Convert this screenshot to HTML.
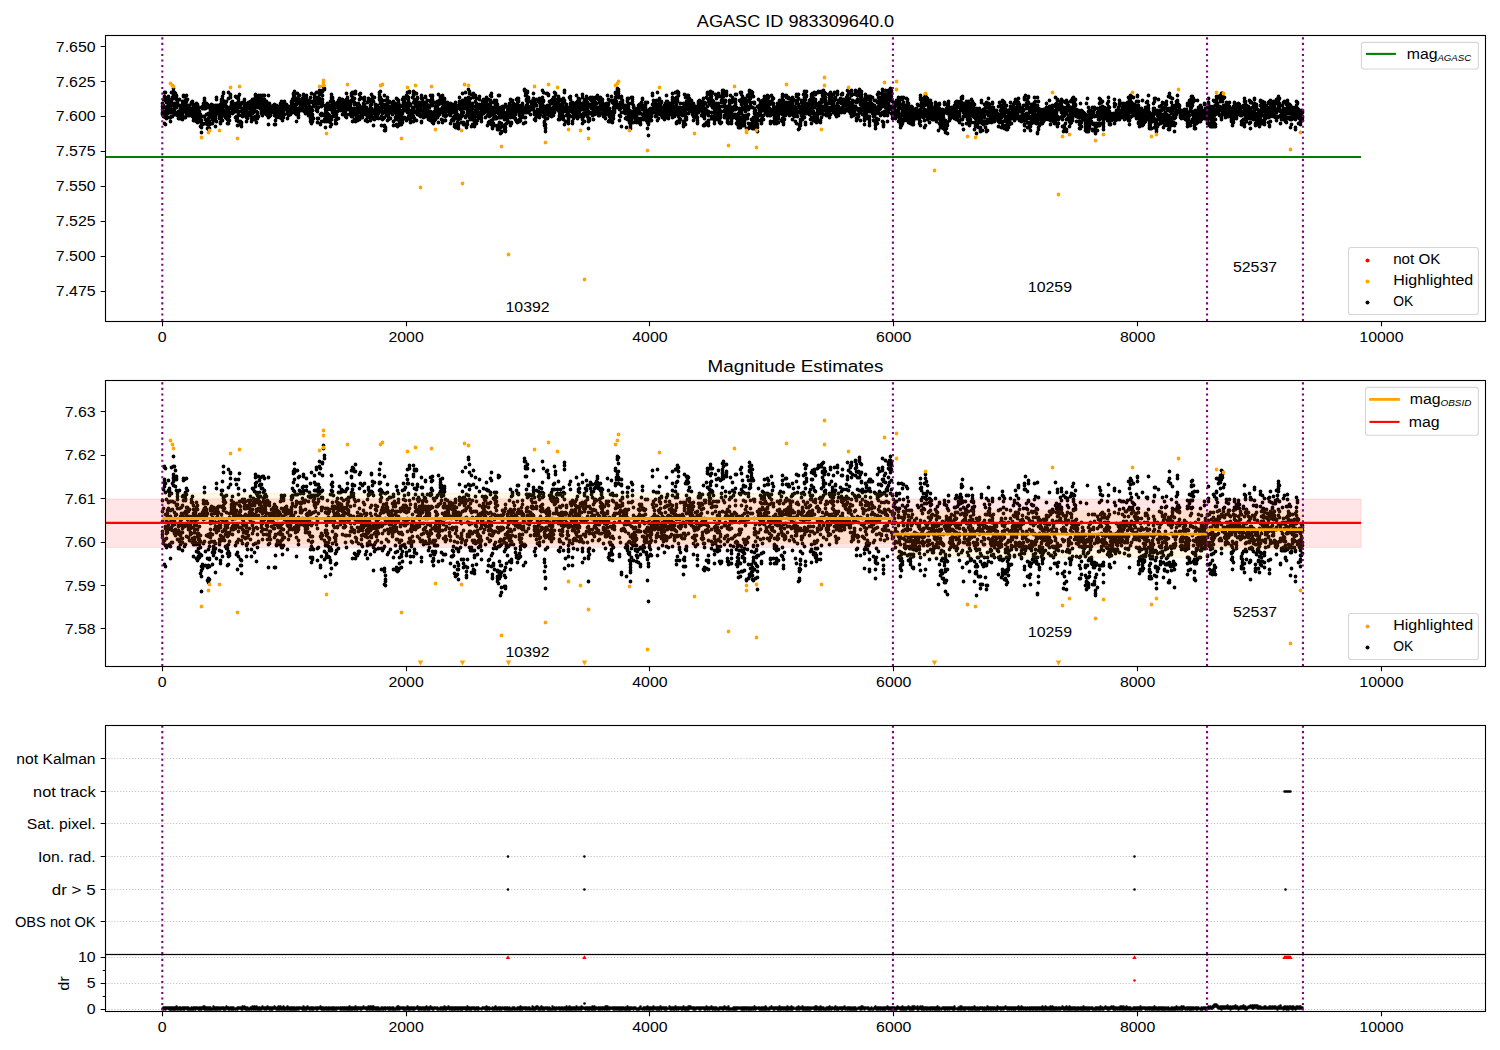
<!DOCTYPE html><html><head><meta charset="utf-8"><style>html,body{margin:0;padding:0;background:#fff}svg{display:block}text{font-family:"Liberation Sans",sans-serif;fill:#000}</style></head><body>
<svg width="1500" height="1050" viewBox="0 0 1500 1050">
<rect width="1500" height="1050" fill="#fff"/>
<defs>
<clipPath id="c1"><rect x="105.5" y="35.5" width="1380.0" height="286.0"/></clipPath>
<clipPath id="c2"><rect x="105.5" y="380.5" width="1380.0" height="286.0"/></clipPath>
<clipPath id="c3"><rect x="105.5" y="725.5" width="1380.0" height="229.0"/></clipPath>
<clipPath id="c4"><rect x="105.5" y="954.5" width="1380.0" height="57.0"/></clipPath>
</defs>
<text x="795.5" y="26.5" font-size="16.67" text-anchor="middle" textLength="197.36" lengthAdjust="spacingAndGlyphs">AGASC ID 983309640.0</text>
<text x="795.5" y="372" font-size="16.67" text-anchor="middle" textLength="175.93" lengthAdjust="spacingAndGlyphs">Magnitude Estimates</text>
<g clip-path="url(#c1)">
<path d="M162.5 114.5h0M162.5 103.5h0M162.5 109.5h0M162.5 112.5h0M162.5 113.5h0M162.5 106.5h0M163.5 115.5h0M163.5 116.5h0M163.5 99.5h0M163.5 105.5h0M164.5 96.5h0M164.5 98.5h0M164.5 92.5h0M164.5 115.5h0M164.5 123.5h0M164.5 97.5h0M165.5 92.5h0M165.5 97.5h0M165.5 117.5h0M165.5 111.5h0M165.5 124.5h0M165.5 107.5h0M165.5 100.5h0M166.5 102.5h0M166.5 118.5h0M166.5 109.5h0M166.5 112.5h0M166.5 115.5h0M166.5 117.5h0M166.5 113.5h0M167.5 113.5h0M167.5 112.5h0M167.5 106.5h0M167.5 111.5h0M167.5 108.5h0M167.5 107.5h0M168.5 110.5h0M168.5 105.5h0M168.5 106.5h0M168.5 103.5h0M168.5 96.5h0M168.5 99.5h0M169.5 100.5h0M169.5 101.5h0M169.5 99.5h0M169.5 112.5h0M169.5 117.5h0M169.5 110.5h0M170.5 103.5h0M170.5 121.5h0M170.5 117.5h0M170.5 108.5h0M170.5 106.5h0M170.5 112.5h0M171.5 109.5h0M171.5 111.5h0M171.5 116.5h0M171.5 92.5h0M171.5 100.5h0M172.5 105.5h0M172.5 103.5h0M172.5 111.5h0M172.5 112.5h0M172.5 116.5h0M172.5 97.5h0M173.5 96.5h0M173.5 95.5h0M173.5 91.5h0M173.5 98.5h0M173.5 88.5h0M173.5 94.5h0M174.5 92.5h0M174.5 103.5h0M174.5 110.5h0M174.5 109.5h0M174.5 113.5h0M174.5 106.5h0M175.5 114.5h0M175.5 112.5h0M175.5 107.5h0M175.5 98.5h0M175.5 93.5h0M176.5 96.5h0M176.5 99.5h0M176.5 95.5h0M176.5 104.5h0M176.5 107.5h0M177.5 100.5h0M177.5 104.5h0M177.5 115.5h0M177.5 102.5h0M177.5 105.5h0M177.5 101.5h0M177.5 113.5h0M178.5 118.5h0M178.5 115.5h0M178.5 112.5h0M178.5 111.5h0M178.5 113.5h0M179.5 115.5h0M179.5 105.5h0M179.5 99.5h0M179.5 116.5h0M179.5 114.5h0M179.5 118.5h0M180.5 109.5h0M180.5 114.5h0M180.5 113.5h0M180.5 108.5h0M180.5 117.5h0M180.5 110.5h0M181.5 115.5h0M181.5 111.5h0M181.5 105.5h0M181.5 109.5h0M181.5 108.5h0M181.5 107.5h0M181.5 113.5h0M182.5 119.5h0M182.5 116.5h0M182.5 104.5h0M182.5 115.5h0M182.5 108.5h0M182.5 111.5h0M182.5 101.5h0M182.5 113.5h0M183.5 110.5h0M183.5 107.5h0M183.5 95.5h0M183.5 103.5h0M183.5 96.5h0M183.5 101.5h0M184.5 101.5h0M184.5 96.5h0M184.5 111.5h0M184.5 117.5h0M184.5 108.5h0M185.5 102.5h0M185.5 100.5h0M185.5 106.5h0M185.5 117.5h0M185.5 101.5h0M185.5 103.5h0M185.5 110.5h0M186.5 99.5h0M186.5 105.5h0M186.5 95.5h0M186.5 101.5h0M186.5 107.5h0M186.5 114.5h0M186.5 110.5h0M187.5 108.5h0M187.5 105.5h0M187.5 110.5h0M187.5 99.5h0M188.5 105.5h0M188.5 110.5h0M188.5 106.5h0M188.5 115.5h0M188.5 112.5h0M188.5 108.5h0M188.5 111.5h0M189.5 105.5h0M189.5 110.5h0M189.5 115.5h0M189.5 111.5h0M189.5 108.5h0M189.5 112.5h0M190.5 113.5h0M190.5 108.5h0M190.5 111.5h0M190.5 110.5h0M191.5 108.5h0M191.5 109.5h0M191.5 113.5h0M191.5 103.5h0M191.5 102.5h0M192.5 101.5h0M192.5 108.5h0M192.5 115.5h0M192.5 103.5h0M192.5 116.5h0M193.5 107.5h0M193.5 105.5h0M193.5 108.5h0M193.5 120.5h0M193.5 117.5h0M193.5 111.5h0M193.5 104.5h0M193.5 109.5h0M194.5 114.5h0M194.5 117.5h0M194.5 111.5h0M194.5 112.5h0M194.5 113.5h0M194.5 116.5h0M194.5 115.5h0M195.5 116.5h0M195.5 108.5h0M195.5 107.5h0M195.5 109.5h0M196.5 103.5h0M196.5 105.5h0M196.5 108.5h0M196.5 111.5h0M196.5 119.5h0M196.5 121.5h0M196.5 117.5h0M197.5 106.5h0M197.5 104.5h0M197.5 113.5h0M197.5 112.5h0M197.5 122.5h0M197.5 114.5h0M197.5 109.5h0M198.5 114.5h0M198.5 121.5h0M198.5 118.5h0M198.5 119.5h0M198.5 116.5h0M198.5 113.5h0M198.5 115.5h0M198.5 120.5h0M199.5 107.5h0M199.5 115.5h0M199.5 121.5h0M199.5 111.5h0M199.5 117.5h0M200.5 120.5h0M200.5 126.5h0M200.5 114.5h0M200.5 116.5h0M200.5 118.5h0M201.5 127.5h0M201.5 125.5h0M201.5 132.5h0M201.5 124.5h0M201.5 120.5h0M202.5 124.5h0M202.5 106.5h0M202.5 108.5h0M202.5 107.5h0M202.5 123.5h0M203.5 116.5h0M203.5 108.5h0M203.5 103.5h0M203.5 107.5h0M203.5 106.5h0M204.5 100.5h0M204.5 98.5h0M204.5 104.5h0M204.5 103.5h0M204.5 108.5h0M204.5 105.5h0M204.5 116.5h0M205.5 119.5h0M205.5 123.5h0M205.5 108.5h0M205.5 105.5h0M205.5 106.5h0M206.5 107.5h0M206.5 114.5h0M206.5 103.5h0M206.5 105.5h0M206.5 106.5h0M207.5 104.5h0M207.5 124.5h0M207.5 107.5h0M207.5 121.5h0M207.5 128.5h0M208.5 113.5h0M208.5 118.5h0M208.5 129.5h0M208.5 128.5h0M208.5 114.5h0M208.5 124.5h0M209.5 117.5h0M209.5 128.5h0M209.5 121.5h0M209.5 124.5h0M209.5 116.5h0M209.5 114.5h0M210.5 114.5h0M210.5 112.5h0M210.5 113.5h0M210.5 109.5h0M210.5 106.5h0M210.5 105.5h0M210.5 110.5h0M211.5 106.5h0M211.5 107.5h0M211.5 105.5h0M211.5 116.5h0M211.5 104.5h0M211.5 113.5h0M212.5 106.5h0M212.5 123.5h0M212.5 108.5h0M212.5 119.5h0M212.5 113.5h0M212.5 109.5h0M213.5 117.5h0M213.5 119.5h0M213.5 120.5h0M213.5 118.5h0M213.5 105.5h0M213.5 109.5h0M214.5 107.5h0M214.5 116.5h0M214.5 119.5h0M214.5 112.5h0M214.5 106.5h0M215.5 108.5h0M215.5 105.5h0M215.5 110.5h0M215.5 118.5h0M215.5 116.5h0M215.5 126.5h0M215.5 111.5h0M216.5 121.5h0M216.5 113.5h0M216.5 99.5h0M216.5 105.5h0M216.5 97.5h0M216.5 112.5h0M217.5 105.5h0M217.5 106.5h0M217.5 111.5h0M217.5 108.5h0M217.5 107.5h0M218.5 106.5h0M218.5 108.5h0M218.5 110.5h0M218.5 105.5h0M218.5 111.5h0M218.5 112.5h0M219.5 117.5h0M219.5 116.5h0M219.5 118.5h0M219.5 115.5h0M220.5 122.5h0M220.5 111.5h0M220.5 123.5h0M220.5 114.5h0M220.5 104.5h0M221.5 119.5h0M221.5 116.5h0M221.5 114.5h0M221.5 109.5h0M221.5 108.5h0M221.5 101.5h0M221.5 107.5h0M221.5 99.5h0M222.5 105.5h0M222.5 108.5h0M222.5 112.5h0M222.5 109.5h0M222.5 120.5h0M222.5 96.5h0M222.5 99.5h0M223.5 93.5h0M223.5 115.5h0M223.5 103.5h0M223.5 92.5h0M223.5 104.5h0M223.5 102.5h0M223.5 106.5h0M224.5 105.5h0M224.5 103.5h0M224.5 112.5h0M224.5 101.5h0M224.5 115.5h0M224.5 110.5h0M225.5 110.5h0M225.5 117.5h0M225.5 112.5h0M225.5 111.5h0M225.5 113.5h0M225.5 103.5h0M226.5 101.5h0M226.5 118.5h0M226.5 109.5h0M226.5 106.5h0M226.5 113.5h0M227.5 114.5h0M227.5 111.5h0M227.5 118.5h0M227.5 117.5h0M227.5 123.5h0M227.5 110.5h0M227.5 119.5h0M228.5 117.5h0M228.5 114.5h0M228.5 119.5h0M228.5 110.5h0M228.5 98.5h0M228.5 123.5h0M228.5 92.5h0M228.5 120.5h0M229.5 120.5h0M229.5 113.5h0M229.5 116.5h0M229.5 107.5h0M229.5 108.5h0M230.5 97.5h0M230.5 95.5h0M230.5 94.5h0M231.5 106.5h0M231.5 102.5h0M231.5 105.5h0M231.5 104.5h0M231.5 112.5h0M232.5 107.5h0M232.5 111.5h0M232.5 106.5h0M232.5 113.5h0M232.5 109.5h0M232.5 108.5h0M232.5 101.5h0M233.5 106.5h0M233.5 103.5h0M233.5 108.5h0M233.5 111.5h0M233.5 112.5h0M234.5 106.5h0M234.5 111.5h0M234.5 107.5h0M234.5 104.5h0M234.5 110.5h0M235.5 111.5h0M235.5 108.5h0M235.5 106.5h0M235.5 117.5h0M235.5 96.5h0M235.5 107.5h0M236.5 103.5h0M236.5 106.5h0M236.5 97.5h0M236.5 107.5h0M236.5 111.5h0M236.5 116.5h0M236.5 120.5h0M237.5 125.5h0M237.5 119.5h0M237.5 116.5h0M237.5 110.5h0M237.5 107.5h0M238.5 115.5h0M238.5 121.5h0M238.5 112.5h0M238.5 101.5h0M238.5 99.5h0M238.5 96.5h0M239.5 94.5h0M239.5 103.5h0M239.5 104.5h0M239.5 106.5h0M239.5 111.5h0M240.5 104.5h0M240.5 106.5h0M240.5 103.5h0M240.5 107.5h0M240.5 121.5h0M240.5 124.5h0M241.5 126.5h0M241.5 122.5h0M241.5 123.5h0M241.5 111.5h0M241.5 115.5h0M242.5 112.5h0M242.5 102.5h0M242.5 109.5h0M242.5 116.5h0M242.5 114.5h0M242.5 110.5h0M243.5 112.5h0M243.5 110.5h0M243.5 109.5h0M243.5 108.5h0M243.5 113.5h0M243.5 103.5h0M244.5 115.5h0M244.5 103.5h0M244.5 105.5h0M244.5 102.5h0M244.5 99.5h0M245.5 103.5h0M245.5 104.5h0M245.5 110.5h0M245.5 113.5h0M245.5 105.5h0M245.5 108.5h0M245.5 107.5h0M245.5 115.5h0M246.5 111.5h0M246.5 117.5h0M246.5 121.5h0M246.5 105.5h0M246.5 113.5h0M247.5 118.5h0M247.5 105.5h0M247.5 113.5h0M247.5 116.5h0M247.5 114.5h0M247.5 108.5h0M248.5 104.5h0M248.5 114.5h0M248.5 102.5h0M248.5 108.5h0M248.5 107.5h0M249.5 112.5h0M249.5 104.5h0M249.5 103.5h0M249.5 105.5h0M249.5 106.5h0M250.5 107.5h0M250.5 106.5h0M250.5 109.5h0M250.5 101.5h0M250.5 102.5h0M250.5 115.5h0M251.5 106.5h0M251.5 121.5h0M251.5 107.5h0M251.5 118.5h0M251.5 104.5h0M252.5 113.5h0M252.5 99.5h0M252.5 107.5h0M252.5 110.5h0M252.5 104.5h0M252.5 105.5h0M253.5 112.5h0M253.5 102.5h0M253.5 103.5h0M253.5 117.5h0M253.5 110.5h0M253.5 99.5h0M253.5 111.5h0M254.5 102.5h0M254.5 104.5h0M254.5 108.5h0M254.5 119.5h0M254.5 103.5h0M254.5 100.5h0M255.5 98.5h0M255.5 102.5h0M255.5 107.5h0M255.5 94.5h0M255.5 97.5h0M255.5 95.5h0M255.5 116.5h0M256.5 122.5h0M256.5 103.5h0M256.5 97.5h0M256.5 100.5h0M256.5 111.5h0M256.5 106.5h0M256.5 105.5h0M257.5 102.5h0M257.5 118.5h0M257.5 113.5h0M257.5 112.5h0M257.5 101.5h0M257.5 103.5h0M258.5 116.5h0M258.5 105.5h0M258.5 102.5h0M258.5 107.5h0M258.5 95.5h0M259.5 96.5h0M259.5 104.5h0M259.5 106.5h0M259.5 98.5h0M259.5 103.5h0M259.5 100.5h0M260.5 95.5h0M260.5 97.5h0M260.5 108.5h0M260.5 103.5h0M260.5 106.5h0M260.5 101.5h0M260.5 105.5h0M261.5 97.5h0M261.5 99.5h0M261.5 110.5h0M261.5 105.5h0M261.5 113.5h0M261.5 109.5h0M261.5 111.5h0M262.5 115.5h0M262.5 105.5h0M262.5 106.5h0M262.5 108.5h0M262.5 110.5h0M262.5 107.5h0M262.5 99.5h0M262.5 95.5h0M263.5 102.5h0M263.5 103.5h0M263.5 113.5h0M263.5 109.5h0M263.5 106.5h0M263.5 112.5h0M263.5 95.5h0M263.5 100.5h0M264.5 101.5h0M264.5 95.5h0M264.5 104.5h0M264.5 103.5h0M264.5 105.5h0M264.5 99.5h0M264.5 108.5h0M265.5 101.5h0M265.5 106.5h0M265.5 104.5h0M265.5 108.5h0M265.5 103.5h0M266.5 112.5h0M266.5 104.5h0M266.5 114.5h0M266.5 111.5h0M266.5 107.5h0M266.5 101.5h0M267.5 115.5h0M267.5 110.5h0M267.5 111.5h0M267.5 103.5h0M267.5 107.5h0M268.5 103.5h0M268.5 95.5h0M268.5 109.5h0M268.5 124.5h0M268.5 117.5h0M269.5 114.5h0M269.5 103.5h0M269.5 113.5h0M269.5 108.5h0M269.5 112.5h0M269.5 109.5h0M269.5 116.5h0M269.5 104.5h0M270.5 107.5h0M270.5 115.5h0M270.5 109.5h0M270.5 113.5h0M271.5 107.5h0M271.5 106.5h0M271.5 111.5h0M271.5 108.5h0M271.5 109.5h0M272.5 108.5h0M272.5 109.5h0M272.5 107.5h0M273.5 105.5h0M273.5 106.5h0M273.5 107.5h0M273.5 112.5h0M273.5 110.5h0M274.5 112.5h0M274.5 110.5h0M274.5 115.5h0M274.5 104.5h0M274.5 124.5h0M274.5 108.5h0M274.5 107.5h0M275.5 120.5h0M275.5 124.5h0M275.5 113.5h0M275.5 114.5h0M275.5 105.5h0M276.5 105.5h0M276.5 108.5h0M276.5 106.5h0M276.5 117.5h0M277.5 116.5h0M277.5 110.5h0M277.5 106.5h0M277.5 115.5h0M277.5 111.5h0M277.5 108.5h0M278.5 107.5h0M278.5 111.5h0M278.5 113.5h0M278.5 108.5h0M278.5 106.5h0M279.5 111.5h0M279.5 116.5h0M279.5 107.5h0M279.5 117.5h0M279.5 106.5h0M280.5 103.5h0M280.5 117.5h0M280.5 116.5h0M280.5 113.5h0M280.5 107.5h0M281.5 110.5h0M281.5 115.5h0M281.5 102.5h0M281.5 105.5h0M281.5 101.5h0M281.5 112.5h0M281.5 118.5h0M282.5 110.5h0M282.5 118.5h0M282.5 115.5h0M282.5 114.5h0M282.5 108.5h0M282.5 120.5h0M283.5 112.5h0M283.5 103.5h0M283.5 117.5h0M283.5 106.5h0M283.5 102.5h0M283.5 108.5h0M284.5 105.5h0M284.5 101.5h0M284.5 114.5h0M284.5 109.5h0M285.5 107.5h0M285.5 105.5h0M285.5 106.5h0M286.5 109.5h0M286.5 106.5h0M286.5 104.5h0M286.5 105.5h0M287.5 106.5h0M287.5 107.5h0M287.5 108.5h0M287.5 113.5h0M287.5 111.5h0M287.5 110.5h0M287.5 118.5h0M288.5 106.5h0M288.5 109.5h0M288.5 115.5h0M288.5 111.5h0M289.5 109.5h0M289.5 107.5h0M289.5 114.5h0M289.5 112.5h0M289.5 110.5h0M290.5 110.5h0M290.5 111.5h0M290.5 106.5h0M290.5 114.5h0M290.5 108.5h0M291.5 105.5h0M291.5 108.5h0M291.5 107.5h0M291.5 106.5h0M291.5 102.5h0M291.5 101.5h0M292.5 107.5h0M292.5 101.5h0M292.5 103.5h0M292.5 102.5h0M292.5 109.5h0M292.5 104.5h0M292.5 112.5h0M292.5 99.5h0M293.5 97.5h0M293.5 99.5h0M293.5 94.5h0M293.5 107.5h0M293.5 93.5h0M294.5 111.5h0M294.5 93.5h0M294.5 91.5h0M294.5 99.5h0M294.5 96.5h0M295.5 104.5h0M295.5 100.5h0M295.5 109.5h0M295.5 106.5h0M295.5 113.5h0M295.5 112.5h0M296.5 112.5h0M296.5 111.5h0M296.5 104.5h0M296.5 114.5h0M296.5 103.5h0M296.5 121.5h0M297.5 109.5h0M297.5 111.5h0M297.5 103.5h0M297.5 101.5h0M297.5 93.5h0M297.5 98.5h0M297.5 113.5h0M298.5 117.5h0M298.5 108.5h0M298.5 115.5h0M298.5 112.5h0M298.5 111.5h0M298.5 110.5h0M298.5 95.5h0M299.5 110.5h0M299.5 109.5h0M299.5 99.5h0M299.5 95.5h0M300.5 103.5h0M300.5 104.5h0M300.5 110.5h0M300.5 105.5h0M300.5 100.5h0M300.5 106.5h0M301.5 109.5h0M301.5 106.5h0M301.5 103.5h0M302.5 103.5h0M302.5 110.5h0M302.5 102.5h0M302.5 106.5h0M302.5 98.5h0M302.5 108.5h0M302.5 100.5h0M303.5 102.5h0M303.5 100.5h0M303.5 94.5h0M303.5 98.5h0M303.5 95.5h0M303.5 99.5h0M304.5 111.5h0M304.5 110.5h0M304.5 103.5h0M304.5 109.5h0M305.5 111.5h0M305.5 110.5h0M305.5 102.5h0M305.5 109.5h0M305.5 112.5h0M305.5 113.5h0M305.5 105.5h0M306.5 107.5h0M306.5 98.5h0M306.5 99.5h0M306.5 111.5h0M306.5 110.5h0M306.5 109.5h0M306.5 95.5h0M307.5 107.5h0M307.5 109.5h0M307.5 111.5h0M307.5 108.5h0M307.5 112.5h0M307.5 113.5h0M308.5 109.5h0M308.5 115.5h0M308.5 103.5h0M308.5 107.5h0M308.5 101.5h0M308.5 110.5h0M309.5 100.5h0M309.5 106.5h0M309.5 113.5h0M309.5 109.5h0M310.5 114.5h0M310.5 110.5h0M310.5 107.5h0M310.5 97.5h0M310.5 102.5h0M310.5 118.5h0M310.5 121.5h0M311.5 117.5h0M311.5 93.5h0M311.5 116.5h0M311.5 111.5h0M311.5 107.5h0M311.5 101.5h0M311.5 123.5h0M312.5 118.5h0M312.5 121.5h0M312.5 114.5h0M312.5 116.5h0M312.5 110.5h0M313.5 101.5h0M313.5 103.5h0M313.5 118.5h0M313.5 106.5h0M314.5 94.5h0M314.5 104.5h0M314.5 97.5h0M314.5 99.5h0M314.5 102.5h0M314.5 103.5h0M315.5 99.5h0M315.5 106.5h0M315.5 97.5h0M315.5 101.5h0M315.5 104.5h0M315.5 105.5h0M316.5 99.5h0M316.5 103.5h0M316.5 110.5h0M316.5 92.5h0M316.5 108.5h0M316.5 97.5h0M317.5 103.5h0M317.5 111.5h0M317.5 109.5h0M317.5 118.5h0M317.5 101.5h0M317.5 122.5h0M318.5 99.5h0M318.5 100.5h0M318.5 118.5h0M318.5 103.5h0M318.5 107.5h0M318.5 97.5h0M318.5 102.5h0M318.5 101.5h0M319.5 90.5h0M319.5 100.5h0M319.5 98.5h0M319.5 94.5h0M319.5 92.5h0M320.5 123.5h0M320.5 114.5h0M320.5 124.5h0M320.5 92.5h0M321.5 99.5h0M321.5 105.5h0M321.5 115.5h0M321.5 113.5h0M321.5 102.5h0M321.5 106.5h0M321.5 121.5h0M322.5 114.5h0M322.5 99.5h0M322.5 105.5h0M322.5 102.5h0M322.5 95.5h0M322.5 90.5h0M322.5 91.5h0M323.5 85.5h0M323.5 86.5h0M324.5 88.5h0M324.5 121.5h0M324.5 115.5h0M324.5 89.5h0M324.5 119.5h0M325.5 127.5h0M325.5 113.5h0M325.5 117.5h0M325.5 112.5h0M325.5 106.5h0M325.5 116.5h0M325.5 105.5h0M325.5 109.5h0M326.5 120.5h0M326.5 121.5h0M326.5 117.5h0M326.5 114.5h0M326.5 112.5h0M326.5 111.5h0M327.5 107.5h0M327.5 108.5h0M327.5 105.5h0M327.5 103.5h0M327.5 106.5h0M327.5 113.5h0M327.5 109.5h0M328.5 121.5h0M328.5 107.5h0M328.5 117.5h0M328.5 116.5h0M328.5 114.5h0M328.5 108.5h0M329.5 119.5h0M329.5 106.5h0M329.5 115.5h0M329.5 105.5h0M329.5 118.5h0M329.5 121.5h0M330.5 122.5h0M330.5 101.5h0M330.5 118.5h0M330.5 109.5h0M330.5 126.5h0M330.5 119.5h0M331.5 118.5h0M331.5 124.5h0M331.5 99.5h0M331.5 119.5h0M331.5 108.5h0M331.5 100.5h0M331.5 94.5h0M331.5 97.5h0M332.5 98.5h0M332.5 112.5h0M332.5 103.5h0M332.5 105.5h0M332.5 97.5h0M332.5 100.5h0M332.5 116.5h0M333.5 108.5h0M333.5 105.5h0M333.5 101.5h0M333.5 106.5h0M333.5 111.5h0M334.5 114.5h0M334.5 104.5h0M334.5 107.5h0M334.5 111.5h0M334.5 108.5h0M334.5 109.5h0M335.5 115.5h0M335.5 120.5h0M335.5 116.5h0M335.5 113.5h0M335.5 107.5h0M335.5 123.5h0M336.5 123.5h0M336.5 117.5h0M336.5 114.5h0M336.5 103.5h0M336.5 105.5h0M336.5 119.5h0M337.5 111.5h0M337.5 103.5h0M337.5 104.5h0M337.5 106.5h0M337.5 107.5h0M337.5 102.5h0M338.5 100.5h0M338.5 104.5h0M338.5 108.5h0M338.5 107.5h0M338.5 106.5h0M338.5 118.5h0M339.5 104.5h0M339.5 98.5h0M339.5 105.5h0M339.5 103.5h0M340.5 110.5h0M340.5 108.5h0M340.5 109.5h0M340.5 105.5h0M340.5 104.5h0M340.5 100.5h0M341.5 104.5h0M341.5 106.5h0M341.5 105.5h0M341.5 108.5h0M341.5 102.5h0M341.5 99.5h0M342.5 106.5h0M342.5 109.5h0M342.5 100.5h0M342.5 114.5h0M342.5 99.5h0M342.5 108.5h0M342.5 105.5h0M342.5 107.5h0M343.5 108.5h0M343.5 105.5h0M343.5 111.5h0M343.5 103.5h0M343.5 107.5h0M344.5 108.5h0M344.5 110.5h0M344.5 111.5h0M344.5 105.5h0M344.5 106.5h0M345.5 107.5h0M345.5 111.5h0M345.5 100.5h0M345.5 108.5h0M345.5 116.5h0M345.5 114.5h0M346.5 99.5h0M346.5 105.5h0M346.5 102.5h0M346.5 114.5h0M346.5 117.5h0M346.5 109.5h0M346.5 93.5h0M347.5 97.5h0M347.5 98.5h0M347.5 107.5h0M347.5 104.5h0M347.5 102.5h0M347.5 105.5h0M348.5 101.5h0M348.5 109.5h0M348.5 106.5h0M348.5 102.5h0M348.5 103.5h0M348.5 107.5h0M349.5 108.5h0M349.5 114.5h0M349.5 109.5h0M349.5 101.5h0M350.5 104.5h0M350.5 108.5h0M350.5 110.5h0M350.5 107.5h0M350.5 112.5h0M351.5 111.5h0M351.5 101.5h0M351.5 95.5h0M351.5 116.5h0M351.5 113.5h0M351.5 93.5h0M351.5 100.5h0M352.5 92.5h0M352.5 116.5h0M352.5 121.5h0M352.5 101.5h0M352.5 97.5h0M352.5 112.5h0M352.5 99.5h0M352.5 98.5h0M353.5 108.5h0M353.5 101.5h0M353.5 93.5h0M353.5 100.5h0M353.5 92.5h0M354.5 102.5h0M354.5 119.5h0M354.5 104.5h0M354.5 112.5h0M354.5 98.5h0M354.5 113.5h0M354.5 93.5h0M354.5 110.5h0M355.5 114.5h0M355.5 91.5h0M355.5 120.5h0M355.5 93.5h0M355.5 103.5h0M355.5 121.5h0M355.5 109.5h0M356.5 108.5h0M356.5 115.5h0M356.5 109.5h0M356.5 116.5h0M356.5 120.5h0M357.5 120.5h0M357.5 106.5h0M357.5 111.5h0M357.5 108.5h0M357.5 109.5h0M358.5 112.5h0M358.5 103.5h0M358.5 119.5h0M358.5 116.5h0M359.5 119.5h0M359.5 112.5h0M359.5 105.5h0M359.5 99.5h0M359.5 108.5h0M359.5 94.5h0M360.5 93.5h0M360.5 107.5h0M360.5 111.5h0M360.5 109.5h0M360.5 97.5h0M360.5 112.5h0M361.5 117.5h0M361.5 115.5h0M361.5 111.5h0M361.5 107.5h0M361.5 114.5h0M361.5 109.5h0M361.5 110.5h0M362.5 111.5h0M362.5 98.5h0M362.5 117.5h0M362.5 112.5h0M362.5 109.5h0M362.5 114.5h0M363.5 109.5h0M363.5 111.5h0M363.5 110.5h0M363.5 113.5h0M363.5 103.5h0M363.5 106.5h0M364.5 109.5h0M364.5 110.5h0M364.5 107.5h0M364.5 104.5h0M364.5 100.5h0M364.5 97.5h0M365.5 110.5h0M365.5 114.5h0M365.5 108.5h0M365.5 111.5h0M365.5 120.5h0M366.5 107.5h0M366.5 110.5h0M366.5 109.5h0M366.5 113.5h0M366.5 119.5h0M366.5 112.5h0M367.5 116.5h0M367.5 112.5h0M367.5 121.5h0M367.5 117.5h0M367.5 113.5h0M367.5 115.5h0M367.5 102.5h0M368.5 111.5h0M368.5 101.5h0M368.5 99.5h0M368.5 98.5h0M368.5 113.5h0M369.5 116.5h0M369.5 99.5h0M369.5 110.5h0M369.5 101.5h0M369.5 109.5h0M369.5 117.5h0M370.5 112.5h0M370.5 114.5h0M370.5 117.5h0M370.5 120.5h0M370.5 107.5h0M370.5 105.5h0M371.5 114.5h0M371.5 94.5h0M371.5 108.5h0M371.5 111.5h0M371.5 100.5h0M371.5 104.5h0M372.5 100.5h0M372.5 111.5h0M372.5 96.5h0M372.5 98.5h0M373.5 117.5h0M373.5 110.5h0M373.5 125.5h0M373.5 118.5h0M373.5 101.5h0M374.5 113.5h0M374.5 97.5h0M374.5 111.5h0M374.5 119.5h0M374.5 117.5h0M375.5 118.5h0M375.5 112.5h0M375.5 116.5h0M375.5 113.5h0M375.5 105.5h0M375.5 107.5h0M375.5 104.5h0M376.5 110.5h0M376.5 109.5h0M376.5 106.5h0M376.5 114.5h0M376.5 111.5h0M377.5 111.5h0M377.5 113.5h0M377.5 110.5h0M377.5 115.5h0M377.5 105.5h0M377.5 109.5h0M377.5 108.5h0M378.5 113.5h0M378.5 108.5h0M378.5 111.5h0M378.5 110.5h0M378.5 109.5h0M378.5 118.5h0M379.5 108.5h0M379.5 97.5h0M379.5 99.5h0M379.5 92.5h0M379.5 94.5h0M380.5 97.5h0M380.5 107.5h0M380.5 99.5h0M380.5 101.5h0M380.5 103.5h0M380.5 91.5h0M380.5 102.5h0M381.5 118.5h0M381.5 99.5h0M381.5 110.5h0M381.5 106.5h0M381.5 125.5h0M381.5 102.5h0M381.5 111.5h0M381.5 116.5h0M382.5 119.5h0M382.5 113.5h0M382.5 111.5h0M382.5 105.5h0M382.5 106.5h0M382.5 100.5h0M383.5 104.5h0M383.5 107.5h0M383.5 118.5h0M383.5 106.5h0M383.5 105.5h0M384.5 117.5h0M384.5 95.5h0M384.5 112.5h0M384.5 105.5h0M384.5 125.5h0M384.5 126.5h0M384.5 130.5h0M385.5 130.5h0M385.5 127.5h0M385.5 129.5h0M385.5 128.5h0M385.5 110.5h0M385.5 109.5h0M385.5 108.5h0M385.5 100.5h0M386.5 109.5h0M386.5 104.5h0M386.5 105.5h0M386.5 106.5h0M386.5 115.5h0M387.5 110.5h0M387.5 102.5h0M387.5 100.5h0M387.5 97.5h0M387.5 105.5h0M387.5 112.5h0M387.5 120.5h0M388.5 107.5h0M388.5 113.5h0M388.5 119.5h0M388.5 116.5h0M389.5 109.5h0M389.5 110.5h0M389.5 101.5h0M389.5 106.5h0M389.5 107.5h0M390.5 102.5h0M390.5 110.5h0M390.5 118.5h0M390.5 107.5h0M390.5 108.5h0M390.5 112.5h0M391.5 110.5h0M391.5 107.5h0M391.5 108.5h0M391.5 109.5h0M392.5 103.5h0M392.5 107.5h0M392.5 108.5h0M392.5 112.5h0M392.5 106.5h0M392.5 113.5h0M392.5 114.5h0M393.5 111.5h0M393.5 125.5h0M393.5 101.5h0M393.5 112.5h0M393.5 121.5h0M393.5 104.5h0M394.5 103.5h0M394.5 104.5h0M394.5 109.5h0M394.5 112.5h0M394.5 111.5h0M395.5 119.5h0M395.5 107.5h0M395.5 104.5h0M395.5 106.5h0M395.5 117.5h0M395.5 110.5h0M395.5 103.5h0M396.5 115.5h0M396.5 98.5h0M396.5 124.5h0M396.5 108.5h0M396.5 125.5h0M396.5 112.5h0M396.5 111.5h0M397.5 108.5h0M397.5 115.5h0M397.5 109.5h0M397.5 126.5h0M397.5 119.5h0M397.5 99.5h0M397.5 106.5h0M398.5 102.5h0M398.5 109.5h0M398.5 113.5h0M398.5 103.5h0M398.5 108.5h0M398.5 100.5h0M398.5 125.5h0M399.5 124.5h0M399.5 116.5h0M399.5 123.5h0M399.5 121.5h0M399.5 113.5h0M400.5 105.5h0M400.5 106.5h0M400.5 110.5h0M400.5 111.5h0M400.5 115.5h0M400.5 118.5h0M400.5 117.5h0M401.5 124.5h0M401.5 120.5h0M401.5 113.5h0M401.5 116.5h0M402.5 122.5h0M402.5 117.5h0M402.5 110.5h0M402.5 105.5h0M402.5 119.5h0M402.5 99.5h0M402.5 113.5h0M403.5 106.5h0M403.5 102.5h0M403.5 97.5h0M403.5 104.5h0M403.5 109.5h0M404.5 106.5h0M404.5 110.5h0M404.5 101.5h0M404.5 117.5h0M404.5 104.5h0M404.5 99.5h0M405.5 109.5h0M405.5 110.5h0M405.5 103.5h0M405.5 118.5h0M405.5 105.5h0M405.5 104.5h0M405.5 106.5h0M405.5 98.5h0M406.5 95.5h0M406.5 104.5h0M406.5 119.5h0M406.5 120.5h0M406.5 106.5h0M406.5 110.5h0M407.5 112.5h0M407.5 92.5h0M407.5 110.5h0M407.5 108.5h0M407.5 97.5h0M407.5 96.5h0M408.5 101.5h0M408.5 97.5h0M408.5 100.5h0M408.5 106.5h0M408.5 109.5h0M408.5 105.5h0M408.5 116.5h0M409.5 115.5h0M409.5 91.5h0M409.5 118.5h0M409.5 92.5h0M409.5 105.5h0M409.5 103.5h0M410.5 115.5h0M410.5 104.5h0M410.5 120.5h0M410.5 122.5h0M410.5 112.5h0M411.5 117.5h0M411.5 111.5h0M411.5 113.5h0M411.5 112.5h0M411.5 110.5h0M411.5 116.5h0M412.5 110.5h0M412.5 111.5h0M412.5 109.5h0M412.5 114.5h0M412.5 107.5h0M412.5 112.5h0M412.5 97.5h0M413.5 116.5h0M413.5 111.5h0M413.5 121.5h0M413.5 102.5h0M413.5 95.5h0M413.5 94.5h0M413.5 91.5h0M413.5 109.5h0M414.5 93.5h0M414.5 99.5h0M414.5 92.5h0M414.5 112.5h0M414.5 118.5h0M414.5 119.5h0M415.5 111.5h0M415.5 112.5h0M415.5 106.5h0M415.5 101.5h0M415.5 104.5h0M415.5 105.5h0M416.5 99.5h0M416.5 106.5h0M416.5 120.5h0M416.5 93.5h0M416.5 111.5h0M417.5 97.5h0M417.5 111.5h0M417.5 108.5h0M417.5 98.5h0M417.5 102.5h0M417.5 114.5h0M418.5 102.5h0M418.5 103.5h0M418.5 111.5h0M418.5 106.5h0M418.5 105.5h0M419.5 105.5h0M419.5 111.5h0M419.5 102.5h0M419.5 115.5h0M419.5 109.5h0M419.5 107.5h0M420.5 106.5h0M420.5 116.5h0M420.5 108.5h0M420.5 105.5h0M420.5 110.5h0M420.5 107.5h0M421.5 106.5h0M421.5 98.5h0M421.5 114.5h0M421.5 122.5h0M421.5 105.5h0M421.5 121.5h0M421.5 95.5h0M422.5 106.5h0M422.5 98.5h0M422.5 101.5h0M422.5 105.5h0M422.5 103.5h0M422.5 104.5h0M422.5 115.5h0M423.5 103.5h0M423.5 110.5h0M423.5 113.5h0M423.5 117.5h0M423.5 116.5h0M423.5 112.5h0M423.5 105.5h0M424.5 105.5h0M424.5 111.5h0M424.5 102.5h0M424.5 108.5h0M425.5 108.5h0M425.5 105.5h0M425.5 97.5h0M425.5 96.5h0M425.5 116.5h0M425.5 102.5h0M425.5 111.5h0M426.5 106.5h0M426.5 116.5h0M426.5 113.5h0M426.5 105.5h0M426.5 107.5h0M426.5 103.5h0M427.5 106.5h0M427.5 105.5h0M427.5 110.5h0M427.5 113.5h0M427.5 108.5h0M427.5 100.5h0M428.5 116.5h0M428.5 113.5h0M428.5 105.5h0M428.5 119.5h0M428.5 114.5h0M428.5 106.5h0M429.5 116.5h0M429.5 118.5h0M429.5 107.5h0M429.5 114.5h0M429.5 105.5h0M429.5 115.5h0M430.5 100.5h0M430.5 112.5h0M430.5 111.5h0M430.5 120.5h0M430.5 95.5h0M430.5 105.5h0M430.5 101.5h0M431.5 96.5h0M431.5 99.5h0M431.5 101.5h0M431.5 104.5h0M431.5 116.5h0M431.5 113.5h0M432.5 119.5h0M432.5 105.5h0M432.5 96.5h0M432.5 99.5h0M432.5 95.5h0M432.5 122.5h0M432.5 112.5h0M433.5 102.5h0M433.5 123.5h0M433.5 115.5h0M433.5 122.5h0M433.5 121.5h0M433.5 120.5h0M434.5 117.5h0M434.5 102.5h0M434.5 116.5h0M434.5 111.5h0M434.5 120.5h0M435.5 119.5h0M435.5 115.5h0M435.5 112.5h0M435.5 117.5h0M435.5 108.5h0M435.5 106.5h0M435.5 110.5h0M436.5 112.5h0M436.5 107.5h0M436.5 109.5h0M436.5 111.5h0M436.5 110.5h0M436.5 104.5h0M436.5 102.5h0M436.5 106.5h0M437.5 107.5h0M437.5 114.5h0M437.5 104.5h0M437.5 117.5h0M437.5 101.5h0M437.5 109.5h0M438.5 109.5h0M438.5 115.5h0M438.5 104.5h0M438.5 94.5h0M438.5 122.5h0M438.5 113.5h0M439.5 112.5h0M439.5 110.5h0M439.5 111.5h0M439.5 114.5h0M439.5 100.5h0M440.5 96.5h0M440.5 98.5h0M440.5 103.5h0M440.5 97.5h0M440.5 109.5h0M440.5 100.5h0M441.5 100.5h0M441.5 103.5h0M441.5 99.5h0M441.5 101.5h0M441.5 119.5h0M441.5 98.5h0M442.5 95.5h0M442.5 98.5h0M442.5 107.5h0M442.5 122.5h0M442.5 112.5h0M442.5 100.5h0M442.5 110.5h0M443.5 115.5h0M443.5 101.5h0M443.5 110.5h0M443.5 104.5h0M443.5 120.5h0M443.5 105.5h0M443.5 100.5h0M444.5 100.5h0M444.5 107.5h0M444.5 104.5h0M444.5 98.5h0M444.5 105.5h0M444.5 99.5h0M445.5 114.5h0M445.5 120.5h0M445.5 116.5h0M445.5 108.5h0M445.5 107.5h0M445.5 112.5h0M445.5 102.5h0M445.5 106.5h0M446.5 107.5h0M446.5 104.5h0M446.5 115.5h0M446.5 111.5h0M446.5 108.5h0M447.5 102.5h0M447.5 105.5h0M447.5 106.5h0M447.5 107.5h0M448.5 108.5h0M448.5 105.5h0M448.5 106.5h0M448.5 107.5h0M449.5 104.5h0M449.5 113.5h0M449.5 114.5h0M449.5 111.5h0M449.5 110.5h0M450.5 123.5h0M450.5 115.5h0M450.5 114.5h0M450.5 103.5h0M450.5 105.5h0M450.5 108.5h0M451.5 105.5h0M451.5 104.5h0M451.5 108.5h0M451.5 120.5h0M452.5 108.5h0M452.5 112.5h0M452.5 104.5h0M452.5 111.5h0M452.5 105.5h0M452.5 120.5h0M452.5 119.5h0M453.5 120.5h0M453.5 119.5h0M453.5 108.5h0M453.5 106.5h0M453.5 117.5h0M453.5 107.5h0M454.5 105.5h0M454.5 124.5h0M454.5 116.5h0M454.5 126.5h0M454.5 107.5h0M455.5 127.5h0M455.5 103.5h0M455.5 108.5h0M455.5 106.5h0M455.5 102.5h0M455.5 111.5h0M455.5 113.5h0M456.5 109.5h0M456.5 127.5h0M456.5 111.5h0M456.5 118.5h0M456.5 105.5h0M456.5 107.5h0M456.5 112.5h0M457.5 125.5h0M457.5 116.5h0M457.5 122.5h0M457.5 108.5h0M457.5 107.5h0M457.5 114.5h0M457.5 126.5h0M458.5 124.5h0M458.5 128.5h0M458.5 123.5h0M458.5 125.5h0M458.5 119.5h0M458.5 118.5h0M458.5 106.5h0M459.5 107.5h0M459.5 101.5h0M459.5 97.5h0M459.5 102.5h0M459.5 104.5h0M460.5 118.5h0M460.5 107.5h0M460.5 103.5h0M460.5 102.5h0M460.5 109.5h0M460.5 115.5h0M461.5 115.5h0M461.5 116.5h0M461.5 114.5h0M461.5 110.5h0M461.5 113.5h0M461.5 108.5h0M461.5 122.5h0M462.5 115.5h0M462.5 102.5h0M462.5 106.5h0M462.5 103.5h0M462.5 100.5h0M462.5 93.5h0M463.5 103.5h0M463.5 124.5h0M463.5 123.5h0M463.5 122.5h0M463.5 112.5h0M463.5 102.5h0M464.5 102.5h0M464.5 101.5h0M464.5 108.5h0M464.5 106.5h0M464.5 104.5h0M465.5 106.5h0M465.5 98.5h0M465.5 124.5h0M465.5 103.5h0M465.5 116.5h0M465.5 117.5h0M465.5 102.5h0M465.5 92.5h0M466.5 127.5h0M466.5 115.5h0M466.5 105.5h0M466.5 125.5h0M466.5 100.5h0M466.5 108.5h0M467.5 110.5h0M467.5 108.5h0M467.5 121.5h0M467.5 102.5h0M467.5 113.5h0M467.5 124.5h0M467.5 114.5h0M468.5 89.5h0M468.5 101.5h0M468.5 110.5h0M468.5 97.5h0M468.5 105.5h0M469.5 102.5h0M469.5 93.5h0M469.5 110.5h0M469.5 117.5h0M469.5 99.5h0M469.5 91.5h0M469.5 112.5h0M469.5 114.5h0M470.5 112.5h0M470.5 119.5h0M470.5 103.5h0M470.5 106.5h0M470.5 105.5h0M470.5 113.5h0M470.5 110.5h0M470.5 98.5h0M471.5 106.5h0M471.5 94.5h0M471.5 110.5h0M471.5 118.5h0M471.5 126.5h0M472.5 124.5h0M472.5 113.5h0M472.5 115.5h0M472.5 119.5h0M472.5 103.5h0M472.5 108.5h0M473.5 106.5h0M473.5 97.5h0M473.5 116.5h0M473.5 93.5h0M473.5 125.5h0M474.5 115.5h0M474.5 126.5h0M474.5 120.5h0M474.5 119.5h0M474.5 121.5h0M474.5 125.5h0M474.5 116.5h0M474.5 112.5h0M475.5 110.5h0M475.5 101.5h0M475.5 111.5h0M475.5 95.5h0M475.5 106.5h0M475.5 116.5h0M476.5 123.5h0M476.5 98.5h0M476.5 116.5h0M476.5 106.5h0M476.5 108.5h0M476.5 111.5h0M476.5 103.5h0M476.5 113.5h0M477.5 120.5h0M477.5 112.5h0M477.5 114.5h0M477.5 110.5h0M477.5 109.5h0M477.5 116.5h0M477.5 113.5h0M478.5 107.5h0M478.5 115.5h0M478.5 108.5h0M478.5 114.5h0M478.5 118.5h0M479.5 117.5h0M479.5 107.5h0M479.5 96.5h0M479.5 99.5h0M479.5 104.5h0M480.5 108.5h0M480.5 117.5h0M480.5 115.5h0M480.5 112.5h0M480.5 107.5h0M480.5 116.5h0M480.5 114.5h0M481.5 107.5h0M481.5 121.5h0M481.5 118.5h0M481.5 115.5h0M481.5 110.5h0M481.5 109.5h0M481.5 111.5h0M482.5 109.5h0M482.5 110.5h0M482.5 101.5h0M482.5 106.5h0M482.5 105.5h0M482.5 104.5h0M483.5 113.5h0M483.5 103.5h0M483.5 99.5h0M483.5 105.5h0M483.5 106.5h0M484.5 102.5h0M484.5 108.5h0M484.5 106.5h0M484.5 112.5h0M484.5 107.5h0M485.5 103.5h0M485.5 108.5h0M485.5 104.5h0M485.5 110.5h0M485.5 117.5h0M485.5 101.5h0M486.5 99.5h0M486.5 106.5h0M486.5 97.5h0M486.5 111.5h0M486.5 102.5h0M487.5 99.5h0M487.5 115.5h0M487.5 104.5h0M487.5 125.5h0M488.5 99.5h0M488.5 112.5h0M488.5 122.5h0M488.5 105.5h0M488.5 109.5h0M488.5 123.5h0M488.5 107.5h0M489.5 104.5h0M489.5 111.5h0M489.5 121.5h0M489.5 116.5h0M489.5 114.5h0M490.5 108.5h0M490.5 103.5h0M490.5 101.5h0M490.5 106.5h0M490.5 115.5h0M490.5 112.5h0M490.5 95.5h0M490.5 100.5h0M491.5 93.5h0M491.5 110.5h0M491.5 124.5h0M491.5 111.5h0M491.5 114.5h0M491.5 96.5h0M491.5 120.5h0M491.5 112.5h0M492.5 128.5h0M492.5 127.5h0M492.5 107.5h0M492.5 114.5h0M492.5 120.5h0M492.5 112.5h0M492.5 126.5h0M493.5 118.5h0M493.5 123.5h0M493.5 113.5h0M493.5 102.5h0M494.5 100.5h0M494.5 102.5h0M494.5 125.5h0M494.5 107.5h0M494.5 109.5h0M494.5 112.5h0M494.5 117.5h0M495.5 112.5h0M495.5 105.5h0M495.5 116.5h0M495.5 103.5h0M495.5 101.5h0M495.5 118.5h0M495.5 108.5h0M496.5 100.5h0M496.5 103.5h0M496.5 104.5h0M496.5 102.5h0M496.5 108.5h0M496.5 106.5h0M496.5 118.5h0M497.5 111.5h0M497.5 107.5h0M497.5 104.5h0M497.5 125.5h0M497.5 128.5h0M497.5 126.5h0M497.5 127.5h0M497.5 129.5h0M498.5 117.5h0M498.5 112.5h0M498.5 95.5h0M498.5 129.5h0M498.5 113.5h0M498.5 108.5h0M499.5 116.5h0M499.5 125.5h0M499.5 122.5h0M499.5 126.5h0M499.5 95.5h0M499.5 128.5h0M499.5 117.5h0M500.5 123.5h0M500.5 127.5h0M500.5 112.5h0M500.5 117.5h0M500.5 107.5h0M500.5 126.5h0M500.5 115.5h0M500.5 111.5h0M500.5 133.5h0M501.5 126.5h0M501.5 132.5h0M501.5 123.5h0M501.5 131.5h0M501.5 117.5h0M502.5 115.5h0M502.5 111.5h0M502.5 112.5h0M502.5 109.5h0M502.5 108.5h0M502.5 106.5h0M503.5 107.5h0M503.5 108.5h0M503.5 115.5h0M503.5 116.5h0M503.5 111.5h0M504.5 106.5h0M504.5 115.5h0M504.5 116.5h0M504.5 127.5h0M504.5 125.5h0M504.5 130.5h0M504.5 119.5h0M505.5 131.5h0M505.5 130.5h0M505.5 127.5h0M505.5 118.5h0M505.5 105.5h0M505.5 124.5h0M505.5 104.5h0M505.5 113.5h0M506.5 117.5h0M506.5 123.5h0M506.5 116.5h0M507.5 114.5h0M507.5 120.5h0M507.5 113.5h0M507.5 107.5h0M507.5 108.5h0M507.5 111.5h0M508.5 109.5h0M508.5 113.5h0M508.5 106.5h0M508.5 114.5h0M508.5 108.5h0M508.5 117.5h0M508.5 110.5h0M509.5 106.5h0M509.5 115.5h0M509.5 108.5h0M509.5 103.5h0M509.5 122.5h0M509.5 114.5h0M510.5 105.5h0M510.5 125.5h0M510.5 99.5h0M510.5 115.5h0M510.5 117.5h0M510.5 112.5h0M510.5 109.5h0M510.5 106.5h0M511.5 107.5h0M511.5 116.5h0M511.5 123.5h0M511.5 101.5h0M511.5 122.5h0M511.5 108.5h0M511.5 112.5h0M512.5 100.5h0M512.5 106.5h0M512.5 109.5h0M512.5 114.5h0M512.5 101.5h0M512.5 108.5h0M513.5 110.5h0M513.5 103.5h0M513.5 117.5h0M513.5 108.5h0M513.5 106.5h0M514.5 108.5h0M514.5 104.5h0M514.5 112.5h0M514.5 105.5h0M514.5 110.5h0M515.5 109.5h0M515.5 110.5h0M515.5 114.5h0M515.5 107.5h0M515.5 119.5h0M515.5 111.5h0M515.5 118.5h0M516.5 110.5h0M516.5 108.5h0M516.5 121.5h0M516.5 120.5h0M516.5 99.5h0M516.5 109.5h0M517.5 111.5h0M517.5 106.5h0M517.5 107.5h0M517.5 103.5h0M517.5 100.5h0M517.5 98.5h0M517.5 122.5h0M518.5 101.5h0M518.5 111.5h0M518.5 121.5h0M518.5 105.5h0M518.5 108.5h0M518.5 98.5h0M518.5 100.5h0M519.5 106.5h0M519.5 114.5h0M519.5 115.5h0M519.5 121.5h0M519.5 119.5h0M519.5 113.5h0M519.5 110.5h0M520.5 118.5h0M520.5 107.5h0M520.5 116.5h0M520.5 115.5h0M520.5 120.5h0M520.5 117.5h0M521.5 105.5h0M521.5 111.5h0M521.5 117.5h0M521.5 106.5h0M521.5 115.5h0M521.5 116.5h0M522.5 104.5h0M522.5 111.5h0M522.5 108.5h0M522.5 103.5h0M522.5 107.5h0M522.5 112.5h0M522.5 114.5h0M523.5 111.5h0M523.5 107.5h0M523.5 112.5h0M523.5 109.5h0M523.5 123.5h0M524.5 117.5h0M524.5 110.5h0M524.5 90.5h0M524.5 89.5h0M525.5 108.5h0M525.5 92.5h0M525.5 90.5h0M525.5 117.5h0M525.5 95.5h0M525.5 122.5h0M525.5 112.5h0M526.5 112.5h0M526.5 105.5h0M526.5 92.5h0M526.5 95.5h0M526.5 100.5h0M526.5 99.5h0M526.5 106.5h0M527.5 92.5h0M527.5 100.5h0M527.5 91.5h0M527.5 102.5h0M527.5 107.5h0M527.5 110.5h0M527.5 105.5h0M528.5 106.5h0M528.5 109.5h0M528.5 98.5h0M528.5 101.5h0M528.5 97.5h0M528.5 112.5h0M529.5 108.5h0M529.5 101.5h0M529.5 109.5h0M529.5 110.5h0M530.5 107.5h0M530.5 109.5h0M530.5 114.5h0M531.5 108.5h0M531.5 105.5h0M531.5 109.5h0M531.5 102.5h0M531.5 101.5h0M532.5 105.5h0M532.5 107.5h0M532.5 103.5h0M533.5 105.5h0M533.5 108.5h0M533.5 99.5h0M533.5 98.5h0M533.5 93.5h0M533.5 107.5h0M533.5 100.5h0M534.5 101.5h0M534.5 113.5h0M534.5 114.5h0M534.5 119.5h0M534.5 111.5h0M534.5 112.5h0M535.5 103.5h0M535.5 112.5h0M535.5 118.5h0M535.5 105.5h0M535.5 113.5h0M535.5 120.5h0M536.5 99.5h0M536.5 105.5h0M536.5 111.5h0M536.5 114.5h0M536.5 115.5h0M537.5 113.5h0M537.5 109.5h0M537.5 112.5h0M537.5 111.5h0M537.5 116.5h0M538.5 114.5h0M538.5 99.5h0M538.5 113.5h0M538.5 111.5h0M538.5 101.5h0M539.5 116.5h0M539.5 110.5h0M539.5 117.5h0M539.5 98.5h0M539.5 101.5h0M539.5 102.5h0M539.5 100.5h0M539.5 115.5h0M540.5 108.5h0M540.5 106.5h0M540.5 100.5h0M540.5 104.5h0M540.5 112.5h0M540.5 109.5h0M540.5 114.5h0M541.5 112.5h0M541.5 99.5h0M541.5 106.5h0M541.5 104.5h0M541.5 111.5h0M541.5 109.5h0M542.5 104.5h0M542.5 101.5h0M542.5 97.5h0M542.5 90.5h0M542.5 100.5h0M542.5 105.5h0M543.5 101.5h0M543.5 92.5h0M543.5 109.5h0M543.5 116.5h0M543.5 100.5h0M543.5 111.5h0M544.5 106.5h0M544.5 113.5h0M544.5 114.5h0M544.5 125.5h0M544.5 123.5h0M544.5 121.5h0M544.5 122.5h0M544.5 111.5h0M545.5 131.5h0M545.5 128.5h0M545.5 127.5h0M545.5 124.5h0M545.5 118.5h0M545.5 112.5h0M545.5 114.5h0M546.5 114.5h0M546.5 108.5h0M546.5 109.5h0M546.5 107.5h0M546.5 93.5h0M546.5 106.5h0M546.5 111.5h0M547.5 118.5h0M547.5 109.5h0M547.5 112.5h0M547.5 107.5h0M547.5 106.5h0M547.5 105.5h0M547.5 93.5h0M548.5 94.5h0M548.5 95.5h0M548.5 105.5h0M548.5 108.5h0M548.5 114.5h0M549.5 106.5h0M549.5 115.5h0M549.5 110.5h0M549.5 107.5h0M549.5 101.5h0M549.5 114.5h0M549.5 113.5h0M549.5 111.5h0M550.5 113.5h0M550.5 108.5h0M550.5 102.5h0M550.5 112.5h0M550.5 115.5h0M550.5 110.5h0M551.5 113.5h0M551.5 103.5h0M551.5 100.5h0M551.5 116.5h0M551.5 101.5h0M551.5 114.5h0M551.5 111.5h0M552.5 113.5h0M552.5 108.5h0M552.5 99.5h0M552.5 102.5h0M552.5 111.5h0M552.5 103.5h0M552.5 110.5h0M553.5 102.5h0M553.5 112.5h0M553.5 109.5h0M553.5 113.5h0M553.5 107.5h0M553.5 115.5h0M553.5 97.5h0M554.5 97.5h0M554.5 92.5h0M554.5 112.5h0M554.5 104.5h0M554.5 99.5h0M554.5 102.5h0M554.5 103.5h0M555.5 107.5h0M555.5 103.5h0M555.5 94.5h0M555.5 93.5h0M556.5 106.5h0M556.5 102.5h0M556.5 100.5h0M556.5 109.5h0M556.5 105.5h0M556.5 101.5h0M557.5 99.5h0M557.5 102.5h0M557.5 100.5h0M557.5 103.5h0M557.5 107.5h0M558.5 110.5h0M558.5 101.5h0M558.5 109.5h0M558.5 107.5h0M558.5 96.5h0M558.5 119.5h0M559.5 116.5h0M559.5 104.5h0M559.5 100.5h0M559.5 112.5h0M559.5 115.5h0M559.5 109.5h0M559.5 119.5h0M559.5 107.5h0M560.5 105.5h0M560.5 118.5h0M560.5 99.5h0M560.5 100.5h0M560.5 108.5h0M560.5 116.5h0M560.5 114.5h0M560.5 109.5h0M561.5 106.5h0M561.5 109.5h0M561.5 107.5h0M561.5 114.5h0M561.5 111.5h0M562.5 104.5h0M562.5 106.5h0M562.5 101.5h0M562.5 109.5h0M562.5 108.5h0M562.5 112.5h0M562.5 114.5h0M563.5 111.5h0M563.5 100.5h0M563.5 110.5h0M563.5 108.5h0M563.5 116.5h0M563.5 119.5h0M563.5 98.5h0M564.5 110.5h0M564.5 102.5h0M564.5 107.5h0M564.5 100.5h0M564.5 90.5h0M564.5 91.5h0M564.5 124.5h0M564.5 92.5h0M565.5 106.5h0M565.5 107.5h0M565.5 111.5h0M565.5 121.5h0M565.5 109.5h0M565.5 110.5h0M566.5 115.5h0M566.5 104.5h0M566.5 108.5h0M566.5 107.5h0M566.5 105.5h0M566.5 110.5h0M567.5 112.5h0M567.5 113.5h0M567.5 111.5h0M567.5 110.5h0M568.5 118.5h0M568.5 123.5h0M568.5 119.5h0M568.5 117.5h0M568.5 114.5h0M568.5 120.5h0M568.5 111.5h0M569.5 116.5h0M569.5 108.5h0M569.5 110.5h0M569.5 97.5h0M569.5 115.5h0M569.5 107.5h0M570.5 110.5h0M570.5 96.5h0M570.5 99.5h0M570.5 103.5h0M570.5 106.5h0M570.5 108.5h0M571.5 106.5h0M571.5 103.5h0M571.5 104.5h0M571.5 109.5h0M571.5 107.5h0M571.5 111.5h0M572.5 106.5h0M572.5 112.5h0M572.5 116.5h0M572.5 121.5h0M572.5 102.5h0M572.5 123.5h0M573.5 115.5h0M573.5 111.5h0M573.5 108.5h0M573.5 103.5h0M573.5 118.5h0M574.5 111.5h0M574.5 112.5h0M574.5 115.5h0M574.5 109.5h0M574.5 108.5h0M575.5 106.5h0M575.5 110.5h0M575.5 107.5h0M575.5 105.5h0M575.5 103.5h0M575.5 113.5h0M575.5 104.5h0M576.5 102.5h0M576.5 95.5h0M576.5 105.5h0M576.5 109.5h0M576.5 114.5h0M576.5 108.5h0M576.5 116.5h0M576.5 107.5h0M577.5 111.5h0M577.5 114.5h0M577.5 118.5h0M577.5 112.5h0M577.5 107.5h0M577.5 110.5h0M577.5 101.5h0M578.5 98.5h0M578.5 111.5h0M578.5 113.5h0M578.5 99.5h0M578.5 100.5h0M578.5 104.5h0M579.5 116.5h0M579.5 111.5h0M579.5 105.5h0M579.5 100.5h0M579.5 99.5h0M579.5 106.5h0M579.5 107.5h0M580.5 103.5h0M580.5 109.5h0M580.5 115.5h0M580.5 114.5h0M581.5 116.5h0M581.5 115.5h0M581.5 108.5h0M581.5 106.5h0M581.5 109.5h0M581.5 104.5h0M582.5 94.5h0M582.5 97.5h0M582.5 119.5h0M582.5 123.5h0M582.5 118.5h0M582.5 108.5h0M582.5 103.5h0M582.5 104.5h0M583.5 105.5h0M583.5 109.5h0M583.5 116.5h0M583.5 113.5h0M584.5 101.5h0M584.5 113.5h0M584.5 121.5h0M584.5 106.5h0M584.5 105.5h0M584.5 100.5h0M584.5 109.5h0M585.5 113.5h0M585.5 99.5h0M585.5 104.5h0M585.5 103.5h0M585.5 114.5h0M585.5 109.5h0M585.5 105.5h0M586.5 109.5h0M586.5 96.5h0M586.5 99.5h0M586.5 104.5h0M586.5 113.5h0M587.5 102.5h0M587.5 111.5h0M587.5 108.5h0M587.5 109.5h0M587.5 116.5h0M587.5 98.5h0M588.5 121.5h0M588.5 119.5h0M588.5 106.5h0M588.5 111.5h0M588.5 128.5h0M588.5 118.5h0M589.5 118.5h0M589.5 120.5h0M589.5 112.5h0M589.5 104.5h0M589.5 113.5h0M590.5 97.5h0M590.5 99.5h0M590.5 105.5h0M591.5 108.5h0M591.5 106.5h0M591.5 100.5h0M591.5 99.5h0M592.5 108.5h0M592.5 97.5h0M592.5 106.5h0M592.5 102.5h0M592.5 112.5h0M592.5 113.5h0M592.5 115.5h0M593.5 119.5h0M593.5 114.5h0M593.5 107.5h0M593.5 100.5h0M593.5 105.5h0M593.5 104.5h0M594.5 103.5h0M594.5 114.5h0M594.5 110.5h0M594.5 107.5h0M594.5 102.5h0M594.5 109.5h0M594.5 99.5h0M594.5 111.5h0M595.5 111.5h0M595.5 110.5h0M595.5 113.5h0M595.5 106.5h0M595.5 102.5h0M595.5 97.5h0M595.5 98.5h0M596.5 97.5h0M596.5 112.5h0M596.5 113.5h0M596.5 109.5h0M596.5 103.5h0M597.5 107.5h0M597.5 97.5h0M597.5 98.5h0M597.5 95.5h0M598.5 98.5h0M598.5 99.5h0M598.5 110.5h0M598.5 115.5h0M598.5 112.5h0M598.5 107.5h0M599.5 109.5h0M599.5 113.5h0M599.5 108.5h0M599.5 102.5h0M599.5 115.5h0M599.5 110.5h0M600.5 109.5h0M600.5 104.5h0M600.5 99.5h0M600.5 103.5h0M600.5 97.5h0M600.5 102.5h0M601.5 105.5h0M601.5 103.5h0M601.5 113.5h0M601.5 106.5h0M601.5 100.5h0M601.5 99.5h0M602.5 102.5h0M602.5 104.5h0M602.5 105.5h0M602.5 99.5h0M602.5 106.5h0M602.5 109.5h0M603.5 116.5h0M603.5 109.5h0M603.5 111.5h0M603.5 112.5h0M603.5 107.5h0M604.5 108.5h0M604.5 110.5h0M604.5 107.5h0M604.5 104.5h0M604.5 113.5h0M605.5 114.5h0M605.5 109.5h0M605.5 111.5h0M605.5 112.5h0M605.5 118.5h0M605.5 108.5h0M606.5 113.5h0M606.5 114.5h0M606.5 103.5h0M606.5 107.5h0M606.5 110.5h0M607.5 106.5h0M607.5 107.5h0M607.5 111.5h0M607.5 110.5h0M607.5 108.5h0M607.5 95.5h0M608.5 109.5h0M608.5 114.5h0M608.5 104.5h0M608.5 121.5h0M608.5 113.5h0M608.5 112.5h0M608.5 99.5h0M608.5 103.5h0M609.5 108.5h0M609.5 120.5h0M609.5 116.5h0M609.5 121.5h0M609.5 113.5h0M610.5 117.5h0M610.5 100.5h0M610.5 116.5h0M610.5 111.5h0M610.5 115.5h0M611.5 119.5h0M611.5 118.5h0M611.5 120.5h0M611.5 96.5h0M611.5 117.5h0M612.5 102.5h0M612.5 100.5h0M612.5 117.5h0M612.5 112.5h0M612.5 122.5h0M612.5 114.5h0M612.5 120.5h0M613.5 101.5h0M613.5 103.5h0M613.5 107.5h0M613.5 118.5h0M613.5 111.5h0M613.5 115.5h0M613.5 108.5h0M614.5 107.5h0M614.5 112.5h0M614.5 110.5h0M614.5 111.5h0M615.5 105.5h0M615.5 97.5h0M615.5 98.5h0M615.5 93.5h0M615.5 92.5h0M616.5 104.5h0M616.5 103.5h0M616.5 107.5h0M616.5 105.5h0M616.5 96.5h0M616.5 95.5h0M616.5 101.5h0M617.5 105.5h0M617.5 93.5h0M617.5 94.5h0M617.5 89.5h0M617.5 88.5h0M618.5 89.5h0M618.5 91.5h0M618.5 95.5h0M618.5 97.5h0M618.5 96.5h0M618.5 93.5h0M619.5 107.5h0M619.5 106.5h0M619.5 104.5h0M619.5 109.5h0M619.5 115.5h0M619.5 120.5h0M620.5 106.5h0M620.5 108.5h0M620.5 105.5h0M620.5 97.5h0M620.5 102.5h0M620.5 116.5h0M621.5 98.5h0M621.5 112.5h0M621.5 97.5h0M621.5 96.5h0M621.5 126.5h0M622.5 100.5h0M622.5 102.5h0M622.5 104.5h0M622.5 106.5h0M622.5 103.5h0M623.5 107.5h0M623.5 106.5h0M623.5 112.5h0M624.5 107.5h0M624.5 112.5h0M624.5 106.5h0M624.5 110.5h0M625.5 108.5h0M625.5 107.5h0M625.5 109.5h0M625.5 113.5h0M625.5 105.5h0M625.5 118.5h0M626.5 110.5h0M626.5 117.5h0M626.5 107.5h0M626.5 108.5h0M626.5 106.5h0M626.5 127.5h0M627.5 119.5h0M627.5 108.5h0M627.5 98.5h0M627.5 117.5h0M627.5 101.5h0M627.5 118.5h0M627.5 100.5h0M628.5 103.5h0M628.5 98.5h0M628.5 106.5h0M628.5 113.5h0M628.5 109.5h0M628.5 108.5h0M628.5 116.5h0M628.5 119.5h0M629.5 119.5h0M629.5 122.5h0M629.5 110.5h0M629.5 120.5h0M629.5 116.5h0M630.5 123.5h0M630.5 122.5h0M630.5 125.5h0M630.5 124.5h0M630.5 126.5h0M630.5 114.5h0M630.5 128.5h0M631.5 118.5h0M631.5 103.5h0M631.5 97.5h0M631.5 121.5h0M631.5 111.5h0M631.5 116.5h0M632.5 101.5h0M632.5 99.5h0M632.5 113.5h0M632.5 97.5h0M632.5 103.5h0M632.5 115.5h0M632.5 117.5h0M633.5 107.5h0M633.5 117.5h0M633.5 116.5h0M633.5 122.5h0M633.5 111.5h0M633.5 105.5h0M633.5 115.5h0M634.5 108.5h0M634.5 113.5h0M634.5 116.5h0M634.5 109.5h0M635.5 111.5h0M635.5 115.5h0M635.5 119.5h0M635.5 118.5h0M635.5 114.5h0M635.5 108.5h0M636.5 109.5h0M636.5 122.5h0M636.5 120.5h0M636.5 119.5h0M636.5 117.5h0M636.5 115.5h0M637.5 121.5h0M637.5 119.5h0M637.5 112.5h0M638.5 105.5h0M638.5 108.5h0M638.5 112.5h0M638.5 113.5h0M638.5 109.5h0M638.5 122.5h0M638.5 118.5h0M639.5 106.5h0M639.5 111.5h0M639.5 107.5h0M639.5 113.5h0M639.5 104.5h0M640.5 104.5h0M640.5 113.5h0M640.5 107.5h0M640.5 123.5h0M640.5 118.5h0M640.5 124.5h0M640.5 120.5h0M641.5 118.5h0M641.5 104.5h0M641.5 102.5h0M642.5 105.5h0M642.5 98.5h0M642.5 99.5h0M642.5 109.5h0M642.5 114.5h0M643.5 119.5h0M643.5 114.5h0M643.5 108.5h0M643.5 107.5h0M643.5 105.5h0M643.5 117.5h0M644.5 112.5h0M644.5 114.5h0M644.5 118.5h0M644.5 116.5h0M644.5 115.5h0M644.5 109.5h0M644.5 110.5h0M644.5 106.5h0M645.5 102.5h0M645.5 107.5h0M645.5 116.5h0M645.5 105.5h0M645.5 113.5h0M646.5 112.5h0M646.5 115.5h0M646.5 120.5h0M646.5 119.5h0M647.5 111.5h0M647.5 122.5h0M647.5 114.5h0M647.5 102.5h0M647.5 110.5h0M647.5 121.5h0M647.5 128.5h0M648.5 135.5h0M648.5 123.5h0M648.5 124.5h0M648.5 116.5h0M648.5 112.5h0M648.5 120.5h0M649.5 112.5h0M649.5 109.5h0M649.5 116.5h0M649.5 114.5h0M649.5 117.5h0M649.5 110.5h0M649.5 118.5h0M650.5 112.5h0M650.5 116.5h0M650.5 118.5h0M650.5 108.5h0M650.5 114.5h0M650.5 120.5h0M651.5 112.5h0M651.5 116.5h0M651.5 111.5h0M651.5 115.5h0M651.5 113.5h0M651.5 110.5h0M651.5 120.5h0M652.5 95.5h0M652.5 111.5h0M652.5 93.5h0M652.5 110.5h0M652.5 104.5h0M652.5 108.5h0M653.5 105.5h0M653.5 100.5h0M653.5 103.5h0M653.5 112.5h0M653.5 108.5h0M653.5 104.5h0M653.5 111.5h0M654.5 107.5h0M654.5 112.5h0M654.5 109.5h0M654.5 106.5h0M654.5 110.5h0M655.5 108.5h0M655.5 116.5h0M655.5 111.5h0M655.5 109.5h0M655.5 102.5h0M656.5 104.5h0M656.5 110.5h0M656.5 100.5h0M656.5 111.5h0M656.5 115.5h0M656.5 114.5h0M656.5 108.5h0M657.5 114.5h0M657.5 113.5h0M657.5 120.5h0M657.5 108.5h0M657.5 110.5h0M657.5 92.5h0M657.5 109.5h0M658.5 118.5h0M658.5 110.5h0M658.5 100.5h0M658.5 108.5h0M658.5 106.5h0M658.5 111.5h0M658.5 112.5h0M659.5 106.5h0M659.5 108.5h0M659.5 102.5h0M659.5 103.5h0M659.5 98.5h0M660.5 103.5h0M660.5 104.5h0M660.5 108.5h0M660.5 105.5h0M660.5 114.5h0M660.5 111.5h0M661.5 102.5h0M661.5 101.5h0M661.5 111.5h0M661.5 107.5h0M661.5 112.5h0M661.5 113.5h0M661.5 115.5h0M662.5 110.5h0M662.5 108.5h0M662.5 114.5h0M662.5 117.5h0M662.5 112.5h0M663.5 111.5h0M663.5 110.5h0M663.5 109.5h0M663.5 116.5h0M663.5 108.5h0M663.5 113.5h0M663.5 112.5h0M664.5 119.5h0M664.5 115.5h0M664.5 114.5h0M664.5 109.5h0M664.5 112.5h0M664.5 105.5h0M664.5 110.5h0M665.5 105.5h0M665.5 108.5h0M665.5 111.5h0M665.5 106.5h0M665.5 103.5h0M666.5 109.5h0M666.5 115.5h0M666.5 101.5h0M666.5 95.5h0M666.5 114.5h0M666.5 117.5h0M666.5 111.5h0M666.5 104.5h0M667.5 108.5h0M667.5 109.5h0M667.5 101.5h0M667.5 104.5h0M667.5 112.5h0M668.5 107.5h0M668.5 104.5h0M668.5 111.5h0M668.5 115.5h0M668.5 118.5h0M669.5 105.5h0M669.5 111.5h0M669.5 109.5h0M669.5 103.5h0M669.5 108.5h0M670.5 114.5h0M670.5 104.5h0M670.5 108.5h0M670.5 110.5h0M670.5 111.5h0M671.5 106.5h0M671.5 112.5h0M671.5 110.5h0M671.5 109.5h0M671.5 105.5h0M671.5 114.5h0M672.5 117.5h0M672.5 111.5h0M672.5 104.5h0M672.5 93.5h0M672.5 97.5h0M672.5 101.5h0M672.5 99.5h0M673.5 106.5h0M673.5 111.5h0M673.5 109.5h0M673.5 107.5h0M673.5 112.5h0M673.5 108.5h0M674.5 112.5h0M674.5 110.5h0M674.5 116.5h0M674.5 115.5h0M674.5 114.5h0M675.5 112.5h0M675.5 108.5h0M675.5 106.5h0M675.5 92.5h0M675.5 107.5h0M675.5 100.5h0M675.5 102.5h0M675.5 98.5h0M676.5 113.5h0M676.5 105.5h0M676.5 109.5h0M676.5 97.5h0M676.5 107.5h0M676.5 122.5h0M676.5 123.5h0M676.5 104.5h0M677.5 114.5h0M677.5 121.5h0M677.5 97.5h0M677.5 101.5h0M677.5 92.5h0M677.5 91.5h0M677.5 100.5h0M678.5 111.5h0M678.5 93.5h0M678.5 92.5h0M678.5 95.5h0M678.5 116.5h0M679.5 107.5h0M679.5 122.5h0M679.5 111.5h0M679.5 118.5h0M679.5 109.5h0M680.5 103.5h0M680.5 111.5h0M680.5 110.5h0M680.5 112.5h0M680.5 119.5h0M680.5 114.5h0M681.5 114.5h0M681.5 108.5h0M681.5 110.5h0M681.5 111.5h0M682.5 107.5h0M682.5 110.5h0M682.5 108.5h0M682.5 115.5h0M683.5 113.5h0M683.5 109.5h0M683.5 121.5h0M683.5 108.5h0M683.5 126.5h0M683.5 124.5h0M683.5 103.5h0M684.5 94.5h0M684.5 122.5h0M684.5 113.5h0M684.5 115.5h0M684.5 105.5h0M684.5 106.5h0M684.5 104.5h0M684.5 121.5h0M685.5 103.5h0M685.5 114.5h0M685.5 124.5h0M685.5 110.5h0M685.5 111.5h0M685.5 118.5h0M685.5 97.5h0M686.5 117.5h0M686.5 96.5h0M686.5 107.5h0M686.5 109.5h0M686.5 119.5h0M686.5 101.5h0M686.5 95.5h0M687.5 102.5h0M687.5 97.5h0M687.5 104.5h0M687.5 95.5h0M687.5 96.5h0M688.5 95.5h0M688.5 97.5h0M688.5 99.5h0M688.5 113.5h0M688.5 105.5h0M688.5 106.5h0M689.5 98.5h0M689.5 102.5h0M689.5 105.5h0M689.5 103.5h0M689.5 109.5h0M689.5 104.5h0M689.5 110.5h0M689.5 107.5h0M690.5 103.5h0M690.5 106.5h0M690.5 107.5h0M690.5 108.5h0M690.5 105.5h0M690.5 104.5h0M691.5 104.5h0M691.5 103.5h0M691.5 105.5h0M691.5 100.5h0M691.5 110.5h0M691.5 111.5h0M691.5 106.5h0M692.5 103.5h0M692.5 109.5h0M692.5 108.5h0M692.5 114.5h0M692.5 104.5h0M692.5 107.5h0M692.5 105.5h0M693.5 104.5h0M693.5 103.5h0M693.5 111.5h0M693.5 116.5h0M693.5 120.5h0M694.5 115.5h0M694.5 112.5h0M694.5 114.5h0M694.5 108.5h0M695.5 106.5h0M695.5 115.5h0M695.5 117.5h0M695.5 108.5h0M696.5 110.5h0M696.5 112.5h0M696.5 108.5h0M696.5 114.5h0M696.5 111.5h0M696.5 109.5h0M697.5 106.5h0M697.5 117.5h0M697.5 107.5h0M697.5 122.5h0M697.5 123.5h0M697.5 120.5h0M697.5 112.5h0M698.5 112.5h0M698.5 102.5h0M698.5 107.5h0M698.5 103.5h0M698.5 101.5h0M698.5 111.5h0M699.5 102.5h0M699.5 103.5h0M699.5 100.5h0M699.5 110.5h0M699.5 105.5h0M699.5 108.5h0M700.5 108.5h0M700.5 107.5h0M700.5 110.5h0M700.5 104.5h0M700.5 101.5h0M701.5 110.5h0M701.5 115.5h0M701.5 107.5h0M701.5 103.5h0M701.5 105.5h0M701.5 104.5h0M702.5 109.5h0M702.5 113.5h0M702.5 110.5h0M702.5 115.5h0M702.5 104.5h0M702.5 101.5h0M702.5 114.5h0M703.5 105.5h0M703.5 116.5h0M703.5 115.5h0M703.5 125.5h0M703.5 98.5h0M704.5 125.5h0M704.5 124.5h0M704.5 102.5h0M704.5 108.5h0M704.5 116.5h0M704.5 118.5h0M705.5 112.5h0M705.5 110.5h0M705.5 103.5h0M705.5 109.5h0M706.5 122.5h0M706.5 110.5h0M706.5 97.5h0M706.5 113.5h0M706.5 124.5h0M707.5 111.5h0M707.5 106.5h0M707.5 94.5h0M707.5 98.5h0M707.5 92.5h0M707.5 93.5h0M707.5 112.5h0M708.5 111.5h0M708.5 101.5h0M708.5 122.5h0M708.5 115.5h0M708.5 125.5h0M708.5 120.5h0M708.5 112.5h0M709.5 100.5h0M709.5 92.5h0M709.5 102.5h0M709.5 103.5h0M709.5 104.5h0M709.5 101.5h0M709.5 99.5h0M710.5 94.5h0M710.5 92.5h0M710.5 91.5h0M710.5 98.5h0M710.5 97.5h0M710.5 102.5h0M711.5 99.5h0M711.5 118.5h0M711.5 105.5h0M711.5 112.5h0M711.5 104.5h0M711.5 94.5h0M711.5 96.5h0M711.5 116.5h0M712.5 117.5h0M712.5 92.5h0M712.5 100.5h0M712.5 107.5h0M713.5 101.5h0M713.5 103.5h0M713.5 116.5h0M713.5 104.5h0M714.5 120.5h0M714.5 111.5h0M714.5 123.5h0M714.5 115.5h0M714.5 119.5h0M714.5 109.5h0M714.5 114.5h0M715.5 106.5h0M715.5 111.5h0M715.5 112.5h0M715.5 116.5h0M715.5 94.5h0M715.5 104.5h0M716.5 111.5h0M716.5 96.5h0M716.5 104.5h0M716.5 103.5h0M716.5 98.5h0M716.5 110.5h0M717.5 119.5h0M717.5 115.5h0M717.5 111.5h0M717.5 107.5h0M717.5 112.5h0M717.5 118.5h0M717.5 117.5h0M717.5 113.5h0M718.5 108.5h0M718.5 93.5h0M718.5 96.5h0M718.5 110.5h0M718.5 112.5h0M718.5 103.5h0M718.5 115.5h0M719.5 107.5h0M719.5 113.5h0M719.5 109.5h0M719.5 119.5h0M719.5 106.5h0M719.5 122.5h0M720.5 123.5h0M720.5 116.5h0M720.5 114.5h0M720.5 117.5h0M720.5 113.5h0M720.5 96.5h0M721.5 122.5h0M721.5 102.5h0M721.5 111.5h0M721.5 96.5h0M721.5 100.5h0M722.5 106.5h0M722.5 96.5h0M722.5 92.5h0M722.5 94.5h0M722.5 95.5h0M722.5 90.5h0M722.5 98.5h0M723.5 96.5h0M723.5 90.5h0M723.5 92.5h0M723.5 102.5h0M723.5 94.5h0M724.5 110.5h0M724.5 115.5h0M724.5 117.5h0M724.5 103.5h0M724.5 111.5h0M725.5 106.5h0M725.5 110.5h0M725.5 109.5h0M725.5 100.5h0M725.5 108.5h0M725.5 114.5h0M725.5 101.5h0M726.5 94.5h0M726.5 93.5h0M726.5 107.5h0M726.5 91.5h0M726.5 95.5h0M727.5 106.5h0M727.5 111.5h0M727.5 114.5h0M727.5 116.5h0M727.5 119.5h0M727.5 122.5h0M727.5 121.5h0M728.5 123.5h0M728.5 122.5h0M728.5 115.5h0M728.5 111.5h0M728.5 108.5h0M729.5 112.5h0M729.5 108.5h0M729.5 105.5h0M729.5 106.5h0M729.5 102.5h0M729.5 110.5h0M729.5 100.5h0M730.5 109.5h0M730.5 102.5h0M730.5 108.5h0M730.5 110.5h0M730.5 95.5h0M730.5 117.5h0M731.5 102.5h0M731.5 121.5h0M731.5 119.5h0M731.5 120.5h0M731.5 107.5h0M731.5 123.5h0M731.5 115.5h0M731.5 112.5h0M732.5 110.5h0M732.5 115.5h0M732.5 97.5h0M732.5 107.5h0M732.5 99.5h0M732.5 109.5h0M733.5 108.5h0M733.5 101.5h0M733.5 109.5h0M733.5 117.5h0M734.5 114.5h0M734.5 109.5h0M734.5 100.5h0M734.5 106.5h0M735.5 109.5h0M735.5 94.5h0M735.5 107.5h0M735.5 116.5h0M735.5 104.5h0M735.5 99.5h0M735.5 102.5h0M735.5 114.5h0M736.5 108.5h0M736.5 116.5h0M736.5 123.5h0M736.5 107.5h0M736.5 118.5h0M736.5 94.5h0M737.5 122.5h0M737.5 116.5h0M737.5 117.5h0M737.5 124.5h0M737.5 121.5h0M737.5 123.5h0M738.5 121.5h0M738.5 126.5h0M738.5 127.5h0M738.5 120.5h0M738.5 113.5h0M738.5 122.5h0M738.5 123.5h0M739.5 119.5h0M739.5 117.5h0M739.5 112.5h0M739.5 110.5h0M739.5 100.5h0M739.5 108.5h0M739.5 113.5h0M740.5 127.5h0M740.5 123.5h0M740.5 92.5h0M740.5 101.5h0M740.5 109.5h0M740.5 113.5h0M741.5 125.5h0M741.5 104.5h0M741.5 94.5h0M741.5 118.5h0M741.5 117.5h0M741.5 99.5h0M741.5 112.5h0M741.5 92.5h0M742.5 100.5h0M742.5 119.5h0M742.5 107.5h0M742.5 109.5h0M742.5 96.5h0M742.5 121.5h0M742.5 125.5h0M743.5 100.5h0M743.5 98.5h0M743.5 115.5h0M743.5 103.5h0M743.5 119.5h0M744.5 109.5h0M744.5 107.5h0M744.5 121.5h0M744.5 118.5h0M744.5 116.5h0M744.5 120.5h0M744.5 125.5h0M744.5 122.5h0M745.5 111.5h0M745.5 117.5h0M745.5 100.5h0M745.5 98.5h0M745.5 103.5h0M745.5 105.5h0M746.5 115.5h0M746.5 104.5h0M746.5 128.5h0M747.5 116.5h0M747.5 108.5h0M747.5 109.5h0M747.5 106.5h0M747.5 118.5h0M747.5 95.5h0M748.5 96.5h0M748.5 100.5h0M748.5 109.5h0M748.5 101.5h0M748.5 123.5h0M748.5 114.5h0M748.5 128.5h0M749.5 126.5h0M749.5 99.5h0M749.5 91.5h0M749.5 127.5h0M749.5 93.5h0M749.5 90.5h0M750.5 105.5h0M750.5 124.5h0M750.5 92.5h0M750.5 107.5h0M750.5 102.5h0M750.5 97.5h0M750.5 98.5h0M751.5 95.5h0M751.5 123.5h0M751.5 126.5h0M751.5 96.5h0M751.5 127.5h0M751.5 94.5h0M751.5 91.5h0M751.5 119.5h0M752.5 128.5h0M752.5 127.5h0M752.5 124.5h0M752.5 107.5h0M752.5 125.5h0M752.5 92.5h0M752.5 95.5h0M753.5 96.5h0M753.5 128.5h0M753.5 121.5h0M753.5 102.5h0M753.5 117.5h0M753.5 122.5h0M754.5 108.5h0M754.5 111.5h0M754.5 102.5h0M754.5 119.5h0M754.5 103.5h0M754.5 113.5h0M754.5 125.5h0M755.5 113.5h0M755.5 110.5h0M755.5 123.5h0M755.5 116.5h0M755.5 128.5h0M756.5 120.5h0M756.5 121.5h0M756.5 119.5h0M756.5 124.5h0M756.5 118.5h0M757.5 125.5h0M757.5 131.5h0M757.5 117.5h0M757.5 124.5h0M757.5 115.5h0M757.5 127.5h0M757.5 106.5h0M757.5 120.5h0M758.5 113.5h0M758.5 107.5h0M758.5 99.5h0M758.5 120.5h0M759.5 108.5h0M759.5 105.5h0M759.5 107.5h0M759.5 110.5h0M759.5 109.5h0M759.5 106.5h0M760.5 109.5h0M760.5 108.5h0M760.5 101.5h0M760.5 107.5h0M760.5 103.5h0M760.5 112.5h0M760.5 110.5h0M760.5 115.5h0M761.5 102.5h0M761.5 109.5h0M761.5 119.5h0M761.5 103.5h0M761.5 110.5h0M761.5 123.5h0M761.5 122.5h0M761.5 105.5h0M762.5 116.5h0M762.5 108.5h0M762.5 106.5h0M762.5 100.5h0M762.5 110.5h0M762.5 105.5h0M763.5 102.5h0M763.5 109.5h0M763.5 119.5h0M763.5 115.5h0M763.5 100.5h0M763.5 110.5h0M763.5 101.5h0M764.5 96.5h0M764.5 98.5h0M764.5 107.5h0M764.5 110.5h0M764.5 104.5h0M764.5 101.5h0M764.5 102.5h0M765.5 103.5h0M765.5 106.5h0M765.5 107.5h0M765.5 113.5h0M765.5 108.5h0M766.5 111.5h0M766.5 108.5h0M766.5 100.5h0M766.5 107.5h0M766.5 103.5h0M766.5 106.5h0M767.5 115.5h0M767.5 112.5h0M767.5 97.5h0M767.5 100.5h0M767.5 95.5h0M767.5 105.5h0M768.5 101.5h0M768.5 97.5h0M768.5 109.5h0M768.5 96.5h0M768.5 106.5h0M769.5 115.5h0M769.5 111.5h0M769.5 113.5h0M769.5 101.5h0M769.5 102.5h0M769.5 104.5h0M769.5 108.5h0M770.5 110.5h0M770.5 109.5h0M770.5 115.5h0M770.5 121.5h0M770.5 123.5h0M771.5 114.5h0M771.5 112.5h0M771.5 102.5h0M771.5 95.5h0M771.5 103.5h0M771.5 101.5h0M772.5 99.5h0M772.5 111.5h0M772.5 109.5h0M772.5 112.5h0M772.5 110.5h0M772.5 97.5h0M773.5 105.5h0M773.5 103.5h0M773.5 121.5h0M773.5 108.5h0M773.5 109.5h0M773.5 98.5h0M774.5 123.5h0M774.5 109.5h0M774.5 117.5h0M774.5 118.5h0M774.5 115.5h0M774.5 112.5h0M775.5 109.5h0M775.5 107.5h0M775.5 110.5h0M776.5 122.5h0M776.5 109.5h0M776.5 123.5h0M776.5 117.5h0M776.5 119.5h0M776.5 121.5h0M777.5 114.5h0M777.5 115.5h0M777.5 110.5h0M777.5 111.5h0M777.5 103.5h0M777.5 106.5h0M778.5 122.5h0M778.5 118.5h0M778.5 108.5h0M778.5 113.5h0M778.5 115.5h0M778.5 109.5h0M779.5 104.5h0M779.5 106.5h0M779.5 100.5h0M779.5 107.5h0M779.5 109.5h0M779.5 111.5h0M780.5 103.5h0M780.5 106.5h0M780.5 100.5h0M780.5 110.5h0M780.5 107.5h0M780.5 111.5h0M781.5 112.5h0M781.5 113.5h0M781.5 120.5h0M781.5 108.5h0M781.5 106.5h0M781.5 111.5h0M781.5 101.5h0M781.5 107.5h0M782.5 118.5h0M782.5 107.5h0M782.5 114.5h0M782.5 97.5h0M782.5 94.5h0M782.5 106.5h0M782.5 121.5h0M782.5 96.5h0M783.5 110.5h0M783.5 113.5h0M783.5 124.5h0M783.5 122.5h0M783.5 100.5h0M783.5 103.5h0M783.5 107.5h0M783.5 123.5h0M784.5 106.5h0M784.5 119.5h0M784.5 111.5h0M784.5 115.5h0M784.5 114.5h0M785.5 115.5h0M785.5 114.5h0M785.5 110.5h0M785.5 103.5h0M785.5 95.5h0M786.5 97.5h0M786.5 95.5h0M786.5 102.5h0M786.5 106.5h0M786.5 105.5h0M786.5 107.5h0M787.5 113.5h0M787.5 106.5h0M787.5 107.5h0M787.5 111.5h0M788.5 108.5h0M788.5 97.5h0M788.5 107.5h0M788.5 98.5h0M788.5 105.5h0M788.5 103.5h0M789.5 98.5h0M789.5 106.5h0M789.5 115.5h0M789.5 111.5h0M789.5 102.5h0M789.5 105.5h0M789.5 107.5h0M790.5 108.5h0M790.5 105.5h0M790.5 104.5h0M790.5 106.5h0M790.5 107.5h0M790.5 103.5h0M791.5 111.5h0M791.5 112.5h0M791.5 109.5h0M791.5 114.5h0M791.5 101.5h0M791.5 108.5h0M792.5 101.5h0M792.5 119.5h0M792.5 97.5h0M792.5 103.5h0M792.5 106.5h0M792.5 100.5h0M793.5 106.5h0M793.5 108.5h0M793.5 99.5h0M793.5 110.5h0M793.5 111.5h0M793.5 115.5h0M794.5 106.5h0M794.5 111.5h0M794.5 100.5h0M794.5 110.5h0M794.5 116.5h0M795.5 108.5h0M795.5 110.5h0M795.5 111.5h0M795.5 114.5h0M795.5 121.5h0M795.5 113.5h0M795.5 112.5h0M796.5 103.5h0M796.5 114.5h0M796.5 94.5h0M796.5 113.5h0M796.5 96.5h0M796.5 123.5h0M797.5 107.5h0M797.5 111.5h0M797.5 103.5h0M797.5 116.5h0M797.5 100.5h0M798.5 94.5h0M798.5 98.5h0M798.5 104.5h0M798.5 112.5h0M798.5 107.5h0M798.5 106.5h0M798.5 129.5h0M799.5 128.5h0M799.5 112.5h0M799.5 124.5h0M799.5 125.5h0M800.5 109.5h0M800.5 112.5h0M800.5 121.5h0M800.5 123.5h0M800.5 122.5h0M800.5 125.5h0M800.5 119.5h0M801.5 115.5h0M801.5 114.5h0M801.5 106.5h0M801.5 100.5h0M801.5 102.5h0M801.5 108.5h0M801.5 107.5h0M802.5 105.5h0M802.5 106.5h0M802.5 114.5h0M802.5 116.5h0M802.5 119.5h0M803.5 109.5h0M803.5 103.5h0M803.5 112.5h0M803.5 106.5h0M803.5 100.5h0M803.5 94.5h0M804.5 108.5h0M804.5 97.5h0M804.5 111.5h0M804.5 113.5h0M804.5 117.5h0M804.5 91.5h0M804.5 101.5h0M805.5 94.5h0M805.5 92.5h0M805.5 122.5h0M805.5 104.5h0M805.5 113.5h0M805.5 124.5h0M805.5 99.5h0M806.5 109.5h0M806.5 91.5h0M806.5 96.5h0M806.5 95.5h0M806.5 108.5h0M806.5 105.5h0M806.5 113.5h0M806.5 107.5h0M807.5 112.5h0M807.5 103.5h0M807.5 107.5h0M808.5 111.5h0M808.5 109.5h0M808.5 106.5h0M808.5 107.5h0M808.5 105.5h0M808.5 108.5h0M809.5 114.5h0M809.5 107.5h0M809.5 106.5h0M809.5 109.5h0M809.5 100.5h0M809.5 104.5h0M810.5 99.5h0M810.5 102.5h0M810.5 112.5h0M810.5 111.5h0M810.5 101.5h0M810.5 104.5h0M810.5 119.5h0M811.5 123.5h0M811.5 117.5h0M811.5 96.5h0M811.5 118.5h0M811.5 98.5h0M811.5 108.5h0M811.5 94.5h0M811.5 102.5h0M812.5 101.5h0M812.5 106.5h0M812.5 113.5h0M812.5 96.5h0M812.5 93.5h0M812.5 107.5h0M813.5 94.5h0M813.5 119.5h0M813.5 111.5h0M813.5 120.5h0M813.5 98.5h0M813.5 103.5h0M813.5 107.5h0M814.5 93.5h0M814.5 113.5h0M814.5 92.5h0M814.5 116.5h0M814.5 99.5h0M814.5 94.5h0M814.5 107.5h0M815.5 103.5h0M815.5 94.5h0M815.5 118.5h0M815.5 120.5h0M815.5 121.5h0M815.5 102.5h0M815.5 99.5h0M816.5 116.5h0M816.5 122.5h0M816.5 121.5h0M816.5 120.5h0M816.5 105.5h0M817.5 118.5h0M817.5 112.5h0M817.5 121.5h0M817.5 104.5h0M817.5 109.5h0M817.5 92.5h0M817.5 115.5h0M818.5 91.5h0M818.5 105.5h0M818.5 92.5h0M818.5 106.5h0M819.5 102.5h0M819.5 108.5h0M819.5 105.5h0M819.5 111.5h0M820.5 103.5h0M820.5 120.5h0M820.5 122.5h0M820.5 109.5h0M820.5 112.5h0M820.5 113.5h0M820.5 102.5h0M821.5 91.5h0M821.5 92.5h0M821.5 108.5h0M821.5 102.5h0M821.5 99.5h0M821.5 117.5h0M821.5 112.5h0M822.5 109.5h0M822.5 106.5h0M822.5 101.5h0M822.5 95.5h0M822.5 93.5h0M822.5 91.5h0M823.5 96.5h0M823.5 90.5h0M823.5 114.5h0M823.5 110.5h0M823.5 108.5h0M823.5 98.5h0M823.5 101.5h0M823.5 97.5h0M824.5 94.5h0M824.5 92.5h0M824.5 93.5h0M824.5 100.5h0M825.5 97.5h0M825.5 99.5h0M825.5 104.5h0M825.5 107.5h0M825.5 100.5h0M825.5 93.5h0M825.5 105.5h0M826.5 110.5h0M826.5 115.5h0M826.5 112.5h0M826.5 103.5h0M826.5 111.5h0M826.5 106.5h0M827.5 109.5h0M827.5 112.5h0M827.5 103.5h0M827.5 110.5h0M827.5 111.5h0M828.5 107.5h0M828.5 114.5h0M828.5 94.5h0M828.5 112.5h0M828.5 111.5h0M828.5 113.5h0M829.5 117.5h0M829.5 97.5h0M829.5 100.5h0M829.5 101.5h0M829.5 108.5h0M830.5 109.5h0M830.5 92.5h0M830.5 93.5h0M830.5 110.5h0M830.5 114.5h0M830.5 103.5h0M830.5 101.5h0M831.5 109.5h0M831.5 108.5h0M831.5 107.5h0M831.5 103.5h0M831.5 101.5h0M831.5 96.5h0M832.5 107.5h0M832.5 100.5h0M832.5 101.5h0M832.5 103.5h0M832.5 102.5h0M832.5 105.5h0M832.5 99.5h0M832.5 98.5h0M833.5 103.5h0M833.5 105.5h0M833.5 102.5h0M833.5 94.5h0M833.5 101.5h0M833.5 104.5h0M833.5 112.5h0M834.5 100.5h0M834.5 111.5h0M834.5 107.5h0M834.5 109.5h0M834.5 99.5h0M834.5 92.5h0M835.5 97.5h0M835.5 99.5h0M835.5 107.5h0M835.5 114.5h0M835.5 106.5h0M835.5 108.5h0M835.5 98.5h0M836.5 110.5h0M836.5 115.5h0M836.5 112.5h0M836.5 116.5h0M837.5 91.5h0M837.5 103.5h0M837.5 106.5h0M837.5 109.5h0M837.5 92.5h0M837.5 94.5h0M837.5 107.5h0M837.5 111.5h0M838.5 102.5h0M838.5 115.5h0M838.5 100.5h0M838.5 109.5h0M838.5 110.5h0M838.5 106.5h0M839.5 112.5h0M839.5 108.5h0M839.5 109.5h0M839.5 111.5h0M839.5 110.5h0M840.5 109.5h0M840.5 108.5h0M840.5 110.5h0M840.5 111.5h0M840.5 98.5h0M841.5 103.5h0M841.5 112.5h0M841.5 102.5h0M841.5 99.5h0M841.5 94.5h0M841.5 101.5h0M842.5 93.5h0M842.5 108.5h0M842.5 94.5h0M842.5 109.5h0M842.5 103.5h0M842.5 99.5h0M842.5 107.5h0M843.5 102.5h0M843.5 99.5h0M843.5 104.5h0M843.5 110.5h0M843.5 111.5h0M844.5 111.5h0M844.5 109.5h0M844.5 112.5h0M844.5 110.5h0M845.5 110.5h0M845.5 109.5h0M845.5 105.5h0M845.5 102.5h0M845.5 104.5h0M846.5 97.5h0M846.5 99.5h0M846.5 101.5h0M846.5 104.5h0M846.5 109.5h0M846.5 110.5h0M846.5 105.5h0M847.5 110.5h0M847.5 108.5h0M847.5 103.5h0M847.5 96.5h0M847.5 90.5h0M847.5 95.5h0M848.5 93.5h0M848.5 99.5h0M848.5 106.5h0M848.5 102.5h0M849.5 109.5h0M849.5 111.5h0M849.5 106.5h0M849.5 98.5h0M849.5 105.5h0M850.5 91.5h0M850.5 111.5h0M850.5 93.5h0M850.5 106.5h0M850.5 110.5h0M850.5 113.5h0M850.5 104.5h0M850.5 92.5h0M851.5 102.5h0M851.5 90.5h0M851.5 116.5h0M851.5 91.5h0M851.5 107.5h0M851.5 95.5h0M852.5 115.5h0M852.5 114.5h0M852.5 94.5h0M852.5 108.5h0M852.5 100.5h0M852.5 104.5h0M853.5 113.5h0M853.5 115.5h0M853.5 109.5h0M853.5 108.5h0M853.5 110.5h0M854.5 111.5h0M854.5 106.5h0M854.5 112.5h0M854.5 114.5h0M854.5 101.5h0M854.5 113.5h0M855.5 106.5h0M855.5 94.5h0M855.5 90.5h0M855.5 109.5h0M855.5 114.5h0M855.5 92.5h0M855.5 101.5h0M856.5 91.5h0M856.5 93.5h0M856.5 120.5h0M856.5 92.5h0M856.5 102.5h0M856.5 118.5h0M857.5 114.5h0M857.5 118.5h0M857.5 99.5h0M857.5 95.5h0M857.5 101.5h0M857.5 108.5h0M858.5 114.5h0M858.5 110.5h0M858.5 101.5h0M858.5 93.5h0M858.5 116.5h0M859.5 95.5h0M859.5 101.5h0M859.5 89.5h0M859.5 90.5h0M859.5 99.5h0M860.5 91.5h0M860.5 103.5h0M860.5 120.5h0M860.5 94.5h0M860.5 108.5h0M860.5 112.5h0M860.5 104.5h0M861.5 96.5h0M861.5 94.5h0M861.5 104.5h0M861.5 97.5h0M861.5 91.5h0M861.5 110.5h0M862.5 105.5h0M862.5 114.5h0M862.5 99.5h0M862.5 102.5h0M862.5 100.5h0M862.5 108.5h0M863.5 106.5h0M863.5 107.5h0M863.5 105.5h0M863.5 114.5h0M863.5 110.5h0M864.5 110.5h0M864.5 111.5h0M864.5 115.5h0M864.5 124.5h0M864.5 120.5h0M864.5 118.5h0M865.5 106.5h0M865.5 97.5h0M865.5 94.5h0M865.5 100.5h0M865.5 104.5h0M865.5 101.5h0M865.5 118.5h0M865.5 103.5h0M865.5 113.5h0M866.5 98.5h0M866.5 114.5h0M866.5 104.5h0M866.5 109.5h0M866.5 112.5h0M866.5 117.5h0M866.5 116.5h0M867.5 117.5h0M867.5 116.5h0M867.5 110.5h0M867.5 107.5h0M867.5 118.5h0M867.5 103.5h0M868.5 106.5h0M868.5 105.5h0M868.5 96.5h0M868.5 104.5h0M868.5 109.5h0M868.5 99.5h0M868.5 117.5h0M869.5 111.5h0M869.5 125.5h0M869.5 99.5h0M869.5 116.5h0M869.5 96.5h0M869.5 119.5h0M869.5 122.5h0M870.5 102.5h0M870.5 96.5h0M870.5 100.5h0M870.5 103.5h0M870.5 105.5h0M871.5 107.5h0M871.5 111.5h0M871.5 105.5h0M871.5 109.5h0M871.5 103.5h0M871.5 110.5h0M872.5 106.5h0M872.5 110.5h0M872.5 104.5h0M872.5 97.5h0M872.5 113.5h0M872.5 109.5h0M873.5 105.5h0M873.5 112.5h0M873.5 120.5h0M873.5 110.5h0M873.5 116.5h0M874.5 109.5h0M874.5 108.5h0M874.5 100.5h0M874.5 105.5h0M874.5 107.5h0M874.5 115.5h0M875.5 109.5h0M875.5 121.5h0M875.5 111.5h0M875.5 122.5h0M875.5 100.5h0M875.5 125.5h0M875.5 123.5h0M875.5 128.5h0M876.5 109.5h0M876.5 118.5h0M876.5 123.5h0M876.5 113.5h0M876.5 121.5h0M877.5 123.5h0M877.5 94.5h0M877.5 111.5h0M877.5 102.5h0M877.5 101.5h0M877.5 108.5h0M877.5 107.5h0M878.5 106.5h0M878.5 102.5h0M878.5 92.5h0M878.5 97.5h0M878.5 101.5h0M878.5 119.5h0M879.5 109.5h0M879.5 106.5h0M879.5 101.5h0M879.5 113.5h0M879.5 100.5h0M879.5 93.5h0M879.5 105.5h0M880.5 101.5h0M880.5 106.5h0M880.5 108.5h0M880.5 97.5h0M880.5 115.5h0M881.5 101.5h0M881.5 113.5h0M881.5 103.5h0M881.5 114.5h0M881.5 98.5h0M881.5 100.5h0M882.5 96.5h0M882.5 93.5h0M882.5 89.5h0M882.5 92.5h0M882.5 106.5h0M882.5 121.5h0M882.5 112.5h0M883.5 126.5h0M883.5 122.5h0M883.5 125.5h0M883.5 96.5h0M883.5 124.5h0M883.5 100.5h0M883.5 112.5h0M884.5 115.5h0M884.5 105.5h0M884.5 111.5h0M884.5 103.5h0M884.5 100.5h0M884.5 95.5h0M885.5 94.5h0M885.5 90.5h0M885.5 106.5h0M885.5 97.5h0M885.5 111.5h0M885.5 107.5h0M886.5 101.5h0M886.5 107.5h0M886.5 114.5h0M886.5 103.5h0M886.5 112.5h0M886.5 111.5h0M886.5 99.5h0M887.5 98.5h0M887.5 108.5h0M887.5 107.5h0M887.5 115.5h0M887.5 99.5h0M887.5 121.5h0M887.5 110.5h0M888.5 112.5h0M888.5 105.5h0M888.5 103.5h0M888.5 90.5h0M888.5 91.5h0M888.5 92.5h0M888.5 98.5h0M888.5 95.5h0M889.5 92.5h0M889.5 90.5h0M889.5 109.5h0M889.5 91.5h0M889.5 97.5h0M890.5 93.5h0M890.5 106.5h0M890.5 100.5h0M890.5 88.5h0M890.5 90.5h0M890.5 92.5h0M891.5 90.5h0M891.5 93.5h0M891.5 99.5h0M891.5 91.5h0M891.5 96.5h0M891.5 113.5h0M892.5 101.5h0M892.5 107.5h0M892.5 118.5h0M892.5 108.5h0M892.5 114.5h0M892.5 110.5h0M892.5 106.5h0M892.5 115.5h0M893.5 114.5h0M893.5 105.5h0M893.5 113.5h0M893.5 102.5h0M893.5 115.5h0M893.5 107.5h0M894.5 113.5h0M894.5 107.5h0M894.5 108.5h0M894.5 103.5h0M894.5 116.5h0M894.5 110.5h0M895.5 110.5h0M895.5 105.5h0M895.5 118.5h0M895.5 116.5h0M895.5 112.5h0M896.5 105.5h0M896.5 103.5h0M896.5 100.5h0M896.5 101.5h0M897.5 105.5h0M897.5 116.5h0M897.5 113.5h0M898.5 105.5h0M898.5 107.5h0M898.5 121.5h0M898.5 97.5h0M898.5 106.5h0M898.5 111.5h0M898.5 114.5h0M898.5 108.5h0M899.5 115.5h0M899.5 105.5h0M899.5 121.5h0M899.5 100.5h0M899.5 119.5h0M899.5 102.5h0M899.5 116.5h0M900.5 124.5h0M900.5 114.5h0M900.5 117.5h0M900.5 115.5h0M900.5 122.5h0M900.5 127.5h0M901.5 123.5h0M901.5 121.5h0M901.5 120.5h0M901.5 125.5h0M901.5 119.5h0M901.5 97.5h0M901.5 108.5h0M902.5 110.5h0M902.5 123.5h0M902.5 104.5h0M902.5 122.5h0M902.5 99.5h0M902.5 112.5h0M903.5 97.5h0M903.5 115.5h0M903.5 106.5h0M903.5 110.5h0M903.5 102.5h0M903.5 109.5h0M903.5 112.5h0M904.5 115.5h0M904.5 117.5h0M904.5 107.5h0M904.5 118.5h0M904.5 120.5h0M904.5 108.5h0M905.5 114.5h0M905.5 105.5h0M905.5 107.5h0M905.5 112.5h0M905.5 118.5h0M905.5 113.5h0M905.5 117.5h0M906.5 117.5h0M906.5 116.5h0M906.5 98.5h0M906.5 106.5h0M907.5 101.5h0M907.5 104.5h0M907.5 110.5h0M907.5 120.5h0M907.5 112.5h0M907.5 99.5h0M908.5 103.5h0M908.5 108.5h0M908.5 109.5h0M908.5 114.5h0M908.5 122.5h0M908.5 107.5h0M909.5 115.5h0M909.5 109.5h0M909.5 106.5h0M909.5 117.5h0M909.5 118.5h0M909.5 120.5h0M909.5 116.5h0M910.5 112.5h0M910.5 121.5h0M910.5 122.5h0M910.5 118.5h0M910.5 123.5h0M911.5 115.5h0M911.5 114.5h0M911.5 120.5h0M911.5 110.5h0M911.5 111.5h0M911.5 106.5h0M911.5 108.5h0M912.5 115.5h0M912.5 110.5h0M912.5 107.5h0M912.5 117.5h0M912.5 124.5h0M912.5 118.5h0M912.5 116.5h0M913.5 118.5h0M913.5 124.5h0M913.5 120.5h0M913.5 121.5h0M913.5 116.5h0M913.5 117.5h0M914.5 116.5h0M914.5 114.5h0M914.5 109.5h0M914.5 117.5h0M914.5 118.5h0M914.5 113.5h0M915.5 116.5h0M915.5 118.5h0M915.5 117.5h0M915.5 115.5h0M916.5 113.5h0M916.5 115.5h0M916.5 108.5h0M916.5 110.5h0M916.5 118.5h0M917.5 116.5h0M917.5 104.5h0M917.5 114.5h0M917.5 115.5h0M918.5 105.5h0M918.5 118.5h0M918.5 115.5h0M918.5 114.5h0M918.5 111.5h0M919.5 120.5h0M919.5 123.5h0M919.5 111.5h0M919.5 114.5h0M919.5 110.5h0M919.5 118.5h0M919.5 112.5h0M919.5 116.5h0M919.5 117.5h0M920.5 125.5h0M920.5 109.5h0M920.5 121.5h0M920.5 112.5h0M920.5 99.5h0M920.5 97.5h0M920.5 95.5h0M921.5 99.5h0M921.5 113.5h0M921.5 98.5h0M921.5 103.5h0M921.5 102.5h0M921.5 116.5h0M921.5 106.5h0M921.5 104.5h0M922.5 102.5h0M922.5 112.5h0M922.5 116.5h0M922.5 113.5h0M922.5 114.5h0M922.5 107.5h0M923.5 112.5h0M923.5 114.5h0M923.5 117.5h0M923.5 105.5h0M923.5 111.5h0M923.5 100.5h0M924.5 104.5h0M924.5 109.5h0M924.5 97.5h0M924.5 114.5h0M924.5 127.5h0M924.5 116.5h0M924.5 120.5h0M924.5 105.5h0M925.5 125.5h0M925.5 110.5h0M925.5 95.5h0M925.5 94.5h0M925.5 102.5h0M926.5 111.5h0M926.5 110.5h0M926.5 102.5h0M926.5 104.5h0M926.5 100.5h0M926.5 101.5h0M926.5 97.5h0M927.5 98.5h0M927.5 100.5h0M927.5 110.5h0M927.5 119.5h0M927.5 116.5h0M927.5 117.5h0M927.5 115.5h0M927.5 113.5h0M928.5 106.5h0M928.5 114.5h0M928.5 112.5h0M928.5 108.5h0M929.5 117.5h0M929.5 103.5h0M929.5 106.5h0M929.5 115.5h0M929.5 113.5h0M929.5 110.5h0M929.5 102.5h0M929.5 122.5h0M930.5 118.5h0M930.5 113.5h0M930.5 104.5h0M930.5 106.5h0M930.5 100.5h0M930.5 102.5h0M930.5 109.5h0M931.5 107.5h0M931.5 104.5h0M931.5 103.5h0M931.5 112.5h0M931.5 108.5h0M932.5 107.5h0M932.5 110.5h0M932.5 112.5h0M932.5 111.5h0M932.5 119.5h0M932.5 116.5h0M933.5 113.5h0M933.5 110.5h0M933.5 112.5h0M933.5 117.5h0M933.5 111.5h0M933.5 118.5h0M933.5 119.5h0M934.5 114.5h0M934.5 113.5h0M934.5 111.5h0M934.5 115.5h0M934.5 110.5h0M935.5 115.5h0M935.5 111.5h0M935.5 118.5h0M935.5 107.5h0M935.5 102.5h0M935.5 105.5h0M936.5 117.5h0M936.5 106.5h0M936.5 121.5h0M936.5 111.5h0M936.5 109.5h0M936.5 112.5h0M936.5 110.5h0M937.5 106.5h0M937.5 104.5h0M937.5 111.5h0M937.5 116.5h0M937.5 114.5h0M937.5 108.5h0M937.5 115.5h0M938.5 118.5h0M938.5 110.5h0M938.5 114.5h0M938.5 111.5h0M938.5 130.5h0M938.5 113.5h0M939.5 103.5h0M939.5 104.5h0M939.5 108.5h0M939.5 112.5h0M939.5 116.5h0M939.5 113.5h0M939.5 123.5h0M940.5 127.5h0M940.5 112.5h0M940.5 115.5h0M940.5 116.5h0M940.5 113.5h0M940.5 120.5h0M940.5 125.5h0M941.5 116.5h0M941.5 119.5h0M941.5 122.5h0M941.5 125.5h0M941.5 112.5h0M941.5 110.5h0M942.5 116.5h0M942.5 117.5h0M942.5 109.5h0M942.5 126.5h0M942.5 121.5h0M942.5 127.5h0M943.5 119.5h0M943.5 117.5h0M943.5 114.5h0M943.5 128.5h0M944.5 129.5h0M944.5 104.5h0M944.5 102.5h0M944.5 123.5h0M944.5 128.5h0M944.5 122.5h0M944.5 110.5h0M944.5 111.5h0M945.5 120.5h0M945.5 129.5h0M945.5 132.5h0M945.5 125.5h0M945.5 112.5h0M945.5 121.5h0M945.5 122.5h0M946.5 109.5h0M946.5 108.5h0M946.5 122.5h0M946.5 111.5h0M946.5 128.5h0M946.5 104.5h0M946.5 112.5h0M947.5 133.5h0M947.5 122.5h0M947.5 113.5h0M947.5 112.5h0M947.5 105.5h0M947.5 125.5h0M948.5 112.5h0M948.5 109.5h0M948.5 101.5h0M948.5 108.5h0M948.5 103.5h0M948.5 106.5h0M949.5 120.5h0M949.5 112.5h0M949.5 118.5h0M949.5 111.5h0M949.5 116.5h0M949.5 113.5h0M949.5 110.5h0M950.5 109.5h0M950.5 110.5h0M950.5 116.5h0M950.5 108.5h0M950.5 115.5h0M950.5 118.5h0M951.5 117.5h0M951.5 110.5h0M951.5 107.5h0M951.5 112.5h0M951.5 115.5h0M951.5 109.5h0M952.5 112.5h0M952.5 115.5h0M952.5 116.5h0M952.5 110.5h0M952.5 114.5h0M953.5 117.5h0M953.5 112.5h0M953.5 109.5h0M954.5 105.5h0M954.5 107.5h0M954.5 112.5h0M954.5 118.5h0M954.5 113.5h0M954.5 110.5h0M954.5 109.5h0M955.5 102.5h0M955.5 106.5h0M955.5 108.5h0M955.5 115.5h0M955.5 111.5h0M955.5 109.5h0M955.5 105.5h0M956.5 108.5h0M956.5 101.5h0M956.5 113.5h0M956.5 119.5h0M956.5 117.5h0M956.5 111.5h0M956.5 115.5h0M957.5 111.5h0M957.5 118.5h0M957.5 107.5h0M957.5 101.5h0M957.5 105.5h0M957.5 115.5h0M958.5 116.5h0M958.5 104.5h0M958.5 103.5h0M958.5 120.5h0M958.5 115.5h0M959.5 113.5h0M959.5 122.5h0M959.5 111.5h0M959.5 116.5h0M959.5 115.5h0M959.5 114.5h0M960.5 105.5h0M960.5 110.5h0M960.5 102.5h0M960.5 101.5h0M960.5 107.5h0M960.5 103.5h0M961.5 97.5h0M961.5 98.5h0M961.5 119.5h0M961.5 102.5h0M962.5 98.5h0M962.5 96.5h0M962.5 107.5h0M962.5 109.5h0M962.5 103.5h0M962.5 119.5h0M962.5 124.5h0M963.5 129.5h0M963.5 105.5h0M963.5 116.5h0M963.5 112.5h0M963.5 111.5h0M963.5 109.5h0M963.5 103.5h0M964.5 109.5h0M964.5 113.5h0M964.5 116.5h0M964.5 115.5h0M964.5 112.5h0M964.5 107.5h0M964.5 114.5h0M965.5 112.5h0M965.5 105.5h0M965.5 108.5h0M965.5 106.5h0M965.5 113.5h0M965.5 103.5h0M966.5 101.5h0M966.5 107.5h0M966.5 110.5h0M966.5 106.5h0M966.5 114.5h0M966.5 123.5h0M967.5 119.5h0M967.5 115.5h0M967.5 117.5h0M967.5 104.5h0M967.5 123.5h0M967.5 110.5h0M968.5 120.5h0M968.5 101.5h0M968.5 111.5h0M968.5 104.5h0M968.5 106.5h0M968.5 115.5h0M969.5 118.5h0M969.5 113.5h0M969.5 117.5h0M969.5 112.5h0M969.5 116.5h0M969.5 109.5h0M969.5 114.5h0M969.5 115.5h0M969.5 125.5h0M970.5 121.5h0M970.5 109.5h0M970.5 122.5h0M970.5 113.5h0M970.5 119.5h0M970.5 108.5h0M970.5 111.5h0M971.5 106.5h0M971.5 99.5h0M971.5 109.5h0M971.5 103.5h0M971.5 122.5h0M971.5 115.5h0M972.5 109.5h0M972.5 113.5h0M972.5 111.5h0M972.5 102.5h0M972.5 101.5h0M972.5 105.5h0M972.5 112.5h0M973.5 103.5h0M973.5 106.5h0M973.5 116.5h0M973.5 113.5h0M973.5 107.5h0M973.5 105.5h0M974.5 110.5h0M974.5 122.5h0M974.5 104.5h0M974.5 112.5h0M974.5 117.5h0M974.5 113.5h0M974.5 114.5h0M974.5 129.5h0M975.5 117.5h0M975.5 118.5h0M975.5 126.5h0M975.5 124.5h0M976.5 133.5h0M976.5 125.5h0M976.5 119.5h0M976.5 123.5h0M976.5 116.5h0M976.5 126.5h0M976.5 108.5h0M977.5 117.5h0M977.5 109.5h0M977.5 115.5h0M977.5 112.5h0M977.5 124.5h0M977.5 121.5h0M977.5 116.5h0M978.5 110.5h0M978.5 127.5h0M978.5 118.5h0M978.5 121.5h0M978.5 112.5h0M979.5 118.5h0M979.5 110.5h0M979.5 111.5h0M979.5 108.5h0M979.5 114.5h0M979.5 109.5h0M980.5 112.5h0M980.5 127.5h0M980.5 130.5h0M980.5 131.5h0M980.5 119.5h0M980.5 122.5h0M981.5 130.5h0M981.5 116.5h0M981.5 113.5h0M981.5 102.5h0M981.5 100.5h0M981.5 120.5h0M982.5 110.5h0M982.5 130.5h0M982.5 112.5h0M982.5 123.5h0M983.5 114.5h0M983.5 117.5h0M983.5 111.5h0M983.5 124.5h0M983.5 113.5h0M983.5 109.5h0M983.5 110.5h0M984.5 109.5h0M984.5 115.5h0M984.5 104.5h0M984.5 121.5h0M984.5 110.5h0M984.5 123.5h0M984.5 117.5h0M985.5 127.5h0M985.5 105.5h0M985.5 107.5h0M985.5 111.5h0M986.5 102.5h0M986.5 123.5h0M986.5 111.5h0M986.5 131.5h0M986.5 130.5h0M987.5 119.5h0M987.5 130.5h0M987.5 113.5h0M987.5 121.5h0M987.5 112.5h0M987.5 107.5h0M988.5 113.5h0M988.5 115.5h0M988.5 106.5h0M988.5 122.5h0M988.5 98.5h0M988.5 103.5h0M989.5 109.5h0M989.5 105.5h0M989.5 104.5h0M989.5 106.5h0M989.5 112.5h0M989.5 111.5h0M990.5 116.5h0M990.5 112.5h0M990.5 118.5h0M990.5 107.5h0M990.5 119.5h0M990.5 115.5h0M990.5 111.5h0M991.5 110.5h0M991.5 122.5h0M991.5 117.5h0M991.5 116.5h0M991.5 115.5h0M991.5 120.5h0M991.5 119.5h0M992.5 103.5h0M992.5 102.5h0M992.5 115.5h0M992.5 107.5h0M992.5 110.5h0M992.5 108.5h0M992.5 109.5h0M992.5 112.5h0M993.5 107.5h0M993.5 117.5h0M993.5 116.5h0M993.5 111.5h0M993.5 120.5h0M993.5 115.5h0M993.5 114.5h0M994.5 111.5h0M994.5 118.5h0M994.5 121.5h0M994.5 116.5h0M994.5 110.5h0M995.5 117.5h0M995.5 112.5h0M995.5 114.5h0M995.5 113.5h0M995.5 115.5h0M995.5 116.5h0M995.5 111.5h0M996.5 113.5h0M996.5 111.5h0M996.5 114.5h0M996.5 115.5h0M996.5 110.5h0M997.5 113.5h0M997.5 118.5h0M997.5 119.5h0M998.5 121.5h0M998.5 106.5h0M998.5 119.5h0M998.5 117.5h0M998.5 126.5h0M998.5 116.5h0M999.5 117.5h0M999.5 122.5h0M999.5 116.5h0M999.5 102.5h0M999.5 121.5h0M999.5 114.5h0M1000.5 115.5h0M1000.5 120.5h0M1000.5 105.5h0M1000.5 110.5h0M1000.5 114.5h0M1000.5 116.5h0M1001.5 116.5h0M1001.5 108.5h0M1001.5 117.5h0M1001.5 109.5h0M1001.5 121.5h0M1001.5 127.5h0M1002.5 112.5h0M1002.5 122.5h0M1002.5 100.5h0M1002.5 101.5h0M1002.5 110.5h0M1002.5 125.5h0M1002.5 126.5h0M1002.5 127.5h0M1003.5 105.5h0M1003.5 110.5h0M1003.5 107.5h0M1003.5 115.5h0M1003.5 101.5h0M1003.5 121.5h0M1003.5 103.5h0M1003.5 114.5h0M1004.5 128.5h0M1004.5 102.5h0M1004.5 114.5h0M1004.5 113.5h0M1004.5 112.5h0M1004.5 111.5h0M1005.5 117.5h0M1005.5 110.5h0M1005.5 128.5h0M1005.5 118.5h0M1005.5 125.5h0M1005.5 119.5h0M1005.5 126.5h0M1005.5 108.5h0M1006.5 129.5h0M1006.5 128.5h0M1006.5 105.5h0M1006.5 121.5h0M1007.5 112.5h0M1007.5 116.5h0M1007.5 119.5h0M1007.5 125.5h0M1007.5 129.5h0M1007.5 118.5h0M1007.5 126.5h0M1007.5 122.5h0M1008.5 127.5h0M1008.5 124.5h0M1008.5 123.5h0M1008.5 121.5h0M1008.5 125.5h0M1008.5 110.5h0M1008.5 115.5h0M1008.5 119.5h0M1009.5 119.5h0M1009.5 120.5h0M1009.5 121.5h0M1009.5 124.5h0M1009.5 112.5h0M1009.5 123.5h0M1010.5 106.5h0M1010.5 102.5h0M1010.5 116.5h0M1010.5 115.5h0M1010.5 108.5h0M1011.5 113.5h0M1011.5 118.5h0M1011.5 123.5h0M1011.5 117.5h0M1011.5 114.5h0M1011.5 112.5h0M1012.5 110.5h0M1012.5 114.5h0M1012.5 115.5h0M1012.5 111.5h0M1012.5 109.5h0M1013.5 110.5h0M1013.5 112.5h0M1013.5 111.5h0M1013.5 107.5h0M1013.5 114.5h0M1013.5 104.5h0M1014.5 113.5h0M1014.5 120.5h0M1014.5 102.5h0M1014.5 117.5h0M1014.5 103.5h0M1014.5 108.5h0M1014.5 110.5h0M1015.5 108.5h0M1015.5 111.5h0M1015.5 112.5h0M1015.5 99.5h0M1015.5 117.5h0M1015.5 107.5h0M1015.5 116.5h0M1016.5 118.5h0M1016.5 114.5h0M1016.5 117.5h0M1016.5 101.5h0M1016.5 107.5h0M1016.5 113.5h0M1017.5 116.5h0M1017.5 112.5h0M1017.5 111.5h0M1017.5 113.5h0M1017.5 108.5h0M1017.5 106.5h0M1017.5 103.5h0M1018.5 98.5h0M1018.5 117.5h0M1018.5 111.5h0M1018.5 102.5h0M1018.5 107.5h0M1019.5 116.5h0M1019.5 117.5h0M1019.5 110.5h0M1019.5 104.5h0M1019.5 120.5h0M1019.5 106.5h0M1020.5 116.5h0M1020.5 110.5h0M1020.5 109.5h0M1020.5 111.5h0M1021.5 117.5h0M1021.5 119.5h0M1021.5 120.5h0M1021.5 121.5h0M1021.5 116.5h0M1021.5 110.5h0M1022.5 113.5h0M1022.5 115.5h0M1022.5 109.5h0M1022.5 107.5h0M1022.5 116.5h0M1022.5 114.5h0M1022.5 117.5h0M1023.5 114.5h0M1023.5 109.5h0M1023.5 110.5h0M1023.5 116.5h0M1023.5 105.5h0M1023.5 118.5h0M1024.5 120.5h0M1024.5 125.5h0M1024.5 124.5h0M1024.5 130.5h0M1024.5 97.5h0M1024.5 98.5h0M1024.5 99.5h0M1024.5 118.5h0M1025.5 114.5h0M1025.5 99.5h0M1025.5 119.5h0M1025.5 117.5h0M1025.5 95.5h0M1026.5 115.5h0M1026.5 103.5h0M1026.5 108.5h0M1026.5 105.5h0M1026.5 113.5h0M1027.5 122.5h0M1027.5 116.5h0M1027.5 127.5h0M1027.5 114.5h0M1027.5 113.5h0M1027.5 118.5h0M1027.5 105.5h0M1027.5 100.5h0M1028.5 103.5h0M1028.5 97.5h0M1028.5 115.5h0M1028.5 96.5h0M1028.5 108.5h0M1028.5 102.5h0M1028.5 107.5h0M1029.5 122.5h0M1029.5 109.5h0M1029.5 112.5h0M1029.5 124.5h0M1029.5 127.5h0M1029.5 117.5h0M1030.5 110.5h0M1030.5 130.5h0M1030.5 124.5h0M1030.5 118.5h0M1030.5 126.5h0M1030.5 117.5h0M1031.5 118.5h0M1031.5 119.5h0M1031.5 116.5h0M1031.5 112.5h0M1031.5 123.5h0M1031.5 106.5h0M1031.5 104.5h0M1032.5 106.5h0M1032.5 112.5h0M1032.5 122.5h0M1032.5 109.5h0M1032.5 104.5h0M1032.5 117.5h0M1033.5 116.5h0M1033.5 108.5h0M1033.5 120.5h0M1033.5 121.5h0M1033.5 111.5h0M1033.5 104.5h0M1033.5 113.5h0M1034.5 122.5h0M1034.5 97.5h0M1034.5 102.5h0M1034.5 106.5h0M1034.5 113.5h0M1035.5 119.5h0M1035.5 117.5h0M1035.5 101.5h0M1035.5 121.5h0M1035.5 118.5h0M1035.5 110.5h0M1035.5 115.5h0M1036.5 114.5h0M1036.5 116.5h0M1036.5 108.5h0M1036.5 122.5h0M1036.5 105.5h0M1036.5 107.5h0M1036.5 123.5h0M1037.5 121.5h0M1037.5 132.5h0M1037.5 115.5h0M1037.5 105.5h0M1037.5 97.5h0M1037.5 133.5h0M1038.5 127.5h0M1038.5 108.5h0M1038.5 129.5h0M1038.5 109.5h0M1038.5 101.5h0M1038.5 111.5h0M1038.5 123.5h0M1038.5 119.5h0M1039.5 117.5h0M1039.5 124.5h0M1039.5 125.5h0M1039.5 114.5h0M1039.5 109.5h0M1039.5 113.5h0M1039.5 118.5h0M1040.5 114.5h0M1040.5 109.5h0M1040.5 119.5h0M1040.5 111.5h0M1041.5 116.5h0M1041.5 115.5h0M1041.5 114.5h0M1041.5 111.5h0M1041.5 121.5h0M1041.5 118.5h0M1042.5 112.5h0M1042.5 118.5h0M1042.5 123.5h0M1042.5 115.5h0M1042.5 121.5h0M1042.5 122.5h0M1042.5 120.5h0M1043.5 121.5h0M1043.5 118.5h0M1043.5 112.5h0M1043.5 109.5h0M1043.5 119.5h0M1044.5 115.5h0M1044.5 112.5h0M1044.5 110.5h0M1044.5 114.5h0M1044.5 109.5h0M1045.5 111.5h0M1045.5 113.5h0M1045.5 119.5h0M1045.5 114.5h0M1045.5 115.5h0M1046.5 110.5h0M1046.5 117.5h0M1046.5 113.5h0M1046.5 107.5h0M1046.5 109.5h0M1046.5 103.5h0M1046.5 111.5h0M1046.5 108.5h0M1047.5 110.5h0M1047.5 116.5h0M1047.5 114.5h0M1047.5 112.5h0M1048.5 108.5h0M1048.5 112.5h0M1048.5 117.5h0M1048.5 114.5h0M1048.5 115.5h0M1048.5 119.5h0M1049.5 110.5h0M1049.5 118.5h0M1049.5 115.5h0M1049.5 116.5h0M1049.5 100.5h0M1049.5 106.5h0M1050.5 120.5h0M1050.5 116.5h0M1050.5 107.5h0M1050.5 115.5h0M1050.5 106.5h0M1050.5 124.5h0M1051.5 113.5h0M1051.5 120.5h0M1051.5 116.5h0M1051.5 112.5h0M1052.5 105.5h0M1052.5 106.5h0M1052.5 109.5h0M1052.5 117.5h0M1052.5 113.5h0M1053.5 110.5h0M1053.5 111.5h0M1053.5 106.5h0M1053.5 117.5h0M1053.5 121.5h0M1053.5 118.5h0M1053.5 113.5h0M1054.5 114.5h0M1054.5 123.5h0M1054.5 119.5h0M1055.5 115.5h0M1055.5 117.5h0M1055.5 120.5h0M1055.5 110.5h0M1055.5 104.5h0M1055.5 97.5h0M1056.5 103.5h0M1056.5 106.5h0M1056.5 123.5h0M1056.5 109.5h0M1056.5 105.5h0M1056.5 112.5h0M1056.5 113.5h0M1056.5 118.5h0M1057.5 106.5h0M1057.5 116.5h0M1057.5 126.5h0M1057.5 124.5h0M1057.5 99.5h0M1057.5 108.5h0M1057.5 100.5h0M1058.5 123.5h0M1058.5 109.5h0M1058.5 104.5h0M1058.5 107.5h0M1058.5 119.5h0M1058.5 117.5h0M1059.5 109.5h0M1059.5 104.5h0M1059.5 105.5h0M1059.5 106.5h0M1060.5 106.5h0M1060.5 105.5h0M1060.5 109.5h0M1060.5 117.5h0M1060.5 108.5h0M1060.5 101.5h0M1061.5 100.5h0M1061.5 105.5h0M1061.5 99.5h0M1061.5 106.5h0M1061.5 102.5h0M1061.5 107.5h0M1061.5 112.5h0M1062.5 119.5h0M1062.5 126.5h0M1062.5 113.5h0M1062.5 110.5h0M1062.5 107.5h0M1062.5 115.5h0M1063.5 131.5h0M1063.5 101.5h0M1063.5 111.5h0M1063.5 107.5h0M1063.5 116.5h0M1064.5 112.5h0M1064.5 127.5h0M1064.5 125.5h0M1064.5 115.5h0M1064.5 129.5h0M1065.5 123.5h0M1065.5 109.5h0M1065.5 113.5h0M1065.5 108.5h0M1065.5 112.5h0M1065.5 102.5h0M1066.5 107.5h0M1066.5 113.5h0M1066.5 131.5h0M1066.5 110.5h0M1066.5 119.5h0M1066.5 100.5h0M1066.5 129.5h0M1067.5 109.5h0M1067.5 102.5h0M1067.5 118.5h0M1067.5 106.5h0M1067.5 104.5h0M1068.5 115.5h0M1068.5 110.5h0M1068.5 105.5h0M1068.5 116.5h0M1068.5 109.5h0M1068.5 119.5h0M1068.5 117.5h0M1069.5 121.5h0M1069.5 119.5h0M1069.5 116.5h0M1069.5 126.5h0M1070.5 123.5h0M1070.5 122.5h0M1070.5 112.5h0M1070.5 115.5h0M1070.5 107.5h0M1070.5 101.5h0M1071.5 116.5h0M1071.5 100.5h0M1071.5 111.5h0M1071.5 110.5h0M1071.5 108.5h0M1071.5 107.5h0M1071.5 122.5h0M1072.5 113.5h0M1072.5 109.5h0M1072.5 118.5h0M1072.5 120.5h0M1072.5 111.5h0M1072.5 98.5h0M1073.5 97.5h0M1073.5 102.5h0M1073.5 101.5h0M1073.5 103.5h0M1073.5 106.5h0M1073.5 110.5h0M1074.5 101.5h0M1074.5 115.5h0M1074.5 109.5h0M1074.5 110.5h0M1074.5 112.5h0M1074.5 111.5h0M1074.5 104.5h0M1075.5 109.5h0M1075.5 105.5h0M1075.5 104.5h0M1075.5 99.5h0M1075.5 111.5h0M1075.5 114.5h0M1076.5 121.5h0M1076.5 116.5h0M1076.5 109.5h0M1076.5 112.5h0M1076.5 113.5h0M1076.5 111.5h0M1077.5 112.5h0M1077.5 114.5h0M1077.5 115.5h0M1077.5 113.5h0M1078.5 117.5h0M1078.5 113.5h0M1078.5 110.5h0M1078.5 115.5h0M1078.5 116.5h0M1079.5 117.5h0M1079.5 114.5h0M1079.5 115.5h0M1079.5 121.5h0M1079.5 128.5h0M1079.5 124.5h0M1080.5 114.5h0M1080.5 116.5h0M1080.5 103.5h0M1080.5 121.5h0M1080.5 128.5h0M1080.5 124.5h0M1081.5 110.5h0M1081.5 126.5h0M1081.5 115.5h0M1081.5 117.5h0M1081.5 113.5h0M1081.5 122.5h0M1082.5 114.5h0M1082.5 113.5h0M1082.5 118.5h0M1082.5 116.5h0M1082.5 111.5h0M1082.5 112.5h0M1083.5 116.5h0M1083.5 112.5h0M1083.5 115.5h0M1083.5 119.5h0M1084.5 116.5h0M1084.5 118.5h0M1084.5 113.5h0M1084.5 117.5h0M1085.5 114.5h0M1085.5 116.5h0M1085.5 124.5h0M1085.5 121.5h0M1085.5 127.5h0M1085.5 130.5h0M1086.5 127.5h0M1086.5 103.5h0M1086.5 117.5h0M1086.5 129.5h0M1086.5 131.5h0M1087.5 129.5h0M1087.5 120.5h0M1087.5 116.5h0M1087.5 115.5h0M1087.5 98.5h0M1087.5 124.5h0M1088.5 130.5h0M1088.5 111.5h0M1088.5 129.5h0M1088.5 131.5h0M1088.5 119.5h0M1088.5 127.5h0M1088.5 107.5h0M1088.5 122.5h0M1089.5 121.5h0M1089.5 127.5h0M1089.5 117.5h0M1089.5 110.5h0M1089.5 114.5h0M1089.5 115.5h0M1089.5 126.5h0M1089.5 113.5h0M1090.5 112.5h0M1090.5 115.5h0M1090.5 110.5h0M1090.5 117.5h0M1090.5 118.5h0M1090.5 116.5h0M1091.5 117.5h0M1091.5 122.5h0M1091.5 121.5h0M1091.5 123.5h0M1091.5 115.5h0M1092.5 129.5h0M1092.5 107.5h0M1092.5 130.5h0M1092.5 114.5h0M1092.5 123.5h0M1093.5 124.5h0M1093.5 111.5h0M1093.5 114.5h0M1093.5 112.5h0M1094.5 107.5h0M1094.5 116.5h0M1094.5 109.5h0M1094.5 123.5h0M1094.5 129.5h0M1094.5 130.5h0M1094.5 124.5h0M1095.5 133.5h0M1095.5 124.5h0M1095.5 131.5h0M1095.5 127.5h0M1096.5 123.5h0M1096.5 126.5h0M1096.5 115.5h0M1097.5 130.5h0M1097.5 115.5h0M1097.5 112.5h0M1097.5 114.5h0M1097.5 116.5h0M1097.5 108.5h0M1098.5 115.5h0M1098.5 109.5h0M1098.5 113.5h0M1098.5 119.5h0M1099.5 111.5h0M1099.5 119.5h0M1099.5 125.5h0M1099.5 115.5h0M1099.5 98.5h0M1099.5 116.5h0M1099.5 123.5h0M1099.5 103.5h0M1100.5 107.5h0M1100.5 109.5h0M1100.5 110.5h0M1100.5 99.5h0M1100.5 101.5h0M1101.5 111.5h0M1101.5 123.5h0M1101.5 102.5h0M1101.5 117.5h0M1101.5 115.5h0M1101.5 118.5h0M1101.5 113.5h0M1101.5 107.5h0M1102.5 101.5h0M1102.5 108.5h0M1102.5 106.5h0M1102.5 114.5h0M1102.5 116.5h0M1102.5 115.5h0M1102.5 123.5h0M1103.5 126.5h0M1103.5 129.5h0M1103.5 119.5h0M1103.5 122.5h0M1103.5 123.5h0M1103.5 117.5h0M1104.5 112.5h0M1104.5 107.5h0M1104.5 110.5h0M1104.5 115.5h0M1104.5 114.5h0M1104.5 108.5h0M1105.5 110.5h0M1105.5 114.5h0M1105.5 112.5h0M1105.5 116.5h0M1106.5 110.5h0M1106.5 118.5h0M1106.5 112.5h0M1106.5 116.5h0M1106.5 111.5h0M1107.5 114.5h0M1107.5 120.5h0M1107.5 118.5h0M1107.5 110.5h0M1107.5 103.5h0M1107.5 112.5h0M1107.5 108.5h0M1108.5 110.5h0M1108.5 106.5h0M1108.5 108.5h0M1108.5 112.5h0M1108.5 101.5h0M1108.5 119.5h0M1108.5 97.5h0M1109.5 124.5h0M1109.5 115.5h0M1109.5 123.5h0M1109.5 107.5h0M1109.5 120.5h0M1109.5 111.5h0M1109.5 117.5h0M1109.5 119.5h0M1110.5 120.5h0M1110.5 124.5h0M1110.5 116.5h0M1110.5 118.5h0M1110.5 119.5h0M1110.5 113.5h0M1111.5 117.5h0M1111.5 114.5h0M1111.5 115.5h0M1111.5 116.5h0M1111.5 120.5h0M1112.5 114.5h0M1112.5 116.5h0M1112.5 118.5h0M1112.5 117.5h0M1113.5 115.5h0M1113.5 116.5h0M1113.5 119.5h0M1113.5 113.5h0M1114.5 113.5h0M1114.5 115.5h0M1114.5 123.5h0M1114.5 106.5h0M1114.5 99.5h0M1114.5 103.5h0M1114.5 119.5h0M1115.5 104.5h0M1115.5 120.5h0M1115.5 118.5h0M1115.5 114.5h0M1115.5 115.5h0M1116.5 114.5h0M1116.5 110.5h0M1116.5 116.5h0M1116.5 117.5h0M1116.5 113.5h0M1117.5 114.5h0M1117.5 116.5h0M1117.5 119.5h0M1117.5 117.5h0M1117.5 118.5h0M1118.5 115.5h0M1118.5 113.5h0M1118.5 116.5h0M1118.5 114.5h0M1118.5 107.5h0M1118.5 111.5h0M1119.5 100.5h0M1119.5 103.5h0M1119.5 119.5h0M1119.5 113.5h0M1119.5 112.5h0M1119.5 105.5h0M1120.5 110.5h0M1120.5 113.5h0M1120.5 115.5h0M1120.5 116.5h0M1120.5 114.5h0M1120.5 111.5h0M1121.5 115.5h0M1121.5 117.5h0M1121.5 110.5h0M1121.5 114.5h0M1121.5 103.5h0M1122.5 115.5h0M1122.5 116.5h0M1122.5 107.5h0M1122.5 112.5h0M1122.5 113.5h0M1123.5 114.5h0M1123.5 112.5h0M1123.5 109.5h0M1123.5 110.5h0M1123.5 105.5h0M1123.5 103.5h0M1124.5 110.5h0M1124.5 116.5h0M1124.5 108.5h0M1124.5 119.5h0M1124.5 114.5h0M1124.5 111.5h0M1125.5 113.5h0M1125.5 111.5h0M1125.5 118.5h0M1125.5 116.5h0M1125.5 110.5h0M1125.5 106.5h0M1126.5 103.5h0M1126.5 110.5h0M1126.5 106.5h0M1126.5 115.5h0M1126.5 114.5h0M1126.5 109.5h0M1127.5 116.5h0M1127.5 114.5h0M1127.5 110.5h0M1127.5 112.5h0M1127.5 115.5h0M1127.5 102.5h0M1128.5 118.5h0M1128.5 114.5h0M1128.5 108.5h0M1128.5 105.5h0M1128.5 120.5h0M1128.5 97.5h0M1129.5 99.5h0M1129.5 111.5h0M1129.5 105.5h0M1129.5 120.5h0M1129.5 124.5h0M1130.5 95.5h0M1130.5 102.5h0M1130.5 111.5h0M1130.5 97.5h0M1130.5 117.5h0M1130.5 100.5h0M1131.5 106.5h0M1131.5 96.5h0M1131.5 102.5h0M1131.5 116.5h0M1131.5 109.5h0M1131.5 112.5h0M1131.5 107.5h0M1132.5 106.5h0M1132.5 105.5h0M1132.5 103.5h0M1132.5 112.5h0M1133.5 97.5h0M1133.5 104.5h0M1133.5 113.5h0M1133.5 110.5h0M1133.5 115.5h0M1133.5 106.5h0M1134.5 108.5h0M1134.5 110.5h0M1134.5 104.5h0M1134.5 114.5h0M1135.5 108.5h0M1135.5 110.5h0M1135.5 114.5h0M1135.5 111.5h0M1135.5 107.5h0M1136.5 113.5h0M1136.5 118.5h0M1136.5 101.5h0M1136.5 117.5h0M1136.5 107.5h0M1136.5 115.5h0M1137.5 108.5h0M1137.5 95.5h0M1137.5 96.5h0M1137.5 105.5h0M1137.5 115.5h0M1137.5 109.5h0M1138.5 108.5h0M1138.5 106.5h0M1138.5 105.5h0M1138.5 101.5h0M1138.5 112.5h0M1138.5 118.5h0M1138.5 123.5h0M1138.5 122.5h0M1139.5 114.5h0M1139.5 115.5h0M1139.5 121.5h0M1139.5 119.5h0M1139.5 122.5h0M1139.5 118.5h0M1139.5 126.5h0M1140.5 110.5h0M1140.5 118.5h0M1140.5 112.5h0M1140.5 125.5h0M1140.5 114.5h0M1141.5 108.5h0M1141.5 111.5h0M1141.5 114.5h0M1141.5 121.5h0M1141.5 118.5h0M1141.5 125.5h0M1142.5 100.5h0M1142.5 114.5h0M1142.5 124.5h0M1142.5 121.5h0M1142.5 123.5h0M1142.5 122.5h0M1142.5 125.5h0M1143.5 112.5h0M1143.5 116.5h0M1143.5 121.5h0M1143.5 120.5h0M1143.5 124.5h0M1143.5 122.5h0M1144.5 114.5h0M1144.5 122.5h0M1144.5 110.5h0M1144.5 118.5h0M1144.5 117.5h0M1144.5 115.5h0M1145.5 120.5h0M1145.5 113.5h0M1145.5 107.5h0M1145.5 121.5h0M1145.5 117.5h0M1146.5 107.5h0M1146.5 116.5h0M1146.5 111.5h0M1146.5 115.5h0M1146.5 119.5h0M1146.5 118.5h0M1146.5 102.5h0M1147.5 112.5h0M1147.5 114.5h0M1147.5 102.5h0M1147.5 109.5h0M1147.5 107.5h0M1147.5 101.5h0M1148.5 105.5h0M1148.5 115.5h0M1148.5 110.5h0M1148.5 118.5h0M1148.5 95.5h0M1148.5 108.5h0M1149.5 113.5h0M1149.5 112.5h0M1149.5 123.5h0M1149.5 128.5h0M1149.5 127.5h0M1149.5 120.5h0M1149.5 125.5h0M1150.5 127.5h0M1150.5 119.5h0M1150.5 123.5h0M1150.5 126.5h0M1150.5 121.5h0M1150.5 116.5h0M1150.5 117.5h0M1151.5 114.5h0M1151.5 121.5h0M1151.5 119.5h0M1151.5 128.5h0M1152.5 121.5h0M1152.5 118.5h0M1152.5 116.5h0M1152.5 119.5h0M1152.5 117.5h0M1152.5 115.5h0M1153.5 110.5h0M1153.5 114.5h0M1153.5 112.5h0M1153.5 103.5h0M1153.5 108.5h0M1153.5 119.5h0M1153.5 117.5h0M1154.5 112.5h0M1154.5 127.5h0M1154.5 101.5h0M1154.5 110.5h0M1154.5 98.5h0M1154.5 108.5h0M1155.5 122.5h0M1155.5 119.5h0M1155.5 124.5h0M1155.5 98.5h0M1155.5 113.5h0M1156.5 129.5h0M1156.5 131.5h0M1156.5 127.5h0M1156.5 121.5h0M1156.5 119.5h0M1157.5 125.5h0M1157.5 124.5h0M1157.5 110.5h0M1157.5 115.5h0M1157.5 119.5h0M1157.5 126.5h0M1158.5 124.5h0M1158.5 115.5h0M1158.5 116.5h0M1158.5 99.5h0M1158.5 112.5h0M1159.5 106.5h0M1159.5 117.5h0M1159.5 111.5h0M1159.5 114.5h0M1159.5 115.5h0M1159.5 113.5h0M1160.5 114.5h0M1160.5 119.5h0M1160.5 117.5h0M1160.5 118.5h0M1160.5 123.5h0M1160.5 110.5h0M1160.5 122.5h0M1160.5 113.5h0M1161.5 105.5h0M1161.5 117.5h0M1161.5 118.5h0M1161.5 121.5h0M1161.5 106.5h0M1161.5 119.5h0M1161.5 110.5h0M1161.5 115.5h0M1162.5 102.5h0M1162.5 108.5h0M1162.5 119.5h0M1162.5 116.5h0M1162.5 107.5h0M1163.5 114.5h0M1163.5 120.5h0M1163.5 122.5h0M1163.5 116.5h0M1163.5 109.5h0M1163.5 127.5h0M1164.5 125.5h0M1164.5 108.5h0M1164.5 114.5h0M1164.5 103.5h0M1164.5 116.5h0M1165.5 123.5h0M1165.5 118.5h0M1165.5 112.5h0M1165.5 114.5h0M1165.5 107.5h0M1165.5 105.5h0M1166.5 101.5h0M1166.5 104.5h0M1166.5 115.5h0M1166.5 114.5h0M1166.5 118.5h0M1166.5 117.5h0M1166.5 121.5h0M1166.5 116.5h0M1167.5 118.5h0M1167.5 109.5h0M1167.5 123.5h0M1167.5 121.5h0M1167.5 125.5h0M1168.5 115.5h0M1168.5 108.5h0M1168.5 120.5h0M1168.5 129.5h0M1168.5 96.5h0M1168.5 110.5h0M1169.5 109.5h0M1169.5 122.5h0M1169.5 129.5h0M1169.5 128.5h0M1169.5 93.5h0M1169.5 95.5h0M1170.5 108.5h0M1170.5 120.5h0M1170.5 97.5h0M1170.5 124.5h0M1170.5 117.5h0M1170.5 123.5h0M1170.5 111.5h0M1171.5 120.5h0M1171.5 111.5h0M1171.5 118.5h0M1171.5 125.5h0M1171.5 119.5h0M1171.5 108.5h0M1171.5 113.5h0M1171.5 102.5h0M1172.5 106.5h0M1172.5 110.5h0M1172.5 109.5h0M1172.5 105.5h0M1172.5 98.5h0M1172.5 107.5h0M1173.5 117.5h0M1173.5 123.5h0M1173.5 114.5h0M1173.5 122.5h0M1173.5 124.5h0M1174.5 108.5h0M1174.5 123.5h0M1174.5 117.5h0M1174.5 125.5h0M1174.5 131.5h0M1174.5 118.5h0M1175.5 116.5h0M1175.5 123.5h0M1175.5 112.5h0M1175.5 115.5h0M1175.5 105.5h0M1175.5 117.5h0M1176.5 113.5h0M1176.5 114.5h0M1176.5 106.5h0M1176.5 111.5h0M1176.5 103.5h0M1176.5 105.5h0M1176.5 110.5h0M1176.5 101.5h0M1177.5 100.5h0M1177.5 104.5h0M1177.5 105.5h0M1177.5 101.5h0M1177.5 95.5h0M1177.5 106.5h0M1178.5 104.5h0M1178.5 110.5h0M1178.5 106.5h0M1179.5 106.5h0M1179.5 105.5h0M1179.5 111.5h0M1179.5 109.5h0M1179.5 110.5h0M1179.5 112.5h0M1180.5 110.5h0M1180.5 115.5h0M1180.5 113.5h0M1180.5 116.5h0M1180.5 117.5h0M1181.5 114.5h0M1181.5 115.5h0M1181.5 110.5h0M1181.5 118.5h0M1181.5 117.5h0M1181.5 116.5h0M1182.5 115.5h0M1182.5 114.5h0M1182.5 116.5h0M1183.5 114.5h0M1183.5 117.5h0M1183.5 110.5h0M1183.5 111.5h0M1183.5 112.5h0M1184.5 113.5h0M1184.5 110.5h0M1184.5 109.5h0M1184.5 111.5h0M1184.5 118.5h0M1185.5 115.5h0M1185.5 111.5h0M1185.5 117.5h0M1185.5 112.5h0M1185.5 119.5h0M1185.5 116.5h0M1186.5 115.5h0M1186.5 118.5h0M1186.5 114.5h0M1186.5 109.5h0M1187.5 112.5h0M1187.5 123.5h0M1187.5 116.5h0M1187.5 103.5h0M1187.5 105.5h0M1187.5 121.5h0M1187.5 126.5h0M1188.5 121.5h0M1188.5 112.5h0M1188.5 117.5h0M1188.5 125.5h0M1188.5 116.5h0M1188.5 118.5h0M1188.5 115.5h0M1189.5 121.5h0M1189.5 100.5h0M1189.5 122.5h0M1189.5 103.5h0M1189.5 115.5h0M1189.5 105.5h0M1190.5 111.5h0M1190.5 102.5h0M1190.5 125.5h0M1190.5 122.5h0M1190.5 107.5h0M1190.5 110.5h0M1191.5 101.5h0M1191.5 107.5h0M1191.5 98.5h0M1191.5 96.5h0M1191.5 102.5h0M1191.5 105.5h0M1192.5 105.5h0M1192.5 119.5h0M1192.5 96.5h0M1192.5 100.5h0M1192.5 114.5h0M1192.5 111.5h0M1192.5 103.5h0M1193.5 115.5h0M1193.5 117.5h0M1193.5 122.5h0M1193.5 111.5h0M1193.5 98.5h0M1193.5 101.5h0M1193.5 120.5h0M1194.5 100.5h0M1194.5 122.5h0M1194.5 125.5h0M1194.5 128.5h0M1194.5 123.5h0M1194.5 126.5h0M1195.5 111.5h0M1195.5 128.5h0M1195.5 119.5h0M1195.5 120.5h0M1195.5 116.5h0M1195.5 113.5h0M1195.5 110.5h0M1196.5 119.5h0M1196.5 123.5h0M1196.5 111.5h0M1196.5 122.5h0M1196.5 118.5h0M1196.5 115.5h0M1197.5 117.5h0M1197.5 100.5h0M1197.5 122.5h0M1197.5 121.5h0M1197.5 118.5h0M1198.5 109.5h0M1198.5 116.5h0M1198.5 107.5h0M1198.5 115.5h0M1198.5 112.5h0M1198.5 114.5h0M1198.5 117.5h0M1199.5 117.5h0M1199.5 114.5h0M1199.5 115.5h0M1199.5 112.5h0M1199.5 113.5h0M1199.5 121.5h0M1200.5 116.5h0M1200.5 114.5h0M1200.5 121.5h0M1200.5 119.5h0M1200.5 112.5h0M1200.5 105.5h0M1201.5 115.5h0M1201.5 107.5h0M1201.5 119.5h0M1201.5 110.5h0M1201.5 118.5h0M1201.5 117.5h0M1201.5 111.5h0M1202.5 112.5h0M1202.5 116.5h0M1202.5 110.5h0M1202.5 114.5h0M1202.5 113.5h0M1203.5 114.5h0M1203.5 112.5h0M1203.5 115.5h0M1204.5 116.5h0M1204.5 113.5h0M1204.5 104.5h0M1204.5 111.5h0M1204.5 118.5h0M1204.5 103.5h0M1205.5 109.5h0M1205.5 108.5h0M1205.5 116.5h0M1205.5 118.5h0M1205.5 114.5h0M1205.5 115.5h0M1206.5 116.5h0M1206.5 114.5h0M1206.5 117.5h0M1206.5 110.5h0M1206.5 109.5h0M1206.5 111.5h0M1207.5 107.5h0M1207.5 121.5h0M1207.5 120.5h0M1207.5 123.5h0M1207.5 116.5h0M1207.5 114.5h0M1208.5 109.5h0M1208.5 110.5h0M1208.5 98.5h0M1208.5 102.5h0M1208.5 113.5h0M1208.5 103.5h0M1208.5 116.5h0M1209.5 116.5h0M1209.5 125.5h0M1209.5 107.5h0M1209.5 123.5h0M1209.5 117.5h0M1209.5 113.5h0M1210.5 126.5h0M1210.5 111.5h0M1210.5 118.5h0M1210.5 106.5h0M1210.5 123.5h0M1210.5 117.5h0M1210.5 113.5h0M1211.5 111.5h0M1211.5 109.5h0M1211.5 117.5h0M1211.5 115.5h0M1211.5 113.5h0M1211.5 120.5h0M1212.5 125.5h0M1212.5 112.5h0M1212.5 114.5h0M1212.5 116.5h0M1212.5 118.5h0M1212.5 122.5h0M1212.5 126.5h0M1213.5 115.5h0M1213.5 108.5h0M1213.5 110.5h0M1213.5 117.5h0M1213.5 120.5h0M1213.5 106.5h0M1213.5 100.5h0M1214.5 109.5h0M1214.5 113.5h0M1214.5 101.5h0M1214.5 115.5h0M1214.5 124.5h0M1214.5 123.5h0M1214.5 126.5h0M1215.5 114.5h0M1215.5 124.5h0M1215.5 119.5h0M1215.5 126.5h0M1215.5 105.5h0M1215.5 111.5h0M1216.5 102.5h0M1216.5 109.5h0M1216.5 99.5h0M1216.5 96.5h0M1216.5 100.5h0M1216.5 104.5h0M1217.5 110.5h0M1217.5 106.5h0M1217.5 111.5h0M1217.5 103.5h0M1217.5 112.5h0M1217.5 109.5h0M1217.5 113.5h0M1218.5 113.5h0M1218.5 108.5h0M1218.5 96.5h0M1218.5 97.5h0M1219.5 115.5h0M1219.5 96.5h0M1219.5 110.5h0M1219.5 108.5h0M1219.5 106.5h0M1220.5 97.5h0M1220.5 115.5h0M1220.5 95.5h0M1220.5 101.5h0M1220.5 99.5h0M1220.5 96.5h0M1220.5 108.5h0M1221.5 93.5h0M1221.5 118.5h0M1221.5 107.5h0M1221.5 110.5h0M1221.5 119.5h0M1221.5 115.5h0M1221.5 96.5h0M1222.5 112.5h0M1222.5 95.5h0M1222.5 113.5h0M1222.5 93.5h0M1222.5 94.5h0M1222.5 108.5h0M1222.5 101.5h0M1223.5 106.5h0M1223.5 98.5h0M1223.5 111.5h0M1223.5 105.5h0M1224.5 97.5h0M1224.5 105.5h0M1224.5 108.5h0M1224.5 113.5h0M1224.5 111.5h0M1224.5 107.5h0M1224.5 114.5h0M1225.5 114.5h0M1225.5 115.5h0M1225.5 113.5h0M1225.5 117.5h0M1225.5 116.5h0M1226.5 115.5h0M1226.5 113.5h0M1226.5 102.5h0M1226.5 109.5h0M1226.5 103.5h0M1226.5 107.5h0M1226.5 112.5h0M1227.5 111.5h0M1227.5 114.5h0M1227.5 116.5h0M1228.5 114.5h0M1228.5 107.5h0M1228.5 110.5h0M1228.5 106.5h0M1228.5 103.5h0M1228.5 116.5h0M1229.5 111.5h0M1229.5 114.5h0M1229.5 102.5h0M1229.5 113.5h0M1229.5 106.5h0M1229.5 107.5h0M1230.5 108.5h0M1230.5 110.5h0M1230.5 112.5h0M1230.5 111.5h0M1230.5 109.5h0M1231.5 111.5h0M1231.5 112.5h0M1231.5 117.5h0M1231.5 121.5h0M1231.5 119.5h0M1231.5 120.5h0M1231.5 114.5h0M1232.5 116.5h0M1232.5 119.5h0M1232.5 121.5h0M1232.5 122.5h0M1232.5 111.5h0M1232.5 125.5h0M1232.5 118.5h0M1233.5 119.5h0M1233.5 122.5h0M1233.5 106.5h0M1233.5 111.5h0M1233.5 113.5h0M1233.5 107.5h0M1233.5 116.5h0M1234.5 110.5h0M1234.5 108.5h0M1234.5 105.5h0M1234.5 102.5h0M1234.5 109.5h0M1234.5 103.5h0M1235.5 105.5h0M1235.5 107.5h0M1235.5 110.5h0M1235.5 114.5h0M1235.5 109.5h0M1235.5 113.5h0M1235.5 111.5h0M1236.5 111.5h0M1236.5 105.5h0M1236.5 104.5h0M1236.5 118.5h0M1236.5 116.5h0M1236.5 117.5h0M1237.5 111.5h0M1237.5 110.5h0M1237.5 112.5h0M1237.5 114.5h0M1238.5 112.5h0M1238.5 104.5h0M1238.5 110.5h0M1238.5 108.5h0M1238.5 103.5h0M1238.5 109.5h0M1239.5 109.5h0M1239.5 114.5h0M1239.5 111.5h0M1239.5 113.5h0M1239.5 110.5h0M1239.5 104.5h0M1239.5 105.5h0M1240.5 113.5h0M1240.5 111.5h0M1240.5 106.5h0M1240.5 109.5h0M1240.5 107.5h0M1240.5 115.5h0M1241.5 115.5h0M1241.5 121.5h0M1241.5 107.5h0M1241.5 111.5h0M1241.5 124.5h0M1242.5 122.5h0M1242.5 123.5h0M1242.5 112.5h0M1242.5 113.5h0M1242.5 120.5h0M1242.5 114.5h0M1243.5 113.5h0M1243.5 105.5h0M1243.5 119.5h0M1243.5 111.5h0M1243.5 124.5h0M1244.5 101.5h0M1244.5 126.5h0M1244.5 108.5h0M1244.5 111.5h0M1244.5 114.5h0M1244.5 98.5h0M1244.5 123.5h0M1245.5 111.5h0M1245.5 118.5h0M1245.5 102.5h0M1245.5 116.5h0M1245.5 101.5h0M1245.5 106.5h0M1246.5 110.5h0M1246.5 105.5h0M1246.5 107.5h0M1246.5 113.5h0M1246.5 121.5h0M1246.5 116.5h0M1246.5 119.5h0M1246.5 114.5h0M1247.5 113.5h0M1247.5 114.5h0M1247.5 112.5h0M1247.5 116.5h0M1248.5 109.5h0M1248.5 113.5h0M1248.5 108.5h0M1248.5 114.5h0M1248.5 106.5h0M1249.5 100.5h0M1249.5 108.5h0M1249.5 109.5h0M1249.5 123.5h0M1249.5 116.5h0M1249.5 118.5h0M1250.5 114.5h0M1250.5 122.5h0M1250.5 101.5h0M1250.5 112.5h0M1250.5 128.5h0M1250.5 102.5h0M1250.5 108.5h0M1250.5 111.5h0M1251.5 113.5h0M1251.5 102.5h0M1251.5 118.5h0M1251.5 114.5h0M1251.5 111.5h0M1251.5 115.5h0M1252.5 118.5h0M1252.5 107.5h0M1252.5 114.5h0M1252.5 115.5h0M1252.5 113.5h0M1253.5 116.5h0M1253.5 104.5h0M1253.5 115.5h0M1253.5 119.5h0M1253.5 112.5h0M1254.5 115.5h0M1254.5 108.5h0M1254.5 109.5h0M1254.5 99.5h0M1254.5 98.5h0M1254.5 103.5h0M1254.5 112.5h0M1255.5 125.5h0M1255.5 117.5h0M1255.5 107.5h0M1255.5 113.5h0M1255.5 123.5h0M1255.5 124.5h0M1256.5 120.5h0M1256.5 106.5h0M1256.5 104.5h0M1256.5 114.5h0M1257.5 109.5h0M1257.5 114.5h0M1257.5 115.5h0M1257.5 117.5h0M1257.5 119.5h0M1257.5 118.5h0M1257.5 113.5h0M1258.5 118.5h0M1258.5 115.5h0M1258.5 124.5h0M1258.5 122.5h0M1258.5 116.5h0M1259.5 117.5h0M1259.5 120.5h0M1259.5 111.5h0M1259.5 126.5h0M1259.5 114.5h0M1259.5 115.5h0M1260.5 122.5h0M1260.5 119.5h0M1260.5 116.5h0M1260.5 101.5h0M1260.5 123.5h0M1260.5 110.5h0M1260.5 100.5h0M1260.5 105.5h0M1261.5 123.5h0M1261.5 120.5h0M1261.5 109.5h0M1261.5 121.5h0M1261.5 108.5h0M1261.5 106.5h0M1261.5 112.5h0M1261.5 113.5h0M1262.5 115.5h0M1262.5 122.5h0M1262.5 110.5h0M1262.5 103.5h0M1262.5 101.5h0M1262.5 106.5h0M1263.5 106.5h0M1263.5 109.5h0M1263.5 108.5h0M1263.5 111.5h0M1263.5 105.5h0M1263.5 107.5h0M1264.5 102.5h0M1264.5 106.5h0M1264.5 120.5h0M1264.5 122.5h0M1264.5 119.5h0M1264.5 116.5h0M1264.5 124.5h0M1265.5 115.5h0M1265.5 111.5h0M1265.5 113.5h0M1265.5 116.5h0M1265.5 118.5h0M1265.5 108.5h0M1266.5 113.5h0M1266.5 105.5h0M1266.5 108.5h0M1267.5 111.5h0M1267.5 108.5h0M1267.5 110.5h0M1267.5 107.5h0M1267.5 113.5h0M1268.5 114.5h0M1268.5 113.5h0M1268.5 109.5h0M1268.5 115.5h0M1268.5 122.5h0M1268.5 102.5h0M1268.5 117.5h0M1269.5 108.5h0M1269.5 103.5h0M1269.5 126.5h0M1269.5 101.5h0M1269.5 125.5h0M1270.5 107.5h0M1270.5 116.5h0M1270.5 121.5h0M1270.5 115.5h0M1270.5 111.5h0M1270.5 100.5h0M1270.5 112.5h0M1270.5 106.5h0M1271.5 107.5h0M1271.5 103.5h0M1271.5 108.5h0M1271.5 106.5h0M1272.5 105.5h0M1272.5 112.5h0M1272.5 114.5h0M1272.5 107.5h0M1272.5 111.5h0M1272.5 108.5h0M1273.5 104.5h0M1273.5 101.5h0M1273.5 109.5h0M1273.5 116.5h0M1273.5 114.5h0M1273.5 112.5h0M1273.5 113.5h0M1274.5 115.5h0M1274.5 106.5h0M1274.5 104.5h0M1274.5 108.5h0M1274.5 107.5h0M1275.5 103.5h0M1275.5 117.5h0M1275.5 112.5h0M1275.5 116.5h0M1275.5 102.5h0M1276.5 118.5h0M1276.5 112.5h0M1276.5 99.5h0M1276.5 109.5h0M1276.5 111.5h0M1276.5 120.5h0M1277.5 116.5h0M1277.5 102.5h0M1277.5 117.5h0M1277.5 101.5h0M1278.5 105.5h0M1278.5 97.5h0M1278.5 110.5h0M1278.5 107.5h0M1278.5 96.5h0M1278.5 100.5h0M1278.5 98.5h0M1278.5 99.5h0M1279.5 98.5h0M1279.5 103.5h0M1279.5 106.5h0M1279.5 108.5h0M1279.5 116.5h0M1280.5 116.5h0M1280.5 123.5h0M1280.5 111.5h0M1280.5 115.5h0M1281.5 115.5h0M1281.5 119.5h0M1281.5 118.5h0M1281.5 112.5h0M1282.5 113.5h0M1282.5 115.5h0M1282.5 110.5h0M1282.5 105.5h0M1282.5 118.5h0M1283.5 118.5h0M1283.5 119.5h0M1283.5 114.5h0M1283.5 115.5h0M1283.5 108.5h0M1283.5 102.5h0M1284.5 114.5h0M1284.5 101.5h0M1284.5 115.5h0M1284.5 111.5h0M1284.5 116.5h0M1285.5 110.5h0M1285.5 116.5h0M1285.5 109.5h0M1285.5 119.5h0M1285.5 117.5h0M1285.5 121.5h0M1286.5 111.5h0M1286.5 122.5h0M1286.5 118.5h0M1286.5 108.5h0M1286.5 113.5h0M1286.5 104.5h0M1286.5 109.5h0M1287.5 118.5h0M1287.5 113.5h0M1287.5 100.5h0M1287.5 102.5h0M1287.5 104.5h0M1287.5 108.5h0M1288.5 117.5h0M1288.5 106.5h0M1288.5 111.5h0M1288.5 109.5h0M1288.5 107.5h0M1289.5 113.5h0M1289.5 112.5h0M1289.5 107.5h0M1289.5 104.5h0M1289.5 109.5h0M1289.5 118.5h0M1290.5 127.5h0M1290.5 105.5h0M1290.5 111.5h0M1290.5 112.5h0M1290.5 117.5h0M1290.5 119.5h0M1291.5 124.5h0M1291.5 119.5h0M1291.5 118.5h0M1291.5 111.5h0M1291.5 109.5h0M1292.5 112.5h0M1292.5 114.5h0M1292.5 107.5h0M1292.5 113.5h0M1292.5 115.5h0M1292.5 116.5h0M1293.5 110.5h0M1293.5 111.5h0M1293.5 113.5h0M1293.5 118.5h0M1293.5 109.5h0M1294.5 109.5h0M1294.5 114.5h0M1294.5 112.5h0M1294.5 116.5h0M1294.5 115.5h0M1294.5 118.5h0M1295.5 107.5h0M1295.5 112.5h0M1295.5 119.5h0M1295.5 129.5h0M1295.5 111.5h0M1295.5 127.5h0M1296.5 101.5h0M1296.5 110.5h0M1296.5 114.5h0M1296.5 107.5h0M1296.5 106.5h0M1296.5 105.5h0M1296.5 112.5h0M1297.5 103.5h0M1297.5 102.5h0M1297.5 109.5h0M1297.5 108.5h0M1297.5 117.5h0M1297.5 116.5h0M1298.5 116.5h0M1298.5 123.5h0M1298.5 113.5h0M1298.5 112.5h0M1298.5 109.5h0M1299.5 112.5h0M1299.5 111.5h0M1299.5 116.5h0M1299.5 118.5h0M1299.5 115.5h0M1300.5 112.5h0M1300.5 113.5h0M1300.5 120.5h0M1300.5 119.5h0M1300.5 124.5h0M1300.5 121.5h0M1300.5 122.5h0M1301.5 118.5h0M1301.5 120.5h0M1301.5 115.5h0M1301.5 117.5h0M1301.5 110.5h0M1301.5 114.5h0M1301.5 116.5h0M1302.5 116.5h0M1302.5 117.5h0M1302.5 112.5h0M1302.5 111.5h0M1302.5 120.5h0M1302.5 110.5h0" stroke="#000" stroke-width="3.8" stroke-linecap="round" fill="none"/><path d="M170.5 83.5h0M172.5 85.5h0M173.5 86.5h0M201.5 137.5h0M208.5 132.5h0M209.5 130.5h0M219.5 130.5h0M230.5 87.5h0M237.5 138.5h0M239.5 86.5h0M319.5 86.5h0M323.5 80.5h0M323.5 85.5h0M323.5 82.5h0M326.5 133.5h0M347.5 84.5h0M380.5 85.5h0M382.5 84.5h0M401.5 138.5h0M407.5 87.5h0M415.5 85.5h0M420.5 187.5h0M431.5 86.5h0M435.5 129.5h0M461.5 130.5h0M462.5 183.5h0M464.5 84.5h0M468.5 85.5h0M501.5 146.5h0M508.5 254.5h0M534.5 86.5h0M545.5 142.5h0M548.5 84.5h0M557.5 87.5h0M568.5 129.5h0M580.5 130.5h0M584.5 279.5h0M588.5 138.5h0M615.5 85.5h0M617.5 83.5h0M618.5 81.5h0M629.5 130.5h0M647.5 150.5h0M659.5 87.5h0M694.5 133.5h0M728.5 145.5h0M734.5 86.5h0M746.5 130.5h0M746.5 132.5h0M756.5 130.5h0M756.5 147.5h0M786.5 84.5h0M821.5 129.5h0M824.5 77.5h0M824.5 85.5h0M848.5 87.5h0M884.5 82.5h0M896.5 81.5h0M896.5 89.5h0M925.5 93.5h0M934.5 170.5h0M967.5 136.5h0M975.5 137.5h0M1052.5 92.5h0M1058.5 194.5h0M1062.5 136.5h0M1069.5 134.5h0M1095.5 140.5h0M1103.5 134.5h0M1132.5 92.5h0M1151.5 136.5h0M1156.5 134.5h0M1178.5 89.5h0M1216.5 92.5h0M1223.5 93.5h0M1290.5 149.5h0M1300.5 132.5h0" stroke="#ffa500" stroke-width="3.8" stroke-linecap="round" fill="none"/><path d="M105.5 156.94H1361" stroke="#008000" stroke-width="2.08" fill="none"/><path d="M162.3 321V35.5" stroke="#800080" stroke-width="2.08" stroke-dasharray="2.083 3.438" fill="none"/><path d="M892.93 321V35.5" stroke="#800080" stroke-width="2.08" stroke-dasharray="2.083 3.438" fill="none"/><path d="M1207.05 321V35.5" stroke="#800080" stroke-width="2.08" stroke-dasharray="2.083 3.438" fill="none"/><path d="M1302.93 321V35.5" stroke="#800080" stroke-width="2.08" stroke-dasharray="2.083 3.438" fill="none"/><text x="527.62" y="311.9" font-size="13.89" text-anchor="middle" textLength="44.19" lengthAdjust="spacingAndGlyphs">10392</text><text x="1049.96" y="292" font-size="13.89" text-anchor="middle" textLength="44.19" lengthAdjust="spacingAndGlyphs">10259</text><text x="1255.02" y="272" font-size="13.89" text-anchor="middle" textLength="44.19" lengthAdjust="spacingAndGlyphs">52537</text>
</g>
<g clip-path="url(#c2)">
<path d="M162.5 537.5h0M162.5 500.5h0M162.5 521.5h0M162.5 531.5h0M162.5 534.5h0M162.5 511.5h0M163.5 540.5h0M163.5 543.5h0M163.5 489.5h0M163.5 508.5h0M163.5 539.5h0M164.5 481.5h0M164.5 486.5h0M164.5 466.5h0M164.5 540.5h0M164.5 564.5h0M164.5 467.5h0M164.5 483.5h0M164.5 479.5h0M165.5 468.5h0M165.5 483.5h0M165.5 545.5h0M165.5 528.5h0M165.5 566.5h0M165.5 514.5h0M165.5 526.5h0M165.5 492.5h0M166.5 499.5h0M166.5 547.5h0M166.5 520.5h0M166.5 530.5h0M166.5 538.5h0M166.5 545.5h0M166.5 533.5h0M167.5 532.5h0M167.5 529.5h0M167.5 510.5h0M167.5 526.5h0M167.5 516.5h0M167.5 513.5h0M168.5 524.5h0M168.5 508.5h0M168.5 509.5h0M168.5 501.5h0M168.5 502.5h0M168.5 480.5h0M168.5 490.5h0M169.5 492.5h0M169.5 495.5h0M169.5 488.5h0M169.5 490.5h0M169.5 528.5h0M169.5 544.5h0M169.5 522.5h0M169.5 545.5h0M170.5 501.5h0M170.5 558.5h0M170.5 546.5h0M170.5 516.5h0M170.5 510.5h0M170.5 529.5h0M170.5 517.5h0M171.5 520.5h0M171.5 527.5h0M171.5 542.5h0M171.5 467.5h0M171.5 493.5h0M172.5 509.5h0M172.5 501.5h0M172.5 525.5h0M172.5 530.5h0M172.5 542.5h0M172.5 483.5h0M173.5 481.5h0M173.5 478.5h0M173.5 466.5h0M173.5 477.5h0M173.5 485.5h0M173.5 456.5h0M173.5 474.5h0M174.5 466.5h0M174.5 502.5h0M174.5 524.5h0M174.5 520.5h0M174.5 533.5h0M174.5 521.5h0M174.5 512.5h0M175.5 535.5h0M175.5 529.5h0M175.5 515.5h0M175.5 531.5h0M175.5 486.5h0M175.5 470.5h0M176.5 479.5h0M176.5 490.5h0M176.5 476.5h0M176.5 478.5h0M176.5 505.5h0M176.5 514.5h0M177.5 493.5h0M177.5 504.5h0M177.5 539.5h0M177.5 499.5h0M177.5 508.5h0M177.5 496.5h0M177.5 533.5h0M178.5 548.5h0M178.5 539.5h0M178.5 547.5h0M178.5 530.5h0M178.5 526.5h0M178.5 525.5h0M178.5 532.5h0M179.5 539.5h0M179.5 508.5h0M179.5 490.5h0M179.5 541.5h0M179.5 534.5h0M179.5 540.5h0M179.5 548.5h0M180.5 519.5h0M180.5 521.5h0M180.5 535.5h0M180.5 532.5h0M180.5 516.5h0M180.5 544.5h0M180.5 523.5h0M181.5 538.5h0M181.5 525.5h0M181.5 507.5h0M181.5 519.5h0M181.5 518.5h0M181.5 513.5h0M181.5 532.5h0M182.5 550.5h0M182.5 542.5h0M182.5 505.5h0M182.5 538.5h0M182.5 516.5h0M182.5 528.5h0M182.5 496.5h0M182.5 532.5h0M183.5 524.5h0M183.5 513.5h0M183.5 478.5h0M183.5 500.5h0M183.5 480.5h0M183.5 495.5h0M184.5 495.5h0M184.5 479.5h0M184.5 526.5h0M184.5 546.5h0M184.5 517.5h0M185.5 499.5h0M185.5 492.5h0M185.5 511.5h0M185.5 498.5h0M185.5 544.5h0M185.5 495.5h0M185.5 500.5h0M185.5 524.5h0M186.5 488.5h0M186.5 507.5h0M186.5 478.5h0M186.5 494.5h0M186.5 514.5h0M186.5 536.5h0M186.5 525.5h0M187.5 519.5h0M187.5 509.5h0M187.5 516.5h0M187.5 523.5h0M187.5 490.5h0M187.5 507.5h0M187.5 508.5h0M188.5 509.5h0M188.5 523.5h0M188.5 511.5h0M188.5 537.5h0M188.5 529.5h0M188.5 518.5h0M188.5 527.5h0M189.5 509.5h0M189.5 525.5h0M189.5 540.5h0M189.5 523.5h0M189.5 526.5h0M189.5 518.5h0M189.5 529.5h0M189.5 516.5h0M190.5 534.5h0M190.5 518.5h0M190.5 527.5h0M190.5 523.5h0M190.5 532.5h0M190.5 524.5h0M190.5 528.5h0M191.5 518.5h0M191.5 521.5h0M191.5 533.5h0M191.5 502.5h0M191.5 499.5h0M192.5 496.5h0M192.5 516.5h0M192.5 538.5h0M192.5 502.5h0M192.5 542.5h0M193.5 513.5h0M193.5 509.5h0M193.5 517.5h0M193.5 556.5h0M193.5 544.5h0M193.5 527.5h0M193.5 505.5h0M193.5 519.5h0M194.5 537.5h0M194.5 544.5h0M194.5 525.5h0M194.5 529.5h0M194.5 532.5h0M194.5 541.5h0M194.5 540.5h0M194.5 542.5h0M195.5 542.5h0M195.5 518.5h0M195.5 515.5h0M195.5 514.5h0M195.5 512.5h0M195.5 521.5h0M195.5 516.5h0M196.5 502.5h0M196.5 507.5h0M196.5 516.5h0M196.5 509.5h0M196.5 525.5h0M196.5 551.5h0M196.5 558.5h0M196.5 544.5h0M197.5 509.5h0M197.5 505.5h0M197.5 533.5h0M197.5 529.5h0M197.5 560.5h0M197.5 536.5h0M197.5 519.5h0M198.5 535.5h0M198.5 558.5h0M198.5 548.5h0M198.5 552.5h0M198.5 543.5h0M198.5 533.5h0M198.5 539.5h0M198.5 556.5h0M199.5 515.5h0M199.5 539.5h0M199.5 557.5h0M199.5 514.5h0M199.5 526.5h0M199.5 544.5h0M199.5 540.5h0M200.5 555.5h0M200.5 573.5h0M200.5 554.5h0M200.5 535.5h0M200.5 541.5h0M200.5 547.5h0M201.5 576.5h0M201.5 570.5h0M201.5 591.5h0M201.5 566.5h0M201.5 555.5h0M202.5 568.5h0M202.5 566.5h0M202.5 512.5h0M202.5 517.5h0M202.5 513.5h0M202.5 564.5h0M202.5 514.5h0M203.5 543.5h0M203.5 518.5h0M203.5 519.5h0M203.5 500.5h0M203.5 503.5h0M203.5 515.5h0M203.5 510.5h0M204.5 492.5h0M204.5 487.5h0M204.5 503.5h0M204.5 501.5h0M204.5 518.5h0M204.5 508.5h0M204.5 541.5h0M205.5 551.5h0M205.5 565.5h0M205.5 516.5h0M205.5 518.5h0M205.5 507.5h0M205.5 512.5h0M206.5 515.5h0M206.5 535.5h0M206.5 501.5h0M206.5 509.5h0M206.5 512.5h0M207.5 503.5h0M207.5 567.5h0M207.5 513.5h0M207.5 558.5h0M207.5 580.5h0M208.5 534.5h0M208.5 549.5h0M208.5 582.5h0M208.5 581.5h0M208.5 578.5h0M208.5 536.5h0M208.5 565.5h0M209.5 546.5h0M209.5 579.5h0M209.5 558.5h0M209.5 566.5h0M209.5 542.5h0M209.5 559.5h0M209.5 536.5h0M210.5 537.5h0M210.5 529.5h0M210.5 533.5h0M210.5 521.5h0M210.5 510.5h0M210.5 508.5h0M210.5 523.5h0M211.5 510.5h0M211.5 514.5h0M211.5 508.5h0M211.5 541.5h0M211.5 506.5h0M211.5 534.5h0M212.5 510.5h0M212.5 564.5h0M212.5 517.5h0M212.5 552.5h0M212.5 534.5h0M212.5 521.5h0M213.5 546.5h0M213.5 550.5h0M213.5 555.5h0M213.5 549.5h0M213.5 507.5h0M213.5 522.5h0M214.5 513.5h0M214.5 542.5h0M214.5 552.5h0M214.5 550.5h0M214.5 529.5h0M214.5 541.5h0M214.5 512.5h0M215.5 518.5h0M215.5 508.5h0M215.5 522.5h0M215.5 548.5h0M215.5 543.5h0M215.5 572.5h0M215.5 526.5h0M216.5 558.5h0M216.5 532.5h0M216.5 488.5h0M216.5 508.5h0M216.5 483.5h0M216.5 509.5h0M216.5 528.5h0M217.5 507.5h0M217.5 512.5h0M217.5 510.5h0M217.5 527.5h0M217.5 516.5h0M217.5 513.5h0M217.5 508.5h0M218.5 512.5h0M218.5 518.5h0M218.5 522.5h0M218.5 506.5h0M218.5 526.5h0M218.5 527.5h0M218.5 529.5h0M218.5 530.5h0M219.5 544.5h0M219.5 542.5h0M219.5 550.5h0M219.5 539.5h0M220.5 560.5h0M220.5 527.5h0M220.5 563.5h0M220.5 535.5h0M220.5 506.5h0M220.5 525.5h0M221.5 551.5h0M221.5 540.5h0M221.5 536.5h0M221.5 519.5h0M221.5 518.5h0M221.5 494.5h0M221.5 514.5h0M221.5 490.5h0M222.5 507.5h0M222.5 518.5h0M222.5 531.5h0M222.5 519.5h0M222.5 556.5h0M222.5 481.5h0M222.5 521.5h0M222.5 490.5h0M223.5 472.5h0M223.5 537.5h0M223.5 501.5h0M223.5 466.5h0M223.5 505.5h0M223.5 497.5h0M223.5 510.5h0M223.5 498.5h0M224.5 508.5h0M224.5 500.5h0M224.5 529.5h0M224.5 496.5h0M224.5 540.5h0M224.5 503.5h0M224.5 522.5h0M225.5 525.5h0M225.5 524.5h0M225.5 546.5h0M225.5 530.5h0M225.5 526.5h0M225.5 534.5h0M225.5 502.5h0M226.5 495.5h0M226.5 548.5h0M226.5 521.5h0M226.5 520.5h0M226.5 512.5h0M226.5 532.5h0M227.5 535.5h0M227.5 527.5h0M227.5 548.5h0M227.5 545.5h0M227.5 536.5h0M227.5 565.5h0M227.5 524.5h0M227.5 553.5h0M228.5 544.5h0M228.5 535.5h0M228.5 551.5h0M228.5 523.5h0M228.5 487.5h0M228.5 564.5h0M228.5 469.5h0M228.5 556.5h0M228.5 554.5h0M229.5 555.5h0M229.5 553.5h0M229.5 532.5h0M229.5 541.5h0M229.5 533.5h0M229.5 513.5h0M229.5 517.5h0M230.5 484.5h0M230.5 478.5h0M230.5 473.5h0M230.5 472.5h0M231.5 510.5h0M231.5 500.5h0M231.5 507.5h0M231.5 504.5h0M231.5 529.5h0M231.5 528.5h0M232.5 513.5h0M232.5 526.5h0M232.5 512.5h0M232.5 534.5h0M232.5 519.5h0M232.5 518.5h0M232.5 496.5h0M233.5 510.5h0M233.5 502.5h0M233.5 516.5h0M233.5 525.5h0M233.5 527.5h0M233.5 529.5h0M233.5 528.5h0M234.5 512.5h0M234.5 526.5h0M234.5 513.5h0M234.5 509.5h0M234.5 504.5h0M234.5 524.5h0M234.5 527.5h0M234.5 506.5h0M235.5 528.5h0M235.5 516.5h0M235.5 512.5h0M235.5 545.5h0M235.5 518.5h0M235.5 479.5h0M235.5 513.5h0M236.5 503.5h0M236.5 510.5h0M236.5 484.5h0M236.5 515.5h0M236.5 526.5h0M236.5 542.5h0M236.5 554.5h0M237.5 569.5h0M237.5 552.5h0M237.5 542.5h0M237.5 541.5h0M237.5 524.5h0M237.5 515.5h0M238.5 539.5h0M238.5 556.5h0M238.5 531.5h0M238.5 494.5h0M238.5 488.5h0M238.5 479.5h0M239.5 473.5h0M239.5 501.5h0M239.5 505.5h0M239.5 512.5h0M239.5 527.5h0M240.5 506.5h0M240.5 511.5h0M240.5 510.5h0M240.5 501.5h0M240.5 515.5h0M240.5 559.5h0M240.5 565.5h0M241.5 573.5h0M241.5 560.5h0M241.5 565.5h0M241.5 527.5h0M241.5 540.5h0M242.5 529.5h0M242.5 499.5h0M242.5 519.5h0M242.5 543.5h0M242.5 536.5h0M242.5 523.5h0M243.5 530.5h0M243.5 525.5h0M243.5 521.5h0M243.5 516.5h0M243.5 532.5h0M243.5 502.5h0M243.5 518.5h0M244.5 537.5h0M244.5 503.5h0M244.5 506.5h0M244.5 502.5h0M244.5 499.5h0M244.5 490.5h0M244.5 508.5h0M245.5 501.5h0M245.5 505.5h0M245.5 525.5h0M245.5 531.5h0M245.5 508.5h0M245.5 516.5h0M245.5 514.5h0M245.5 538.5h0M246.5 525.5h0M246.5 544.5h0M246.5 556.5h0M246.5 508.5h0M246.5 533.5h0M246.5 545.5h0M246.5 527.5h0M247.5 549.5h0M247.5 507.5h0M247.5 531.5h0M247.5 543.5h0M247.5 537.5h0M247.5 517.5h0M248.5 505.5h0M248.5 535.5h0M248.5 500.5h0M248.5 517.5h0M248.5 518.5h0M248.5 515.5h0M248.5 506.5h0M249.5 528.5h0M249.5 504.5h0M249.5 502.5h0M249.5 508.5h0M249.5 512.5h0M250.5 514.5h0M250.5 510.5h0M250.5 520.5h0M250.5 513.5h0M250.5 496.5h0M250.5 500.5h0M250.5 539.5h0M251.5 510.5h0M251.5 556.5h0M251.5 515.5h0M251.5 549.5h0M251.5 511.5h0M251.5 505.5h0M252.5 533.5h0M252.5 488.5h0M252.5 513.5h0M252.5 525.5h0M252.5 504.5h0M252.5 524.5h0M252.5 509.5h0M253.5 530.5h0M253.5 498.5h0M253.5 502.5h0M253.5 544.5h0M253.5 522.5h0M253.5 489.5h0M253.5 528.5h0M254.5 499.5h0M254.5 505.5h0M254.5 516.5h0M254.5 552.5h0M254.5 500.5h0M254.5 491.5h0M254.5 501.5h0M255.5 486.5h0M255.5 500.5h0M255.5 514.5h0M255.5 474.5h0M255.5 483.5h0M255.5 477.5h0M255.5 515.5h0M255.5 543.5h0M256.5 561.5h0M256.5 502.5h0M256.5 482.5h0M256.5 493.5h0M256.5 492.5h0M256.5 527.5h0M256.5 511.5h0M256.5 509.5h0M257.5 499.5h0M257.5 547.5h0M257.5 534.5h0M257.5 528.5h0M257.5 495.5h0M257.5 501.5h0M258.5 541.5h0M258.5 508.5h0M258.5 500.5h0M258.5 515.5h0M258.5 476.5h0M258.5 497.5h0M258.5 542.5h0M259.5 480.5h0M259.5 504.5h0M259.5 510.5h0M259.5 485.5h0M259.5 501.5h0M259.5 492.5h0M260.5 477.5h0M260.5 484.5h0M260.5 518.5h0M260.5 503.5h0M260.5 511.5h0M260.5 502.5h0M260.5 496.5h0M260.5 508.5h0M261.5 484.5h0M261.5 488.5h0M261.5 523.5h0M261.5 506.5h0M261.5 524.5h0M261.5 531.5h0M261.5 521.5h0M261.5 527.5h0M262.5 539.5h0M262.5 509.5h0M262.5 512.5h0M262.5 517.5h0M262.5 523.5h0M262.5 513.5h0M262.5 488.5h0M262.5 476.5h0M263.5 498.5h0M263.5 501.5h0M263.5 534.5h0M263.5 520.5h0M263.5 512.5h0M263.5 529.5h0M263.5 476.5h0M263.5 492.5h0M264.5 496.5h0M264.5 478.5h0M264.5 497.5h0M264.5 504.5h0M264.5 503.5h0M264.5 508.5h0M264.5 490.5h0M264.5 519.5h0M265.5 494.5h0M265.5 511.5h0M265.5 506.5h0M265.5 516.5h0M265.5 504.5h0M265.5 501.5h0M265.5 509.5h0M266.5 529.5h0M266.5 504.5h0M266.5 534.5h0M266.5 525.5h0M266.5 513.5h0M266.5 496.5h0M267.5 539.5h0M267.5 523.5h0M267.5 526.5h0M267.5 500.5h0M267.5 513.5h0M268.5 503.5h0M268.5 477.5h0M268.5 521.5h0M268.5 567.5h0M268.5 544.5h0M269.5 536.5h0M269.5 502.5h0M269.5 534.5h0M269.5 516.5h0M269.5 531.5h0M269.5 520.5h0M269.5 543.5h0M269.5 505.5h0M270.5 513.5h0M270.5 539.5h0M270.5 521.5h0M270.5 520.5h0M270.5 531.5h0M270.5 514.5h0M271.5 514.5h0M271.5 509.5h0M271.5 526.5h0M271.5 517.5h0M271.5 519.5h0M271.5 516.5h0M272.5 518.5h0M272.5 519.5h0M272.5 520.5h0M272.5 513.5h0M272.5 516.5h0M272.5 515.5h0M272.5 514.5h0M273.5 507.5h0M273.5 510.5h0M273.5 513.5h0M273.5 528.5h0M273.5 509.5h0M273.5 512.5h0M273.5 522.5h0M274.5 528.5h0M274.5 524.5h0M274.5 537.5h0M274.5 504.5h0M274.5 567.5h0M274.5 516.5h0M274.5 513.5h0M275.5 555.5h0M275.5 567.5h0M275.5 534.5h0M275.5 535.5h0M275.5 509.5h0M275.5 507.5h0M275.5 506.5h0M276.5 507.5h0M276.5 516.5h0M276.5 510.5h0M276.5 545.5h0M276.5 544.5h0M277.5 542.5h0M277.5 524.5h0M277.5 510.5h0M277.5 512.5h0M277.5 540.5h0M277.5 525.5h0M277.5 518.5h0M278.5 515.5h0M278.5 527.5h0M278.5 533.5h0M278.5 517.5h0M278.5 511.5h0M278.5 514.5h0M279.5 526.5h0M279.5 541.5h0M279.5 513.5h0M279.5 542.5h0M279.5 544.5h0M279.5 512.5h0M280.5 501.5h0M280.5 544.5h0M280.5 541.5h0M280.5 534.5h0M280.5 514.5h0M280.5 531.5h0M281.5 524.5h0M281.5 540.5h0M281.5 498.5h0M281.5 508.5h0M281.5 495.5h0M281.5 528.5h0M281.5 547.5h0M282.5 523.5h0M282.5 547.5h0M282.5 539.5h0M282.5 534.5h0M282.5 516.5h0M282.5 554.5h0M282.5 538.5h0M283.5 529.5h0M283.5 500.5h0M283.5 545.5h0M283.5 510.5h0M283.5 499.5h0M283.5 511.5h0M283.5 498.5h0M283.5 516.5h0M284.5 508.5h0M284.5 495.5h0M284.5 537.5h0M284.5 519.5h0M285.5 514.5h0M285.5 507.5h0M285.5 513.5h0M285.5 510.5h0M285.5 511.5h0M286.5 519.5h0M286.5 512.5h0M286.5 506.5h0M286.5 511.5h0M286.5 521.5h0M286.5 522.5h0M286.5 508.5h0M287.5 510.5h0M287.5 513.5h0M287.5 518.5h0M287.5 532.5h0M287.5 525.5h0M287.5 524.5h0M287.5 549.5h0M288.5 511.5h0M288.5 520.5h0M288.5 510.5h0M288.5 522.5h0M288.5 539.5h0M288.5 526.5h0M289.5 521.5h0M289.5 513.5h0M289.5 535.5h0M289.5 520.5h0M289.5 529.5h0M289.5 523.5h0M290.5 524.5h0M290.5 525.5h0M290.5 511.5h0M290.5 535.5h0M290.5 526.5h0M290.5 527.5h0M290.5 517.5h0M291.5 509.5h0M291.5 508.5h0M291.5 518.5h0M291.5 514.5h0M291.5 511.5h0M291.5 499.5h0M291.5 496.5h0M291.5 507.5h0M292.5 515.5h0M292.5 495.5h0M292.5 503.5h0M292.5 497.5h0M292.5 520.5h0M292.5 505.5h0M292.5 529.5h0M292.5 488.5h0M293.5 482.5h0M293.5 490.5h0M293.5 473.5h0M293.5 515.5h0M293.5 471.5h0M294.5 527.5h0M294.5 469.5h0M294.5 463.5h0M294.5 491.5h0M294.5 470.5h0M294.5 472.5h0M294.5 479.5h0M295.5 506.5h0M295.5 494.5h0M295.5 520.5h0M295.5 512.5h0M295.5 532.5h0M295.5 529.5h0M296.5 530.5h0M296.5 525.5h0M296.5 504.5h0M296.5 537.5h0M296.5 501.5h0M296.5 556.5h0M297.5 522.5h0M297.5 526.5h0M297.5 502.5h0M297.5 494.5h0M297.5 470.5h0M297.5 485.5h0M297.5 531.5h0M297.5 521.5h0M298.5 544.5h0M298.5 517.5h0M298.5 540.5h0M298.5 529.5h0M298.5 527.5h0M298.5 522.5h0M298.5 477.5h0M299.5 522.5h0M299.5 521.5h0M299.5 490.5h0M299.5 476.5h0M300.5 502.5h0M300.5 503.5h0M300.5 524.5h0M300.5 507.5h0M300.5 493.5h0M300.5 510.5h0M300.5 522.5h0M300.5 512.5h0M301.5 519.5h0M301.5 511.5h0M301.5 521.5h0M301.5 520.5h0M301.5 503.5h0M301.5 512.5h0M302.5 502.5h0M302.5 522.5h0M302.5 498.5h0M302.5 524.5h0M302.5 510.5h0M302.5 487.5h0M302.5 518.5h0M302.5 491.5h0M303.5 500.5h0M303.5 493.5h0M303.5 474.5h0M303.5 486.5h0M303.5 476.5h0M303.5 490.5h0M304.5 525.5h0M304.5 524.5h0M304.5 502.5h0M304.5 520.5h0M304.5 521.5h0M305.5 527.5h0M305.5 524.5h0M305.5 500.5h0M305.5 520.5h0M305.5 529.5h0M305.5 532.5h0M305.5 509.5h0M306.5 514.5h0M306.5 486.5h0M306.5 490.5h0M306.5 526.5h0M306.5 524.5h0M306.5 521.5h0M306.5 478.5h0M307.5 513.5h0M307.5 521.5h0M307.5 515.5h0M307.5 525.5h0M307.5 516.5h0M307.5 528.5h0M307.5 522.5h0M307.5 532.5h0M308.5 521.5h0M308.5 540.5h0M308.5 501.5h0M308.5 514.5h0M308.5 496.5h0M308.5 523.5h0M309.5 492.5h0M309.5 512.5h0M309.5 511.5h0M309.5 534.5h0M309.5 532.5h0M309.5 520.5h0M310.5 536.5h0M310.5 523.5h0M310.5 514.5h0M310.5 483.5h0M310.5 497.5h0M310.5 524.5h0M310.5 549.5h0M310.5 557.5h0M311.5 546.5h0M311.5 472.5h0M311.5 542.5h0M311.5 525.5h0M311.5 513.5h0M311.5 495.5h0M311.5 562.5h0M312.5 548.5h0M312.5 557.5h0M312.5 559.5h0M312.5 536.5h0M312.5 558.5h0M312.5 541.5h0M312.5 523.5h0M313.5 495.5h0M313.5 496.5h0M313.5 500.5h0M313.5 501.5h0M313.5 549.5h0M313.5 512.5h0M314.5 475.5h0M314.5 505.5h0M314.5 482.5h0M314.5 504.5h0M314.5 490.5h0M314.5 497.5h0M314.5 502.5h0M314.5 498.5h0M315.5 490.5h0M315.5 511.5h0M315.5 484.5h0M315.5 495.5h0M315.5 505.5h0M315.5 507.5h0M316.5 490.5h0M316.5 503.5h0M316.5 524.5h0M316.5 467.5h0M316.5 469.5h0M316.5 517.5h0M316.5 484.5h0M317.5 503.5h0M317.5 528.5h0M317.5 520.5h0M317.5 548.5h0M317.5 495.5h0M317.5 521.5h0M317.5 560.5h0M318.5 488.5h0M318.5 492.5h0M318.5 547.5h0M318.5 501.5h0M318.5 513.5h0M318.5 484.5h0M318.5 499.5h0M318.5 494.5h0M319.5 461.5h0M319.5 491.5h0M319.5 493.5h0M319.5 487.5h0M319.5 473.5h0M319.5 466.5h0M320.5 565.5h0M320.5 536.5h0M320.5 567.5h0M320.5 468.5h0M321.5 491.5h0M321.5 507.5h0M321.5 538.5h0M321.5 533.5h0M321.5 497.5h0M321.5 510.5h0M321.5 556.5h0M322.5 535.5h0M322.5 490.5h0M322.5 507.5h0M322.5 498.5h0M322.5 497.5h0M322.5 475.5h0M322.5 462.5h0M322.5 463.5h0M323.5 445.5h0M323.5 448.5h0M324.5 455.5h0M324.5 559.5h0M324.5 540.5h0M324.5 458.5h0M324.5 551.5h0M325.5 576.5h0M325.5 532.5h0M325.5 545.5h0M325.5 530.5h0M325.5 512.5h0M325.5 542.5h0M325.5 508.5h0M325.5 520.5h0M326.5 553.5h0M326.5 556.5h0M326.5 557.5h0M326.5 544.5h0M326.5 535.5h0M326.5 530.5h0M326.5 525.5h0M327.5 513.5h0M327.5 518.5h0M327.5 508.5h0M327.5 500.5h0M327.5 512.5h0M327.5 533.5h0M327.5 520.5h0M328.5 556.5h0M328.5 513.5h0M328.5 546.5h0M328.5 542.5h0M328.5 537.5h0M328.5 517.5h0M329.5 550.5h0M329.5 511.5h0M329.5 539.5h0M329.5 509.5h0M329.5 538.5h0M329.5 548.5h0M329.5 557.5h0M330.5 562.5h0M330.5 494.5h0M330.5 547.5h0M330.5 521.5h0M330.5 574.5h0M330.5 550.5h0M330.5 560.5h0M331.5 549.5h0M331.5 568.5h0M331.5 490.5h0M331.5 550.5h0M331.5 518.5h0M331.5 494.5h0M331.5 475.5h0M331.5 484.5h0M332.5 486.5h0M332.5 531.5h0M332.5 502.5h0M332.5 506.5h0M332.5 482.5h0M332.5 491.5h0M332.5 508.5h0M332.5 543.5h0M333.5 517.5h0M333.5 509.5h0M333.5 495.5h0M333.5 519.5h0M333.5 511.5h0M333.5 525.5h0M334.5 537.5h0M334.5 506.5h0M334.5 514.5h0M334.5 513.5h0M334.5 527.5h0M334.5 517.5h0M334.5 521.5h0M335.5 538.5h0M335.5 553.5h0M335.5 541.5h0M335.5 539.5h0M335.5 534.5h0M335.5 515.5h0M335.5 564.5h0M336.5 563.5h0M336.5 544.5h0M336.5 535.5h0M336.5 501.5h0M336.5 508.5h0M336.5 507.5h0M336.5 551.5h0M336.5 550.5h0M337.5 527.5h0M337.5 502.5h0M337.5 526.5h0M337.5 503.5h0M337.5 512.5h0M337.5 514.5h0M337.5 498.5h0M338.5 492.5h0M338.5 505.5h0M338.5 517.5h0M338.5 514.5h0M338.5 510.5h0M338.5 548.5h0M339.5 505.5h0M339.5 486.5h0M339.5 508.5h0M339.5 506.5h0M339.5 504.5h0M339.5 503.5h0M340.5 524.5h0M340.5 518.5h0M340.5 520.5h0M340.5 509.5h0M340.5 506.5h0M340.5 508.5h0M340.5 492.5h0M340.5 504.5h0M341.5 504.5h0M341.5 510.5h0M341.5 508.5h0M341.5 518.5h0M341.5 498.5h0M341.5 516.5h0M341.5 489.5h0M342.5 511.5h0M342.5 521.5h0M342.5 491.5h0M342.5 534.5h0M342.5 490.5h0M342.5 517.5h0M342.5 508.5h0M342.5 515.5h0M343.5 518.5h0M343.5 509.5h0M343.5 527.5h0M343.5 500.5h0M343.5 515.5h0M343.5 507.5h0M344.5 518.5h0M344.5 523.5h0M344.5 527.5h0M344.5 508.5h0M344.5 512.5h0M344.5 522.5h0M345.5 513.5h0M345.5 526.5h0M345.5 491.5h0M345.5 518.5h0M345.5 542.5h0M345.5 535.5h0M346.5 489.5h0M346.5 507.5h0M346.5 499.5h0M346.5 508.5h0M346.5 535.5h0M346.5 547.5h0M346.5 519.5h0M346.5 472.5h0M347.5 483.5h0M347.5 488.5h0M347.5 513.5h0M347.5 504.5h0M347.5 499.5h0M347.5 503.5h0M347.5 509.5h0M348.5 497.5h0M348.5 520.5h0M348.5 510.5h0M348.5 498.5h0M348.5 501.5h0M348.5 514.5h0M348.5 511.5h0M349.5 518.5h0M349.5 535.5h0M349.5 519.5h0M349.5 497.5h0M350.5 506.5h0M350.5 517.5h0M350.5 523.5h0M350.5 515.5h0M350.5 531.5h0M350.5 516.5h0M351.5 527.5h0M351.5 494.5h0M351.5 477.5h0M351.5 476.5h0M351.5 541.5h0M351.5 531.5h0M351.5 470.5h0M351.5 492.5h0M352.5 467.5h0M352.5 542.5h0M352.5 558.5h0M352.5 496.5h0M352.5 484.5h0M352.5 529.5h0M352.5 489.5h0M352.5 485.5h0M353.5 516.5h0M353.5 496.5h0M353.5 470.5h0M353.5 493.5h0M353.5 518.5h0M353.5 468.5h0M354.5 499.5h0M354.5 553.5h0M354.5 505.5h0M354.5 530.5h0M354.5 485.5h0M354.5 532.5h0M354.5 471.5h0M354.5 523.5h0M355.5 537.5h0M355.5 464.5h0M355.5 554.5h0M355.5 471.5h0M355.5 501.5h0M355.5 558.5h0M355.5 519.5h0M356.5 518.5h0M356.5 538.5h0M356.5 520.5h0M356.5 541.5h0M356.5 555.5h0M357.5 555.5h0M357.5 512.5h0M357.5 527.5h0M357.5 516.5h0M357.5 521.5h0M358.5 531.5h0M358.5 500.5h0M358.5 553.5h0M358.5 551.5h0M358.5 543.5h0M359.5 551.5h0M359.5 530.5h0M359.5 508.5h0M359.5 488.5h0M359.5 516.5h0M359.5 474.5h0M360.5 472.5h0M360.5 514.5h0M360.5 515.5h0M360.5 527.5h0M360.5 521.5h0M360.5 483.5h0M360.5 528.5h0M361.5 544.5h0M361.5 539.5h0M361.5 525.5h0M361.5 515.5h0M361.5 535.5h0M361.5 521.5h0M361.5 519.5h0M362.5 526.5h0M362.5 525.5h0M362.5 485.5h0M362.5 546.5h0M362.5 528.5h0M362.5 521.5h0M362.5 530.5h0M362.5 535.5h0M363.5 522.5h0M363.5 525.5h0M363.5 534.5h0M363.5 527.5h0M363.5 519.5h0M363.5 502.5h0M363.5 510.5h0M364.5 521.5h0M364.5 523.5h0M364.5 513.5h0M364.5 504.5h0M364.5 491.5h0M364.5 483.5h0M365.5 525.5h0M365.5 536.5h0M365.5 517.5h0M365.5 554.5h0M365.5 524.5h0M366.5 514.5h0M366.5 524.5h0M366.5 521.5h0M366.5 533.5h0M366.5 513.5h0M366.5 551.5h0M366.5 530.5h0M367.5 543.5h0M367.5 531.5h0M367.5 529.5h0M367.5 558.5h0M367.5 545.5h0M367.5 533.5h0M367.5 537.5h0M367.5 499.5h0M368.5 526.5h0M368.5 494.5h0M368.5 489.5h0M368.5 487.5h0M368.5 532.5h0M368.5 495.5h0M369.5 541.5h0M369.5 491.5h0M369.5 523.5h0M369.5 494.5h0M369.5 521.5h0M369.5 544.5h0M370.5 530.5h0M370.5 528.5h0M370.5 536.5h0M370.5 544.5h0M370.5 554.5h0M370.5 513.5h0M370.5 507.5h0M371.5 535.5h0M371.5 537.5h0M371.5 473.5h0M371.5 474.5h0M371.5 516.5h0M371.5 526.5h0M371.5 491.5h0M371.5 505.5h0M372.5 493.5h0M372.5 492.5h0M372.5 528.5h0M372.5 481.5h0M372.5 485.5h0M373.5 545.5h0M373.5 524.5h0M373.5 570.5h0M373.5 547.5h0M373.5 495.5h0M374.5 533.5h0M374.5 482.5h0M374.5 526.5h0M374.5 551.5h0M374.5 544.5h0M375.5 549.5h0M375.5 528.5h0M375.5 542.5h0M375.5 532.5h0M375.5 509.5h0M375.5 514.5h0M375.5 505.5h0M376.5 523.5h0M376.5 520.5h0M376.5 510.5h0M376.5 535.5h0M376.5 536.5h0M376.5 519.5h0M376.5 526.5h0M377.5 527.5h0M377.5 531.5h0M377.5 523.5h0M377.5 540.5h0M377.5 506.5h0M377.5 520.5h0M377.5 516.5h0M378.5 533.5h0M378.5 517.5h0M378.5 516.5h0M378.5 527.5h0M378.5 525.5h0M378.5 519.5h0M378.5 524.5h0M378.5 548.5h0M379.5 516.5h0M379.5 483.5h0M379.5 490.5h0M379.5 469.5h0M379.5 482.5h0M379.5 474.5h0M380.5 482.5h0M380.5 513.5h0M380.5 489.5h0M380.5 494.5h0M380.5 501.5h0M380.5 463.5h0M380.5 499.5h0M381.5 548.5h0M381.5 490.5h0M381.5 523.5h0M381.5 510.5h0M381.5 569.5h0M381.5 497.5h0M381.5 526.5h0M381.5 542.5h0M382.5 550.5h0M382.5 533.5h0M382.5 525.5h0M382.5 508.5h0M382.5 509.5h0M382.5 507.5h0M382.5 492.5h0M383.5 504.5h0M383.5 512.5h0M383.5 548.5h0M383.5 508.5h0M384.5 546.5h0M384.5 476.5h0M384.5 530.5h0M384.5 509.5h0M384.5 571.5h0M384.5 568.5h0M384.5 584.5h0M385.5 585.5h0M385.5 575.5h0M385.5 581.5h0M385.5 579.5h0M385.5 523.5h0M385.5 520.5h0M385.5 518.5h0M385.5 493.5h0M386.5 521.5h0M386.5 505.5h0M386.5 503.5h0M386.5 508.5h0M386.5 507.5h0M386.5 511.5h0M386.5 539.5h0M387.5 522.5h0M387.5 499.5h0M387.5 492.5h0M387.5 484.5h0M387.5 507.5h0M387.5 529.5h0M387.5 554.5h0M387.5 509.5h0M388.5 513.5h0M388.5 514.5h0M388.5 532.5h0M388.5 552.5h0M388.5 533.5h0M388.5 541.5h0M389.5 521.5h0M389.5 524.5h0M389.5 497.5h0M389.5 512.5h0M389.5 515.5h0M389.5 511.5h0M390.5 497.5h0M390.5 523.5h0M390.5 549.5h0M390.5 514.5h0M390.5 517.5h0M390.5 531.5h0M390.5 528.5h0M391.5 524.5h0M391.5 513.5h0M391.5 517.5h0M391.5 516.5h0M391.5 515.5h0M391.5 520.5h0M392.5 503.5h0M392.5 515.5h0M392.5 518.5h0M392.5 530.5h0M392.5 510.5h0M392.5 534.5h0M392.5 536.5h0M393.5 527.5h0M393.5 569.5h0M393.5 496.5h0M393.5 530.5h0M393.5 557.5h0M393.5 506.5h0M393.5 494.5h0M394.5 501.5h0M394.5 504.5h0M394.5 505.5h0M394.5 521.5h0M394.5 520.5h0M394.5 531.5h0M394.5 528.5h0M394.5 526.5h0M395.5 552.5h0M395.5 514.5h0M395.5 506.5h0M395.5 511.5h0M395.5 513.5h0M395.5 545.5h0M395.5 523.5h0M395.5 503.5h0M396.5 539.5h0M396.5 486.5h0M396.5 567.5h0M396.5 517.5h0M396.5 570.5h0M396.5 530.5h0M396.5 527.5h0M397.5 516.5h0M397.5 539.5h0M397.5 521.5h0M397.5 571.5h0M397.5 551.5h0M397.5 490.5h0M397.5 511.5h0M398.5 499.5h0M398.5 520.5h0M398.5 532.5h0M398.5 502.5h0M398.5 516.5h0M398.5 493.5h0M398.5 570.5h0M399.5 568.5h0M399.5 542.5h0M399.5 563.5h0M399.5 557.5h0M399.5 533.5h0M400.5 508.5h0M400.5 511.5h0M400.5 524.5h0M400.5 526.5h0M400.5 525.5h0M400.5 540.5h0M400.5 548.5h0M400.5 546.5h0M401.5 567.5h0M401.5 554.5h0M401.5 556.5h0M401.5 532.5h0M401.5 540.5h0M402.5 561.5h0M402.5 545.5h0M402.5 523.5h0M402.5 507.5h0M402.5 551.5h0M402.5 490.5h0M402.5 534.5h0M403.5 510.5h0M403.5 499.5h0M403.5 483.5h0M403.5 505.5h0M403.5 519.5h0M404.5 511.5h0M404.5 525.5h0M404.5 495.5h0M404.5 544.5h0M404.5 505.5h0M404.5 489.5h0M405.5 520.5h0M405.5 525.5h0M405.5 500.5h0M405.5 547.5h0M405.5 507.5h0M405.5 505.5h0M405.5 511.5h0M405.5 487.5h0M406.5 475.5h0M406.5 506.5h0M406.5 552.5h0M406.5 555.5h0M406.5 512.5h0M406.5 522.5h0M407.5 531.5h0M407.5 469.5h0M407.5 523.5h0M407.5 518.5h0M407.5 483.5h0M407.5 479.5h0M408.5 494.5h0M408.5 483.5h0M408.5 493.5h0M408.5 511.5h0M408.5 519.5h0M408.5 509.5h0M408.5 542.5h0M409.5 538.5h0M409.5 465.5h0M409.5 550.5h0M409.5 468.5h0M409.5 508.5h0M409.5 500.5h0M410.5 540.5h0M410.5 504.5h0M410.5 556.5h0M410.5 562.5h0M410.5 529.5h0M410.5 538.5h0M411.5 546.5h0M411.5 527.5h0M411.5 531.5h0M411.5 525.5h0M411.5 524.5h0M411.5 543.5h0M411.5 544.5h0M412.5 524.5h0M412.5 527.5h0M412.5 519.5h0M412.5 536.5h0M412.5 514.5h0M412.5 529.5h0M412.5 520.5h0M412.5 484.5h0M413.5 541.5h0M413.5 526.5h0M413.5 556.5h0M413.5 498.5h0M413.5 476.5h0M413.5 474.5h0M413.5 465.5h0M413.5 521.5h0M414.5 470.5h0M414.5 488.5h0M414.5 469.5h0M414.5 528.5h0M414.5 549.5h0M414.5 552.5h0M415.5 526.5h0M415.5 529.5h0M415.5 511.5h0M415.5 494.5h0M415.5 504.5h0M415.5 506.5h0M415.5 507.5h0M416.5 489.5h0M416.5 511.5h0M416.5 553.5h0M416.5 510.5h0M416.5 469.5h0M416.5 470.5h0M416.5 525.5h0M417.5 484.5h0M417.5 527.5h0M417.5 517.5h0M417.5 516.5h0M417.5 486.5h0M417.5 499.5h0M417.5 536.5h0M418.5 497.5h0M418.5 501.5h0M418.5 525.5h0M418.5 512.5h0M418.5 509.5h0M419.5 507.5h0M419.5 526.5h0M419.5 509.5h0M419.5 506.5h0M419.5 499.5h0M419.5 538.5h0M419.5 519.5h0M419.5 514.5h0M420.5 511.5h0M420.5 541.5h0M420.5 512.5h0M420.5 517.5h0M420.5 509.5h0M420.5 523.5h0M420.5 514.5h0M421.5 512.5h0M421.5 487.5h0M421.5 534.5h0M421.5 561.5h0M421.5 507.5h0M421.5 557.5h0M421.5 477.5h0M421.5 511.5h0M422.5 512.5h0M422.5 487.5h0M422.5 494.5h0M422.5 507.5h0M422.5 501.5h0M422.5 504.5h0M422.5 540.5h0M423.5 500.5h0M423.5 523.5h0M423.5 533.5h0M423.5 544.5h0M423.5 542.5h0M423.5 529.5h0M423.5 508.5h0M424.5 508.5h0M424.5 528.5h0M424.5 500.5h0M424.5 509.5h0M424.5 497.5h0M424.5 507.5h0M424.5 517.5h0M425.5 518.5h0M425.5 506.5h0M425.5 508.5h0M425.5 481.5h0M425.5 480.5h0M425.5 541.5h0M425.5 498.5h0M425.5 527.5h0M426.5 512.5h0M426.5 543.5h0M426.5 531.5h0M426.5 507.5h0M426.5 515.5h0M426.5 501.5h0M427.5 510.5h0M427.5 507.5h0M427.5 524.5h0M427.5 533.5h0M427.5 517.5h0M427.5 494.5h0M427.5 518.5h0M428.5 543.5h0M428.5 533.5h0M428.5 506.5h0M428.5 550.5h0M428.5 536.5h0M428.5 512.5h0M428.5 508.5h0M429.5 542.5h0M429.5 547.5h0M429.5 513.5h0M429.5 535.5h0M429.5 509.5h0M429.5 515.5h0M429.5 539.5h0M430.5 493.5h0M430.5 530.5h0M430.5 525.5h0M430.5 555.5h0M430.5 477.5h0M430.5 508.5h0M430.5 495.5h0M431.5 481.5h0M431.5 489.5h0M431.5 488.5h0M431.5 494.5h0M431.5 506.5h0M431.5 542.5h0M431.5 533.5h0M432.5 551.5h0M432.5 507.5h0M432.5 480.5h0M432.5 490.5h0M432.5 476.5h0M432.5 561.5h0M432.5 528.5h0M433.5 498.5h0M433.5 565.5h0M433.5 540.5h0M433.5 560.5h0M433.5 558.5h0M433.5 553.5h0M434.5 545.5h0M434.5 500.5h0M434.5 543.5h0M434.5 499.5h0M434.5 527.5h0M434.5 554.5h0M435.5 551.5h0M435.5 540.5h0M435.5 530.5h0M435.5 552.5h0M435.5 545.5h0M435.5 518.5h0M435.5 511.5h0M435.5 525.5h0M436.5 530.5h0M436.5 515.5h0M436.5 520.5h0M436.5 527.5h0M436.5 523.5h0M436.5 506.5h0M436.5 497.5h0M436.5 512.5h0M437.5 514.5h0M437.5 535.5h0M437.5 506.5h0M437.5 545.5h0M437.5 495.5h0M437.5 520.5h0M437.5 521.5h0M438.5 522.5h0M438.5 537.5h0M438.5 505.5h0M438.5 475.5h0M438.5 504.5h0M438.5 561.5h0M438.5 533.5h0M439.5 531.5h0M439.5 529.5h0M439.5 524.5h0M439.5 526.5h0M439.5 535.5h0M439.5 493.5h0M440.5 479.5h0M440.5 487.5h0M440.5 503.5h0M440.5 484.5h0M440.5 482.5h0M440.5 519.5h0M440.5 485.5h0M440.5 491.5h0M441.5 491.5h0M441.5 500.5h0M441.5 488.5h0M441.5 496.5h0M441.5 552.5h0M441.5 489.5h0M441.5 485.5h0M442.5 478.5h0M442.5 487.5h0M442.5 513.5h0M442.5 560.5h0M442.5 530.5h0M442.5 493.5h0M442.5 522.5h0M443.5 538.5h0M443.5 495.5h0M443.5 524.5h0M443.5 506.5h0M443.5 554.5h0M443.5 522.5h0M443.5 507.5h0M443.5 493.5h0M444.5 491.5h0M444.5 515.5h0M444.5 503.5h0M444.5 486.5h0M444.5 513.5h0M444.5 507.5h0M444.5 488.5h0M445.5 536.5h0M445.5 554.5h0M445.5 541.5h0M445.5 518.5h0M445.5 515.5h0M445.5 529.5h0M445.5 499.5h0M445.5 512.5h0M446.5 514.5h0M446.5 506.5h0M446.5 539.5h0M446.5 526.5h0M446.5 516.5h0M447.5 500.5h0M447.5 508.5h0M447.5 507.5h0M447.5 512.5h0M447.5 511.5h0M447.5 515.5h0M448.5 516.5h0M448.5 508.5h0M448.5 510.5h0M448.5 514.5h0M448.5 515.5h0M448.5 517.5h0M448.5 513.5h0M449.5 503.5h0M449.5 504.5h0M449.5 506.5h0M449.5 532.5h0M449.5 535.5h0M449.5 528.5h0M449.5 523.5h0M450.5 563.5h0M450.5 540.5h0M450.5 536.5h0M450.5 502.5h0M450.5 507.5h0M450.5 516.5h0M451.5 508.5h0M451.5 503.5h0M451.5 505.5h0M451.5 504.5h0M451.5 518.5h0M451.5 556.5h0M452.5 516.5h0M452.5 529.5h0M452.5 503.5h0M452.5 527.5h0M452.5 517.5h0M452.5 509.5h0M452.5 556.5h0M452.5 550.5h0M453.5 555.5h0M453.5 551.5h0M453.5 516.5h0M453.5 512.5h0M453.5 546.5h0M453.5 513.5h0M453.5 515.5h0M454.5 509.5h0M454.5 566.5h0M454.5 506.5h0M454.5 541.5h0M454.5 573.5h0M454.5 512.5h0M455.5 576.5h0M455.5 501.5h0M455.5 502.5h0M455.5 516.5h0M455.5 511.5h0M455.5 499.5h0M455.5 527.5h0M455.5 533.5h0M456.5 519.5h0M456.5 575.5h0M456.5 527.5h0M456.5 548.5h0M456.5 507.5h0M456.5 515.5h0M456.5 530.5h0M457.5 569.5h0M457.5 542.5h0M457.5 562.5h0M457.5 518.5h0M457.5 513.5h0M457.5 536.5h0M457.5 574.5h0M458.5 565.5h0M458.5 579.5h0M458.5 564.5h0M458.5 569.5h0M458.5 551.5h0M458.5 549.5h0M458.5 512.5h0M459.5 515.5h0M459.5 497.5h0M459.5 484.5h0M459.5 500.5h0M459.5 504.5h0M460.5 547.5h0M460.5 513.5h0M460.5 514.5h0M460.5 501.5h0M460.5 498.5h0M460.5 520.5h0M460.5 538.5h0M461.5 537.5h0M461.5 542.5h0M461.5 535.5h0M461.5 523.5h0M461.5 533.5h0M461.5 518.5h0M461.5 559.5h0M462.5 539.5h0M462.5 499.5h0M462.5 511.5h0M462.5 502.5h0M462.5 498.5h0M462.5 491.5h0M462.5 471.5h0M463.5 500.5h0M463.5 567.5h0M463.5 563.5h0M463.5 559.5h0M463.5 530.5h0M463.5 497.5h0M464.5 498.5h0M464.5 497.5h0M464.5 518.5h0M464.5 510.5h0M464.5 505.5h0M465.5 510.5h0M465.5 486.5h0M465.5 566.5h0M465.5 503.5h0M465.5 541.5h0M465.5 544.5h0M465.5 499.5h0M465.5 467.5h0M465.5 500.5h0M466.5 575.5h0M466.5 540.5h0M466.5 508.5h0M466.5 577.5h0M466.5 571.5h0M466.5 494.5h0M466.5 517.5h0M467.5 522.5h0M467.5 518.5h0M467.5 559.5h0M467.5 500.5h0M467.5 534.5h0M467.5 567.5h0M467.5 536.5h0M468.5 459.5h0M468.5 495.5h0M468.5 457.5h0M468.5 522.5h0M468.5 484.5h0M468.5 506.5h0M469.5 499.5h0M469.5 472.5h0M469.5 524.5h0M469.5 547.5h0M469.5 489.5h0M469.5 464.5h0M469.5 531.5h0M469.5 536.5h0M470.5 531.5h0M470.5 550.5h0M470.5 503.5h0M470.5 510.5h0M470.5 508.5h0M470.5 533.5h0M470.5 523.5h0M470.5 485.5h0M471.5 512.5h0M471.5 475.5h0M471.5 523.5h0M471.5 547.5h0M471.5 572.5h0M472.5 565.5h0M472.5 533.5h0M472.5 540.5h0M472.5 550.5h0M472.5 500.5h0M472.5 517.5h0M473.5 511.5h0M473.5 484.5h0M473.5 542.5h0M473.5 470.5h0M473.5 569.5h0M474.5 540.5h0M474.5 573.5h0M474.5 555.5h0M474.5 550.5h0M474.5 557.5h0M474.5 570.5h0M474.5 542.5h0M474.5 531.5h0M475.5 524.5h0M475.5 496.5h0M475.5 525.5h0M475.5 477.5h0M475.5 511.5h0M475.5 543.5h0M476.5 564.5h0M476.5 487.5h0M476.5 542.5h0M476.5 511.5h0M476.5 517.5h0M476.5 526.5h0M476.5 501.5h0M476.5 532.5h0M477.5 554.5h0M477.5 530.5h0M477.5 535.5h0M477.5 522.5h0M477.5 542.5h0M477.5 532.5h0M477.5 519.5h0M478.5 514.5h0M478.5 540.5h0M478.5 517.5h0M478.5 534.5h0M478.5 536.5h0M478.5 547.5h0M479.5 546.5h0M479.5 515.5h0M479.5 479.5h0M479.5 491.5h0M479.5 505.5h0M480.5 517.5h0M480.5 545.5h0M480.5 538.5h0M480.5 528.5h0M480.5 513.5h0M480.5 542.5h0M480.5 536.5h0M480.5 546.5h0M481.5 514.5h0M481.5 559.5h0M481.5 550.5h0M481.5 540.5h0M481.5 524.5h0M481.5 520.5h0M481.5 527.5h0M482.5 521.5h0M482.5 524.5h0M482.5 496.5h0M482.5 512.5h0M482.5 507.5h0M482.5 506.5h0M483.5 532.5h0M483.5 503.5h0M483.5 488.5h0M483.5 508.5h0M483.5 510.5h0M484.5 499.5h0M484.5 516.5h0M484.5 512.5h0M484.5 529.5h0M484.5 510.5h0M484.5 514.5h0M484.5 518.5h0M485.5 500.5h0M485.5 516.5h0M485.5 506.5h0M485.5 523.5h0M485.5 525.5h0M485.5 544.5h0M485.5 496.5h0M486.5 489.5h0M486.5 512.5h0M486.5 482.5h0M486.5 526.5h0M486.5 497.5h0M487.5 490.5h0M487.5 538.5h0M487.5 503.5h0M487.5 571.5h0M488.5 490.5h0M488.5 530.5h0M488.5 560.5h0M488.5 507.5h0M488.5 521.5h0M488.5 565.5h0M488.5 513.5h0M489.5 503.5h0M489.5 528.5h0M489.5 525.5h0M489.5 559.5h0M489.5 541.5h0M489.5 534.5h0M490.5 518.5h0M490.5 502.5h0M490.5 494.5h0M490.5 517.5h0M490.5 512.5h0M490.5 540.5h0M490.5 529.5h0M490.5 478.5h0M490.5 492.5h0M491.5 472.5h0M491.5 522.5h0M491.5 566.5h0M491.5 525.5h0M491.5 535.5h0M491.5 480.5h0M491.5 555.5h0M491.5 530.5h0M492.5 578.5h0M492.5 577.5h0M492.5 514.5h0M492.5 535.5h0M492.5 553.5h0M492.5 531.5h0M492.5 574.5h0M493.5 548.5h0M493.5 563.5h0M493.5 533.5h0M493.5 565.5h0M493.5 498.5h0M493.5 564.5h0M494.5 492.5h0M494.5 499.5h0M494.5 569.5h0M494.5 514.5h0M494.5 519.5h0M494.5 531.5h0M494.5 544.5h0M495.5 531.5h0M495.5 507.5h0M495.5 542.5h0M495.5 501.5h0M495.5 496.5h0M495.5 547.5h0M495.5 516.5h0M495.5 503.5h0M496.5 492.5h0M496.5 501.5h0M496.5 505.5h0M496.5 497.5h0M496.5 516.5h0M496.5 510.5h0M496.5 548.5h0M497.5 527.5h0M497.5 515.5h0M497.5 505.5h0M497.5 570.5h0M497.5 578.5h0M497.5 571.5h0M497.5 576.5h0M497.5 581.5h0M498.5 546.5h0M498.5 528.5h0M498.5 475.5h0M498.5 583.5h0M498.5 532.5h0M498.5 516.5h0M498.5 477.5h0M499.5 541.5h0M499.5 571.5h0M499.5 561.5h0M499.5 573.5h0M499.5 476.5h0M499.5 578.5h0M499.5 546.5h0M500.5 565.5h0M500.5 576.5h0M500.5 530.5h0M500.5 545.5h0M500.5 515.5h0M500.5 574.5h0M500.5 539.5h0M500.5 527.5h0M500.5 595.5h0M501.5 572.5h0M501.5 592.5h0M501.5 565.5h0M501.5 587.5h0M501.5 544.5h0M502.5 540.5h0M502.5 527.5h0M502.5 529.5h0M502.5 520.5h0M502.5 517.5h0M502.5 510.5h0M503.5 514.5h0M503.5 518.5h0M503.5 513.5h0M503.5 540.5h0M503.5 528.5h0M504.5 511.5h0M504.5 538.5h0M504.5 542.5h0M504.5 575.5h0M504.5 570.5h0M504.5 586.5h0M504.5 551.5h0M505.5 587.5h0M505.5 588.5h0M505.5 586.5h0M505.5 577.5h0M505.5 549.5h0M505.5 508.5h0M505.5 567.5h0M505.5 504.5h0M505.5 534.5h0M506.5 546.5h0M506.5 563.5h0M506.5 545.5h0M506.5 547.5h0M506.5 544.5h0M506.5 543.5h0M507.5 537.5h0M507.5 555.5h0M507.5 532.5h0M507.5 514.5h0M507.5 517.5h0M507.5 527.5h0M508.5 520.5h0M508.5 531.5h0M508.5 511.5h0M508.5 535.5h0M508.5 518.5h0M508.5 546.5h0M508.5 524.5h0M509.5 512.5h0M509.5 539.5h0M509.5 517.5h0M509.5 511.5h0M509.5 540.5h0M509.5 500.5h0M509.5 561.5h0M509.5 518.5h0M509.5 535.5h0M510.5 509.5h0M510.5 569.5h0M510.5 489.5h0M510.5 538.5h0M510.5 544.5h0M510.5 529.5h0M510.5 521.5h0M510.5 512.5h0M511.5 514.5h0M511.5 541.5h0M511.5 562.5h0M511.5 496.5h0M511.5 559.5h0M511.5 560.5h0M511.5 518.5h0M511.5 531.5h0M512.5 492.5h0M512.5 493.5h0M512.5 510.5h0M512.5 519.5h0M512.5 511.5h0M512.5 535.5h0M512.5 495.5h0M512.5 516.5h0M513.5 523.5h0M513.5 502.5h0M513.5 544.5h0M513.5 518.5h0M513.5 519.5h0M513.5 512.5h0M514.5 517.5h0M514.5 505.5h0M514.5 529.5h0M514.5 509.5h0M514.5 522.5h0M514.5 523.5h0M515.5 520.5h0M515.5 524.5h0M515.5 536.5h0M515.5 515.5h0M515.5 552.5h0M515.5 525.5h0M515.5 548.5h0M516.5 523.5h0M516.5 516.5h0M516.5 557.5h0M516.5 555.5h0M516.5 490.5h0M516.5 520.5h0M517.5 526.5h0M517.5 512.5h0M517.5 513.5h0M517.5 501.5h0M517.5 493.5h0M517.5 485.5h0M517.5 562.5h0M518.5 494.5h0M518.5 527.5h0M518.5 558.5h0M518.5 509.5h0M518.5 518.5h0M518.5 485.5h0M518.5 493.5h0M519.5 511.5h0M519.5 537.5h0M519.5 539.5h0M519.5 557.5h0M519.5 553.5h0M519.5 534.5h0M519.5 524.5h0M520.5 549.5h0M520.5 513.5h0M520.5 542.5h0M520.5 539.5h0M520.5 556.5h0M520.5 546.5h0M521.5 507.5h0M521.5 526.5h0M521.5 545.5h0M521.5 528.5h0M521.5 511.5h0M521.5 538.5h0M521.5 542.5h0M522.5 504.5h0M522.5 527.5h0M522.5 516.5h0M522.5 500.5h0M522.5 513.5h0M522.5 518.5h0M522.5 529.5h0M522.5 534.5h0M523.5 527.5h0M523.5 526.5h0M523.5 515.5h0M523.5 528.5h0M523.5 514.5h0M523.5 521.5h0M523.5 565.5h0M524.5 546.5h0M524.5 522.5h0M524.5 544.5h0M524.5 461.5h0M524.5 458.5h0M525.5 518.5h0M525.5 466.5h0M525.5 461.5h0M525.5 545.5h0M525.5 468.5h0M525.5 476.5h0M525.5 562.5h0M525.5 531.5h0M526.5 531.5h0M526.5 508.5h0M526.5 466.5h0M526.5 476.5h0M526.5 494.5h0M526.5 489.5h0M526.5 511.5h0M527.5 468.5h0M527.5 494.5h0M527.5 464.5h0M527.5 497.5h0M527.5 515.5h0M527.5 523.5h0M527.5 507.5h0M528.5 511.5h0M528.5 519.5h0M528.5 485.5h0M528.5 496.5h0M528.5 484.5h0M528.5 528.5h0M529.5 516.5h0M529.5 494.5h0M529.5 495.5h0M529.5 517.5h0M529.5 520.5h0M529.5 522.5h0M529.5 524.5h0M530.5 513.5h0M530.5 519.5h0M530.5 512.5h0M530.5 520.5h0M530.5 535.5h0M531.5 518.5h0M531.5 506.5h0M531.5 519.5h0M531.5 500.5h0M531.5 507.5h0M531.5 495.5h0M531.5 499.5h0M532.5 506.5h0M532.5 508.5h0M532.5 515.5h0M532.5 502.5h0M532.5 514.5h0M533.5 508.5h0M533.5 516.5h0M533.5 490.5h0M533.5 487.5h0M533.5 470.5h0M533.5 515.5h0M533.5 494.5h0M533.5 493.5h0M534.5 497.5h0M534.5 534.5h0M534.5 535.5h0M534.5 551.5h0M534.5 526.5h0M534.5 530.5h0M534.5 529.5h0M535.5 502.5h0M535.5 530.5h0M535.5 548.5h0M535.5 507.5h0M535.5 533.5h0M535.5 555.5h0M536.5 490.5h0M536.5 508.5h0M536.5 506.5h0M536.5 528.5h0M536.5 535.5h0M536.5 534.5h0M536.5 539.5h0M537.5 533.5h0M537.5 520.5h0M537.5 519.5h0M537.5 529.5h0M537.5 526.5h0M537.5 528.5h0M537.5 543.5h0M538.5 535.5h0M538.5 491.5h0M538.5 532.5h0M538.5 525.5h0M538.5 534.5h0M538.5 496.5h0M539.5 542.5h0M539.5 523.5h0M539.5 545.5h0M539.5 487.5h0M539.5 495.5h0M539.5 499.5h0M539.5 492.5h0M539.5 538.5h0M540.5 516.5h0M540.5 510.5h0M540.5 493.5h0M540.5 506.5h0M540.5 530.5h0M540.5 522.5h0M540.5 537.5h0M541.5 529.5h0M541.5 488.5h0M541.5 511.5h0M541.5 505.5h0M541.5 527.5h0M541.5 519.5h0M542.5 504.5h0M542.5 497.5h0M542.5 482.5h0M542.5 461.5h0M542.5 492.5h0M542.5 508.5h0M543.5 496.5h0M543.5 468.5h0M543.5 519.5h0M543.5 541.5h0M543.5 493.5h0M543.5 528.5h0M544.5 511.5h0M544.5 532.5h0M544.5 535.5h0M544.5 571.5h0M544.5 562.5h0M544.5 559.5h0M544.5 528.5h0M545.5 588.5h0M545.5 578.5h0M545.5 577.5h0M545.5 566.5h0M545.5 549.5h0M545.5 530.5h0M545.5 537.5h0M546.5 535.5h0M546.5 517.5h0M546.5 520.5h0M546.5 513.5h0M546.5 471.5h0M546.5 510.5h0M546.5 527.5h0M547.5 547.5h0M547.5 521.5h0M547.5 529.5h0M547.5 513.5h0M547.5 511.5h0M547.5 509.5h0M547.5 470.5h0M548.5 474.5h0M548.5 477.5h0M548.5 508.5h0M548.5 509.5h0M548.5 517.5h0M548.5 516.5h0M548.5 536.5h0M549.5 511.5h0M549.5 538.5h0M549.5 524.5h0M549.5 514.5h0M549.5 522.5h0M549.5 495.5h0M549.5 536.5h0M549.5 534.5h0M549.5 525.5h0M550.5 533.5h0M550.5 518.5h0M550.5 498.5h0M550.5 530.5h0M550.5 531.5h0M550.5 538.5h0M550.5 523.5h0M551.5 533.5h0M551.5 500.5h0M551.5 531.5h0M551.5 492.5h0M551.5 541.5h0M551.5 495.5h0M551.5 535.5h0M551.5 527.5h0M552.5 532.5h0M552.5 518.5h0M552.5 489.5h0M552.5 499.5h0M552.5 526.5h0M552.5 501.5h0M552.5 525.5h0M552.5 524.5h0M553.5 497.5h0M553.5 530.5h0M553.5 521.5h0M553.5 534.5h0M553.5 513.5h0M553.5 538.5h0M553.5 484.5h0M554.5 483.5h0M554.5 466.5h0M554.5 530.5h0M554.5 504.5h0M554.5 489.5h0M554.5 499.5h0M554.5 502.5h0M555.5 513.5h0M555.5 502.5h0M555.5 474.5h0M555.5 503.5h0M555.5 471.5h0M556.5 510.5h0M556.5 499.5h0M556.5 494.5h0M556.5 519.5h0M556.5 498.5h0M556.5 508.5h0M557.5 489.5h0M557.5 499.5h0M557.5 493.5h0M557.5 501.5h0M557.5 513.5h0M558.5 523.5h0M558.5 494.5h0M558.5 521.5h0M558.5 513.5h0M558.5 481.5h0M558.5 514.5h0M558.5 550.5h0M559.5 541.5h0M559.5 506.5h0M559.5 494.5h0M559.5 530.5h0M559.5 539.5h0M559.5 521.5h0M559.5 551.5h0M559.5 519.5h0M559.5 514.5h0M560.5 507.5h0M560.5 547.5h0M560.5 489.5h0M560.5 493.5h0M560.5 516.5h0M560.5 541.5h0M560.5 534.5h0M560.5 520.5h0M561.5 512.5h0M561.5 521.5h0M561.5 513.5h0M561.5 522.5h0M561.5 535.5h0M561.5 525.5h0M561.5 514.5h0M562.5 505.5h0M562.5 512.5h0M562.5 496.5h0M562.5 519.5h0M562.5 516.5h0M562.5 529.5h0M562.5 531.5h0M562.5 535.5h0M563.5 526.5h0M563.5 492.5h0M563.5 523.5h0M563.5 518.5h0M563.5 543.5h0M563.5 550.5h0M563.5 487.5h0M564.5 524.5h0M564.5 499.5h0M564.5 513.5h0M564.5 493.5h0M564.5 462.5h0M564.5 465.5h0M564.5 568.5h0M564.5 469.5h0M565.5 512.5h0M565.5 514.5h0M565.5 525.5h0M565.5 558.5h0M565.5 519.5h0M565.5 524.5h0M566.5 538.5h0M566.5 505.5h0M566.5 506.5h0M566.5 518.5h0M566.5 513.5h0M566.5 507.5h0M566.5 524.5h0M566.5 522.5h0M567.5 531.5h0M567.5 534.5h0M567.5 525.5h0M567.5 523.5h0M568.5 549.5h0M568.5 565.5h0M568.5 551.5h0M568.5 545.5h0M568.5 535.5h0M568.5 556.5h0M568.5 527.5h0M569.5 542.5h0M569.5 516.5h0M569.5 517.5h0M569.5 524.5h0M569.5 484.5h0M569.5 540.5h0M569.5 515.5h0M570.5 524.5h0M570.5 481.5h0M570.5 489.5h0M570.5 502.5h0M570.5 503.5h0M570.5 512.5h0M570.5 518.5h0M571.5 510.5h0M571.5 502.5h0M571.5 505.5h0M571.5 520.5h0M571.5 513.5h0M571.5 526.5h0M572.5 511.5h0M572.5 530.5h0M572.5 543.5h0M572.5 557.5h0M572.5 500.5h0M572.5 510.5h0M572.5 565.5h0M573.5 540.5h0M573.5 527.5h0M573.5 516.5h0M573.5 503.5h0M573.5 548.5h0M573.5 517.5h0M573.5 539.5h0M574.5 525.5h0M574.5 530.5h0M574.5 538.5h0M574.5 519.5h0M574.5 516.5h0M574.5 520.5h0M574.5 526.5h0M575.5 512.5h0M575.5 525.5h0M575.5 513.5h0M575.5 509.5h0M575.5 501.5h0M575.5 532.5h0M575.5 505.5h0M576.5 499.5h0M576.5 477.5h0M576.5 507.5h0M576.5 520.5h0M576.5 534.5h0M576.5 516.5h0M576.5 540.5h0M576.5 514.5h0M577.5 525.5h0M577.5 536.5h0M577.5 549.5h0M577.5 528.5h0M577.5 514.5h0M577.5 524.5h0M577.5 496.5h0M578.5 484.5h0M578.5 525.5h0M578.5 531.5h0M578.5 489.5h0M578.5 491.5h0M578.5 506.5h0M579.5 541.5h0M579.5 527.5h0M579.5 507.5h0M579.5 492.5h0M579.5 488.5h0M579.5 510.5h0M579.5 515.5h0M579.5 526.5h0M579.5 511.5h0M580.5 503.5h0M580.5 519.5h0M580.5 538.5h0M580.5 536.5h0M580.5 540.5h0M581.5 541.5h0M581.5 539.5h0M581.5 519.5h0M581.5 540.5h0M581.5 512.5h0M581.5 520.5h0M581.5 503.5h0M582.5 474.5h0M582.5 482.5h0M582.5 551.5h0M582.5 562.5h0M582.5 548.5h0M582.5 518.5h0M582.5 502.5h0M582.5 505.5h0M583.5 508.5h0M583.5 520.5h0M583.5 542.5h0M583.5 534.5h0M584.5 495.5h0M584.5 534.5h0M584.5 558.5h0M584.5 511.5h0M584.5 508.5h0M584.5 493.5h0M584.5 520.5h0M585.5 534.5h0M585.5 488.5h0M585.5 504.5h0M585.5 501.5h0M585.5 536.5h0M585.5 521.5h0M585.5 503.5h0M585.5 508.5h0M586.5 519.5h0M586.5 480.5h0M586.5 490.5h0M586.5 506.5h0M586.5 531.5h0M586.5 489.5h0M587.5 497.5h0M587.5 527.5h0M587.5 499.5h0M587.5 517.5h0M587.5 519.5h0M587.5 542.5h0M587.5 516.5h0M587.5 485.5h0M588.5 558.5h0M588.5 551.5h0M588.5 512.5h0M588.5 526.5h0M588.5 556.5h0M588.5 581.5h0M588.5 549.5h0M589.5 548.5h0M589.5 554.5h0M589.5 530.5h0M589.5 529.5h0M589.5 506.5h0M589.5 533.5h0M590.5 483.5h0M590.5 488.5h0M590.5 484.5h0M590.5 508.5h0M590.5 482.5h0M591.5 518.5h0M591.5 512.5h0M591.5 494.5h0M591.5 491.5h0M591.5 516.5h0M592.5 516.5h0M592.5 484.5h0M592.5 510.5h0M592.5 497.5h0M592.5 529.5h0M592.5 533.5h0M592.5 540.5h0M593.5 550.5h0M593.5 534.5h0M593.5 515.5h0M593.5 491.5h0M593.5 509.5h0M593.5 504.5h0M594.5 502.5h0M594.5 536.5h0M594.5 522.5h0M594.5 515.5h0M594.5 499.5h0M594.5 520.5h0M594.5 488.5h0M594.5 526.5h0M595.5 527.5h0M595.5 524.5h0M595.5 532.5h0M595.5 510.5h0M595.5 499.5h0M595.5 483.5h0M595.5 487.5h0M596.5 481.5h0M596.5 482.5h0M596.5 528.5h0M596.5 532.5h0M596.5 521.5h0M596.5 500.5h0M597.5 513.5h0M597.5 483.5h0M597.5 485.5h0M597.5 478.5h0M597.5 476.5h0M597.5 486.5h0M597.5 482.5h0M597.5 487.5h0M598.5 486.5h0M598.5 488.5h0M598.5 524.5h0M598.5 540.5h0M598.5 530.5h0M598.5 515.5h0M599.5 519.5h0M599.5 533.5h0M599.5 516.5h0M599.5 499.5h0M599.5 539.5h0M599.5 524.5h0M600.5 520.5h0M600.5 519.5h0M600.5 506.5h0M600.5 490.5h0M600.5 502.5h0M600.5 483.5h0M600.5 498.5h0M601.5 508.5h0M601.5 507.5h0M601.5 503.5h0M601.5 533.5h0M601.5 512.5h0M601.5 494.5h0M601.5 492.5h0M601.5 488.5h0M602.5 497.5h0M602.5 505.5h0M602.5 508.5h0M602.5 489.5h0M602.5 507.5h0M602.5 511.5h0M602.5 520.5h0M602.5 504.5h0M603.5 543.5h0M603.5 519.5h0M603.5 527.5h0M603.5 528.5h0M603.5 515.5h0M603.5 529.5h0M604.5 518.5h0M604.5 523.5h0M604.5 513.5h0M604.5 506.5h0M604.5 514.5h0M604.5 532.5h0M605.5 536.5h0M605.5 521.5h0M605.5 528.5h0M605.5 530.5h0M605.5 535.5h0M605.5 548.5h0M605.5 517.5h0M606.5 533.5h0M606.5 536.5h0M606.5 501.5h0M606.5 513.5h0M606.5 524.5h0M606.5 503.5h0M607.5 511.5h0M607.5 513.5h0M607.5 527.5h0M607.5 523.5h0M607.5 518.5h0M607.5 478.5h0M608.5 520.5h0M608.5 535.5h0M608.5 505.5h0M608.5 557.5h0M608.5 533.5h0M608.5 531.5h0M608.5 490.5h0M608.5 501.5h0M609.5 517.5h0M609.5 554.5h0M609.5 542.5h0M609.5 559.5h0M609.5 555.5h0M609.5 533.5h0M609.5 553.5h0M610.5 544.5h0M610.5 494.5h0M610.5 542.5h0M610.5 526.5h0M610.5 537.5h0M611.5 552.5h0M611.5 549.5h0M611.5 553.5h0M611.5 480.5h0M611.5 544.5h0M612.5 500.5h0M612.5 493.5h0M612.5 545.5h0M612.5 528.5h0M612.5 560.5h0M612.5 536.5h0M612.5 554.5h0M613.5 495.5h0M613.5 501.5h0M613.5 515.5h0M613.5 547.5h0M613.5 525.5h0M613.5 538.5h0M613.5 516.5h0M613.5 526.5h0M614.5 513.5h0M614.5 529.5h0M614.5 522.5h0M614.5 526.5h0M614.5 515.5h0M615.5 508.5h0M615.5 483.5h0M615.5 485.5h0M615.5 470.5h0M615.5 468.5h0M616.5 504.5h0M616.5 503.5h0M616.5 513.5h0M616.5 506.5h0M616.5 479.5h0M616.5 477.5h0M616.5 495.5h0M617.5 507.5h0M617.5 472.5h0M617.5 474.5h0M617.5 458.5h0M617.5 456.5h0M617.5 459.5h0M618.5 457.5h0M618.5 463.5h0M618.5 478.5h0M618.5 483.5h0M618.5 479.5h0M618.5 477.5h0M618.5 471.5h0M619.5 513.5h0M619.5 512.5h0M619.5 505.5h0M619.5 521.5h0M619.5 537.5h0M619.5 519.5h0M619.5 556.5h0M619.5 554.5h0M620.5 510.5h0M620.5 517.5h0M620.5 516.5h0M620.5 506.5h0M620.5 484.5h0M620.5 500.5h0M620.5 542.5h0M621.5 485.5h0M621.5 530.5h0M621.5 484.5h0M621.5 479.5h0M621.5 574.5h0M621.5 572.5h0M621.5 529.5h0M622.5 492.5h0M622.5 498.5h0M622.5 505.5h0M622.5 497.5h0M622.5 511.5h0M622.5 503.5h0M623.5 515.5h0M623.5 513.5h0M623.5 511.5h0M623.5 528.5h0M624.5 513.5h0M624.5 529.5h0M624.5 510.5h0M624.5 524.5h0M624.5 530.5h0M625.5 517.5h0M625.5 513.5h0M625.5 521.5h0M625.5 531.5h0M625.5 516.5h0M625.5 509.5h0M625.5 547.5h0M626.5 524.5h0M626.5 544.5h0M626.5 513.5h0M626.5 516.5h0M626.5 511.5h0M626.5 576.5h0M627.5 550.5h0M627.5 518.5h0M627.5 487.5h0M627.5 546.5h0M627.5 496.5h0M627.5 549.5h0M627.5 492.5h0M628.5 502.5h0M628.5 487.5h0M628.5 509.5h0M628.5 533.5h0M628.5 521.5h0M628.5 518.5h0M628.5 542.5h0M628.5 553.5h0M629.5 552.5h0M629.5 560.5h0M629.5 524.5h0M629.5 554.5h0M629.5 541.5h0M630.5 564.5h0M630.5 561.5h0M630.5 570.5h0M630.5 567.5h0M630.5 572.5h0M630.5 536.5h0M630.5 581.5h0M631.5 548.5h0M631.5 502.5h0M631.5 482.5h0M631.5 557.5h0M631.5 526.5h0M631.5 543.5h0M632.5 495.5h0M632.5 490.5h0M632.5 534.5h0M632.5 484.5h0M632.5 501.5h0M632.5 538.5h0M632.5 544.5h0M633.5 515.5h0M633.5 545.5h0M633.5 541.5h0M633.5 560.5h0M633.5 528.5h0M633.5 507.5h0M633.5 527.5h0M633.5 537.5h0M634.5 518.5h0M634.5 517.5h0M634.5 532.5h0M634.5 542.5h0M634.5 521.5h0M634.5 543.5h0M635.5 528.5h0M635.5 527.5h0M635.5 540.5h0M635.5 550.5h0M635.5 549.5h0M635.5 535.5h0M635.5 518.5h0M635.5 517.5h0M636.5 519.5h0M636.5 561.5h0M636.5 555.5h0M636.5 550.5h0M636.5 545.5h0M636.5 538.5h0M636.5 539.5h0M636.5 521.5h0M637.5 556.5h0M637.5 551.5h0M637.5 557.5h0M637.5 531.5h0M638.5 509.5h0M638.5 518.5h0M638.5 530.5h0M638.5 531.5h0M638.5 519.5h0M638.5 562.5h0M638.5 516.5h0M638.5 549.5h0M639.5 510.5h0M639.5 526.5h0M639.5 514.5h0M639.5 531.5h0M639.5 525.5h0M639.5 515.5h0M639.5 504.5h0M640.5 506.5h0M640.5 531.5h0M640.5 515.5h0M640.5 564.5h0M640.5 547.5h0M640.5 566.5h0M640.5 554.5h0M641.5 547.5h0M641.5 505.5h0M641.5 548.5h0M641.5 497.5h0M641.5 506.5h0M641.5 504.5h0M642.5 509.5h0M642.5 486.5h0M642.5 490.5h0M642.5 520.5h0M642.5 536.5h0M643.5 551.5h0M643.5 536.5h0M643.5 517.5h0M643.5 515.5h0M643.5 508.5h0M643.5 545.5h0M644.5 531.5h0M644.5 537.5h0M644.5 547.5h0M644.5 541.5h0M644.5 540.5h0M644.5 522.5h0M644.5 523.5h0M644.5 510.5h0M645.5 499.5h0M645.5 514.5h0M645.5 542.5h0M645.5 509.5h0M645.5 532.5h0M646.5 529.5h0M646.5 531.5h0M646.5 538.5h0M646.5 554.5h0M646.5 539.5h0M646.5 552.5h0M647.5 527.5h0M647.5 559.5h0M647.5 535.5h0M647.5 499.5h0M647.5 522.5h0M647.5 557.5h0M647.5 580.5h0M648.5 601.5h0M648.5 563.5h0M648.5 566.5h0M648.5 542.5h0M648.5 529.5h0M648.5 556.5h0M648.5 528.5h0M649.5 531.5h0M649.5 528.5h0M649.5 519.5h0M649.5 543.5h0M649.5 535.5h0M649.5 546.5h0M649.5 523.5h0M649.5 547.5h0M650.5 529.5h0M650.5 542.5h0M650.5 541.5h0M650.5 549.5h0M650.5 518.5h0M650.5 537.5h0M650.5 554.5h0M651.5 530.5h0M651.5 540.5h0M651.5 526.5h0M651.5 533.5h0M651.5 524.5h0M651.5 534.5h0M651.5 555.5h0M652.5 476.5h0M652.5 525.5h0M652.5 470.5h0M652.5 522.5h0M652.5 523.5h0M652.5 504.5h0M652.5 517.5h0M653.5 507.5h0M653.5 491.5h0M653.5 501.5h0M653.5 528.5h0M653.5 517.5h0M653.5 503.5h0M653.5 525.5h0M653.5 516.5h0M654.5 514.5h0M654.5 529.5h0M654.5 521.5h0M654.5 515.5h0M654.5 510.5h0M654.5 524.5h0M655.5 517.5h0M655.5 541.5h0M655.5 526.5h0M655.5 520.5h0M655.5 499.5h0M656.5 505.5h0M656.5 524.5h0M656.5 492.5h0M656.5 528.5h0M656.5 537.5h0M656.5 535.5h0M656.5 518.5h0M657.5 536.5h0M657.5 533.5h0M657.5 555.5h0M657.5 516.5h0M657.5 525.5h0M657.5 469.5h0M657.5 520.5h0M658.5 548.5h0M658.5 522.5h0M658.5 492.5h0M658.5 517.5h0M658.5 523.5h0M658.5 510.5h0M658.5 528.5h0M658.5 529.5h0M659.5 511.5h0M659.5 512.5h0M659.5 518.5h0M659.5 498.5h0M659.5 501.5h0M659.5 486.5h0M660.5 502.5h0M660.5 503.5h0M660.5 518.5h0M660.5 508.5h0M660.5 536.5h0M660.5 527.5h0M661.5 497.5h0M661.5 496.5h0M661.5 525.5h0M661.5 513.5h0M661.5 530.5h0M661.5 532.5h0M661.5 538.5h0M662.5 523.5h0M662.5 516.5h0M662.5 535.5h0M662.5 545.5h0M662.5 537.5h0M662.5 522.5h0M662.5 530.5h0M663.5 525.5h0M663.5 522.5h0M663.5 541.5h0M663.5 517.5h0M663.5 531.5h0M663.5 530.5h0M663.5 527.5h0M664.5 552.5h0M664.5 538.5h0M664.5 535.5h0M664.5 521.5h0M664.5 531.5h0M664.5 507.5h0M664.5 530.5h0M664.5 524.5h0M665.5 506.5h0M665.5 518.5h0M665.5 526.5h0M665.5 525.5h0M665.5 512.5h0M665.5 501.5h0M666.5 520.5h0M666.5 540.5h0M666.5 497.5h0M666.5 477.5h0M666.5 536.5h0M666.5 546.5h0M666.5 526.5h0M666.5 506.5h0M667.5 517.5h0M667.5 521.5h0M667.5 516.5h0M667.5 495.5h0M667.5 494.5h0M667.5 505.5h0M667.5 529.5h0M668.5 515.5h0M668.5 505.5h0M668.5 526.5h0M668.5 527.5h0M668.5 537.5h0M668.5 547.5h0M668.5 528.5h0M669.5 509.5h0M669.5 526.5h0M669.5 521.5h0M669.5 501.5h0M669.5 517.5h0M670.5 536.5h0M670.5 504.5h0M670.5 516.5h0M670.5 517.5h0M670.5 523.5h0M670.5 522.5h0M670.5 526.5h0M671.5 510.5h0M671.5 512.5h0M671.5 529.5h0M671.5 524.5h0M671.5 521.5h0M671.5 522.5h0M671.5 508.5h0M671.5 534.5h0M672.5 546.5h0M672.5 525.5h0M672.5 505.5h0M672.5 471.5h0M672.5 483.5h0M672.5 495.5h0M672.5 490.5h0M673.5 510.5h0M673.5 528.5h0M673.5 522.5h0M673.5 513.5h0M673.5 526.5h0M673.5 529.5h0M673.5 517.5h0M674.5 529.5h0M674.5 524.5h0M674.5 525.5h0M674.5 540.5h0M674.5 538.5h0M674.5 535.5h0M675.5 530.5h0M675.5 517.5h0M675.5 510.5h0M675.5 469.5h0M675.5 514.5h0M675.5 491.5h0M675.5 497.5h0M675.5 486.5h0M676.5 531.5h0M676.5 507.5h0M676.5 519.5h0M676.5 482.5h0M676.5 515.5h0M676.5 560.5h0M676.5 564.5h0M676.5 504.5h0M677.5 535.5h0M677.5 556.5h0M677.5 536.5h0M677.5 481.5h0M677.5 497.5h0M677.5 467.5h0M677.5 465.5h0M677.5 494.5h0M677.5 468.5h0M678.5 526.5h0M678.5 471.5h0M678.5 467.5h0M678.5 476.5h0M678.5 543.5h0M679.5 515.5h0M679.5 560.5h0M679.5 526.5h0M679.5 547.5h0M679.5 519.5h0M679.5 527.5h0M679.5 549.5h0M680.5 502.5h0M680.5 528.5h0M680.5 525.5h0M680.5 552.5h0M680.5 535.5h0M681.5 536.5h0M681.5 517.5h0M681.5 516.5h0M681.5 523.5h0M681.5 525.5h0M681.5 526.5h0M681.5 537.5h0M682.5 514.5h0M682.5 523.5h0M682.5 516.5h0M682.5 518.5h0M682.5 517.5h0M682.5 538.5h0M683.5 533.5h0M683.5 522.5h0M683.5 559.5h0M683.5 516.5h0M683.5 574.5h0M683.5 566.5h0M683.5 502.5h0M684.5 474.5h0M684.5 560.5h0M684.5 533.5h0M684.5 538.5h0M684.5 508.5h0M684.5 510.5h0M684.5 505.5h0M684.5 557.5h0M685.5 502.5h0M685.5 535.5h0M685.5 566.5h0M685.5 523.5h0M685.5 526.5h0M685.5 549.5h0M685.5 483.5h0M686.5 546.5h0M686.5 481.5h0M686.5 513.5h0M686.5 519.5h0M686.5 547.5h0M686.5 550.5h0M686.5 495.5h0M686.5 476.5h0M687.5 499.5h0M687.5 483.5h0M687.5 505.5h0M687.5 478.5h0M687.5 476.5h0M687.5 480.5h0M688.5 477.5h0M688.5 482.5h0M688.5 490.5h0M688.5 533.5h0M688.5 509.5h0M688.5 508.5h0M688.5 511.5h0M689.5 487.5h0M689.5 498.5h0M689.5 508.5h0M689.5 501.5h0M689.5 521.5h0M689.5 505.5h0M689.5 523.5h0M689.5 513.5h0M690.5 503.5h0M690.5 509.5h0M690.5 515.5h0M690.5 517.5h0M690.5 513.5h0M690.5 508.5h0M690.5 504.5h0M691.5 506.5h0M691.5 503.5h0M691.5 507.5h0M691.5 491.5h0M691.5 522.5h0M691.5 525.5h0M691.5 512.5h0M692.5 503.5h0M692.5 519.5h0M692.5 518.5h0M692.5 537.5h0M692.5 504.5h0M692.5 515.5h0M692.5 509.5h0M693.5 506.5h0M693.5 502.5h0M693.5 527.5h0M693.5 526.5h0M693.5 543.5h0M693.5 554.5h0M694.5 538.5h0M694.5 529.5h0M694.5 530.5h0M694.5 535.5h0M694.5 518.5h0M695.5 512.5h0M695.5 540.5h0M695.5 546.5h0M695.5 517.5h0M695.5 518.5h0M696.5 523.5h0M696.5 529.5h0M696.5 519.5h0M696.5 535.5h0M696.5 527.5h0M696.5 521.5h0M697.5 511.5h0M697.5 544.5h0M697.5 515.5h0M697.5 559.5h0M697.5 565.5h0M697.5 555.5h0M697.5 529.5h0M698.5 528.5h0M698.5 497.5h0M698.5 515.5h0M698.5 503.5h0M698.5 496.5h0M698.5 527.5h0M699.5 497.5h0M699.5 503.5h0M699.5 493.5h0M699.5 524.5h0M699.5 506.5h0M699.5 517.5h0M699.5 507.5h0M700.5 516.5h0M700.5 515.5h0M700.5 514.5h0M700.5 525.5h0M700.5 505.5h0M700.5 497.5h0M701.5 522.5h0M701.5 538.5h0M701.5 513.5h0M701.5 503.5h0M701.5 509.5h0M701.5 504.5h0M702.5 520.5h0M702.5 532.5h0M702.5 524.5h0M702.5 539.5h0M702.5 504.5h0M702.5 494.5h0M702.5 522.5h0M702.5 535.5h0M703.5 508.5h0M703.5 543.5h0M703.5 538.5h0M703.5 569.5h0M703.5 485.5h0M704.5 570.5h0M704.5 567.5h0M704.5 500.5h0M704.5 518.5h0M704.5 543.5h0M704.5 547.5h0M705.5 530.5h0M705.5 524.5h0M705.5 500.5h0M705.5 501.5h0M705.5 502.5h0M705.5 520.5h0M706.5 560.5h0M706.5 523.5h0M706.5 482.5h0M706.5 532.5h0M706.5 568.5h0M707.5 525.5h0M707.5 512.5h0M707.5 473.5h0M707.5 487.5h0M707.5 468.5h0M707.5 471.5h0M707.5 529.5h0M708.5 526.5h0M708.5 494.5h0M708.5 562.5h0M708.5 540.5h0M708.5 569.5h0M708.5 555.5h0M708.5 560.5h0M708.5 531.5h0M709.5 493.5h0M709.5 468.5h0M709.5 497.5h0M709.5 500.5h0M709.5 503.5h0M709.5 494.5h0M709.5 489.5h0M710.5 474.5h0M710.5 475.5h0M710.5 468.5h0M710.5 464.5h0M710.5 467.5h0M710.5 485.5h0M710.5 482.5h0M710.5 498.5h0M711.5 490.5h0M711.5 548.5h0M711.5 507.5h0M711.5 529.5h0M711.5 503.5h0M711.5 473.5h0M711.5 481.5h0M711.5 541.5h0M712.5 544.5h0M712.5 468.5h0M712.5 491.5h0M712.5 513.5h0M712.5 492.5h0M713.5 495.5h0M713.5 501.5h0M713.5 543.5h0M713.5 506.5h0M714.5 554.5h0M714.5 527.5h0M714.5 563.5h0M714.5 538.5h0M714.5 550.5h0M714.5 519.5h0M714.5 536.5h0M715.5 511.5h0M715.5 526.5h0M715.5 530.5h0M715.5 543.5h0M715.5 474.5h0M715.5 541.5h0M715.5 506.5h0M716.5 527.5h0M716.5 479.5h0M716.5 506.5h0M716.5 501.5h0M716.5 485.5h0M716.5 523.5h0M717.5 551.5h0M717.5 540.5h0M717.5 527.5h0M717.5 515.5h0M717.5 528.5h0M717.5 548.5h0M717.5 546.5h0M717.5 532.5h0M718.5 517.5h0M718.5 470.5h0M718.5 478.5h0M718.5 523.5h0M718.5 530.5h0M718.5 501.5h0M718.5 539.5h0M719.5 515.5h0M719.5 531.5h0M719.5 520.5h0M719.5 550.5h0M719.5 512.5h0M719.5 561.5h0M720.5 563.5h0M720.5 541.5h0M720.5 536.5h0M720.5 546.5h0M720.5 534.5h0M720.5 480.5h0M721.5 562.5h0M721.5 561.5h0M721.5 497.5h0M721.5 527.5h0M721.5 479.5h0M721.5 493.5h0M722.5 511.5h0M722.5 478.5h0M722.5 469.5h0M722.5 473.5h0M722.5 472.5h0M722.5 476.5h0M722.5 463.5h0M722.5 487.5h0M723.5 478.5h0M723.5 462.5h0M723.5 466.5h0M723.5 461.5h0M723.5 500.5h0M723.5 475.5h0M724.5 524.5h0M724.5 538.5h0M724.5 544.5h0M724.5 502.5h0M724.5 525.5h0M725.5 512.5h0M725.5 525.5h0M725.5 522.5h0M725.5 491.5h0M725.5 516.5h0M725.5 536.5h0M725.5 496.5h0M726.5 473.5h0M726.5 471.5h0M726.5 472.5h0M726.5 514.5h0M726.5 464.5h0M726.5 476.5h0M727.5 509.5h0M727.5 511.5h0M727.5 528.5h0M727.5 535.5h0M727.5 541.5h0M727.5 550.5h0M727.5 561.5h0M727.5 558.5h0M728.5 564.5h0M728.5 561.5h0M728.5 539.5h0M728.5 526.5h0M728.5 516.5h0M729.5 529.5h0M729.5 518.5h0M729.5 506.5h0M729.5 511.5h0M729.5 499.5h0M729.5 524.5h0M729.5 492.5h0M730.5 520.5h0M730.5 497.5h0M730.5 516.5h0M730.5 522.5h0M730.5 477.5h0M730.5 545.5h0M731.5 497.5h0M731.5 558.5h0M731.5 550.5h0M731.5 553.5h0M731.5 514.5h0M731.5 563.5h0M731.5 538.5h0M731.5 528.5h0M732.5 522.5h0M732.5 538.5h0M732.5 482.5h0M732.5 515.5h0M732.5 490.5h0M732.5 521.5h0M733.5 518.5h0M733.5 495.5h0M733.5 519.5h0M733.5 546.5h0M733.5 520.5h0M734.5 536.5h0M734.5 519.5h0M734.5 492.5h0M734.5 512.5h0M735.5 520.5h0M735.5 474.5h0M735.5 513.5h0M735.5 542.5h0M735.5 505.5h0M735.5 488.5h0M735.5 500.5h0M735.5 535.5h0M736.5 516.5h0M736.5 541.5h0M736.5 564.5h0M736.5 514.5h0M736.5 549.5h0M736.5 474.5h0M737.5 561.5h0M737.5 542.5h0M737.5 544.5h0M737.5 546.5h0M737.5 566.5h0M737.5 557.5h0M737.5 563.5h0M738.5 558.5h0M738.5 572.5h0M738.5 577.5h0M738.5 554.5h0M738.5 534.5h0M738.5 561.5h0M738.5 563.5h0M739.5 550.5h0M739.5 545.5h0M739.5 529.5h0M739.5 522.5h0M739.5 530.5h0M739.5 493.5h0M739.5 516.5h0M739.5 534.5h0M740.5 576.5h0M740.5 563.5h0M740.5 469.5h0M740.5 494.5h0M740.5 521.5h0M740.5 532.5h0M741.5 571.5h0M741.5 505.5h0M741.5 473.5h0M741.5 550.5h0M741.5 546.5h0M741.5 489.5h0M741.5 529.5h0M741.5 467.5h0M742.5 491.5h0M742.5 551.5h0M742.5 515.5h0M742.5 520.5h0M742.5 480.5h0M742.5 557.5h0M742.5 556.5h0M742.5 571.5h0M743.5 492.5h0M743.5 485.5h0M743.5 486.5h0M743.5 539.5h0M743.5 500.5h0M743.5 552.5h0M743.5 551.5h0M744.5 521.5h0M744.5 513.5h0M744.5 558.5h0M744.5 548.5h0M744.5 542.5h0M744.5 553.5h0M744.5 570.5h0M744.5 561.5h0M745.5 525.5h0M745.5 544.5h0M745.5 493.5h0M745.5 486.5h0M745.5 501.5h0M745.5 509.5h0M746.5 539.5h0M746.5 506.5h0M746.5 540.5h0M746.5 580.5h0M746.5 579.5h0M747.5 542.5h0M747.5 517.5h0M747.5 519.5h0M747.5 512.5h0M747.5 549.5h0M747.5 516.5h0M747.5 476.5h0M748.5 480.5h0M748.5 493.5h0M748.5 519.5h0M748.5 496.5h0M748.5 564.5h0M748.5 537.5h0M748.5 578.5h0M749.5 574.5h0M749.5 488.5h0M749.5 466.5h0M749.5 576.5h0M749.5 470.5h0M749.5 462.5h0M749.5 471.5h0M750.5 508.5h0M750.5 568.5h0M750.5 467.5h0M750.5 513.5h0M750.5 500.5h0M750.5 484.5h0M750.5 487.5h0M751.5 478.5h0M751.5 564.5h0M751.5 572.5h0M751.5 480.5h0M751.5 575.5h0M751.5 476.5h0M751.5 473.5h0M751.5 465.5h0M751.5 551.5h0M752.5 579.5h0M752.5 575.5h0M752.5 567.5h0M752.5 513.5h0M752.5 571.5h0M752.5 469.5h0M752.5 478.5h0M753.5 480.5h0M753.5 580.5h0M753.5 557.5h0M753.5 499.5h0M753.5 545.5h0M753.5 546.5h0M753.5 560.5h0M753.5 561.5h0M754.5 518.5h0M754.5 528.5h0M754.5 499.5h0M754.5 552.5h0M754.5 501.5h0M754.5 534.5h0M754.5 532.5h0M754.5 569.5h0M755.5 534.5h0M755.5 524.5h0M755.5 563.5h0M755.5 541.5h0M755.5 531.5h0M755.5 578.5h0M756.5 556.5h0M756.5 557.5h0M756.5 550.5h0M756.5 565.5h0M756.5 549.5h0M757.5 571.5h0M757.5 589.5h0M757.5 545.5h0M757.5 566.5h0M757.5 537.5h0M757.5 577.5h0M757.5 511.5h0M757.5 555.5h0M758.5 532.5h0M758.5 512.5h0M758.5 515.5h0M758.5 488.5h0M758.5 555.5h0M758.5 513.5h0M759.5 517.5h0M759.5 509.5h0M759.5 515.5h0M759.5 523.5h0M759.5 524.5h0M759.5 519.5h0M759.5 512.5h0M760.5 520.5h0M760.5 518.5h0M760.5 495.5h0M760.5 513.5h0M760.5 502.5h0M760.5 529.5h0M760.5 523.5h0M760.5 539.5h0M761.5 498.5h0M761.5 521.5h0M761.5 553.5h0M761.5 503.5h0M761.5 522.5h0M761.5 563.5h0M761.5 561.5h0M761.5 509.5h0M762.5 543.5h0M762.5 516.5h0M762.5 509.5h0M762.5 491.5h0M762.5 523.5h0M762.5 507.5h0M763.5 499.5h0M763.5 520.5h0M763.5 552.5h0M763.5 538.5h0M763.5 492.5h0M763.5 522.5h0M763.5 497.5h0M763.5 496.5h0M764.5 479.5h0M764.5 485.5h0M764.5 513.5h0M764.5 524.5h0M764.5 503.5h0M764.5 495.5h0M764.5 498.5h0M765.5 501.5h0M765.5 509.5h0M765.5 514.5h0M765.5 531.5h0M765.5 512.5h0M765.5 516.5h0M766.5 528.5h0M766.5 516.5h0M766.5 493.5h0M766.5 527.5h0M766.5 515.5h0M766.5 503.5h0M766.5 512.5h0M767.5 538.5h0M767.5 531.5h0M767.5 484.5h0M767.5 493.5h0M767.5 478.5h0M767.5 507.5h0M767.5 508.5h0M768.5 495.5h0M768.5 484.5h0M768.5 521.5h0M768.5 480.5h0M768.5 512.5h0M769.5 540.5h0M769.5 526.5h0M769.5 533.5h0M769.5 494.5h0M769.5 497.5h0M769.5 504.5h0M769.5 517.5h0M770.5 523.5h0M770.5 520.5h0M770.5 537.5h0M770.5 558.5h0M770.5 563.5h0M770.5 559.5h0M771.5 535.5h0M771.5 529.5h0M771.5 528.5h0M771.5 499.5h0M771.5 476.5h0M771.5 503.5h0M771.5 494.5h0M772.5 490.5h0M772.5 527.5h0M772.5 521.5h0M772.5 530.5h0M772.5 522.5h0M772.5 483.5h0M773.5 506.5h0M773.5 503.5h0M773.5 558.5h0M773.5 516.5h0M773.5 519.5h0M773.5 486.5h0M773.5 520.5h0M774.5 563.5h0M774.5 520.5h0M774.5 544.5h0M774.5 548.5h0M774.5 545.5h0M774.5 546.5h0M774.5 538.5h0M774.5 531.5h0M775.5 521.5h0M775.5 515.5h0M775.5 514.5h0M775.5 524.5h0M776.5 561.5h0M776.5 521.5h0M776.5 562.5h0M776.5 563.5h0M776.5 546.5h0M776.5 550.5h0M776.5 558.5h0M777.5 536.5h0M777.5 539.5h0M777.5 522.5h0M777.5 525.5h0M777.5 501.5h0M777.5 510.5h0M778.5 560.5h0M778.5 549.5h0M778.5 517.5h0M778.5 534.5h0M778.5 538.5h0M778.5 519.5h0M779.5 503.5h0M779.5 510.5h0M779.5 493.5h0M779.5 513.5h0M779.5 509.5h0M779.5 512.5h0M779.5 521.5h0M779.5 525.5h0M780.5 500.5h0M780.5 511.5h0M780.5 491.5h0M780.5 522.5h0M780.5 515.5h0M780.5 526.5h0M780.5 528.5h0M781.5 531.5h0M781.5 532.5h0M781.5 555.5h0M781.5 517.5h0M781.5 512.5h0M781.5 527.5h0M781.5 496.5h0M781.5 513.5h0M781.5 518.5h0M782.5 547.5h0M782.5 514.5h0M782.5 535.5h0M782.5 484.5h0M782.5 475.5h0M782.5 512.5h0M782.5 556.5h0M782.5 480.5h0M783.5 524.5h0M783.5 534.5h0M783.5 568.5h0M783.5 559.5h0M783.5 492.5h0M783.5 503.5h0M783.5 514.5h0M783.5 565.5h0M784.5 510.5h0M784.5 552.5h0M784.5 528.5h0M784.5 539.5h0M784.5 535.5h0M784.5 537.5h0M785.5 538.5h0M785.5 537.5h0M785.5 536.5h0M785.5 523.5h0M785.5 500.5h0M785.5 501.5h0M785.5 478.5h0M786.5 484.5h0M786.5 478.5h0M786.5 498.5h0M786.5 511.5h0M786.5 510.5h0M786.5 509.5h0M786.5 514.5h0M787.5 532.5h0M787.5 511.5h0M787.5 514.5h0M787.5 526.5h0M788.5 518.5h0M788.5 484.5h0M788.5 514.5h0M788.5 486.5h0M788.5 507.5h0M788.5 500.5h0M789.5 486.5h0M789.5 511.5h0M789.5 540.5h0M789.5 526.5h0M789.5 500.5h0M789.5 508.5h0M789.5 514.5h0M790.5 517.5h0M790.5 507.5h0M790.5 509.5h0M790.5 505.5h0M790.5 512.5h0M790.5 514.5h0M790.5 503.5h0M791.5 527.5h0M791.5 528.5h0M791.5 520.5h0M791.5 536.5h0M791.5 496.5h0M791.5 518.5h0M792.5 495.5h0M792.5 550.5h0M792.5 483.5h0M792.5 501.5h0M792.5 510.5h0M792.5 494.5h0M793.5 512.5h0M793.5 517.5h0M793.5 488.5h0M793.5 522.5h0M793.5 526.5h0M793.5 539.5h0M794.5 512.5h0M794.5 527.5h0M794.5 493.5h0M794.5 523.5h0M794.5 541.5h0M794.5 525.5h0M795.5 518.5h0M795.5 523.5h0M795.5 528.5h0M795.5 535.5h0M795.5 558.5h0M795.5 531.5h0M795.5 529.5h0M795.5 517.5h0M796.5 503.5h0M796.5 535.5h0M796.5 474.5h0M796.5 533.5h0M796.5 481.5h0M796.5 563.5h0M797.5 515.5h0M797.5 526.5h0M797.5 502.5h0M797.5 543.5h0M797.5 492.5h0M798.5 475.5h0M798.5 487.5h0M798.5 504.5h0M798.5 530.5h0M798.5 513.5h0M798.5 511.5h0M798.5 529.5h0M798.5 581.5h0M799.5 580.5h0M799.5 529.5h0M799.5 568.5h0M799.5 578.5h0M799.5 571.5h0M799.5 570.5h0M800.5 519.5h0M800.5 528.5h0M800.5 559.5h0M800.5 564.5h0M800.5 560.5h0M800.5 569.5h0M800.5 551.5h0M800.5 530.5h0M801.5 539.5h0M801.5 536.5h0M801.5 512.5h0M801.5 493.5h0M801.5 497.5h0M801.5 518.5h0M801.5 514.5h0M802.5 507.5h0M802.5 512.5h0M802.5 537.5h0M802.5 543.5h0M802.5 553.5h0M802.5 509.5h0M803.5 520.5h0M803.5 521.5h0M803.5 501.5h0M803.5 530.5h0M803.5 511.5h0M803.5 492.5h0M803.5 475.5h0M804.5 516.5h0M804.5 483.5h0M804.5 527.5h0M804.5 534.5h0M804.5 546.5h0M804.5 482.5h0M804.5 464.5h0M804.5 494.5h0M805.5 474.5h0M805.5 468.5h0M805.5 473.5h0M805.5 561.5h0M805.5 504.5h0M805.5 531.5h0M805.5 565.5h0M805.5 488.5h0M806.5 519.5h0M806.5 465.5h0M806.5 481.5h0M806.5 478.5h0M806.5 518.5h0M806.5 507.5h0M806.5 531.5h0M806.5 515.5h0M807.5 528.5h0M807.5 502.5h0M807.5 513.5h0M807.5 530.5h0M807.5 514.5h0M808.5 526.5h0M808.5 519.5h0M808.5 512.5h0M808.5 515.5h0M808.5 507.5h0M808.5 514.5h0M808.5 517.5h0M809.5 535.5h0M809.5 514.5h0M809.5 511.5h0M809.5 519.5h0M809.5 515.5h0M809.5 492.5h0M809.5 506.5h0M810.5 489.5h0M810.5 499.5h0M810.5 531.5h0M810.5 526.5h0M810.5 495.5h0M810.5 505.5h0M810.5 551.5h0M811.5 562.5h0M811.5 544.5h0M811.5 479.5h0M811.5 549.5h0M811.5 485.5h0M811.5 516.5h0M811.5 472.5h0M811.5 498.5h0M812.5 495.5h0M812.5 510.5h0M812.5 531.5h0M812.5 479.5h0M812.5 470.5h0M812.5 513.5h0M813.5 473.5h0M813.5 552.5h0M813.5 526.5h0M813.5 554.5h0M813.5 487.5h0M813.5 501.5h0M813.5 514.5h0M814.5 472.5h0M814.5 533.5h0M814.5 469.5h0M814.5 541.5h0M814.5 490.5h0M814.5 543.5h0M814.5 514.5h0M815.5 502.5h0M815.5 475.5h0M815.5 548.5h0M815.5 553.5h0M815.5 557.5h0M815.5 499.5h0M815.5 491.5h0M816.5 542.5h0M816.5 559.5h0M816.5 561.5h0M816.5 557.5h0M816.5 558.5h0M816.5 555.5h0M816.5 507.5h0M817.5 548.5h0M817.5 528.5h0M817.5 531.5h0M817.5 559.5h0M817.5 506.5h0M817.5 520.5h0M817.5 468.5h0M817.5 540.5h0M818.5 465.5h0M818.5 508.5h0M818.5 467.5h0M818.5 511.5h0M819.5 498.5h0M819.5 518.5h0M819.5 509.5h0M819.5 525.5h0M820.5 502.5h0M820.5 553.5h0M820.5 559.5h0M820.5 520.5h0M820.5 519.5h0M820.5 529.5h0M820.5 534.5h0M820.5 497.5h0M821.5 464.5h0M821.5 466.5h0M821.5 517.5h0M821.5 499.5h0M821.5 488.5h0M821.5 519.5h0M821.5 545.5h0M821.5 528.5h0M822.5 522.5h0M822.5 512.5h0M822.5 497.5h0M822.5 477.5h0M822.5 472.5h0M822.5 463.5h0M822.5 471.5h0M823.5 480.5h0M823.5 462.5h0M823.5 537.5h0M823.5 525.5h0M823.5 517.5h0M823.5 486.5h0M823.5 495.5h0M823.5 483.5h0M824.5 474.5h0M824.5 468.5h0M824.5 471.5h0M824.5 472.5h0M824.5 491.5h0M825.5 483.5h0M825.5 490.5h0M825.5 504.5h0M825.5 514.5h0M825.5 493.5h0M825.5 471.5h0M825.5 508.5h0M826.5 522.5h0M826.5 539.5h0M826.5 529.5h0M826.5 501.5h0M826.5 528.5h0M826.5 512.5h0M827.5 520.5h0M827.5 531.5h0M827.5 502.5h0M827.5 522.5h0M827.5 503.5h0M827.5 524.5h0M827.5 526.5h0M827.5 530.5h0M828.5 514.5h0M828.5 535.5h0M828.5 474.5h0M828.5 529.5h0M828.5 526.5h0M828.5 533.5h0M829.5 544.5h0M829.5 484.5h0M829.5 493.5h0M829.5 494.5h0M829.5 516.5h0M830.5 519.5h0M830.5 467.5h0M830.5 469.5h0M830.5 524.5h0M830.5 534.5h0M830.5 501.5h0M830.5 496.5h0M831.5 520.5h0M831.5 516.5h0M831.5 515.5h0M831.5 502.5h0M831.5 514.5h0M831.5 495.5h0M831.5 501.5h0M831.5 481.5h0M832.5 516.5h0M832.5 492.5h0M832.5 496.5h0M832.5 503.5h0M832.5 498.5h0M832.5 508.5h0M832.5 490.5h0M832.5 487.5h0M833.5 501.5h0M833.5 509.5h0M833.5 497.5h0M833.5 475.5h0M833.5 495.5h0M833.5 505.5h0M833.5 531.5h0M834.5 494.5h0M834.5 526.5h0M834.5 512.5h0M834.5 493.5h0M834.5 520.5h0M834.5 490.5h0M834.5 467.5h0M835.5 484.5h0M835.5 490.5h0M835.5 515.5h0M835.5 536.5h0M835.5 511.5h0M835.5 518.5h0M835.5 485.5h0M836.5 524.5h0M836.5 539.5h0M836.5 529.5h0M836.5 540.5h0M836.5 525.5h0M836.5 538.5h0M836.5 542.5h0M836.5 522.5h0M837.5 465.5h0M837.5 501.5h0M837.5 512.5h0M837.5 519.5h0M837.5 467.5h0M837.5 472.5h0M837.5 513.5h0M837.5 527.5h0M838.5 497.5h0M838.5 538.5h0M838.5 493.5h0M838.5 520.5h0M838.5 522.5h0M838.5 511.5h0M839.5 530.5h0M839.5 518.5h0M839.5 521.5h0M839.5 527.5h0M839.5 528.5h0M839.5 524.5h0M840.5 521.5h0M840.5 516.5h0M840.5 522.5h0M840.5 527.5h0M840.5 525.5h0M840.5 519.5h0M840.5 520.5h0M840.5 487.5h0M841.5 501.5h0M841.5 530.5h0M841.5 499.5h0M841.5 491.5h0M841.5 475.5h0M841.5 496.5h0M842.5 469.5h0M842.5 516.5h0M842.5 475.5h0M842.5 521.5h0M842.5 502.5h0M842.5 489.5h0M842.5 513.5h0M843.5 498.5h0M843.5 500.5h0M843.5 489.5h0M843.5 505.5h0M843.5 523.5h0M843.5 526.5h0M843.5 524.5h0M844.5 525.5h0M844.5 521.5h0M844.5 529.5h0M844.5 528.5h0M844.5 524.5h0M844.5 519.5h0M845.5 522.5h0M845.5 523.5h0M845.5 519.5h0M845.5 508.5h0M845.5 507.5h0M845.5 499.5h0M845.5 504.5h0M846.5 484.5h0M846.5 489.5h0M846.5 496.5h0M846.5 504.5h0M846.5 521.5h0M846.5 522.5h0M846.5 509.5h0M846.5 520.5h0M847.5 524.5h0M847.5 518.5h0M847.5 502.5h0M847.5 479.5h0M847.5 462.5h0M847.5 476.5h0M848.5 470.5h0M848.5 490.5h0M848.5 510.5h0M848.5 512.5h0M848.5 498.5h0M848.5 509.5h0M849.5 521.5h0M849.5 527.5h0M849.5 512.5h0M849.5 486.5h0M849.5 525.5h0M849.5 522.5h0M849.5 507.5h0M850.5 466.5h0M850.5 527.5h0M850.5 472.5h0M850.5 465.5h0M850.5 510.5h0M850.5 524.5h0M850.5 532.5h0M850.5 504.5h0M850.5 467.5h0M851.5 499.5h0M851.5 462.5h0M851.5 541.5h0M851.5 465.5h0M851.5 514.5h0M851.5 477.5h0M852.5 538.5h0M852.5 536.5h0M852.5 474.5h0M852.5 517.5h0M852.5 493.5h0M852.5 505.5h0M853.5 532.5h0M853.5 539.5h0M853.5 521.5h0M853.5 534.5h0M853.5 537.5h0M853.5 517.5h0M853.5 522.5h0M854.5 528.5h0M854.5 511.5h0M854.5 530.5h0M854.5 534.5h0M854.5 495.5h0M854.5 531.5h0M855.5 510.5h0M855.5 475.5h0M855.5 460.5h0M855.5 520.5h0M855.5 535.5h0M855.5 468.5h0M855.5 461.5h0M855.5 497.5h0M856.5 464.5h0M856.5 471.5h0M856.5 555.5h0M856.5 467.5h0M856.5 499.5h0M856.5 549.5h0M856.5 500.5h0M857.5 537.5h0M857.5 548.5h0M857.5 535.5h0M857.5 489.5h0M857.5 477.5h0M857.5 496.5h0M857.5 516.5h0M858.5 536.5h0M858.5 522.5h0M858.5 495.5h0M858.5 472.5h0M858.5 471.5h0M858.5 541.5h0M859.5 477.5h0M859.5 496.5h0M859.5 457.5h0M859.5 459.5h0M859.5 460.5h0M859.5 461.5h0M859.5 490.5h0M860.5 463.5h0M860.5 502.5h0M860.5 555.5h0M860.5 474.5h0M860.5 517.5h0M860.5 529.5h0M860.5 504.5h0M860.5 472.5h0M861.5 481.5h0M861.5 472.5h0M861.5 504.5h0M861.5 482.5h0M861.5 464.5h0M861.5 524.5h0M862.5 508.5h0M862.5 536.5h0M862.5 489.5h0M862.5 499.5h0M862.5 492.5h0M862.5 518.5h0M863.5 511.5h0M863.5 513.5h0M863.5 509.5h0M863.5 537.5h0M863.5 525.5h0M863.5 524.5h0M864.5 523.5h0M864.5 527.5h0M864.5 538.5h0M864.5 568.5h0M864.5 553.5h0M864.5 549.5h0M865.5 510.5h0M865.5 483.5h0M865.5 474.5h0M865.5 491.5h0M865.5 505.5h0M865.5 496.5h0M865.5 547.5h0M865.5 501.5h0M865.5 531.5h0M866.5 487.5h0M866.5 534.5h0M866.5 504.5h0M866.5 485.5h0M866.5 521.5h0M866.5 528.5h0M866.5 545.5h0M866.5 543.5h0M867.5 544.5h0M867.5 543.5h0M867.5 522.5h0M867.5 515.5h0M867.5 549.5h0M867.5 540.5h0M867.5 502.5h0M868.5 509.5h0M868.5 481.5h0M868.5 505.5h0M868.5 520.5h0M868.5 490.5h0M868.5 545.5h0M869.5 526.5h0M869.5 571.5h0M869.5 488.5h0M869.5 569.5h0M869.5 543.5h0M869.5 479.5h0M869.5 552.5h0M869.5 559.5h0M870.5 497.5h0M870.5 479.5h0M870.5 491.5h0M870.5 481.5h0M870.5 503.5h0M870.5 508.5h0M871.5 514.5h0M871.5 526.5h0M871.5 508.5h0M871.5 521.5h0M871.5 502.5h0M871.5 523.5h0M872.5 512.5h0M872.5 523.5h0M872.5 505.5h0M872.5 481.5h0M872.5 531.5h0M872.5 520.5h0M873.5 507.5h0M873.5 529.5h0M873.5 530.5h0M873.5 556.5h0M873.5 524.5h0M873.5 542.5h0M874.5 520.5h0M874.5 518.5h0M874.5 492.5h0M874.5 507.5h0M874.5 514.5h0M874.5 540.5h0M875.5 521.5h0M875.5 558.5h0M875.5 528.5h0M875.5 560.5h0M875.5 493.5h0M875.5 569.5h0M875.5 562.5h0M875.5 578.5h0M876.5 521.5h0M876.5 548.5h0M876.5 563.5h0M876.5 522.5h0M876.5 534.5h0M876.5 557.5h0M877.5 563.5h0M877.5 474.5h0M877.5 527.5h0M877.5 498.5h0M877.5 496.5h0M877.5 516.5h0M877.5 494.5h0M877.5 515.5h0M878.5 509.5h0M878.5 500.5h0M878.5 468.5h0M878.5 484.5h0M878.5 496.5h0M878.5 551.5h0M879.5 520.5h0M879.5 511.5h0M879.5 495.5h0M879.5 533.5h0M879.5 491.5h0M879.5 471.5h0M879.5 506.5h0M880.5 495.5h0M880.5 511.5h0M880.5 516.5h0M880.5 484.5h0M880.5 518.5h0M880.5 539.5h0M881.5 494.5h0M881.5 534.5h0M881.5 502.5h0M881.5 535.5h0M881.5 485.5h0M881.5 493.5h0M882.5 479.5h0M882.5 470.5h0M882.5 458.5h0M882.5 469.5h0M882.5 512.5h0M882.5 559.5h0M882.5 467.5h0M882.5 529.5h0M883.5 573.5h0M883.5 559.5h0M883.5 569.5h0M883.5 479.5h0M883.5 481.5h0M883.5 565.5h0M883.5 493.5h0M883.5 530.5h0M884.5 540.5h0M884.5 509.5h0M884.5 526.5h0M884.5 502.5h0M884.5 492.5h0M884.5 475.5h0M885.5 473.5h0M885.5 460.5h0M885.5 512.5h0M885.5 510.5h0M885.5 482.5h0M885.5 528.5h0M885.5 514.5h0M886.5 495.5h0M886.5 514.5h0M886.5 535.5h0M886.5 501.5h0M886.5 530.5h0M886.5 525.5h0M886.5 489.5h0M887.5 487.5h0M887.5 516.5h0M887.5 515.5h0M887.5 538.5h0M887.5 490.5h0M887.5 556.5h0M887.5 525.5h0M888.5 530.5h0M888.5 509.5h0M888.5 502.5h0M888.5 462.5h0M888.5 464.5h0M888.5 468.5h0M888.5 485.5h0M888.5 477.5h0M889.5 469.5h0M889.5 461.5h0M889.5 521.5h0M889.5 464.5h0M889.5 460.5h0M889.5 463.5h0M889.5 482.5h0M890.5 472.5h0M890.5 511.5h0M890.5 493.5h0M890.5 456.5h0M890.5 460.5h0M890.5 468.5h0M891.5 462.5h0M891.5 469.5h0M891.5 489.5h0M891.5 465.5h0M891.5 464.5h0M891.5 480.5h0M891.5 532.5h0M892.5 495.5h0M892.5 514.5h0M892.5 549.5h0M892.5 518.5h0M892.5 535.5h0M892.5 523.5h0M892.5 512.5h0M892.5 538.5h0M893.5 537.5h0M893.5 506.5h0M893.5 533.5h0M893.5 536.5h0M893.5 499.5h0M893.5 515.5h0M894.5 533.5h0M894.5 513.5h0M894.5 518.5h0M894.5 503.5h0M894.5 543.5h0M894.5 523.5h0M895.5 522.5h0M895.5 507.5h0M895.5 547.5h0M895.5 542.5h0M895.5 530.5h0M895.5 541.5h0M895.5 531.5h0M895.5 528.5h0M896.5 509.5h0M896.5 501.5h0M896.5 493.5h0M896.5 495.5h0M897.5 509.5h0M897.5 542.5h0M897.5 534.5h0M897.5 532.5h0M898.5 508.5h0M898.5 515.5h0M898.5 557.5h0M898.5 483.5h0M898.5 511.5h0M898.5 525.5h0M898.5 536.5h0M898.5 517.5h0M899.5 539.5h0M899.5 508.5h0M899.5 556.5h0M899.5 493.5h0M899.5 551.5h0M899.5 499.5h0M899.5 542.5h0M900.5 565.5h0M900.5 536.5h0M900.5 544.5h0M900.5 538.5h0M900.5 560.5h0M900.5 568.5h0M900.5 566.5h0M900.5 576.5h0M901.5 564.5h0M901.5 558.5h0M901.5 554.5h0M901.5 570.5h0M901.5 552.5h0M901.5 483.5h0M901.5 517.5h0M902.5 522.5h0M902.5 564.5h0M902.5 505.5h0M902.5 561.5h0M902.5 488.5h0M902.5 531.5h0M903.5 484.5h0M903.5 538.5h0M903.5 511.5h0M903.5 525.5h0M903.5 499.5h0M903.5 519.5h0M903.5 530.5h0M904.5 539.5h0M904.5 544.5h0M904.5 514.5h0M904.5 547.5h0M904.5 553.5h0M904.5 517.5h0M905.5 535.5h0M905.5 507.5h0M905.5 513.5h0M905.5 529.5h0M905.5 548.5h0M905.5 534.5h0M905.5 546.5h0M906.5 546.5h0M906.5 540.5h0M906.5 541.5h0M906.5 486.5h0M906.5 510.5h0M907.5 497.5h0M907.5 505.5h0M907.5 524.5h0M907.5 555.5h0M907.5 530.5h0M907.5 528.5h0M907.5 488.5h0M907.5 525.5h0M908.5 501.5h0M908.5 516.5h0M908.5 520.5h0M908.5 537.5h0M908.5 560.5h0M908.5 515.5h0M909.5 537.5h0M909.5 521.5h0M909.5 510.5h0M909.5 546.5h0M909.5 520.5h0M909.5 548.5h0M909.5 554.5h0M909.5 541.5h0M910.5 529.5h0M910.5 558.5h0M910.5 561.5h0M910.5 548.5h0M910.5 564.5h0M911.5 540.5h0M911.5 536.5h0M911.5 554.5h0M911.5 524.5h0M911.5 525.5h0M911.5 510.5h0M911.5 517.5h0M912.5 540.5h0M912.5 523.5h0M912.5 514.5h0M912.5 544.5h0M912.5 567.5h0M912.5 547.5h0M912.5 541.5h0M913.5 549.5h0M913.5 568.5h0M913.5 554.5h0M913.5 556.5h0M913.5 542.5h0M913.5 567.5h0M913.5 544.5h0M914.5 541.5h0M914.5 536.5h0M914.5 520.5h0M914.5 543.5h0M914.5 544.5h0M914.5 549.5h0M914.5 535.5h0M914.5 532.5h0M914.5 545.5h0M915.5 541.5h0M915.5 548.5h0M915.5 545.5h0M915.5 543.5h0M915.5 539.5h0M916.5 533.5h0M916.5 540.5h0M916.5 518.5h0M916.5 523.5h0M916.5 539.5h0M916.5 550.5h0M916.5 549.5h0M917.5 542.5h0M917.5 505.5h0M917.5 536.5h0M917.5 535.5h0M917.5 540.5h0M918.5 507.5h0M918.5 548.5h0M918.5 538.5h0M918.5 534.5h0M918.5 539.5h0M918.5 547.5h0M918.5 526.5h0M919.5 553.5h0M919.5 564.5h0M919.5 526.5h0M919.5 536.5h0M919.5 524.5h0M919.5 549.5h0M919.5 528.5h0M919.5 542.5h0M919.5 546.5h0M920.5 570.5h0M920.5 520.5h0M920.5 557.5h0M920.5 529.5h0M920.5 488.5h0M920.5 483.5h0M920.5 478.5h0M921.5 490.5h0M921.5 533.5h0M921.5 487.5h0M921.5 500.5h0M921.5 499.5h0M921.5 542.5h0M921.5 510.5h0M921.5 505.5h0M922.5 497.5h0M922.5 531.5h0M922.5 541.5h0M922.5 529.5h0M922.5 533.5h0M922.5 543.5h0M922.5 537.5h0M922.5 513.5h0M923.5 529.5h0M923.5 535.5h0M923.5 545.5h0M923.5 508.5h0M923.5 537.5h0M923.5 528.5h0M923.5 493.5h0M924.5 503.5h0M924.5 521.5h0M924.5 483.5h0M924.5 536.5h0M924.5 575.5h0M924.5 542.5h0M924.5 554.5h0M924.5 509.5h0M925.5 569.5h0M925.5 523.5h0M925.5 478.5h0M925.5 474.5h0M925.5 497.5h0M925.5 498.5h0M926.5 526.5h0M926.5 527.5h0M926.5 523.5h0M926.5 499.5h0M926.5 503.5h0M926.5 493.5h0M926.5 495.5h0M926.5 481.5h0M927.5 485.5h0M927.5 491.5h0M927.5 524.5h0M927.5 551.5h0M927.5 541.5h0M927.5 545.5h0M927.5 540.5h0M927.5 533.5h0M928.5 512.5h0M928.5 535.5h0M928.5 528.5h0M928.5 517.5h0M929.5 544.5h0M929.5 502.5h0M929.5 511.5h0M929.5 540.5h0M929.5 532.5h0M929.5 522.5h0M929.5 498.5h0M929.5 559.5h0M930.5 549.5h0M930.5 532.5h0M930.5 505.5h0M930.5 510.5h0M930.5 493.5h0M930.5 499.5h0M930.5 519.5h0M931.5 515.5h0M931.5 504.5h0M931.5 500.5h0M931.5 528.5h0M931.5 517.5h0M931.5 531.5h0M932.5 514.5h0M932.5 524.5h0M932.5 530.5h0M932.5 525.5h0M932.5 552.5h0M932.5 543.5h0M933.5 534.5h0M933.5 524.5h0M933.5 529.5h0M933.5 546.5h0M933.5 526.5h0M933.5 523.5h0M933.5 549.5h0M933.5 552.5h0M934.5 535.5h0M934.5 534.5h0M934.5 536.5h0M934.5 531.5h0M934.5 525.5h0M934.5 538.5h0M934.5 524.5h0M935.5 539.5h0M935.5 525.5h0M935.5 547.5h0M935.5 515.5h0M935.5 498.5h0M935.5 509.5h0M936.5 544.5h0M936.5 511.5h0M936.5 558.5h0M936.5 526.5h0M936.5 519.5h0M936.5 530.5h0M936.5 523.5h0M937.5 512.5h0M937.5 506.5h0M937.5 525.5h0M937.5 542.5h0M937.5 537.5h0M937.5 516.5h0M937.5 538.5h0M938.5 547.5h0M938.5 525.5h0M938.5 534.5h0M938.5 584.5h0M938.5 533.5h0M939.5 502.5h0M939.5 503.5h0M939.5 517.5h0M939.5 529.5h0M939.5 543.5h0M939.5 532.5h0M939.5 533.5h0M939.5 564.5h0M940.5 575.5h0M940.5 530.5h0M940.5 538.5h0M940.5 540.5h0M940.5 542.5h0M940.5 534.5h0M940.5 553.5h0M940.5 571.5h0M941.5 542.5h0M941.5 550.5h0M941.5 543.5h0M941.5 560.5h0M941.5 570.5h0M941.5 529.5h0M941.5 523.5h0M942.5 543.5h0M942.5 544.5h0M942.5 521.5h0M942.5 573.5h0M942.5 558.5h0M942.5 578.5h0M943.5 551.5h0M943.5 545.5h0M943.5 534.5h0M943.5 544.5h0M943.5 578.5h0M944.5 582.5h0M944.5 504.5h0M944.5 503.5h0M944.5 500.5h0M944.5 565.5h0M944.5 580.5h0M944.5 562.5h0M944.5 522.5h0M944.5 526.5h0M945.5 554.5h0M945.5 582.5h0M945.5 591.5h0M945.5 571.5h0M945.5 528.5h0M945.5 557.5h0M945.5 559.5h0M945.5 569.5h0M946.5 519.5h0M946.5 516.5h0M946.5 560.5h0M946.5 528.5h0M946.5 580.5h0M946.5 505.5h0M946.5 525.5h0M946.5 530.5h0M947.5 594.5h0M947.5 561.5h0M947.5 533.5h0M947.5 529.5h0M947.5 508.5h0M947.5 569.5h0M948.5 529.5h0M948.5 520.5h0M948.5 495.5h0M948.5 518.5h0M948.5 501.5h0M948.5 530.5h0M948.5 510.5h0M949.5 555.5h0M949.5 530.5h0M949.5 531.5h0M949.5 549.5h0M949.5 527.5h0M949.5 542.5h0M949.5 529.5h0M949.5 524.5h0M950.5 519.5h0M950.5 524.5h0M950.5 543.5h0M950.5 517.5h0M950.5 540.5h0M950.5 538.5h0M950.5 547.5h0M951.5 546.5h0M951.5 523.5h0M951.5 544.5h0M951.5 514.5h0M951.5 530.5h0M951.5 540.5h0M951.5 521.5h0M952.5 529.5h0M952.5 540.5h0M952.5 541.5h0M952.5 522.5h0M952.5 536.5h0M952.5 537.5h0M952.5 543.5h0M953.5 546.5h0M953.5 545.5h0M953.5 530.5h0M953.5 521.5h0M953.5 544.5h0M954.5 507.5h0M954.5 515.5h0M954.5 531.5h0M954.5 547.5h0M954.5 523.5h0M954.5 519.5h0M955.5 498.5h0M955.5 512.5h0M955.5 518.5h0M955.5 537.5h0M955.5 525.5h0M955.5 519.5h0M955.5 507.5h0M956.5 518.5h0M956.5 495.5h0M956.5 533.5h0M956.5 550.5h0M956.5 546.5h0M956.5 527.5h0M956.5 539.5h0M956.5 532.5h0M957.5 525.5h0M957.5 548.5h0M957.5 526.5h0M957.5 512.5h0M957.5 497.5h0M957.5 506.5h0M957.5 538.5h0M958.5 543.5h0M958.5 504.5h0M958.5 501.5h0M958.5 554.5h0M958.5 538.5h0M959.5 533.5h0M959.5 560.5h0M959.5 528.5h0M959.5 542.5h0M959.5 540.5h0M959.5 535.5h0M960.5 509.5h0M960.5 524.5h0M960.5 497.5h0M960.5 495.5h0M960.5 498.5h0M960.5 514.5h0M960.5 494.5h0M960.5 503.5h0M961.5 484.5h0M961.5 487.5h0M961.5 552.5h0M961.5 500.5h0M961.5 497.5h0M962.5 486.5h0M962.5 479.5h0M962.5 513.5h0M962.5 521.5h0M962.5 502.5h0M962.5 550.5h0M962.5 567.5h0M963.5 581.5h0M963.5 507.5h0M963.5 542.5h0M963.5 529.5h0M963.5 528.5h0M963.5 520.5h0M963.5 501.5h0M964.5 519.5h0M964.5 533.5h0M964.5 542.5h0M964.5 538.5h0M964.5 530.5h0M964.5 515.5h0M964.5 521.5h0M964.5 535.5h0M965.5 530.5h0M965.5 509.5h0M965.5 519.5h0M965.5 512.5h0M965.5 516.5h0M965.5 531.5h0M965.5 501.5h0M966.5 495.5h0M966.5 514.5h0M966.5 523.5h0M966.5 510.5h0M966.5 522.5h0M966.5 534.5h0M966.5 563.5h0M967.5 552.5h0M967.5 539.5h0M967.5 540.5h0M967.5 544.5h0M967.5 506.5h0M967.5 562.5h0M967.5 523.5h0M968.5 555.5h0M968.5 495.5h0M968.5 527.5h0M968.5 505.5h0M968.5 511.5h0M968.5 540.5h0M969.5 548.5h0M969.5 534.5h0M969.5 544.5h0M969.5 529.5h0M969.5 543.5h0M969.5 520.5h0M969.5 537.5h0M969.5 539.5h0M969.5 571.5h0M970.5 558.5h0M970.5 520.5h0M970.5 560.5h0M970.5 534.5h0M970.5 532.5h0M970.5 550.5h0M970.5 516.5h0M970.5 525.5h0M971.5 510.5h0M971.5 488.5h0M971.5 521.5h0M971.5 501.5h0M971.5 520.5h0M971.5 559.5h0M971.5 537.5h0M972.5 519.5h0M972.5 532.5h0M972.5 528.5h0M972.5 498.5h0M972.5 495.5h0M972.5 507.5h0M972.5 530.5h0M973.5 502.5h0M973.5 511.5h0M973.5 501.5h0M973.5 542.5h0M973.5 534.5h0M973.5 514.5h0M973.5 508.5h0M974.5 522.5h0M974.5 561.5h0M974.5 506.5h0M974.5 531.5h0M974.5 545.5h0M974.5 534.5h0M974.5 536.5h0M974.5 581.5h0M974.5 544.5h0M975.5 546.5h0M975.5 548.5h0M975.5 572.5h0M975.5 566.5h0M975.5 573.5h0M976.5 595.5h0M976.5 571.5h0M976.5 550.5h0M976.5 564.5h0M976.5 542.5h0M976.5 573.5h0M976.5 518.5h0M977.5 544.5h0M977.5 521.5h0M977.5 539.5h0M977.5 530.5h0M977.5 566.5h0M977.5 557.5h0M977.5 543.5h0M978.5 524.5h0M978.5 576.5h0M978.5 549.5h0M978.5 557.5h0M978.5 528.5h0M979.5 549.5h0M979.5 525.5h0M979.5 528.5h0M979.5 523.5h0M979.5 517.5h0M979.5 534.5h0M979.5 519.5h0M980.5 531.5h0M980.5 576.5h0M980.5 584.5h0M980.5 588.5h0M980.5 553.5h0M980.5 561.5h0M981.5 584.5h0M981.5 541.5h0M981.5 532.5h0M981.5 497.5h0M981.5 494.5h0M981.5 555.5h0M982.5 524.5h0M982.5 584.5h0M982.5 523.5h0M982.5 529.5h0M982.5 564.5h0M983.5 537.5h0M983.5 544.5h0M983.5 527.5h0M983.5 566.5h0M983.5 532.5h0M983.5 522.5h0M984.5 520.5h0M984.5 538.5h0M984.5 504.5h0M984.5 539.5h0M984.5 557.5h0M984.5 523.5h0M984.5 563.5h0M984.5 544.5h0M985.5 577.5h0M985.5 507.5h0M985.5 514.5h0M985.5 527.5h0M986.5 498.5h0M986.5 564.5h0M986.5 565.5h0M986.5 526.5h0M986.5 589.5h0M986.5 585.5h0M987.5 552.5h0M987.5 585.5h0M987.5 532.5h0M987.5 557.5h0M987.5 528.5h0M987.5 514.5h0M988.5 532.5h0M988.5 538.5h0M988.5 512.5h0M988.5 561.5h0M988.5 487.5h0M988.5 511.5h0M988.5 500.5h0M989.5 520.5h0M989.5 508.5h0M989.5 504.5h0M989.5 509.5h0M989.5 512.5h0M989.5 529.5h0M989.5 527.5h0M990.5 543.5h0M990.5 531.5h0M990.5 549.5h0M990.5 515.5h0M990.5 551.5h0M990.5 540.5h0M990.5 527.5h0M991.5 522.5h0M991.5 562.5h0M991.5 545.5h0M991.5 543.5h0M991.5 540.5h0M991.5 555.5h0M991.5 550.5h0M992.5 501.5h0M992.5 498.5h0M992.5 538.5h0M992.5 515.5h0M992.5 522.5h0M992.5 518.5h0M992.5 521.5h0M992.5 530.5h0M993.5 514.5h0M993.5 544.5h0M993.5 542.5h0M993.5 527.5h0M993.5 554.5h0M993.5 540.5h0M993.5 543.5h0M993.5 536.5h0M994.5 528.5h0M994.5 547.5h0M994.5 557.5h0M994.5 541.5h0M994.5 524.5h0M995.5 544.5h0M995.5 530.5h0M995.5 535.5h0M995.5 531.5h0M995.5 540.5h0M995.5 543.5h0M995.5 526.5h0M996.5 534.5h0M996.5 532.5h0M996.5 526.5h0M996.5 538.5h0M996.5 524.5h0M997.5 534.5h0M997.5 550.5h0M997.5 549.5h0M997.5 531.5h0M998.5 557.5h0M998.5 510.5h0M998.5 551.5h0M998.5 545.5h0M998.5 574.5h0M998.5 542.5h0M999.5 544.5h0M999.5 559.5h0M999.5 542.5h0M999.5 498.5h0M999.5 558.5h0M999.5 547.5h0M999.5 537.5h0M1000.5 539.5h0M1000.5 556.5h0M1000.5 509.5h0M1000.5 522.5h0M1000.5 536.5h0M1000.5 541.5h0M1001.5 540.5h0M1001.5 518.5h0M1001.5 519.5h0M1001.5 544.5h0M1001.5 521.5h0M1001.5 546.5h0M1001.5 559.5h0M1001.5 577.5h0M1002.5 531.5h0M1002.5 560.5h0M1002.5 491.5h0M1002.5 495.5h0M1002.5 525.5h0M1002.5 569.5h0M1002.5 572.5h0M1002.5 575.5h0M1003.5 507.5h0M1003.5 522.5h0M1003.5 513.5h0M1003.5 538.5h0M1003.5 496.5h0M1003.5 559.5h0M1003.5 501.5h0M1003.5 534.5h0M1004.5 579.5h0M1004.5 498.5h0M1004.5 537.5h0M1004.5 533.5h0M1004.5 530.5h0M1004.5 526.5h0M1005.5 544.5h0M1005.5 523.5h0M1005.5 578.5h0M1005.5 549.5h0M1005.5 570.5h0M1005.5 552.5h0M1005.5 573.5h0M1005.5 518.5h0M1006.5 584.5h0M1006.5 580.5h0M1006.5 509.5h0M1006.5 557.5h0M1007.5 529.5h0M1007.5 542.5h0M1007.5 551.5h0M1007.5 569.5h0M1007.5 582.5h0M1007.5 547.5h0M1007.5 571.5h0M1007.5 561.5h0M1008.5 575.5h0M1008.5 566.5h0M1008.5 564.5h0M1008.5 559.5h0M1008.5 569.5h0M1008.5 522.5h0M1008.5 540.5h0M1008.5 553.5h0M1009.5 550.5h0M1009.5 556.5h0M1009.5 557.5h0M1009.5 555.5h0M1009.5 565.5h0M1009.5 531.5h0M1009.5 564.5h0M1010.5 510.5h0M1010.5 498.5h0M1010.5 541.5h0M1010.5 540.5h0M1010.5 518.5h0M1011.5 533.5h0M1011.5 549.5h0M1011.5 564.5h0M1011.5 545.5h0M1011.5 546.5h0M1011.5 537.5h0M1011.5 534.5h0M1011.5 530.5h0M1012.5 522.5h0M1012.5 537.5h0M1012.5 538.5h0M1012.5 527.5h0M1012.5 539.5h0M1012.5 521.5h0M1012.5 526.5h0M1013.5 523.5h0M1013.5 528.5h0M1013.5 525.5h0M1013.5 515.5h0M1013.5 536.5h0M1013.5 505.5h0M1014.5 532.5h0M1014.5 556.5h0M1014.5 500.5h0M1014.5 546.5h0M1014.5 502.5h0M1014.5 516.5h0M1014.5 524.5h0M1014.5 555.5h0M1015.5 516.5h0M1015.5 527.5h0M1015.5 530.5h0M1015.5 490.5h0M1015.5 545.5h0M1015.5 512.5h0M1015.5 542.5h0M1016.5 549.5h0M1016.5 537.5h0M1016.5 545.5h0M1016.5 543.5h0M1016.5 495.5h0M1016.5 515.5h0M1016.5 535.5h0M1016.5 532.5h0M1017.5 543.5h0M1017.5 530.5h0M1017.5 525.5h0M1017.5 532.5h0M1017.5 518.5h0M1017.5 512.5h0M1017.5 516.5h0M1017.5 503.5h0M1018.5 485.5h0M1018.5 544.5h0M1018.5 525.5h0M1018.5 526.5h0M1018.5 486.5h0M1018.5 498.5h0M1018.5 513.5h0M1018.5 487.5h0M1019.5 542.5h0M1019.5 546.5h0M1019.5 525.5h0M1019.5 505.5h0M1019.5 554.5h0M1019.5 509.5h0M1020.5 543.5h0M1020.5 524.5h0M1020.5 520.5h0M1020.5 528.5h0M1020.5 526.5h0M1021.5 546.5h0M1021.5 550.5h0M1021.5 553.5h0M1021.5 557.5h0M1021.5 543.5h0M1021.5 558.5h0M1021.5 544.5h0M1021.5 524.5h0M1022.5 531.5h0M1022.5 538.5h0M1022.5 519.5h0M1022.5 515.5h0M1022.5 543.5h0M1022.5 535.5h0M1022.5 544.5h0M1023.5 534.5h0M1023.5 521.5h0M1023.5 523.5h0M1023.5 542.5h0M1023.5 508.5h0M1023.5 548.5h0M1024.5 553.5h0M1024.5 569.5h0M1024.5 566.5h0M1024.5 585.5h0M1024.5 483.5h0M1024.5 485.5h0M1024.5 489.5h0M1024.5 549.5h0M1025.5 537.5h0M1025.5 489.5h0M1025.5 550.5h0M1025.5 546.5h0M1025.5 476.5h0M1026.5 539.5h0M1026.5 503.5h0M1026.5 517.5h0M1026.5 508.5h0M1026.5 531.5h0M1026.5 532.5h0M1027.5 561.5h0M1027.5 541.5h0M1027.5 576.5h0M1027.5 534.5h0M1027.5 533.5h0M1027.5 547.5h0M1027.5 509.5h0M1027.5 491.5h0M1028.5 501.5h0M1028.5 483.5h0M1028.5 540.5h0M1028.5 480.5h0M1028.5 518.5h0M1028.5 500.5h0M1028.5 513.5h0M1029.5 562.5h0M1029.5 520.5h0M1029.5 529.5h0M1029.5 565.5h0M1029.5 577.5h0M1029.5 545.5h0M1029.5 575.5h0M1030.5 523.5h0M1030.5 584.5h0M1030.5 566.5h0M1030.5 548.5h0M1030.5 574.5h0M1030.5 546.5h0M1030.5 547.5h0M1031.5 547.5h0M1031.5 550.5h0M1031.5 543.5h0M1031.5 531.5h0M1031.5 541.5h0M1031.5 563.5h0M1031.5 511.5h0M1031.5 504.5h0M1032.5 512.5h0M1032.5 530.5h0M1032.5 559.5h0M1032.5 521.5h0M1032.5 505.5h0M1032.5 546.5h0M1033.5 543.5h0M1033.5 517.5h0M1033.5 554.5h0M1033.5 556.5h0M1033.5 525.5h0M1033.5 505.5h0M1033.5 534.5h0M1033.5 542.5h0M1034.5 561.5h0M1034.5 483.5h0M1034.5 499.5h0M1034.5 511.5h0M1034.5 533.5h0M1035.5 553.5h0M1035.5 544.5h0M1035.5 496.5h0M1035.5 557.5h0M1035.5 549.5h0M1035.5 523.5h0M1035.5 540.5h0M1036.5 536.5h0M1036.5 541.5h0M1036.5 517.5h0M1036.5 561.5h0M1036.5 537.5h0M1036.5 508.5h0M1036.5 513.5h0M1036.5 563.5h0M1037.5 557.5h0M1037.5 593.5h0M1037.5 538.5h0M1037.5 509.5h0M1037.5 482.5h0M1037.5 594.5h0M1038.5 576.5h0M1038.5 517.5h0M1038.5 582.5h0M1038.5 520.5h0M1038.5 497.5h0M1038.5 526.5h0M1038.5 564.5h0M1038.5 550.5h0M1039.5 546.5h0M1039.5 567.5h0M1039.5 569.5h0M1039.5 537.5h0M1039.5 519.5h0M1039.5 533.5h0M1039.5 547.5h0M1040.5 537.5h0M1040.5 521.5h0M1040.5 520.5h0M1040.5 552.5h0M1040.5 525.5h0M1040.5 528.5h0M1041.5 543.5h0M1041.5 538.5h0M1041.5 535.5h0M1041.5 542.5h0M1041.5 527.5h0M1041.5 556.5h0M1041.5 548.5h0M1042.5 530.5h0M1042.5 547.5h0M1042.5 563.5h0M1042.5 540.5h0M1042.5 558.5h0M1042.5 549.5h0M1042.5 560.5h0M1042.5 554.5h0M1043.5 558.5h0M1043.5 550.5h0M1043.5 531.5h0M1043.5 519.5h0M1043.5 530.5h0M1043.5 552.5h0M1044.5 540.5h0M1044.5 537.5h0M1044.5 539.5h0M1044.5 529.5h0M1044.5 523.5h0M1044.5 536.5h0M1044.5 520.5h0M1045.5 527.5h0M1045.5 533.5h0M1045.5 550.5h0M1045.5 536.5h0M1045.5 538.5h0M1046.5 523.5h0M1046.5 544.5h0M1046.5 533.5h0M1046.5 515.5h0M1046.5 519.5h0M1046.5 502.5h0M1046.5 527.5h0M1046.5 517.5h0M1047.5 524.5h0M1047.5 523.5h0M1047.5 541.5h0M1047.5 534.5h0M1047.5 536.5h0M1047.5 529.5h0M1047.5 528.5h0M1048.5 516.5h0M1048.5 530.5h0M1048.5 545.5h0M1048.5 537.5h0M1048.5 538.5h0M1048.5 544.5h0M1048.5 553.5h0M1049.5 524.5h0M1049.5 547.5h0M1049.5 537.5h0M1049.5 541.5h0M1049.5 492.5h0M1049.5 511.5h0M1050.5 555.5h0M1050.5 542.5h0M1050.5 514.5h0M1050.5 540.5h0M1050.5 511.5h0M1050.5 568.5h0M1051.5 533.5h0M1051.5 555.5h0M1051.5 541.5h0M1051.5 529.5h0M1052.5 509.5h0M1052.5 512.5h0M1052.5 521.5h0M1052.5 520.5h0M1052.5 546.5h0M1052.5 532.5h0M1052.5 522.5h0M1053.5 523.5h0M1053.5 527.5h0M1053.5 511.5h0M1053.5 546.5h0M1053.5 557.5h0M1053.5 547.5h0M1053.5 532.5h0M1053.5 526.5h0M1053.5 522.5h0M1054.5 536.5h0M1054.5 563.5h0M1054.5 552.5h0M1055.5 538.5h0M1055.5 546.5h0M1055.5 540.5h0M1055.5 554.5h0M1055.5 522.5h0M1055.5 505.5h0M1055.5 482.5h0M1056.5 503.5h0M1056.5 512.5h0M1056.5 563.5h0M1056.5 521.5h0M1056.5 508.5h0M1056.5 529.5h0M1056.5 532.5h0M1056.5 549.5h0M1057.5 510.5h0M1057.5 543.5h0M1057.5 573.5h0M1057.5 566.5h0M1057.5 489.5h0M1057.5 516.5h0M1057.5 492.5h0M1058.5 562.5h0M1058.5 521.5h0M1058.5 506.5h0M1058.5 515.5h0M1058.5 550.5h0M1058.5 546.5h0M1058.5 513.5h0M1059.5 521.5h0M1059.5 505.5h0M1059.5 520.5h0M1059.5 509.5h0M1059.5 504.5h0M1059.5 511.5h0M1059.5 512.5h0M1060.5 512.5h0M1060.5 508.5h0M1060.5 520.5h0M1060.5 545.5h0M1060.5 518.5h0M1060.5 497.5h0M1061.5 491.5h0M1061.5 507.5h0M1061.5 488.5h0M1061.5 509.5h0M1061.5 500.5h0M1061.5 512.5h0M1061.5 513.5h0M1061.5 529.5h0M1062.5 551.5h0M1062.5 573.5h0M1062.5 531.5h0M1062.5 522.5h0M1062.5 513.5h0M1062.5 539.5h0M1063.5 588.5h0M1063.5 495.5h0M1063.5 527.5h0M1063.5 515.5h0M1063.5 541.5h0M1064.5 529.5h0M1064.5 576.5h0M1064.5 571.5h0M1064.5 540.5h0M1064.5 583.5h0M1065.5 563.5h0M1065.5 519.5h0M1065.5 532.5h0M1065.5 517.5h0M1065.5 529.5h0M1065.5 522.5h0M1065.5 497.5h0M1066.5 515.5h0M1066.5 533.5h0M1066.5 589.5h0M1066.5 524.5h0M1066.5 551.5h0M1066.5 492.5h0M1066.5 581.5h0M1067.5 521.5h0M1067.5 500.5h0M1067.5 549.5h0M1067.5 498.5h0M1067.5 512.5h0M1067.5 505.5h0M1068.5 539.5h0M1068.5 522.5h0M1068.5 507.5h0M1068.5 542.5h0M1068.5 520.5h0M1068.5 551.5h0M1068.5 545.5h0M1069.5 558.5h0M1069.5 550.5h0M1069.5 541.5h0M1069.5 552.5h0M1069.5 551.5h0M1069.5 572.5h0M1070.5 564.5h0M1070.5 562.5h0M1070.5 561.5h0M1070.5 530.5h0M1070.5 537.5h0M1070.5 513.5h0M1070.5 496.5h0M1071.5 543.5h0M1071.5 493.5h0M1071.5 527.5h0M1071.5 523.5h0M1071.5 517.5h0M1071.5 514.5h0M1071.5 559.5h0M1072.5 532.5h0M1072.5 521.5h0M1072.5 548.5h0M1072.5 556.5h0M1072.5 527.5h0M1072.5 486.5h0M1073.5 483.5h0M1073.5 499.5h0M1073.5 495.5h0M1073.5 494.5h0M1073.5 501.5h0M1073.5 510.5h0M1073.5 509.5h0M1073.5 524.5h0M1074.5 495.5h0M1074.5 539.5h0M1074.5 521.5h0M1074.5 524.5h0M1074.5 528.5h0M1074.5 527.5h0M1074.5 504.5h0M1075.5 520.5h0M1075.5 508.5h0M1075.5 505.5h0M1075.5 490.5h0M1075.5 527.5h0M1075.5 536.5h0M1075.5 509.5h0M1076.5 556.5h0M1076.5 543.5h0M1076.5 519.5h0M1076.5 530.5h0M1076.5 533.5h0M1076.5 531.5h0M1076.5 525.5h0M1077.5 529.5h0M1077.5 534.5h0M1077.5 528.5h0M1077.5 539.5h0M1077.5 535.5h0M1078.5 544.5h0M1078.5 533.5h0M1078.5 524.5h0M1078.5 539.5h0M1078.5 543.5h0M1078.5 542.5h0M1079.5 546.5h0M1079.5 534.5h0M1079.5 538.5h0M1079.5 557.5h0M1079.5 578.5h0M1079.5 565.5h0M1080.5 536.5h0M1080.5 541.5h0M1080.5 502.5h0M1080.5 556.5h0M1080.5 578.5h0M1080.5 568.5h0M1081.5 522.5h0M1081.5 574.5h0M1081.5 540.5h0M1081.5 546.5h0M1081.5 539.5h0M1081.5 534.5h0M1081.5 561.5h0M1082.5 537.5h0M1082.5 532.5h0M1082.5 547.5h0M1082.5 534.5h0M1082.5 541.5h0M1082.5 533.5h0M1082.5 527.5h0M1082.5 531.5h0M1083.5 542.5h0M1083.5 530.5h0M1083.5 538.5h0M1083.5 553.5h0M1083.5 551.5h0M1084.5 540.5h0M1084.5 548.5h0M1084.5 543.5h0M1084.5 534.5h0M1084.5 544.5h0M1085.5 535.5h0M1085.5 542.5h0M1085.5 567.5h0M1085.5 566.5h0M1085.5 556.5h0M1085.5 575.5h0M1085.5 585.5h0M1085.5 565.5h0M1086.5 577.5h0M1086.5 503.5h0M1086.5 546.5h0M1086.5 581.5h0M1086.5 582.5h0M1086.5 589.5h0M1087.5 582.5h0M1087.5 553.5h0M1087.5 541.5h0M1087.5 539.5h0M1087.5 485.5h0M1087.5 565.5h0M1088.5 585.5h0M1088.5 527.5h0M1088.5 583.5h0M1088.5 587.5h0M1088.5 552.5h0M1088.5 577.5h0M1088.5 514.5h0M1088.5 560.5h0M1089.5 558.5h0M1089.5 576.5h0M1089.5 546.5h0M1089.5 524.5h0M1089.5 536.5h0M1089.5 539.5h0M1089.5 572.5h0M1089.5 531.5h0M1090.5 529.5h0M1090.5 539.5h0M1090.5 522.5h0M1090.5 544.5h0M1090.5 549.5h0M1090.5 542.5h0M1090.5 523.5h0M1091.5 546.5h0M1091.5 560.5h0M1091.5 559.5h0M1091.5 563.5h0M1091.5 538.5h0M1091.5 557.5h0M1091.5 540.5h0M1092.5 584.5h0M1092.5 514.5h0M1092.5 535.5h0M1092.5 564.5h0M1093.5 567.5h0M1093.5 527.5h0M1093.5 536.5h0M1093.5 529.5h0M1094.5 514.5h0M1094.5 543.5h0M1094.5 521.5h0M1094.5 562.5h0M1094.5 581.5h0M1094.5 584.5h0M1094.5 567.5h0M1095.5 595.5h0M1095.5 565.5h0M1095.5 590.5h0M1095.5 577.5h0M1095.5 593.5h0M1096.5 564.5h0M1096.5 574.5h0M1096.5 563.5h0M1096.5 540.5h0M1096.5 539.5h0M1097.5 587.5h0M1097.5 537.5h0M1097.5 528.5h0M1097.5 535.5h0M1097.5 542.5h0M1097.5 516.5h0M1098.5 538.5h0M1098.5 519.5h0M1098.5 534.5h0M1098.5 551.5h0M1099.5 526.5h0M1099.5 551.5h0M1099.5 569.5h0M1099.5 540.5h0M1099.5 487.5h0M1099.5 541.5h0M1099.5 565.5h0M1099.5 502.5h0M1100.5 514.5h0M1100.5 521.5h0M1100.5 524.5h0M1100.5 519.5h0M1100.5 490.5h0M1100.5 494.5h0M1100.5 520.5h0M1101.5 526.5h0M1101.5 565.5h0M1101.5 500.5h0M1101.5 546.5h0M1101.5 540.5h0M1101.5 549.5h0M1101.5 533.5h0M1101.5 513.5h0M1102.5 495.5h0M1102.5 517.5h0M1102.5 512.5h0M1102.5 535.5h0M1102.5 542.5h0M1102.5 539.5h0M1102.5 564.5h0M1103.5 574.5h0M1103.5 582.5h0M1103.5 550.5h0M1103.5 562.5h0M1103.5 565.5h0M1103.5 545.5h0M1104.5 529.5h0M1104.5 514.5h0M1104.5 522.5h0M1104.5 539.5h0M1104.5 534.5h0M1104.5 530.5h0M1104.5 517.5h0M1105.5 522.5h0M1105.5 536.5h0M1105.5 530.5h0M1105.5 542.5h0M1106.5 523.5h0M1106.5 547.5h0M1106.5 531.5h0M1106.5 543.5h0M1106.5 527.5h0M1106.5 530.5h0M1107.5 535.5h0M1107.5 554.5h0M1107.5 548.5h0M1107.5 525.5h0M1107.5 501.5h0M1107.5 529.5h0M1107.5 517.5h0M1107.5 518.5h0M1108.5 522.5h0M1108.5 510.5h0M1108.5 516.5h0M1108.5 529.5h0M1108.5 495.5h0M1108.5 552.5h0M1108.5 484.5h0M1109.5 566.5h0M1109.5 537.5h0M1109.5 564.5h0M1109.5 514.5h0M1109.5 556.5h0M1109.5 527.5h0M1109.5 545.5h0M1109.5 552.5h0M1110.5 555.5h0M1110.5 554.5h0M1110.5 567.5h0M1110.5 541.5h0M1110.5 549.5h0M1110.5 551.5h0M1110.5 532.5h0M1111.5 546.5h0M1111.5 535.5h0M1111.5 538.5h0M1111.5 542.5h0M1111.5 545.5h0M1111.5 555.5h0M1112.5 535.5h0M1112.5 543.5h0M1112.5 548.5h0M1112.5 536.5h0M1112.5 545.5h0M1112.5 542.5h0M1112.5 547.5h0M1113.5 540.5h0M1113.5 541.5h0M1113.5 550.5h0M1113.5 538.5h0M1113.5 537.5h0M1113.5 534.5h0M1114.5 534.5h0M1114.5 538.5h0M1114.5 562.5h0M1114.5 512.5h0M1114.5 490.5h0M1114.5 502.5h0M1114.5 551.5h0M1114.5 488.5h0M1115.5 505.5h0M1115.5 553.5h0M1115.5 549.5h0M1115.5 537.5h0M1115.5 536.5h0M1115.5 539.5h0M1115.5 535.5h0M1116.5 535.5h0M1116.5 523.5h0M1116.5 543.5h0M1116.5 536.5h0M1116.5 544.5h0M1116.5 541.5h0M1116.5 533.5h0M1117.5 535.5h0M1117.5 543.5h0M1117.5 550.5h0M1117.5 545.5h0M1117.5 549.5h0M1118.5 540.5h0M1118.5 531.5h0M1118.5 542.5h0M1118.5 536.5h0M1118.5 513.5h0M1118.5 526.5h0M1119.5 491.5h0M1119.5 500.5h0M1119.5 552.5h0M1119.5 534.5h0M1119.5 530.5h0M1119.5 529.5h0M1119.5 509.5h0M1120.5 524.5h0M1120.5 532.5h0M1120.5 538.5h0M1120.5 542.5h0M1120.5 536.5h0M1120.5 528.5h0M1120.5 523.5h0M1121.5 539.5h0M1121.5 545.5h0M1121.5 525.5h0M1121.5 535.5h0M1121.5 501.5h0M1121.5 537.5h0M1122.5 540.5h0M1122.5 541.5h0M1122.5 514.5h0M1122.5 530.5h0M1122.5 529.5h0M1122.5 534.5h0M1122.5 531.5h0M1123.5 535.5h0M1123.5 536.5h0M1123.5 529.5h0M1123.5 521.5h0M1123.5 522.5h0M1123.5 508.5h0M1123.5 501.5h0M1124.5 524.5h0M1124.5 542.5h0M1124.5 516.5h0M1124.5 553.5h0M1124.5 536.5h0M1124.5 527.5h0M1125.5 534.5h0M1125.5 525.5h0M1125.5 548.5h0M1125.5 542.5h0M1125.5 524.5h0M1125.5 511.5h0M1126.5 502.5h0M1126.5 522.5h0M1126.5 511.5h0M1126.5 540.5h0M1126.5 537.5h0M1126.5 521.5h0M1126.5 539.5h0M1126.5 525.5h0M1127.5 542.5h0M1127.5 537.5h0M1127.5 535.5h0M1127.5 523.5h0M1127.5 530.5h0M1127.5 539.5h0M1127.5 500.5h0M1128.5 549.5h0M1128.5 548.5h0M1128.5 535.5h0M1128.5 516.5h0M1128.5 509.5h0M1128.5 555.5h0M1128.5 536.5h0M1128.5 481.5h0M1129.5 488.5h0M1129.5 527.5h0M1129.5 507.5h0M1129.5 555.5h0M1129.5 528.5h0M1129.5 567.5h0M1129.5 509.5h0M1130.5 478.5h0M1130.5 499.5h0M1130.5 525.5h0M1130.5 484.5h0M1130.5 527.5h0M1130.5 545.5h0M1130.5 493.5h0M1131.5 509.5h0M1131.5 480.5h0M1131.5 497.5h0M1131.5 542.5h0M1131.5 521.5h0M1131.5 530.5h0M1131.5 513.5h0M1132.5 511.5h0M1132.5 509.5h0M1132.5 502.5h0M1132.5 529.5h0M1132.5 507.5h0M1133.5 483.5h0M1133.5 503.5h0M1133.5 532.5h0M1133.5 523.5h0M1133.5 539.5h0M1133.5 511.5h0M1134.5 516.5h0M1134.5 525.5h0M1134.5 504.5h0M1134.5 537.5h0M1134.5 535.5h0M1135.5 518.5h0M1135.5 522.5h0M1135.5 535.5h0M1135.5 527.5h0M1135.5 514.5h0M1135.5 537.5h0M1136.5 532.5h0M1136.5 547.5h0M1136.5 494.5h0M1136.5 534.5h0M1136.5 513.5h0M1136.5 539.5h0M1137.5 517.5h0M1137.5 476.5h0M1137.5 481.5h0M1137.5 508.5h0M1137.5 538.5h0M1137.5 521.5h0M1137.5 477.5h0M1138.5 518.5h0M1138.5 512.5h0M1138.5 508.5h0M1138.5 497.5h0M1138.5 529.5h0M1138.5 548.5h0M1138.5 564.5h0M1138.5 561.5h0M1139.5 536.5h0M1139.5 540.5h0M1139.5 557.5h0M1139.5 551.5h0M1139.5 560.5h0M1139.5 547.5h0M1139.5 573.5h0M1139.5 535.5h0M1140.5 523.5h0M1140.5 549.5h0M1140.5 530.5h0M1140.5 569.5h0M1140.5 570.5h0M1140.5 535.5h0M1140.5 536.5h0M1141.5 518.5h0M1141.5 527.5h0M1141.5 536.5h0M1141.5 556.5h0M1141.5 549.5h0M1141.5 570.5h0M1142.5 492.5h0M1142.5 537.5h0M1142.5 568.5h0M1142.5 558.5h0M1142.5 565.5h0M1142.5 564.5h0M1142.5 561.5h0M1142.5 570.5h0M1143.5 529.5h0M1143.5 543.5h0M1143.5 556.5h0M1143.5 555.5h0M1143.5 568.5h0M1143.5 562.5h0M1144.5 536.5h0M1144.5 561.5h0M1144.5 522.5h0M1144.5 560.5h0M1144.5 548.5h0M1144.5 546.5h0M1144.5 539.5h0M1145.5 554.5h0M1145.5 534.5h0M1145.5 515.5h0M1145.5 513.5h0M1145.5 556.5h0M1145.5 544.5h0M1146.5 513.5h0M1146.5 541.5h0M1146.5 528.5h0M1146.5 539.5h0M1146.5 551.5h0M1146.5 549.5h0M1146.5 552.5h0M1146.5 497.5h0M1147.5 530.5h0M1147.5 536.5h0M1147.5 498.5h0M1147.5 522.5h0M1147.5 515.5h0M1147.5 497.5h0M1148.5 509.5h0M1148.5 540.5h0M1148.5 524.5h0M1148.5 547.5h0M1148.5 476.5h0M1148.5 518.5h0M1149.5 534.5h0M1149.5 529.5h0M1149.5 565.5h0M1149.5 578.5h0M1149.5 576.5h0M1149.5 555.5h0M1149.5 569.5h0M1149.5 571.5h0M1150.5 576.5h0M1150.5 552.5h0M1150.5 563.5h0M1150.5 572.5h0M1150.5 558.5h0M1150.5 543.5h0M1150.5 550.5h0M1150.5 546.5h0M1151.5 535.5h0M1151.5 556.5h0M1151.5 550.5h0M1151.5 558.5h0M1151.5 578.5h0M1151.5 557.5h0M1152.5 556.5h0M1152.5 558.5h0M1152.5 549.5h0M1152.5 542.5h0M1152.5 550.5h0M1152.5 546.5h0M1152.5 540.5h0M1153.5 525.5h0M1153.5 536.5h0M1153.5 531.5h0M1153.5 501.5h0M1153.5 537.5h0M1153.5 516.5h0M1153.5 552.5h0M1153.5 544.5h0M1154.5 529.5h0M1154.5 575.5h0M1154.5 496.5h0M1154.5 495.5h0M1154.5 522.5h0M1154.5 487.5h0M1154.5 519.5h0M1155.5 560.5h0M1155.5 550.5h0M1155.5 567.5h0M1155.5 566.5h0M1155.5 487.5h0M1155.5 534.5h0M1156.5 583.5h0M1156.5 588.5h0M1156.5 576.5h0M1156.5 557.5h0M1156.5 551.5h0M1157.5 570.5h0M1157.5 567.5h0M1157.5 522.5h0M1157.5 539.5h0M1157.5 553.5h0M1157.5 523.5h0M1157.5 571.5h0M1158.5 568.5h0M1158.5 540.5h0M1158.5 542.5h0M1158.5 489.5h0M1158.5 531.5h0M1158.5 539.5h0M1159.5 511.5h0M1159.5 546.5h0M1159.5 527.5h0M1159.5 535.5h0M1159.5 538.5h0M1159.5 532.5h0M1160.5 537.5h0M1160.5 552.5h0M1160.5 546.5h0M1160.5 547.5h0M1160.5 564.5h0M1160.5 524.5h0M1160.5 561.5h0M1160.5 534.5h0M1161.5 507.5h0M1161.5 545.5h0M1161.5 547.5h0M1161.5 557.5h0M1161.5 512.5h0M1161.5 552.5h0M1161.5 523.5h0M1161.5 538.5h0M1162.5 497.5h0M1162.5 516.5h0M1162.5 551.5h0M1162.5 542.5h0M1162.5 515.5h0M1162.5 552.5h0M1163.5 537.5h0M1163.5 555.5h0M1163.5 562.5h0M1163.5 542.5h0M1163.5 520.5h0M1163.5 577.5h0M1164.5 569.5h0M1164.5 570.5h0M1164.5 518.5h0M1164.5 536.5h0M1164.5 501.5h0M1164.5 516.5h0M1164.5 541.5h0M1165.5 564.5h0M1165.5 549.5h0M1165.5 531.5h0M1165.5 537.5h0M1165.5 547.5h0M1165.5 514.5h0M1165.5 507.5h0M1166.5 496.5h0M1166.5 506.5h0M1166.5 538.5h0M1166.5 537.5h0M1166.5 547.5h0M1166.5 546.5h0M1166.5 558.5h0M1166.5 539.5h0M1166.5 543.5h0M1167.5 548.5h0M1167.5 520.5h0M1167.5 564.5h0M1167.5 563.5h0M1167.5 557.5h0M1167.5 571.5h0M1168.5 538.5h0M1168.5 517.5h0M1168.5 555.5h0M1168.5 582.5h0M1168.5 481.5h0M1168.5 524.5h0M1169.5 521.5h0M1169.5 562.5h0M1169.5 582.5h0M1169.5 580.5h0M1169.5 471.5h0M1169.5 478.5h0M1170.5 519.5h0M1170.5 554.5h0M1170.5 483.5h0M1170.5 566.5h0M1170.5 546.5h0M1170.5 565.5h0M1170.5 564.5h0M1170.5 525.5h0M1171.5 554.5h0M1171.5 527.5h0M1171.5 548.5h0M1171.5 570.5h0M1171.5 552.5h0M1171.5 516.5h0M1171.5 533.5h0M1171.5 499.5h0M1172.5 511.5h0M1172.5 512.5h0M1172.5 524.5h0M1172.5 521.5h0M1172.5 508.5h0M1172.5 486.5h0M1172.5 515.5h0M1173.5 545.5h0M1173.5 563.5h0M1173.5 546.5h0M1173.5 536.5h0M1173.5 544.5h0M1173.5 561.5h0M1173.5 566.5h0M1174.5 517.5h0M1174.5 563.5h0M1174.5 544.5h0M1174.5 569.5h0M1174.5 587.5h0M1174.5 547.5h0M1175.5 543.5h0M1175.5 564.5h0M1175.5 531.5h0M1175.5 539.5h0M1175.5 509.5h0M1175.5 545.5h0M1176.5 534.5h0M1176.5 536.5h0M1176.5 510.5h0M1176.5 527.5h0M1176.5 502.5h0M1176.5 509.5h0M1176.5 533.5h0M1176.5 523.5h0M1176.5 496.5h0M1177.5 492.5h0M1177.5 506.5h0M1177.5 507.5h0M1177.5 494.5h0M1177.5 475.5h0M1177.5 511.5h0M1177.5 478.5h0M1178.5 505.5h0M1178.5 522.5h0M1178.5 510.5h0M1179.5 512.5h0M1179.5 507.5h0M1179.5 525.5h0M1179.5 519.5h0M1179.5 524.5h0M1179.5 511.5h0M1179.5 531.5h0M1180.5 523.5h0M1180.5 539.5h0M1180.5 531.5h0M1180.5 541.5h0M1180.5 546.5h0M1181.5 537.5h0M1181.5 539.5h0M1181.5 523.5h0M1181.5 549.5h0M1181.5 545.5h0M1181.5 540.5h0M1182.5 539.5h0M1182.5 537.5h0M1182.5 536.5h0M1182.5 540.5h0M1182.5 541.5h0M1183.5 537.5h0M1183.5 546.5h0M1183.5 523.5h0M1183.5 527.5h0M1183.5 530.5h0M1184.5 532.5h0M1184.5 523.5h0M1184.5 520.5h0M1184.5 526.5h0M1184.5 524.5h0M1184.5 549.5h0M1185.5 537.5h0M1185.5 525.5h0M1185.5 544.5h0M1185.5 529.5h0M1185.5 547.5h0M1185.5 531.5h0M1185.5 550.5h0M1185.5 542.5h0M1186.5 539.5h0M1186.5 549.5h0M1186.5 538.5h0M1186.5 537.5h0M1186.5 522.5h0M1187.5 529.5h0M1187.5 563.5h0M1187.5 542.5h0M1187.5 500.5h0M1187.5 508.5h0M1187.5 506.5h0M1187.5 557.5h0M1187.5 574.5h0M1188.5 557.5h0M1188.5 530.5h0M1188.5 545.5h0M1188.5 570.5h0M1188.5 543.5h0M1188.5 548.5h0M1188.5 538.5h0M1189.5 558.5h0M1189.5 494.5h0M1189.5 560.5h0M1189.5 503.5h0M1189.5 540.5h0M1189.5 559.5h0M1189.5 507.5h0M1190.5 526.5h0M1190.5 500.5h0M1190.5 569.5h0M1190.5 562.5h0M1190.5 515.5h0M1190.5 523.5h0M1191.5 495.5h0M1191.5 513.5h0M1191.5 485.5h0M1191.5 481.5h0M1191.5 500.5h0M1191.5 486.5h0M1191.5 508.5h0M1192.5 507.5h0M1192.5 552.5h0M1192.5 480.5h0M1192.5 492.5h0M1192.5 535.5h0M1192.5 526.5h0M1192.5 494.5h0M1192.5 500.5h0M1193.5 540.5h0M1193.5 545.5h0M1193.5 561.5h0M1193.5 527.5h0M1193.5 485.5h0M1193.5 496.5h0M1193.5 553.5h0M1194.5 491.5h0M1194.5 559.5h0M1194.5 571.5h0M1194.5 578.5h0M1194.5 563.5h0M1194.5 579.5h0M1194.5 572.5h0M1195.5 527.5h0M1195.5 580.5h0M1195.5 552.5h0M1195.5 554.5h0M1195.5 541.5h0M1195.5 555.5h0M1195.5 531.5h0M1195.5 522.5h0M1196.5 550.5h0M1196.5 563.5h0M1196.5 528.5h0M1196.5 561.5h0M1196.5 548.5h0M1196.5 549.5h0M1196.5 538.5h0M1197.5 544.5h0M1197.5 491.5h0M1197.5 559.5h0M1197.5 558.5h0M1197.5 548.5h0M1198.5 519.5h0M1198.5 540.5h0M1198.5 541.5h0M1198.5 514.5h0M1198.5 529.5h0M1198.5 537.5h0M1198.5 544.5h0M1199.5 544.5h0M1199.5 537.5h0M1199.5 539.5h0M1199.5 529.5h0M1199.5 531.5h0M1199.5 557.5h0M1199.5 545.5h0M1200.5 543.5h0M1200.5 537.5h0M1200.5 557.5h0M1200.5 550.5h0M1200.5 530.5h0M1200.5 508.5h0M1201.5 538.5h0M1201.5 515.5h0M1201.5 550.5h0M1201.5 524.5h0M1201.5 547.5h0M1201.5 545.5h0M1201.5 546.5h0M1201.5 526.5h0M1202.5 529.5h0M1202.5 543.5h0M1202.5 541.5h0M1202.5 523.5h0M1202.5 536.5h0M1202.5 533.5h0M1203.5 537.5h0M1203.5 536.5h0M1203.5 529.5h0M1203.5 538.5h0M1203.5 539.5h0M1203.5 528.5h0M1204.5 543.5h0M1204.5 531.5h0M1204.5 505.5h0M1204.5 526.5h0M1204.5 547.5h0M1204.5 528.5h0M1204.5 501.5h0M1204.5 548.5h0M1205.5 520.5h0M1205.5 518.5h0M1205.5 542.5h0M1205.5 548.5h0M1205.5 537.5h0M1205.5 540.5h0M1206.5 542.5h0M1206.5 536.5h0M1206.5 545.5h0M1206.5 537.5h0M1206.5 524.5h0M1206.5 520.5h0M1206.5 527.5h0M1207.5 515.5h0M1207.5 556.5h0M1207.5 555.5h0M1207.5 564.5h0M1207.5 543.5h0M1207.5 535.5h0M1207.5 514.5h0M1207.5 537.5h0M1208.5 520.5h0M1208.5 522.5h0M1208.5 486.5h0M1208.5 498.5h0M1208.5 534.5h0M1208.5 501.5h0M1208.5 543.5h0M1209.5 542.5h0M1209.5 569.5h0M1209.5 514.5h0M1209.5 564.5h0M1209.5 546.5h0M1209.5 534.5h0M1210.5 573.5h0M1210.5 527.5h0M1210.5 549.5h0M1210.5 512.5h0M1210.5 563.5h0M1210.5 545.5h0M1210.5 533.5h0M1211.5 527.5h0M1211.5 519.5h0M1211.5 545.5h0M1211.5 538.5h0M1211.5 533.5h0M1211.5 534.5h0M1211.5 554.5h0M1212.5 570.5h0M1212.5 531.5h0M1212.5 537.5h0M1212.5 541.5h0M1212.5 548.5h0M1212.5 560.5h0M1212.5 574.5h0M1213.5 539.5h0M1213.5 517.5h0M1213.5 522.5h0M1213.5 544.5h0M1213.5 553.5h0M1213.5 524.5h0M1213.5 512.5h0M1213.5 494.5h0M1214.5 521.5h0M1214.5 534.5h0M1214.5 496.5h0M1214.5 537.5h0M1214.5 568.5h0M1214.5 565.5h0M1214.5 571.5h0M1215.5 535.5h0M1215.5 567.5h0M1215.5 551.5h0M1215.5 574.5h0M1215.5 506.5h0M1215.5 526.5h0M1216.5 498.5h0M1216.5 519.5h0M1216.5 491.5h0M1216.5 520.5h0M1216.5 499.5h0M1216.5 478.5h0M1216.5 492.5h0M1216.5 506.5h0M1217.5 523.5h0M1217.5 511.5h0M1217.5 525.5h0M1217.5 502.5h0M1217.5 528.5h0M1217.5 520.5h0M1217.5 534.5h0M1218.5 533.5h0M1218.5 516.5h0M1218.5 478.5h0M1218.5 518.5h0M1218.5 483.5h0M1219.5 540.5h0M1219.5 539.5h0M1219.5 479.5h0M1219.5 522.5h0M1219.5 480.5h0M1219.5 518.5h0M1219.5 510.5h0M1220.5 482.5h0M1220.5 538.5h0M1220.5 475.5h0M1220.5 495.5h0M1220.5 488.5h0M1220.5 479.5h0M1220.5 516.5h0M1221.5 470.5h0M1221.5 548.5h0M1221.5 514.5h0M1221.5 524.5h0M1221.5 553.5h0M1221.5 540.5h0M1221.5 479.5h0M1222.5 530.5h0M1222.5 477.5h0M1222.5 531.5h0M1222.5 471.5h0M1222.5 474.5h0M1222.5 516.5h0M1222.5 494.5h0M1223.5 511.5h0M1223.5 487.5h0M1223.5 527.5h0M1223.5 508.5h0M1224.5 484.5h0M1224.5 507.5h0M1224.5 517.5h0M1224.5 532.5h0M1224.5 527.5h0M1224.5 515.5h0M1224.5 537.5h0M1225.5 537.5h0M1225.5 538.5h0M1225.5 534.5h0M1225.5 544.5h0M1225.5 532.5h0M1225.5 536.5h0M1225.5 542.5h0M1226.5 539.5h0M1226.5 534.5h0M1226.5 499.5h0M1226.5 522.5h0M1226.5 502.5h0M1226.5 514.5h0M1226.5 528.5h0M1227.5 527.5h0M1227.5 536.5h0M1227.5 535.5h0M1227.5 542.5h0M1227.5 537.5h0M1227.5 526.5h0M1228.5 537.5h0M1228.5 514.5h0M1228.5 522.5h0M1228.5 510.5h0M1228.5 503.5h0M1228.5 511.5h0M1228.5 543.5h0M1229.5 527.5h0M1229.5 535.5h0M1229.5 499.5h0M1229.5 532.5h0M1229.5 510.5h0M1229.5 515.5h0M1230.5 516.5h0M1230.5 524.5h0M1230.5 530.5h0M1230.5 528.5h0M1230.5 521.5h0M1230.5 527.5h0M1230.5 522.5h0M1231.5 527.5h0M1231.5 531.5h0M1231.5 545.5h0M1231.5 559.5h0M1231.5 552.5h0M1231.5 553.5h0M1231.5 534.5h0M1232.5 541.5h0M1232.5 552.5h0M1232.5 557.5h0M1232.5 560.5h0M1232.5 528.5h0M1232.5 569.5h0M1232.5 547.5h0M1233.5 550.5h0M1233.5 562.5h0M1233.5 510.5h0M1233.5 528.5h0M1233.5 531.5h0M1233.5 514.5h0M1233.5 525.5h0M1233.5 543.5h0M1234.5 525.5h0M1234.5 516.5h0M1234.5 507.5h0M1234.5 499.5h0M1234.5 519.5h0M1234.5 501.5h0M1235.5 509.5h0M1235.5 515.5h0M1235.5 524.5h0M1235.5 535.5h0M1235.5 520.5h0M1235.5 533.5h0M1235.5 526.5h0M1235.5 532.5h0M1236.5 526.5h0M1236.5 508.5h0M1236.5 525.5h0M1236.5 504.5h0M1236.5 548.5h0M1236.5 542.5h0M1236.5 545.5h0M1237.5 527.5h0M1237.5 524.5h0M1237.5 522.5h0M1237.5 530.5h0M1237.5 537.5h0M1237.5 525.5h0M1238.5 529.5h0M1238.5 503.5h0M1238.5 505.5h0M1238.5 524.5h0M1238.5 516.5h0M1238.5 500.5h0M1238.5 521.5h0M1239.5 519.5h0M1239.5 536.5h0M1239.5 526.5h0M1239.5 532.5h0M1239.5 524.5h0M1239.5 504.5h0M1239.5 508.5h0M1240.5 532.5h0M1240.5 527.5h0M1240.5 511.5h0M1240.5 519.5h0M1240.5 514.5h0M1240.5 539.5h0M1241.5 538.5h0M1241.5 558.5h0M1241.5 514.5h0M1241.5 527.5h0M1241.5 566.5h0M1241.5 568.5h0M1241.5 556.5h0M1242.5 559.5h0M1242.5 564.5h0M1242.5 562.5h0M1242.5 530.5h0M1242.5 533.5h0M1242.5 553.5h0M1242.5 536.5h0M1243.5 532.5h0M1243.5 506.5h0M1243.5 551.5h0M1243.5 525.5h0M1243.5 508.5h0M1243.5 527.5h0M1243.5 568.5h0M1244.5 494.5h0M1244.5 572.5h0M1244.5 516.5h0M1244.5 528.5h0M1244.5 537.5h0M1244.5 485.5h0M1244.5 563.5h0M1245.5 528.5h0M1245.5 549.5h0M1245.5 498.5h0M1245.5 543.5h0M1245.5 495.5h0M1245.5 499.5h0M1245.5 512.5h0M1246.5 523.5h0M1246.5 509.5h0M1246.5 513.5h0M1246.5 533.5h0M1246.5 559.5h0M1246.5 542.5h0M1246.5 551.5h0M1246.5 536.5h0M1247.5 533.5h0M1247.5 536.5h0M1247.5 530.5h0M1247.5 542.5h0M1247.5 528.5h0M1248.5 521.5h0M1248.5 532.5h0M1248.5 516.5h0M1248.5 537.5h0M1248.5 534.5h0M1248.5 512.5h0M1249.5 493.5h0M1249.5 517.5h0M1249.5 520.5h0M1249.5 562.5h0M1249.5 541.5h0M1249.5 542.5h0M1249.5 548.5h0M1250.5 534.5h0M1250.5 561.5h0M1250.5 497.5h0M1250.5 560.5h0M1250.5 529.5h0M1250.5 579.5h0M1250.5 499.5h0M1250.5 518.5h0M1250.5 526.5h0M1251.5 533.5h0M1251.5 499.5h0M1251.5 548.5h0M1251.5 535.5h0M1251.5 547.5h0M1251.5 526.5h0M1251.5 539.5h0M1252.5 548.5h0M1252.5 515.5h0M1252.5 536.5h0M1252.5 537.5h0M1252.5 531.5h0M1252.5 540.5h0M1252.5 549.5h0M1253.5 543.5h0M1253.5 541.5h0M1253.5 505.5h0M1253.5 539.5h0M1253.5 551.5h0M1253.5 528.5h0M1253.5 542.5h0M1254.5 540.5h0M1254.5 517.5h0M1254.5 519.5h0M1254.5 489.5h0M1254.5 487.5h0M1254.5 500.5h0M1254.5 529.5h0M1255.5 571.5h0M1255.5 544.5h0M1255.5 570.5h0M1255.5 514.5h0M1255.5 531.5h0M1255.5 564.5h0M1255.5 534.5h0M1255.5 568.5h0M1256.5 553.5h0M1256.5 512.5h0M1256.5 506.5h0M1256.5 535.5h0M1256.5 554.5h0M1256.5 505.5h0M1257.5 520.5h0M1257.5 535.5h0M1257.5 539.5h0M1257.5 544.5h0M1257.5 551.5h0M1257.5 549.5h0M1257.5 532.5h0M1258.5 549.5h0M1258.5 548.5h0M1258.5 539.5h0M1258.5 568.5h0M1258.5 561.5h0M1258.5 560.5h0M1258.5 541.5h0M1259.5 546.5h0M1259.5 556.5h0M1259.5 528.5h0M1259.5 572.5h0M1259.5 536.5h0M1259.5 539.5h0M1260.5 561.5h0M1260.5 552.5h0M1260.5 543.5h0M1260.5 494.5h0M1260.5 564.5h0M1260.5 523.5h0M1260.5 491.5h0M1260.5 506.5h0M1261.5 565.5h0M1261.5 553.5h0M1261.5 521.5h0M1261.5 557.5h0M1261.5 516.5h0M1261.5 511.5h0M1261.5 529.5h0M1261.5 533.5h0M1262.5 540.5h0M1262.5 561.5h0M1262.5 525.5h0M1262.5 502.5h0M1262.5 495.5h0M1262.5 510.5h0M1263.5 511.5h0M1263.5 521.5h0M1263.5 517.5h0M1263.5 528.5h0M1263.5 508.5h0M1263.5 515.5h0M1264.5 498.5h0M1264.5 512.5h0M1264.5 510.5h0M1264.5 555.5h0M1264.5 562.5h0M1264.5 552.5h0M1264.5 541.5h0M1264.5 567.5h0M1265.5 540.5h0M1265.5 526.5h0M1265.5 534.5h0M1265.5 542.5h0M1265.5 547.5h0M1265.5 539.5h0M1265.5 525.5h0M1265.5 517.5h0M1265.5 531.5h0M1266.5 534.5h0M1266.5 509.5h0M1266.5 517.5h0M1267.5 527.5h0M1267.5 518.5h0M1267.5 524.5h0M1267.5 513.5h0M1267.5 532.5h0M1268.5 536.5h0M1268.5 531.5h0M1268.5 520.5h0M1268.5 537.5h0M1268.5 560.5h0M1268.5 498.5h0M1268.5 546.5h0M1269.5 516.5h0M1269.5 501.5h0M1269.5 573.5h0M1269.5 497.5h0M1269.5 569.5h0M1270.5 514.5h0M1270.5 543.5h0M1270.5 559.5h0M1270.5 540.5h0M1270.5 527.5h0M1270.5 491.5h0M1270.5 528.5h0M1270.5 511.5h0M1270.5 530.5h0M1271.5 513.5h0M1271.5 502.5h0M1271.5 516.5h0M1271.5 512.5h0M1271.5 518.5h0M1272.5 507.5h0M1272.5 508.5h0M1272.5 531.5h0M1272.5 535.5h0M1272.5 513.5h0M1272.5 525.5h0M1272.5 518.5h0M1273.5 503.5h0M1273.5 496.5h0M1273.5 519.5h0M1273.5 542.5h0M1273.5 535.5h0M1273.5 530.5h0M1273.5 529.5h0M1273.5 533.5h0M1274.5 540.5h0M1274.5 511.5h0M1274.5 503.5h0M1274.5 517.5h0M1274.5 515.5h0M1275.5 503.5h0M1275.5 544.5h0M1275.5 546.5h0M1275.5 529.5h0M1275.5 541.5h0M1275.5 500.5h0M1276.5 547.5h0M1276.5 529.5h0M1276.5 490.5h0M1276.5 519.5h0M1276.5 527.5h0M1276.5 554.5h0M1276.5 520.5h0M1277.5 542.5h0M1277.5 543.5h0M1277.5 500.5h0M1277.5 499.5h0M1277.5 545.5h0M1277.5 495.5h0M1278.5 509.5h0M1278.5 483.5h0M1278.5 524.5h0M1278.5 515.5h0M1278.5 481.5h0M1278.5 491.5h0M1278.5 486.5h0M1278.5 488.5h0M1279.5 485.5h0M1279.5 501.5h0M1279.5 511.5h0M1279.5 517.5h0M1279.5 541.5h0M1280.5 541.5h0M1280.5 564.5h0M1280.5 563.5h0M1280.5 525.5h0M1280.5 527.5h0M1280.5 538.5h0M1281.5 540.5h0M1281.5 550.5h0M1281.5 548.5h0M1281.5 539.5h0M1281.5 530.5h0M1282.5 533.5h0M1282.5 540.5h0M1282.5 523.5h0M1282.5 522.5h0M1282.5 507.5h0M1282.5 548.5h0M1282.5 539.5h0M1283.5 549.5h0M1283.5 547.5h0M1283.5 550.5h0M1283.5 536.5h0M1283.5 538.5h0M1283.5 518.5h0M1283.5 498.5h0M1284.5 537.5h0M1284.5 495.5h0M1284.5 538.5h0M1284.5 528.5h0M1284.5 541.5h0M1285.5 524.5h0M1285.5 541.5h0M1285.5 522.5h0M1285.5 550.5h0M1285.5 546.5h0M1285.5 545.5h0M1285.5 557.5h0M1285.5 558.5h0M1286.5 526.5h0M1286.5 560.5h0M1286.5 549.5h0M1286.5 517.5h0M1286.5 548.5h0M1286.5 533.5h0M1286.5 506.5h0M1286.5 522.5h0M1287.5 549.5h0M1287.5 533.5h0M1287.5 494.5h0M1287.5 499.5h0M1287.5 506.5h0M1287.5 516.5h0M1287.5 532.5h0M1288.5 544.5h0M1288.5 511.5h0M1288.5 527.5h0M1288.5 519.5h0M1288.5 515.5h0M1288.5 514.5h0M1289.5 532.5h0M1289.5 531.5h0M1289.5 515.5h0M1289.5 504.5h0M1289.5 513.5h0M1289.5 522.5h0M1289.5 547.5h0M1290.5 575.5h0M1290.5 506.5h0M1290.5 525.5h0M1290.5 530.5h0M1290.5 545.5h0M1290.5 552.5h0M1291.5 568.5h0M1291.5 551.5h0M1291.5 552.5h0M1291.5 547.5h0M1291.5 525.5h0M1291.5 520.5h0M1292.5 529.5h0M1292.5 534.5h0M1292.5 514.5h0M1292.5 531.5h0M1292.5 539.5h0M1292.5 540.5h0M1292.5 543.5h0M1292.5 533.5h0M1293.5 525.5h0M1293.5 527.5h0M1293.5 533.5h0M1293.5 547.5h0M1293.5 521.5h0M1294.5 519.5h0M1294.5 536.5h0M1294.5 531.5h0M1294.5 541.5h0M1294.5 540.5h0M1294.5 547.5h0M1295.5 513.5h0M1295.5 531.5h0M1295.5 530.5h0M1295.5 550.5h0M1295.5 581.5h0M1295.5 528.5h0M1295.5 576.5h0M1295.5 551.5h0M1296.5 497.5h0M1296.5 523.5h0M1296.5 535.5h0M1296.5 515.5h0M1296.5 511.5h0M1296.5 507.5h0M1296.5 529.5h0M1297.5 502.5h0M1297.5 500.5h0M1297.5 521.5h0M1297.5 518.5h0M1297.5 544.5h0M1297.5 541.5h0M1298.5 542.5h0M1298.5 562.5h0M1298.5 531.5h0M1298.5 529.5h0M1298.5 519.5h0M1299.5 531.5h0M1299.5 528.5h0M1299.5 543.5h0M1299.5 529.5h0M1299.5 542.5h0M1299.5 547.5h0M1299.5 540.5h0M1300.5 528.5h0M1300.5 533.5h0M1300.5 555.5h0M1300.5 550.5h0M1300.5 566.5h0M1300.5 559.5h0M1300.5 561.5h0M1301.5 547.5h0M1301.5 555.5h0M1301.5 539.5h0M1301.5 538.5h0M1301.5 545.5h0M1301.5 524.5h0M1301.5 536.5h0M1301.5 543.5h0M1302.5 542.5h0M1302.5 545.5h0M1302.5 530.5h0M1302.5 527.5h0M1302.5 553.5h0M1302.5 525.5h0" stroke="#000" stroke-width="3.8" stroke-linecap="round" fill="none"/><path d="M170.5 440.5h0M172.5 444.5h0M173.5 448.5h0M201.5 606.5h0M208.5 590.5h0M209.5 584.5h0M219.5 584.5h0M230.5 453.5h0M237.5 612.5h0M239.5 449.5h0M319.5 450.5h0M323.5 430.5h0M323.5 447.5h0M323.5 435.5h0M326.5 594.5h0M347.5 444.5h0M380.5 444.5h0M382.5 442.5h0M401.5 612.5h0M407.5 451.5h0M415.5 447.5h0M431.5 448.5h0M435.5 583.5h0M461.5 584.5h0M464.5 443.5h0M468.5 445.5h0M501.5 635.5h0M534.5 449.5h0M545.5 622.5h0M548.5 442.5h0M557.5 451.5h0M568.5 581.5h0M580.5 585.5h0M588.5 609.5h0M615.5 444.5h0M617.5 440.5h0M618.5 434.5h0M629.5 586.5h0M647.5 649.5h0M659.5 452.5h0M694.5 596.5h0M728.5 631.5h0M734.5 448.5h0M746.5 585.5h0M746.5 590.5h0M756.5 584.5h0M756.5 637.5h0M786.5 443.5h0M821.5 584.5h0M824.5 420.5h0M824.5 444.5h0M848.5 451.5h0M884.5 437.5h0M896.5 433.5h0M896.5 458.5h0M925.5 471.5h0M967.5 604.5h0M975.5 606.5h0M1052.5 467.5h0M1062.5 605.5h0M1069.5 598.5h0M1095.5 618.5h0M1103.5 599.5h0M1132.5 467.5h0M1151.5 604.5h0M1156.5 598.5h0M1178.5 458.5h0M1216.5 469.5h0M1223.5 472.5h0M1290.5 643.5h0M1300.5 590.5h0" stroke="#ffa500" stroke-width="3.8" stroke-linecap="round" fill="none"/><path d="M417.7 660.6h5.6l-2.8 5zM459.7 660.6h5.6l-2.8 5zM505.7 660.6h5.6l-2.8 5zM581.7 660.6h5.6l-2.8 5zM931.7 660.6h5.6l-2.8 5zM1055.7 660.6h5.6l-2.8 5z" fill="#ffa500"/><rect x="105.5" y="499" width="1255.5" height="48.4" fill="rgba(255,0,0,0.1)" stroke="rgba(255,0,0,0.1)" stroke-width="1"/><rect x="162.3" y="493.35" width="730.63" height="50.3" fill="rgba(255,165,0,0.1)" stroke="rgba(255,165,0,0.1)" stroke-width="1"/><rect x="892.93" y="510.7" width="314.17" height="46.8" fill="rgba(255,165,0,0.1)" stroke="rgba(255,165,0,0.1)" stroke-width="1"/><rect x="1207.1" y="509.9" width="95.82" height="39.4" fill="rgba(255,165,0,0.1)" stroke="rgba(255,165,0,0.1)" stroke-width="1"/><path d="M162.3 518.5H892.93" stroke="#ffa500" stroke-width="2.78" fill="none"/><path d="M892.93 534.1H1207.1" stroke="#ffa500" stroke-width="2.78" fill="none"/><path d="M1207.1 529.6H1302.93" stroke="#ffa500" stroke-width="2.78" fill="none"/><path d="M105.5 522.9H1361" stroke="#f00" stroke-width="2.08" fill="none"/><path d="M162.3 666V380.5" stroke="#800080" stroke-width="2.08" stroke-dasharray="2.083 3.438" fill="none"/><path d="M892.93 666V380.5" stroke="#800080" stroke-width="2.08" stroke-dasharray="2.083 3.438" fill="none"/><path d="M1207.05 666V380.5" stroke="#800080" stroke-width="2.08" stroke-dasharray="2.083 3.438" fill="none"/><path d="M1302.93 666V380.5" stroke="#800080" stroke-width="2.08" stroke-dasharray="2.083 3.438" fill="none"/><text x="527.62" y="656.9" font-size="13.89" text-anchor="middle" textLength="44.19" lengthAdjust="spacingAndGlyphs">10392</text><text x="1049.96" y="637" font-size="13.89" text-anchor="middle" textLength="44.19" lengthAdjust="spacingAndGlyphs">10259</text><text x="1255.02" y="617" font-size="13.89" text-anchor="middle" textLength="44.19" lengthAdjust="spacingAndGlyphs">52537</text>
</g>
<g clip-path="url(#c3)">
<path d="M105.5 758.5H1485.5M105.5 791.5H1485.5M105.5 823.5H1485.5M105.5 856.5H1485.5M105.5 889.5H1485.5M105.5 921.5H1485.5" stroke="#b0b0b0" stroke-width="0.8" stroke-dasharray="1.11 1.83" fill="none"/><path d="M508 856.5h0M584.4 856.5h0M1134.5 856.5h0M508 889.5h0M584.4 889.5h0M1134.5 889.5h0M1285.5 889.5h0M1284.5 791.5h0M1285.5 791.5h0M1286.5 791.5h0M1287.5 791.5h0M1288.5 791.5h0M1289.5 791.5h0M1290.5 791.5h0" stroke="#000" stroke-width="2.6" stroke-linecap="round" fill="none"/><path d="M162.3 954V725.5" stroke="#800080" stroke-width="2.08" stroke-dasharray="2.083 3.438" fill="none"/><path d="M892.93 954V725.5" stroke="#800080" stroke-width="2.08" stroke-dasharray="2.083 3.438" fill="none"/><path d="M1207.05 954V725.5" stroke="#800080" stroke-width="2.08" stroke-dasharray="2.083 3.438" fill="none"/><path d="M1302.93 954V725.5" stroke="#800080" stroke-width="2.08" stroke-dasharray="2.083 3.438" fill="none"/>
</g>
<g clip-path="url(#c4)">
<path d="M105.5 1009.5H1485.5M105.5 983.5H1485.5M105.5 957.5H1485.5" stroke="#b0b0b0" stroke-width="0.8" stroke-dasharray="1.11 1.83" fill="none"/><path d="M162.5 1008.5h0M163.5 1007.5h0M163.5 1009.5h0M163.5 1008.5h0M164.5 1007.5h0M164.5 1008.5h0M165.5 1008.5h0M165.5 1009.5h0M165.5 1007.5h0M166.5 1007.5h0M166.5 1008.5h0M167.5 1008.5h0M167.5 1007.5h0M168.5 1008.5h0M168.5 1007.5h0M169.5 1007.5h0M169.5 1008.5h0M169.5 1009.5h0M170.5 1008.5h0M170.5 1007.5h0M170.5 1009.5h0M171.5 1008.5h0M171.5 1009.5h0M171.5 1007.5h0M172.5 1009.5h0M172.5 1007.5h0M172.5 1008.5h0M173.5 1007.5h0M173.5 1009.5h0M173.5 1008.5h0M174.5 1008.5h0M174.5 1007.5h0M174.5 1009.5h0M175.5 1007.5h0M175.5 1008.5h0M175.5 1009.5h0M176.5 1008.5h0M176.5 1007.5h0M176.5 1006.5h0M177.5 1008.5h0M177.5 1007.5h0M177.5 1009.5h0M178.5 1008.5h0M179.5 1009.5h0M179.5 1007.5h0M179.5 1008.5h0M180.5 1008.5h0M180.5 1007.5h0M180.5 1009.5h0M181.5 1009.5h0M181.5 1008.5h0M182.5 1008.5h0M182.5 1007.5h0M183.5 1008.5h0M183.5 1009.5h0M183.5 1007.5h0M184.5 1008.5h0M184.5 1007.5h0M184.5 1009.5h0M185.5 1007.5h0M185.5 1008.5h0M186.5 1008.5h0M186.5 1007.5h0M187.5 1009.5h0M187.5 1007.5h0M187.5 1008.5h0M188.5 1008.5h0M188.5 1007.5h0M188.5 1009.5h0M189.5 1009.5h0M189.5 1008.5h0M190.5 1008.5h0M190.5 1009.5h0M191.5 1008.5h0M191.5 1009.5h0M191.5 1007.5h0M192.5 1008.5h0M192.5 1009.5h0M193.5 1008.5h0M193.5 1007.5h0M193.5 1009.5h0M194.5 1008.5h0M194.5 1007.5h0M195.5 1008.5h0M195.5 1007.5h0M195.5 1009.5h0M196.5 1007.5h0M196.5 1008.5h0M197.5 1008.5h0M197.5 1007.5h0M198.5 1008.5h0M198.5 1009.5h0M199.5 1008.5h0M199.5 1007.5h0M199.5 1009.5h0M200.5 1008.5h0M200.5 1007.5h0M200.5 1009.5h0M201.5 1008.5h0M201.5 1007.5h0M201.5 1009.5h0M202.5 1008.5h0M202.5 1007.5h0M203.5 1008.5h0M203.5 1007.5h0M203.5 1006.5h0M204.5 1008.5h0M204.5 1009.5h0M204.5 1006.5h0M205.5 1008.5h0M205.5 1009.5h0M205.5 1007.5h0M206.5 1009.5h0M206.5 1007.5h0M206.5 1008.5h0M207.5 1008.5h0M207.5 1009.5h0M207.5 1007.5h0M208.5 1008.5h0M208.5 1007.5h0M208.5 1009.5h0M209.5 1007.5h0M209.5 1009.5h0M209.5 1008.5h0M210.5 1007.5h0M210.5 1009.5h0M210.5 1008.5h0M211.5 1008.5h0M211.5 1009.5h0M212.5 1008.5h0M212.5 1009.5h0M213.5 1006.5h0M213.5 1007.5h0M213.5 1008.5h0M214.5 1009.5h0M214.5 1008.5h0M215.5 1008.5h0M215.5 1007.5h0M215.5 1009.5h0M216.5 1008.5h0M216.5 1007.5h0M216.5 1009.5h0M217.5 1009.5h0M217.5 1008.5h0M217.5 1007.5h0M218.5 1008.5h0M218.5 1007.5h0M219.5 1009.5h0M219.5 1008.5h0M219.5 1007.5h0M220.5 1008.5h0M220.5 1009.5h0M221.5 1008.5h0M221.5 1007.5h0M222.5 1008.5h0M222.5 1007.5h0M223.5 1008.5h0M223.5 1009.5h0M223.5 1007.5h0M224.5 1008.5h0M224.5 1009.5h0M225.5 1009.5h0M225.5 1007.5h0M225.5 1008.5h0M226.5 1008.5h0M226.5 1007.5h0M226.5 1006.5h0M227.5 1008.5h0M227.5 1007.5h0M228.5 1008.5h0M228.5 1009.5h0M228.5 1007.5h0M229.5 1008.5h0M229.5 1009.5h0M230.5 1008.5h0M230.5 1007.5h0M231.5 1008.5h0M231.5 1007.5h0M231.5 1009.5h0M232.5 1008.5h0M232.5 1007.5h0M232.5 1009.5h0M233.5 1008.5h0M233.5 1009.5h0M233.5 1007.5h0M234.5 1008.5h0M235.5 1008.5h0M235.5 1009.5h0M236.5 1008.5h0M237.5 1007.5h0M237.5 1008.5h0M237.5 1009.5h0M238.5 1008.5h0M238.5 1007.5h0M239.5 1008.5h0M239.5 1007.5h0M240.5 1007.5h0M240.5 1008.5h0M241.5 1007.5h0M241.5 1008.5h0M241.5 1009.5h0M242.5 1006.5h0M242.5 1008.5h0M242.5 1009.5h0M242.5 1007.5h0M243.5 1008.5h0M243.5 1007.5h0M244.5 1007.5h0M244.5 1008.5h0M244.5 1006.5h0M245.5 1007.5h0M245.5 1008.5h0M245.5 1009.5h0M246.5 1009.5h0M246.5 1007.5h0M246.5 1008.5h0M247.5 1008.5h0M247.5 1007.5h0M247.5 1009.5h0M248.5 1008.5h0M248.5 1009.5h0M249.5 1008.5h0M249.5 1009.5h0M250.5 1008.5h0M250.5 1007.5h0M251.5 1008.5h0M251.5 1009.5h0M252.5 1008.5h0M252.5 1007.5h0M252.5 1006.5h0M253.5 1008.5h0M253.5 1007.5h0M253.5 1009.5h0M254.5 1008.5h0M254.5 1007.5h0M254.5 1006.5h0M255.5 1008.5h0M255.5 1007.5h0M255.5 1009.5h0M256.5 1008.5h0M256.5 1006.5h0M256.5 1007.5h0M257.5 1008.5h0M257.5 1007.5h0M257.5 1009.5h0M258.5 1008.5h0M258.5 1009.5h0M258.5 1007.5h0M259.5 1009.5h0M259.5 1007.5h0M259.5 1008.5h0M260.5 1008.5h0M260.5 1009.5h0M261.5 1008.5h0M261.5 1009.5h0M261.5 1007.5h0M262.5 1007.5h0M262.5 1008.5h0M262.5 1006.5h0M263.5 1008.5h0M263.5 1007.5h0M264.5 1007.5h0M264.5 1008.5h0M264.5 1009.5h0M265.5 1008.5h0M265.5 1007.5h0M266.5 1008.5h0M266.5 1009.5h0M267.5 1008.5h0M267.5 1006.5h0M267.5 1007.5h0M268.5 1008.5h0M268.5 1007.5h0M269.5 1007.5h0M269.5 1008.5h0M269.5 1009.5h0M270.5 1007.5h0M270.5 1009.5h0M270.5 1008.5h0M271.5 1008.5h0M271.5 1007.5h0M271.5 1009.5h0M272.5 1008.5h0M272.5 1009.5h0M272.5 1007.5h0M273.5 1008.5h0M273.5 1007.5h0M274.5 1008.5h0M274.5 1006.5h0M275.5 1008.5h0M275.5 1007.5h0M276.5 1008.5h0M276.5 1009.5h0M277.5 1009.5h0M277.5 1008.5h0M277.5 1007.5h0M278.5 1008.5h0M278.5 1009.5h0M278.5 1006.5h0M279.5 1008.5h0M279.5 1007.5h0M279.5 1009.5h0M280.5 1007.5h0M280.5 1008.5h0M280.5 1006.5h0M281.5 1008.5h0M281.5 1007.5h0M281.5 1009.5h0M282.5 1008.5h0M282.5 1007.5h0M283.5 1007.5h0M283.5 1006.5h0M283.5 1008.5h0M283.5 1009.5h0M284.5 1007.5h0M284.5 1008.5h0M284.5 1009.5h0M285.5 1008.5h0M285.5 1009.5h0M286.5 1008.5h0M286.5 1007.5h0M287.5 1008.5h0M287.5 1007.5h0M287.5 1009.5h0M287.5 1006.5h0M288.5 1008.5h0M288.5 1007.5h0M289.5 1009.5h0M289.5 1008.5h0M289.5 1007.5h0M290.5 1008.5h0M290.5 1007.5h0M290.5 1009.5h0M291.5 1007.5h0M291.5 1009.5h0M291.5 1008.5h0M292.5 1008.5h0M292.5 1009.5h0M292.5 1007.5h0M293.5 1008.5h0M293.5 1007.5h0M293.5 1009.5h0M294.5 1008.5h0M294.5 1009.5h0M294.5 1007.5h0M295.5 1008.5h0M295.5 1009.5h0M296.5 1008.5h0M296.5 1009.5h0M296.5 1007.5h0M297.5 1008.5h0M297.5 1007.5h0M298.5 1007.5h0M298.5 1008.5h0M298.5 1009.5h0M299.5 1007.5h0M299.5 1008.5h0M300.5 1008.5h0M300.5 1007.5h0M301.5 1008.5h0M302.5 1008.5h0M302.5 1007.5h0M302.5 1009.5h0M303.5 1008.5h0M303.5 1009.5h0M303.5 1006.5h0M303.5 1007.5h0M304.5 1007.5h0M304.5 1008.5h0M304.5 1009.5h0M305.5 1007.5h0M305.5 1008.5h0M305.5 1009.5h0M306.5 1008.5h0M306.5 1009.5h0M307.5 1007.5h0M307.5 1008.5h0M307.5 1006.5h0M308.5 1008.5h0M308.5 1007.5h0M309.5 1008.5h0M309.5 1009.5h0M310.5 1009.5h0M310.5 1007.5h0M310.5 1008.5h0M311.5 1007.5h0M311.5 1008.5h0M312.5 1008.5h0M312.5 1007.5h0M312.5 1009.5h0M313.5 1007.5h0M313.5 1009.5h0M313.5 1008.5h0M314.5 1008.5h0M315.5 1008.5h0M315.5 1007.5h0M316.5 1008.5h0M316.5 1007.5h0M316.5 1009.5h0M317.5 1008.5h0M317.5 1007.5h0M317.5 1009.5h0M318.5 1008.5h0M318.5 1007.5h0M319.5 1007.5h0M319.5 1008.5h0M320.5 1007.5h0M320.5 1006.5h0M320.5 1008.5h0M321.5 1008.5h0M321.5 1007.5h0M321.5 1009.5h0M322.5 1007.5h0M322.5 1008.5h0M322.5 1009.5h0M323.5 1009.5h0M323.5 1008.5h0M323.5 1007.5h0M324.5 1008.5h0M324.5 1009.5h0M325.5 1008.5h0M325.5 1007.5h0M326.5 1009.5h0M326.5 1008.5h0M326.5 1007.5h0M327.5 1008.5h0M327.5 1009.5h0M328.5 1009.5h0M328.5 1007.5h0M328.5 1008.5h0M329.5 1008.5h0M329.5 1009.5h0M329.5 1007.5h0M330.5 1008.5h0M331.5 1009.5h0M331.5 1008.5h0M331.5 1007.5h0M332.5 1009.5h0M332.5 1008.5h0M332.5 1007.5h0M333.5 1008.5h0M333.5 1009.5h0M333.5 1007.5h0M334.5 1008.5h0M334.5 1007.5h0M334.5 1009.5h0M335.5 1008.5h0M335.5 1009.5h0M336.5 1009.5h0M336.5 1007.5h0M336.5 1008.5h0M337.5 1008.5h0M338.5 1007.5h0M338.5 1008.5h0M339.5 1008.5h0M340.5 1007.5h0M340.5 1008.5h0M340.5 1009.5h0M341.5 1008.5h0M341.5 1007.5h0M341.5 1009.5h0M342.5 1008.5h0M342.5 1007.5h0M343.5 1007.5h0M343.5 1008.5h0M343.5 1009.5h0M344.5 1007.5h0M344.5 1008.5h0M344.5 1009.5h0M345.5 1007.5h0M345.5 1008.5h0M346.5 1009.5h0M346.5 1008.5h0M346.5 1007.5h0M347.5 1008.5h0M347.5 1007.5h0M347.5 1009.5h0M348.5 1008.5h0M348.5 1009.5h0M348.5 1007.5h0M349.5 1008.5h0M349.5 1009.5h0M349.5 1006.5h0M350.5 1008.5h0M350.5 1009.5h0M350.5 1007.5h0M351.5 1009.5h0M351.5 1008.5h0M351.5 1007.5h0M352.5 1008.5h0M352.5 1007.5h0M352.5 1009.5h0M353.5 1007.5h0M353.5 1008.5h0M354.5 1008.5h0M354.5 1009.5h0M354.5 1007.5h0M355.5 1006.5h0M355.5 1008.5h0M355.5 1007.5h0M356.5 1008.5h0M356.5 1009.5h0M356.5 1007.5h0M357.5 1008.5h0M357.5 1009.5h0M357.5 1007.5h0M358.5 1008.5h0M358.5 1007.5h0M359.5 1008.5h0M359.5 1007.5h0M360.5 1008.5h0M360.5 1009.5h0M360.5 1007.5h0M361.5 1008.5h0M361.5 1007.5h0M361.5 1009.5h0M362.5 1008.5h0M362.5 1007.5h0M363.5 1007.5h0M363.5 1008.5h0M363.5 1006.5h0M364.5 1008.5h0M364.5 1007.5h0M365.5 1008.5h0M365.5 1007.5h0M366.5 1008.5h0M366.5 1009.5h0M366.5 1007.5h0M367.5 1008.5h0M367.5 1007.5h0M367.5 1009.5h0M368.5 1008.5h0M368.5 1006.5h0M369.5 1008.5h0M369.5 1009.5h0M369.5 1007.5h0M370.5 1008.5h0M370.5 1007.5h0M370.5 1006.5h0M371.5 1007.5h0M371.5 1008.5h0M371.5 1009.5h0M372.5 1008.5h0M372.5 1009.5h0M372.5 1006.5h0M373.5 1008.5h0M373.5 1006.5h0M373.5 1009.5h0M373.5 1007.5h0M374.5 1008.5h0M374.5 1007.5h0M375.5 1007.5h0M375.5 1009.5h0M375.5 1008.5h0M376.5 1007.5h0M376.5 1009.5h0M376.5 1008.5h0M377.5 1008.5h0M377.5 1007.5h0M377.5 1009.5h0M378.5 1008.5h0M378.5 1009.5h0M378.5 1007.5h0M379.5 1008.5h0M379.5 1009.5h0M380.5 1008.5h0M380.5 1009.5h0M381.5 1008.5h0M381.5 1007.5h0M382.5 1007.5h0M382.5 1009.5h0M382.5 1008.5h0M383.5 1009.5h0M383.5 1008.5h0M384.5 1008.5h0M384.5 1007.5h0M385.5 1008.5h0M385.5 1007.5h0M385.5 1009.5h0M386.5 1008.5h0M387.5 1008.5h0M387.5 1007.5h0M388.5 1008.5h0M388.5 1009.5h0M389.5 1007.5h0M389.5 1008.5h0M389.5 1009.5h0M390.5 1008.5h0M390.5 1009.5h0M390.5 1007.5h0M391.5 1008.5h0M392.5 1008.5h0M392.5 1009.5h0M392.5 1007.5h0M393.5 1009.5h0M393.5 1008.5h0M393.5 1007.5h0M394.5 1008.5h0M394.5 1009.5h0M395.5 1009.5h0M395.5 1008.5h0M396.5 1008.5h0M396.5 1007.5h0M397.5 1008.5h0M397.5 1006.5h0M397.5 1007.5h0M397.5 1009.5h0M398.5 1008.5h0M398.5 1006.5h0M399.5 1008.5h0M399.5 1009.5h0M399.5 1007.5h0M400.5 1008.5h0M400.5 1007.5h0M401.5 1007.5h0M401.5 1008.5h0M402.5 1008.5h0M402.5 1007.5h0M403.5 1008.5h0M403.5 1007.5h0M403.5 1009.5h0M404.5 1007.5h0M404.5 1008.5h0M404.5 1009.5h0M405.5 1009.5h0M405.5 1008.5h0M406.5 1008.5h0M406.5 1007.5h0M406.5 1009.5h0M407.5 1008.5h0M407.5 1007.5h0M407.5 1006.5h0M408.5 1008.5h0M408.5 1007.5h0M408.5 1009.5h0M409.5 1008.5h0M409.5 1007.5h0M409.5 1009.5h0M410.5 1008.5h0M410.5 1007.5h0M410.5 1009.5h0M411.5 1008.5h0M411.5 1007.5h0M412.5 1009.5h0M412.5 1008.5h0M412.5 1007.5h0M413.5 1008.5h0M413.5 1007.5h0M413.5 1009.5h0M414.5 1008.5h0M414.5 1009.5h0M414.5 1007.5h0M415.5 1008.5h0M416.5 1008.5h0M416.5 1007.5h0M417.5 1008.5h0M417.5 1006.5h0M418.5 1008.5h0M418.5 1009.5h0M419.5 1008.5h0M419.5 1007.5h0M419.5 1009.5h0M420.5 1008.5h0M420.5 1007.5h0M421.5 1008.5h0M421.5 1007.5h0M421.5 1009.5h0M422.5 1008.5h0M422.5 1007.5h0M423.5 1009.5h0M423.5 1008.5h0M423.5 1007.5h0M424.5 1009.5h0M424.5 1008.5h0M424.5 1007.5h0M425.5 1008.5h0M425.5 1009.5h0M425.5 1007.5h0M426.5 1008.5h0M426.5 1007.5h0M426.5 1006.5h0M427.5 1009.5h0M427.5 1008.5h0M427.5 1007.5h0M428.5 1009.5h0M428.5 1008.5h0M428.5 1007.5h0M429.5 1009.5h0M429.5 1008.5h0M430.5 1006.5h0M430.5 1008.5h0M430.5 1007.5h0M431.5 1008.5h0M431.5 1007.5h0M432.5 1008.5h0M432.5 1009.5h0M432.5 1007.5h0M433.5 1008.5h0M433.5 1009.5h0M434.5 1008.5h0M434.5 1007.5h0M435.5 1008.5h0M435.5 1007.5h0M436.5 1008.5h0M437.5 1009.5h0M437.5 1007.5h0M437.5 1008.5h0M438.5 1008.5h0M438.5 1009.5h0M439.5 1008.5h0M440.5 1009.5h0M440.5 1008.5h0M440.5 1007.5h0M441.5 1008.5h0M441.5 1007.5h0M442.5 1007.5h0M442.5 1008.5h0M442.5 1009.5h0M443.5 1008.5h0M443.5 1007.5h0M443.5 1009.5h0M444.5 1008.5h0M444.5 1006.5h0M444.5 1007.5h0M445.5 1007.5h0M445.5 1008.5h0M445.5 1009.5h0M446.5 1009.5h0M446.5 1007.5h0M446.5 1008.5h0M447.5 1008.5h0M448.5 1008.5h0M448.5 1007.5h0M448.5 1006.5h0M449.5 1008.5h0M449.5 1009.5h0M449.5 1007.5h0M450.5 1007.5h0M450.5 1008.5h0M451.5 1008.5h0M451.5 1009.5h0M451.5 1007.5h0M452.5 1008.5h0M452.5 1009.5h0M452.5 1007.5h0M453.5 1008.5h0M453.5 1007.5h0M453.5 1009.5h0M454.5 1008.5h0M454.5 1007.5h0M454.5 1009.5h0M455.5 1007.5h0M455.5 1008.5h0M455.5 1009.5h0M456.5 1008.5h0M456.5 1007.5h0M457.5 1009.5h0M457.5 1008.5h0M457.5 1007.5h0M458.5 1008.5h0M458.5 1009.5h0M458.5 1007.5h0M459.5 1008.5h0M459.5 1007.5h0M460.5 1007.5h0M460.5 1009.5h0M460.5 1008.5h0M461.5 1008.5h0M461.5 1009.5h0M461.5 1007.5h0M462.5 1007.5h0M462.5 1009.5h0M462.5 1008.5h0M463.5 1008.5h0M463.5 1007.5h0M464.5 1008.5h0M464.5 1007.5h0M465.5 1008.5h0M465.5 1009.5h0M465.5 1007.5h0M466.5 1008.5h0M466.5 1007.5h0M466.5 1009.5h0M467.5 1007.5h0M467.5 1008.5h0M467.5 1006.5h0M467.5 1009.5h0M468.5 1007.5h0M468.5 1008.5h0M469.5 1008.5h0M469.5 1007.5h0M469.5 1009.5h0M470.5 1009.5h0M470.5 1008.5h0M471.5 1007.5h0M471.5 1009.5h0M471.5 1008.5h0M472.5 1008.5h0M472.5 1007.5h0M473.5 1007.5h0M473.5 1008.5h0M474.5 1007.5h0M474.5 1009.5h0M474.5 1008.5h0M475.5 1009.5h0M475.5 1008.5h0M476.5 1007.5h0M476.5 1008.5h0M477.5 1009.5h0M477.5 1008.5h0M477.5 1007.5h0M478.5 1008.5h0M478.5 1009.5h0M478.5 1007.5h0M479.5 1008.5h0M480.5 1008.5h0M481.5 1008.5h0M481.5 1009.5h0M482.5 1007.5h0M482.5 1008.5h0M483.5 1008.5h0M483.5 1007.5h0M484.5 1007.5h0M484.5 1008.5h0M485.5 1008.5h0M485.5 1007.5h0M485.5 1009.5h0M486.5 1007.5h0M486.5 1008.5h0M486.5 1006.5h0M486.5 1009.5h0M487.5 1008.5h0M487.5 1009.5h0M487.5 1007.5h0M488.5 1008.5h0M488.5 1007.5h0M489.5 1009.5h0M489.5 1008.5h0M489.5 1007.5h0M490.5 1008.5h0M491.5 1008.5h0M492.5 1008.5h0M492.5 1007.5h0M492.5 1009.5h0M493.5 1008.5h0M493.5 1009.5h0M494.5 1008.5h0M494.5 1007.5h0M494.5 1009.5h0M495.5 1008.5h0M495.5 1006.5h0M495.5 1007.5h0M496.5 1008.5h0M496.5 1009.5h0M496.5 1007.5h0M497.5 1008.5h0M497.5 1009.5h0M498.5 1008.5h0M498.5 1007.5h0M499.5 1007.5h0M499.5 1009.5h0M499.5 1008.5h0M500.5 1007.5h0M500.5 1008.5h0M500.5 1009.5h0M501.5 1009.5h0M501.5 1008.5h0M502.5 1008.5h0M502.5 1007.5h0M503.5 1008.5h0M504.5 1008.5h0M504.5 1007.5h0M504.5 1009.5h0M505.5 1008.5h0M505.5 1007.5h0M506.5 1007.5h0M506.5 1008.5h0M506.5 1009.5h0M507.5 1008.5h0M507.5 1007.5h0M507.5 1009.5h0M508.5 1008.5h0M508.5 1009.5h0M509.5 1008.5h0M509.5 1007.5h0M509.5 1009.5h0M510.5 1008.5h0M510.5 1009.5h0M511.5 1008.5h0M511.5 1009.5h0M512.5 1009.5h0M512.5 1008.5h0M512.5 1007.5h0M513.5 1008.5h0M513.5 1007.5h0M514.5 1008.5h0M514.5 1007.5h0M514.5 1009.5h0M515.5 1008.5h0M515.5 1009.5h0M516.5 1008.5h0M517.5 1009.5h0M517.5 1008.5h0M517.5 1007.5h0M518.5 1008.5h0M518.5 1007.5h0M519.5 1008.5h0M519.5 1009.5h0M520.5 1008.5h0M520.5 1009.5h0M520.5 1006.5h0M521.5 1008.5h0M521.5 1009.5h0M522.5 1007.5h0M522.5 1008.5h0M522.5 1009.5h0M523.5 1008.5h0M523.5 1007.5h0M524.5 1008.5h0M524.5 1007.5h0M525.5 1008.5h0M525.5 1007.5h0M525.5 1009.5h0M526.5 1007.5h0M526.5 1008.5h0M527.5 1009.5h0M527.5 1008.5h0M528.5 1008.5h0M528.5 1007.5h0M529.5 1007.5h0M529.5 1008.5h0M529.5 1009.5h0M530.5 1008.5h0M530.5 1009.5h0M531.5 1008.5h0M532.5 1008.5h0M532.5 1009.5h0M532.5 1006.5h0M532.5 1007.5h0M533.5 1008.5h0M533.5 1007.5h0M533.5 1009.5h0M534.5 1008.5h0M534.5 1007.5h0M534.5 1009.5h0M535.5 1008.5h0M535.5 1007.5h0M535.5 1009.5h0M536.5 1007.5h0M536.5 1006.5h0M536.5 1008.5h0M537.5 1008.5h0M537.5 1007.5h0M537.5 1006.5h0M538.5 1008.5h0M538.5 1007.5h0M538.5 1009.5h0M539.5 1008.5h0M539.5 1009.5h0M540.5 1007.5h0M540.5 1008.5h0M540.5 1009.5h0M541.5 1008.5h0M541.5 1007.5h0M541.5 1006.5h0M542.5 1007.5h0M542.5 1009.5h0M542.5 1008.5h0M543.5 1009.5h0M543.5 1008.5h0M543.5 1007.5h0M544.5 1008.5h0M544.5 1009.5h0M545.5 1008.5h0M545.5 1007.5h0M546.5 1008.5h0M546.5 1007.5h0M547.5 1008.5h0M547.5 1007.5h0M547.5 1009.5h0M548.5 1008.5h0M548.5 1009.5h0M549.5 1007.5h0M549.5 1009.5h0M549.5 1008.5h0M550.5 1009.5h0M550.5 1008.5h0M551.5 1008.5h0M551.5 1009.5h0M552.5 1008.5h0M552.5 1009.5h0M552.5 1006.5h0M553.5 1008.5h0M553.5 1007.5h0M554.5 1008.5h0M554.5 1009.5h0M554.5 1007.5h0M555.5 1008.5h0M555.5 1009.5h0M556.5 1007.5h0M556.5 1009.5h0M556.5 1008.5h0M557.5 1008.5h0M558.5 1008.5h0M558.5 1007.5h0M559.5 1008.5h0M559.5 1009.5h0M559.5 1007.5h0M560.5 1008.5h0M560.5 1009.5h0M561.5 1007.5h0M561.5 1008.5h0M562.5 1008.5h0M562.5 1009.5h0M562.5 1007.5h0M563.5 1008.5h0M563.5 1009.5h0M564.5 1008.5h0M564.5 1007.5h0M565.5 1008.5h0M565.5 1009.5h0M565.5 1007.5h0M566.5 1008.5h0M566.5 1009.5h0M566.5 1006.5h0M567.5 1007.5h0M567.5 1008.5h0M567.5 1009.5h0M568.5 1008.5h0M568.5 1009.5h0M569.5 1008.5h0M569.5 1007.5h0M569.5 1006.5h0M569.5 1009.5h0M570.5 1008.5h0M570.5 1007.5h0M570.5 1009.5h0M571.5 1008.5h0M571.5 1009.5h0M571.5 1007.5h0M572.5 1008.5h0M572.5 1007.5h0M572.5 1009.5h0M573.5 1008.5h0M573.5 1007.5h0M574.5 1009.5h0M574.5 1007.5h0M574.5 1008.5h0M575.5 1008.5h0M575.5 1007.5h0M575.5 1009.5h0M576.5 1007.5h0M576.5 1006.5h0M576.5 1008.5h0M576.5 1009.5h0M577.5 1008.5h0M577.5 1007.5h0M578.5 1008.5h0M578.5 1009.5h0M578.5 1007.5h0M579.5 1008.5h0M579.5 1007.5h0M580.5 1008.5h0M580.5 1009.5h0M581.5 1008.5h0M581.5 1007.5h0M581.5 1009.5h0M581.5 1006.5h0M582.5 1008.5h0M582.5 1007.5h0M583.5 1007.5h0M583.5 1008.5h0M584.5 1008.5h0M585.5 1007.5h0M585.5 1009.5h0M585.5 1008.5h0M586.5 1007.5h0M586.5 1008.5h0M587.5 1008.5h0M587.5 1009.5h0M587.5 1007.5h0M588.5 1008.5h0M588.5 1009.5h0M588.5 1007.5h0M589.5 1008.5h0M589.5 1009.5h0M589.5 1007.5h0M590.5 1008.5h0M590.5 1007.5h0M591.5 1007.5h0M591.5 1008.5h0M591.5 1009.5h0M592.5 1008.5h0M592.5 1006.5h0M592.5 1009.5h0M593.5 1009.5h0M593.5 1008.5h0M593.5 1007.5h0M594.5 1008.5h0M594.5 1006.5h0M594.5 1009.5h0M595.5 1008.5h0M595.5 1007.5h0M595.5 1009.5h0M596.5 1008.5h0M596.5 1007.5h0M597.5 1008.5h0M598.5 1008.5h0M598.5 1009.5h0M598.5 1007.5h0M599.5 1007.5h0M599.5 1008.5h0M599.5 1009.5h0M600.5 1008.5h0M600.5 1009.5h0M600.5 1007.5h0M601.5 1008.5h0M601.5 1007.5h0M602.5 1009.5h0M602.5 1008.5h0M602.5 1007.5h0M603.5 1008.5h0M603.5 1007.5h0M604.5 1008.5h0M604.5 1009.5h0M604.5 1007.5h0M605.5 1007.5h0M605.5 1008.5h0M605.5 1006.5h0M606.5 1008.5h0M606.5 1009.5h0M606.5 1007.5h0M606.5 1006.5h0M607.5 1007.5h0M607.5 1006.5h0M607.5 1008.5h0M607.5 1009.5h0M608.5 1008.5h0M608.5 1007.5h0M609.5 1009.5h0M609.5 1007.5h0M609.5 1008.5h0M610.5 1007.5h0M610.5 1008.5h0M611.5 1008.5h0M612.5 1008.5h0M612.5 1007.5h0M613.5 1008.5h0M613.5 1007.5h0M613.5 1009.5h0M614.5 1007.5h0M614.5 1008.5h0M614.5 1009.5h0M615.5 1008.5h0M615.5 1007.5h0M616.5 1009.5h0M616.5 1007.5h0M616.5 1008.5h0M617.5 1008.5h0M617.5 1007.5h0M618.5 1008.5h0M618.5 1009.5h0M618.5 1007.5h0M619.5 1008.5h0M619.5 1007.5h0M619.5 1009.5h0M620.5 1008.5h0M620.5 1007.5h0M620.5 1009.5h0M621.5 1008.5h0M621.5 1009.5h0M621.5 1007.5h0M622.5 1009.5h0M622.5 1008.5h0M622.5 1007.5h0M623.5 1008.5h0M623.5 1007.5h0M624.5 1009.5h0M624.5 1008.5h0M625.5 1008.5h0M625.5 1007.5h0M625.5 1009.5h0M626.5 1008.5h0M626.5 1009.5h0M626.5 1007.5h0M627.5 1009.5h0M627.5 1008.5h0M627.5 1006.5h0M627.5 1007.5h0M628.5 1008.5h0M628.5 1009.5h0M628.5 1007.5h0M629.5 1008.5h0M629.5 1007.5h0M629.5 1009.5h0M630.5 1008.5h0M630.5 1009.5h0M630.5 1007.5h0M631.5 1008.5h0M631.5 1007.5h0M632.5 1008.5h0M633.5 1007.5h0M633.5 1009.5h0M633.5 1008.5h0M634.5 1008.5h0M634.5 1007.5h0M635.5 1008.5h0M635.5 1007.5h0M636.5 1008.5h0M636.5 1009.5h0M637.5 1008.5h0M637.5 1009.5h0M638.5 1008.5h0M638.5 1009.5h0M639.5 1008.5h0M639.5 1007.5h0M639.5 1009.5h0M640.5 1008.5h0M640.5 1006.5h0M640.5 1007.5h0M641.5 1008.5h0M642.5 1008.5h0M642.5 1009.5h0M643.5 1007.5h0M643.5 1008.5h0M644.5 1007.5h0M644.5 1008.5h0M644.5 1009.5h0M645.5 1008.5h0M645.5 1007.5h0M646.5 1008.5h0M646.5 1009.5h0M646.5 1007.5h0M647.5 1008.5h0M647.5 1006.5h0M647.5 1007.5h0M648.5 1008.5h0M648.5 1007.5h0M648.5 1009.5h0M649.5 1008.5h0M649.5 1007.5h0M649.5 1009.5h0M650.5 1008.5h0M650.5 1009.5h0M650.5 1007.5h0M651.5 1008.5h0M651.5 1007.5h0M652.5 1008.5h0M652.5 1007.5h0M652.5 1009.5h0M653.5 1009.5h0M653.5 1008.5h0M653.5 1006.5h0M653.5 1007.5h0M654.5 1008.5h0M654.5 1007.5h0M655.5 1008.5h0M655.5 1007.5h0M656.5 1008.5h0M656.5 1009.5h0M656.5 1007.5h0M657.5 1008.5h0M657.5 1009.5h0M657.5 1007.5h0M658.5 1009.5h0M658.5 1008.5h0M658.5 1007.5h0M659.5 1009.5h0M659.5 1007.5h0M659.5 1008.5h0M660.5 1008.5h0M660.5 1006.5h0M660.5 1007.5h0M661.5 1007.5h0M661.5 1008.5h0M661.5 1009.5h0M662.5 1008.5h0M662.5 1007.5h0M663.5 1008.5h0M663.5 1007.5h0M664.5 1007.5h0M664.5 1008.5h0M664.5 1009.5h0M665.5 1008.5h0M665.5 1007.5h0M665.5 1009.5h0M666.5 1008.5h0M666.5 1007.5h0M666.5 1009.5h0M667.5 1008.5h0M668.5 1008.5h0M669.5 1006.5h0M669.5 1008.5h0M669.5 1007.5h0M670.5 1008.5h0M670.5 1009.5h0M671.5 1008.5h0M671.5 1007.5h0M671.5 1009.5h0M672.5 1008.5h0M672.5 1007.5h0M673.5 1008.5h0M673.5 1007.5h0M673.5 1009.5h0M674.5 1008.5h0M674.5 1009.5h0M674.5 1007.5h0M675.5 1007.5h0M675.5 1006.5h0M675.5 1008.5h0M676.5 1008.5h0M676.5 1007.5h0M676.5 1009.5h0M677.5 1008.5h0M677.5 1007.5h0M678.5 1008.5h0M678.5 1009.5h0M678.5 1007.5h0M679.5 1008.5h0M679.5 1007.5h0M680.5 1008.5h0M680.5 1007.5h0M681.5 1009.5h0M681.5 1007.5h0M681.5 1008.5h0M682.5 1008.5h0M682.5 1007.5h0M682.5 1009.5h0M683.5 1008.5h0M683.5 1007.5h0M683.5 1006.5h0M684.5 1009.5h0M684.5 1008.5h0M684.5 1007.5h0M685.5 1008.5h0M685.5 1009.5h0M685.5 1007.5h0M686.5 1008.5h0M686.5 1009.5h0M686.5 1007.5h0M687.5 1008.5h0M687.5 1009.5h0M687.5 1007.5h0M688.5 1007.5h0M688.5 1008.5h0M688.5 1006.5h0M688.5 1009.5h0M689.5 1008.5h0M689.5 1006.5h0M689.5 1007.5h0M690.5 1008.5h0M690.5 1006.5h0M691.5 1008.5h0M691.5 1007.5h0M692.5 1008.5h0M692.5 1007.5h0M693.5 1008.5h0M693.5 1007.5h0M693.5 1009.5h0M694.5 1007.5h0M694.5 1008.5h0M694.5 1009.5h0M695.5 1008.5h0M695.5 1009.5h0M696.5 1008.5h0M696.5 1007.5h0M697.5 1008.5h0M697.5 1007.5h0M698.5 1008.5h0M698.5 1007.5h0M699.5 1008.5h0M699.5 1007.5h0M699.5 1009.5h0M700.5 1008.5h0M700.5 1007.5h0M700.5 1009.5h0M701.5 1008.5h0M701.5 1007.5h0M702.5 1008.5h0M702.5 1007.5h0M703.5 1008.5h0M703.5 1007.5h0M704.5 1008.5h0M704.5 1009.5h0M704.5 1007.5h0M705.5 1008.5h0M705.5 1007.5h0M705.5 1009.5h0M706.5 1006.5h0M706.5 1008.5h0M706.5 1007.5h0M707.5 1007.5h0M707.5 1008.5h0M707.5 1009.5h0M708.5 1008.5h0M708.5 1007.5h0M709.5 1007.5h0M709.5 1008.5h0M709.5 1009.5h0M710.5 1008.5h0M710.5 1007.5h0M711.5 1008.5h0M711.5 1007.5h0M711.5 1006.5h0M712.5 1008.5h0M712.5 1009.5h0M713.5 1007.5h0M713.5 1008.5h0M714.5 1008.5h0M714.5 1007.5h0M714.5 1009.5h0M715.5 1008.5h0M715.5 1007.5h0M715.5 1009.5h0M716.5 1008.5h0M716.5 1007.5h0M717.5 1008.5h0M717.5 1009.5h0M718.5 1009.5h0M718.5 1008.5h0M719.5 1009.5h0M719.5 1008.5h0M719.5 1007.5h0M720.5 1008.5h0M720.5 1007.5h0M721.5 1008.5h0M721.5 1007.5h0M722.5 1008.5h0M722.5 1007.5h0M722.5 1009.5h0M723.5 1008.5h0M723.5 1009.5h0M724.5 1008.5h0M724.5 1007.5h0M724.5 1006.5h0M725.5 1007.5h0M725.5 1008.5h0M726.5 1008.5h0M726.5 1007.5h0M726.5 1009.5h0M727.5 1008.5h0M727.5 1007.5h0M728.5 1008.5h0M728.5 1006.5h0M728.5 1009.5h0M728.5 1007.5h0M729.5 1008.5h0M729.5 1009.5h0M730.5 1008.5h0M730.5 1009.5h0M731.5 1008.5h0M732.5 1008.5h0M732.5 1009.5h0M733.5 1007.5h0M733.5 1009.5h0M733.5 1008.5h0M734.5 1009.5h0M734.5 1008.5h0M734.5 1007.5h0M735.5 1009.5h0M735.5 1008.5h0M735.5 1007.5h0M736.5 1008.5h0M736.5 1009.5h0M736.5 1007.5h0M737.5 1007.5h0M737.5 1008.5h0M738.5 1008.5h0M738.5 1007.5h0M739.5 1008.5h0M740.5 1007.5h0M740.5 1008.5h0M741.5 1007.5h0M741.5 1008.5h0M741.5 1009.5h0M742.5 1008.5h0M742.5 1009.5h0M742.5 1007.5h0M743.5 1007.5h0M743.5 1008.5h0M743.5 1009.5h0M744.5 1008.5h0M744.5 1007.5h0M744.5 1009.5h0M745.5 1008.5h0M745.5 1007.5h0M746.5 1007.5h0M746.5 1009.5h0M746.5 1008.5h0M747.5 1007.5h0M747.5 1008.5h0M748.5 1009.5h0M748.5 1008.5h0M748.5 1007.5h0M749.5 1008.5h0M749.5 1007.5h0M749.5 1009.5h0M750.5 1008.5h0M750.5 1009.5h0M751.5 1007.5h0M751.5 1008.5h0M751.5 1009.5h0M752.5 1008.5h0M752.5 1007.5h0M753.5 1009.5h0M753.5 1007.5h0M753.5 1008.5h0M754.5 1008.5h0M754.5 1007.5h0M754.5 1006.5h0M755.5 1008.5h0M755.5 1007.5h0M755.5 1009.5h0M756.5 1008.5h0M756.5 1007.5h0M757.5 1008.5h0M758.5 1008.5h0M758.5 1007.5h0M759.5 1009.5h0M759.5 1008.5h0M759.5 1007.5h0M760.5 1009.5h0M760.5 1008.5h0M761.5 1008.5h0M761.5 1009.5h0M761.5 1007.5h0M762.5 1008.5h0M762.5 1007.5h0M762.5 1009.5h0M763.5 1009.5h0M763.5 1007.5h0M763.5 1008.5h0M764.5 1009.5h0M764.5 1008.5h0M765.5 1007.5h0M765.5 1008.5h0M765.5 1009.5h0M765.5 1006.5h0M766.5 1008.5h0M766.5 1009.5h0M766.5 1007.5h0M767.5 1008.5h0M768.5 1008.5h0M768.5 1009.5h0M769.5 1007.5h0M769.5 1009.5h0M769.5 1008.5h0M770.5 1008.5h0M770.5 1007.5h0M771.5 1008.5h0M771.5 1007.5h0M771.5 1006.5h0M772.5 1008.5h0M773.5 1008.5h0M773.5 1007.5h0M773.5 1009.5h0M774.5 1007.5h0M774.5 1008.5h0M774.5 1009.5h0M775.5 1008.5h0M775.5 1007.5h0M776.5 1008.5h0M776.5 1007.5h0M777.5 1008.5h0M777.5 1007.5h0M777.5 1009.5h0M778.5 1008.5h0M778.5 1007.5h0M778.5 1009.5h0M779.5 1008.5h0M779.5 1006.5h0M779.5 1009.5h0M780.5 1007.5h0M780.5 1009.5h0M780.5 1008.5h0M781.5 1008.5h0M781.5 1009.5h0M781.5 1007.5h0M782.5 1008.5h0M782.5 1007.5h0M783.5 1007.5h0M783.5 1008.5h0M783.5 1009.5h0M784.5 1007.5h0M784.5 1008.5h0M785.5 1008.5h0M785.5 1007.5h0M785.5 1009.5h0M786.5 1008.5h0M786.5 1009.5h0M786.5 1007.5h0M787.5 1009.5h0M787.5 1008.5h0M787.5 1006.5h0M787.5 1007.5h0M788.5 1008.5h0M788.5 1009.5h0M788.5 1007.5h0M789.5 1007.5h0M789.5 1008.5h0M790.5 1008.5h0M790.5 1009.5h0M790.5 1007.5h0M791.5 1006.5h0M791.5 1008.5h0M791.5 1007.5h0M791.5 1009.5h0M792.5 1008.5h0M792.5 1009.5h0M793.5 1008.5h0M793.5 1007.5h0M794.5 1008.5h0M795.5 1008.5h0M796.5 1008.5h0M796.5 1007.5h0M796.5 1009.5h0M797.5 1007.5h0M797.5 1008.5h0M797.5 1009.5h0M798.5 1008.5h0M798.5 1006.5h0M799.5 1009.5h0M799.5 1008.5h0M799.5 1007.5h0M800.5 1008.5h0M800.5 1007.5h0M801.5 1008.5h0M801.5 1007.5h0M802.5 1006.5h0M802.5 1008.5h0M802.5 1007.5h0M802.5 1009.5h0M803.5 1008.5h0M803.5 1009.5h0M804.5 1007.5h0M804.5 1008.5h0M804.5 1009.5h0M805.5 1008.5h0M805.5 1009.5h0M805.5 1007.5h0M806.5 1008.5h0M806.5 1009.5h0M806.5 1007.5h0M807.5 1007.5h0M807.5 1008.5h0M807.5 1009.5h0M808.5 1008.5h0M808.5 1007.5h0M808.5 1009.5h0M809.5 1008.5h0M809.5 1007.5h0M809.5 1009.5h0M810.5 1009.5h0M810.5 1008.5h0M810.5 1007.5h0M811.5 1008.5h0M812.5 1008.5h0M812.5 1007.5h0M813.5 1008.5h0M813.5 1007.5h0M814.5 1008.5h0M814.5 1009.5h0M815.5 1008.5h0M815.5 1006.5h0M815.5 1009.5h0M816.5 1008.5h0M816.5 1009.5h0M816.5 1006.5h0M817.5 1008.5h0M818.5 1009.5h0M818.5 1008.5h0M818.5 1007.5h0M819.5 1008.5h0M819.5 1007.5h0M819.5 1009.5h0M820.5 1006.5h0M820.5 1009.5h0M820.5 1008.5h0M821.5 1008.5h0M821.5 1007.5h0M821.5 1009.5h0M822.5 1008.5h0M822.5 1007.5h0M823.5 1008.5h0M823.5 1009.5h0M823.5 1007.5h0M824.5 1008.5h0M824.5 1009.5h0M825.5 1008.5h0M825.5 1009.5h0M826.5 1008.5h0M826.5 1007.5h0M826.5 1009.5h0M827.5 1008.5h0M827.5 1007.5h0M828.5 1009.5h0M828.5 1007.5h0M828.5 1008.5h0M829.5 1009.5h0M829.5 1008.5h0M829.5 1006.5h0M830.5 1008.5h0M830.5 1007.5h0M831.5 1008.5h0M831.5 1009.5h0M831.5 1007.5h0M832.5 1008.5h0M832.5 1007.5h0M833.5 1008.5h0M834.5 1008.5h0M834.5 1007.5h0M834.5 1009.5h0M835.5 1007.5h0M835.5 1006.5h0M835.5 1008.5h0M836.5 1008.5h0M836.5 1009.5h0M837.5 1008.5h0M837.5 1007.5h0M837.5 1009.5h0M838.5 1008.5h0M838.5 1009.5h0M839.5 1008.5h0M839.5 1007.5h0M840.5 1008.5h0M840.5 1007.5h0M841.5 1008.5h0M841.5 1009.5h0M841.5 1007.5h0M842.5 1007.5h0M842.5 1009.5h0M842.5 1008.5h0M843.5 1008.5h0M843.5 1007.5h0M844.5 1006.5h0M844.5 1007.5h0M844.5 1008.5h0M845.5 1008.5h0M845.5 1007.5h0M845.5 1009.5h0M846.5 1008.5h0M847.5 1009.5h0M847.5 1008.5h0M847.5 1007.5h0M848.5 1008.5h0M848.5 1007.5h0M849.5 1008.5h0M849.5 1009.5h0M849.5 1007.5h0M850.5 1008.5h0M850.5 1007.5h0M850.5 1009.5h0M851.5 1007.5h0M851.5 1008.5h0M851.5 1009.5h0M852.5 1008.5h0M852.5 1009.5h0M853.5 1009.5h0M853.5 1008.5h0M853.5 1007.5h0M854.5 1007.5h0M854.5 1008.5h0M854.5 1009.5h0M855.5 1008.5h0M855.5 1009.5h0M855.5 1007.5h0M856.5 1008.5h0M856.5 1009.5h0M857.5 1008.5h0M858.5 1008.5h0M858.5 1007.5h0M859.5 1008.5h0M859.5 1007.5h0M860.5 1009.5h0M860.5 1008.5h0M861.5 1007.5h0M861.5 1006.5h0M861.5 1009.5h0M861.5 1008.5h0M862.5 1008.5h0M862.5 1007.5h0M862.5 1006.5h0M863.5 1008.5h0M863.5 1007.5h0M864.5 1008.5h0M864.5 1009.5h0M864.5 1007.5h0M865.5 1008.5h0M865.5 1007.5h0M866.5 1008.5h0M867.5 1008.5h0M867.5 1007.5h0M868.5 1008.5h0M868.5 1009.5h0M868.5 1007.5h0M869.5 1009.5h0M869.5 1008.5h0M870.5 1008.5h0M870.5 1009.5h0M871.5 1008.5h0M871.5 1007.5h0M872.5 1008.5h0M872.5 1009.5h0M873.5 1009.5h0M873.5 1008.5h0M874.5 1007.5h0M874.5 1008.5h0M875.5 1008.5h0M875.5 1007.5h0M875.5 1006.5h0M876.5 1008.5h0M876.5 1009.5h0M876.5 1007.5h0M877.5 1008.5h0M877.5 1007.5h0M877.5 1009.5h0M878.5 1008.5h0M878.5 1007.5h0M878.5 1009.5h0M879.5 1008.5h0M879.5 1007.5h0M880.5 1007.5h0M880.5 1008.5h0M880.5 1009.5h0M881.5 1008.5h0M881.5 1007.5h0M882.5 1008.5h0M882.5 1009.5h0M883.5 1008.5h0M883.5 1007.5h0M883.5 1009.5h0M884.5 1008.5h0M884.5 1009.5h0M884.5 1007.5h0M885.5 1008.5h0M885.5 1009.5h0M885.5 1007.5h0M886.5 1008.5h0M886.5 1007.5h0M887.5 1008.5h0M887.5 1006.5h0M887.5 1007.5h0M888.5 1007.5h0M888.5 1008.5h0M888.5 1009.5h0M889.5 1008.5h0M889.5 1007.5h0M890.5 1007.5h0M890.5 1009.5h0M890.5 1008.5h0M891.5 1007.5h0M891.5 1008.5h0M891.5 1009.5h0M892.5 1008.5h0M892.5 1009.5h0M892.5 1007.5h0M893.5 1008.5h0M893.5 1007.5h0M894.5 1008.5h0M894.5 1007.5h0M894.5 1009.5h0M895.5 1008.5h0M895.5 1009.5h0M896.5 1008.5h0M896.5 1007.5h0M896.5 1009.5h0M897.5 1008.5h0M897.5 1007.5h0M897.5 1006.5h0M898.5 1008.5h0M898.5 1007.5h0M899.5 1007.5h0M899.5 1008.5h0M900.5 1008.5h0M900.5 1009.5h0M900.5 1007.5h0M901.5 1007.5h0M901.5 1008.5h0M901.5 1009.5h0M902.5 1008.5h0M902.5 1006.5h0M902.5 1009.5h0M902.5 1007.5h0M903.5 1008.5h0M903.5 1007.5h0M903.5 1009.5h0M904.5 1008.5h0M904.5 1009.5h0M904.5 1007.5h0M905.5 1007.5h0M905.5 1008.5h0M905.5 1009.5h0M906.5 1008.5h0M906.5 1009.5h0M906.5 1007.5h0M907.5 1008.5h0M908.5 1006.5h0M908.5 1008.5h0M908.5 1007.5h0M909.5 1009.5h0M909.5 1007.5h0M909.5 1008.5h0M910.5 1007.5h0M910.5 1009.5h0M910.5 1008.5h0M911.5 1008.5h0M911.5 1009.5h0M912.5 1007.5h0M912.5 1008.5h0M912.5 1009.5h0M912.5 1006.5h0M913.5 1008.5h0M913.5 1009.5h0M913.5 1006.5h0M914.5 1008.5h0M914.5 1006.5h0M914.5 1007.5h0M915.5 1007.5h0M915.5 1008.5h0M916.5 1008.5h0M916.5 1007.5h0M917.5 1008.5h0M917.5 1006.5h0M917.5 1007.5h0M917.5 1009.5h0M918.5 1009.5h0M918.5 1008.5h0M919.5 1007.5h0M919.5 1008.5h0M920.5 1007.5h0M920.5 1006.5h0M920.5 1008.5h0M921.5 1008.5h0M921.5 1009.5h0M921.5 1007.5h0M922.5 1006.5h0M922.5 1009.5h0M922.5 1008.5h0M922.5 1007.5h0M923.5 1007.5h0M923.5 1008.5h0M923.5 1009.5h0M924.5 1009.5h0M924.5 1008.5h0M924.5 1007.5h0M925.5 1008.5h0M925.5 1007.5h0M926.5 1008.5h0M926.5 1009.5h0M926.5 1007.5h0M927.5 1008.5h0M927.5 1009.5h0M927.5 1007.5h0M928.5 1008.5h0M929.5 1007.5h0M929.5 1009.5h0M929.5 1008.5h0M930.5 1008.5h0M930.5 1007.5h0M930.5 1009.5h0M931.5 1007.5h0M931.5 1008.5h0M932.5 1009.5h0M932.5 1008.5h0M932.5 1007.5h0M933.5 1008.5h0M933.5 1007.5h0M934.5 1008.5h0M934.5 1007.5h0M934.5 1009.5h0M935.5 1007.5h0M935.5 1009.5h0M935.5 1008.5h0M936.5 1008.5h0M936.5 1009.5h0M937.5 1007.5h0M937.5 1008.5h0M937.5 1009.5h0M937.5 1006.5h0M938.5 1008.5h0M938.5 1009.5h0M938.5 1007.5h0M939.5 1009.5h0M939.5 1008.5h0M939.5 1007.5h0M940.5 1008.5h0M941.5 1008.5h0M941.5 1009.5h0M942.5 1008.5h0M942.5 1007.5h0M943.5 1008.5h0M943.5 1007.5h0M944.5 1008.5h0M944.5 1007.5h0M944.5 1009.5h0M945.5 1008.5h0M945.5 1009.5h0M945.5 1007.5h0M946.5 1008.5h0M946.5 1007.5h0M947.5 1009.5h0M947.5 1008.5h0M947.5 1007.5h0M948.5 1007.5h0M948.5 1008.5h0M949.5 1008.5h0M949.5 1009.5h0M949.5 1007.5h0M950.5 1007.5h0M950.5 1008.5h0M951.5 1008.5h0M951.5 1007.5h0M952.5 1008.5h0M952.5 1007.5h0M952.5 1009.5h0M953.5 1009.5h0M953.5 1008.5h0M953.5 1007.5h0M954.5 1006.5h0M954.5 1007.5h0M954.5 1008.5h0M954.5 1009.5h0M955.5 1008.5h0M956.5 1008.5h0M957.5 1008.5h0M957.5 1009.5h0M958.5 1008.5h0M958.5 1007.5h0M958.5 1009.5h0M959.5 1008.5h0M959.5 1007.5h0M960.5 1009.5h0M960.5 1007.5h0M960.5 1008.5h0M960.5 1006.5h0M961.5 1008.5h0M961.5 1009.5h0M961.5 1006.5h0M962.5 1008.5h0M962.5 1007.5h0M963.5 1007.5h0M963.5 1008.5h0M963.5 1009.5h0M964.5 1008.5h0M964.5 1009.5h0M964.5 1007.5h0M965.5 1007.5h0M965.5 1008.5h0M965.5 1009.5h0M966.5 1008.5h0M966.5 1007.5h0M967.5 1008.5h0M967.5 1007.5h0M968.5 1008.5h0M968.5 1007.5h0M968.5 1009.5h0M969.5 1008.5h0M969.5 1007.5h0M970.5 1007.5h0M970.5 1008.5h0M970.5 1009.5h0M971.5 1007.5h0M971.5 1008.5h0M971.5 1009.5h0M972.5 1009.5h0M972.5 1008.5h0M972.5 1007.5h0M973.5 1007.5h0M973.5 1008.5h0M974.5 1007.5h0M974.5 1008.5h0M974.5 1009.5h0M974.5 1006.5h0M975.5 1007.5h0M975.5 1009.5h0M975.5 1008.5h0M976.5 1009.5h0M976.5 1008.5h0M977.5 1008.5h0M977.5 1009.5h0M977.5 1007.5h0M978.5 1008.5h0M978.5 1009.5h0M979.5 1009.5h0M979.5 1008.5h0M979.5 1007.5h0M980.5 1008.5h0M980.5 1007.5h0M981.5 1008.5h0M981.5 1007.5h0M982.5 1008.5h0M982.5 1009.5h0M982.5 1007.5h0M983.5 1008.5h0M983.5 1009.5h0M984.5 1008.5h0M984.5 1009.5h0M984.5 1007.5h0M985.5 1008.5h0M985.5 1009.5h0M986.5 1007.5h0M986.5 1009.5h0M986.5 1008.5h0M987.5 1008.5h0M987.5 1007.5h0M987.5 1006.5h0M988.5 1008.5h0M988.5 1007.5h0M988.5 1009.5h0M989.5 1007.5h0M989.5 1008.5h0M990.5 1008.5h0M990.5 1007.5h0M990.5 1009.5h0M991.5 1007.5h0M991.5 1008.5h0M991.5 1009.5h0M992.5 1007.5h0M992.5 1008.5h0M993.5 1008.5h0M993.5 1009.5h0M993.5 1007.5h0M994.5 1008.5h0M994.5 1007.5h0M995.5 1008.5h0M995.5 1009.5h0M996.5 1008.5h0M996.5 1009.5h0M996.5 1007.5h0M997.5 1007.5h0M997.5 1008.5h0M997.5 1009.5h0M997.5 1006.5h0M998.5 1008.5h0M998.5 1007.5h0M999.5 1007.5h0M999.5 1008.5h0M1000.5 1008.5h0M1000.5 1007.5h0M1000.5 1009.5h0M1001.5 1008.5h0M1001.5 1007.5h0M1001.5 1009.5h0M1002.5 1008.5h0M1002.5 1007.5h0M1003.5 1009.5h0M1003.5 1008.5h0M1003.5 1007.5h0M1004.5 1008.5h0M1004.5 1007.5h0M1005.5 1008.5h0M1005.5 1006.5h0M1006.5 1008.5h0M1006.5 1007.5h0M1007.5 1008.5h0M1007.5 1009.5h0M1007.5 1007.5h0M1008.5 1008.5h0M1008.5 1007.5h0M1009.5 1008.5h0M1009.5 1009.5h0M1009.5 1007.5h0M1010.5 1008.5h0M1010.5 1007.5h0M1011.5 1007.5h0M1011.5 1008.5h0M1011.5 1009.5h0M1012.5 1008.5h0M1012.5 1007.5h0M1013.5 1008.5h0M1013.5 1009.5h0M1013.5 1007.5h0M1014.5 1008.5h0M1014.5 1007.5h0M1014.5 1009.5h0M1015.5 1007.5h0M1015.5 1008.5h0M1015.5 1009.5h0M1016.5 1008.5h0M1016.5 1007.5h0M1017.5 1007.5h0M1017.5 1008.5h0M1018.5 1007.5h0M1018.5 1008.5h0M1018.5 1006.5h0M1018.5 1009.5h0M1019.5 1008.5h0M1019.5 1009.5h0M1020.5 1008.5h0M1020.5 1007.5h0M1021.5 1007.5h0M1021.5 1008.5h0M1021.5 1009.5h0M1021.5 1006.5h0M1022.5 1008.5h0M1022.5 1007.5h0M1023.5 1008.5h0M1023.5 1007.5h0M1023.5 1009.5h0M1024.5 1008.5h0M1025.5 1008.5h0M1025.5 1007.5h0M1025.5 1009.5h0M1026.5 1008.5h0M1026.5 1009.5h0M1027.5 1008.5h0M1027.5 1007.5h0M1028.5 1008.5h0M1028.5 1009.5h0M1029.5 1009.5h0M1029.5 1008.5h0M1029.5 1007.5h0M1030.5 1008.5h0M1030.5 1007.5h0M1030.5 1009.5h0M1031.5 1007.5h0M1031.5 1008.5h0M1032.5 1008.5h0M1032.5 1007.5h0M1032.5 1009.5h0M1033.5 1008.5h0M1033.5 1009.5h0M1033.5 1007.5h0M1034.5 1008.5h0M1034.5 1007.5h0M1035.5 1008.5h0M1035.5 1009.5h0M1035.5 1007.5h0M1036.5 1008.5h0M1036.5 1009.5h0M1036.5 1007.5h0M1037.5 1008.5h0M1037.5 1007.5h0M1037.5 1009.5h0M1038.5 1008.5h0M1038.5 1007.5h0M1039.5 1008.5h0M1039.5 1007.5h0M1039.5 1009.5h0M1040.5 1008.5h0M1040.5 1007.5h0M1041.5 1008.5h0M1041.5 1009.5h0M1042.5 1007.5h0M1042.5 1008.5h0M1042.5 1006.5h0M1042.5 1009.5h0M1043.5 1007.5h0M1043.5 1008.5h0M1043.5 1009.5h0M1044.5 1008.5h0M1044.5 1009.5h0M1044.5 1007.5h0M1045.5 1009.5h0M1045.5 1006.5h0M1045.5 1008.5h0M1045.5 1007.5h0M1046.5 1007.5h0M1046.5 1008.5h0M1047.5 1009.5h0M1047.5 1008.5h0M1047.5 1007.5h0M1048.5 1008.5h0M1048.5 1007.5h0M1049.5 1009.5h0M1049.5 1008.5h0M1049.5 1007.5h0M1050.5 1008.5h0M1050.5 1009.5h0M1050.5 1007.5h0M1050.5 1006.5h0M1051.5 1008.5h0M1051.5 1007.5h0M1051.5 1009.5h0M1052.5 1009.5h0M1052.5 1006.5h0M1052.5 1008.5h0M1052.5 1007.5h0M1053.5 1009.5h0M1053.5 1008.5h0M1053.5 1007.5h0M1054.5 1008.5h0M1054.5 1009.5h0M1054.5 1007.5h0M1055.5 1007.5h0M1055.5 1009.5h0M1055.5 1008.5h0M1056.5 1008.5h0M1056.5 1009.5h0M1056.5 1007.5h0M1057.5 1008.5h0M1057.5 1009.5h0M1058.5 1008.5h0M1058.5 1007.5h0M1059.5 1009.5h0M1059.5 1008.5h0M1059.5 1007.5h0M1060.5 1008.5h0M1060.5 1009.5h0M1061.5 1007.5h0M1061.5 1008.5h0M1062.5 1007.5h0M1062.5 1008.5h0M1062.5 1006.5h0M1063.5 1009.5h0M1063.5 1008.5h0M1063.5 1007.5h0M1064.5 1008.5h0M1064.5 1007.5h0M1064.5 1009.5h0M1065.5 1008.5h0M1065.5 1009.5h0M1066.5 1008.5h0M1066.5 1006.5h0M1066.5 1007.5h0M1067.5 1008.5h0M1067.5 1009.5h0M1067.5 1007.5h0M1068.5 1008.5h0M1068.5 1007.5h0M1068.5 1009.5h0M1069.5 1008.5h0M1069.5 1006.5h0M1069.5 1009.5h0M1069.5 1007.5h0M1070.5 1008.5h0M1070.5 1007.5h0M1070.5 1009.5h0M1071.5 1007.5h0M1071.5 1009.5h0M1071.5 1008.5h0M1072.5 1007.5h0M1072.5 1009.5h0M1072.5 1008.5h0M1073.5 1008.5h0M1073.5 1007.5h0M1074.5 1007.5h0M1074.5 1008.5h0M1074.5 1009.5h0M1075.5 1008.5h0M1075.5 1007.5h0M1075.5 1009.5h0M1076.5 1008.5h0M1076.5 1009.5h0M1077.5 1007.5h0M1077.5 1009.5h0M1077.5 1008.5h0M1078.5 1009.5h0M1078.5 1008.5h0M1078.5 1007.5h0M1079.5 1008.5h0M1080.5 1008.5h0M1080.5 1007.5h0M1080.5 1009.5h0M1081.5 1007.5h0M1081.5 1008.5h0M1081.5 1009.5h0M1082.5 1008.5h0M1082.5 1009.5h0M1083.5 1007.5h0M1083.5 1008.5h0M1083.5 1006.5h0M1083.5 1009.5h0M1084.5 1008.5h0M1084.5 1007.5h0M1084.5 1009.5h0M1085.5 1008.5h0M1085.5 1007.5h0M1086.5 1008.5h0M1086.5 1007.5h0M1086.5 1009.5h0M1087.5 1007.5h0M1087.5 1009.5h0M1087.5 1008.5h0M1088.5 1008.5h0M1088.5 1009.5h0M1088.5 1007.5h0M1089.5 1007.5h0M1089.5 1009.5h0M1089.5 1008.5h0M1090.5 1008.5h0M1091.5 1008.5h0M1091.5 1007.5h0M1092.5 1008.5h0M1092.5 1009.5h0M1092.5 1007.5h0M1093.5 1008.5h0M1093.5 1009.5h0M1094.5 1008.5h0M1094.5 1009.5h0M1095.5 1008.5h0M1095.5 1007.5h0M1095.5 1009.5h0M1096.5 1009.5h0M1096.5 1007.5h0M1096.5 1008.5h0M1097.5 1008.5h0M1097.5 1007.5h0M1098.5 1007.5h0M1098.5 1009.5h0M1098.5 1008.5h0M1099.5 1009.5h0M1099.5 1008.5h0M1099.5 1007.5h0M1100.5 1009.5h0M1100.5 1008.5h0M1100.5 1006.5h0M1101.5 1008.5h0M1102.5 1007.5h0M1102.5 1008.5h0M1102.5 1009.5h0M1103.5 1008.5h0M1103.5 1009.5h0M1104.5 1008.5h0M1104.5 1007.5h0M1105.5 1008.5h0M1105.5 1006.5h0M1105.5 1007.5h0M1106.5 1007.5h0M1106.5 1008.5h0M1107.5 1009.5h0M1107.5 1008.5h0M1107.5 1007.5h0M1108.5 1008.5h0M1108.5 1007.5h0M1108.5 1009.5h0M1109.5 1007.5h0M1109.5 1008.5h0M1109.5 1009.5h0M1110.5 1008.5h0M1110.5 1007.5h0M1111.5 1008.5h0M1111.5 1006.5h0M1111.5 1007.5h0M1112.5 1008.5h0M1112.5 1007.5h0M1113.5 1008.5h0M1113.5 1007.5h0M1113.5 1009.5h0M1113.5 1006.5h0M1114.5 1008.5h0M1114.5 1009.5h0M1114.5 1007.5h0M1115.5 1008.5h0M1115.5 1007.5h0M1115.5 1009.5h0M1116.5 1008.5h0M1116.5 1007.5h0M1117.5 1009.5h0M1117.5 1008.5h0M1118.5 1008.5h0M1118.5 1007.5h0M1119.5 1007.5h0M1119.5 1008.5h0M1119.5 1009.5h0M1120.5 1009.5h0M1120.5 1007.5h0M1120.5 1008.5h0M1120.5 1006.5h0M1121.5 1007.5h0M1121.5 1008.5h0M1121.5 1006.5h0M1122.5 1007.5h0M1122.5 1008.5h0M1122.5 1009.5h0M1123.5 1006.5h0M1123.5 1007.5h0M1123.5 1009.5h0M1123.5 1008.5h0M1124.5 1008.5h0M1124.5 1007.5h0M1124.5 1009.5h0M1125.5 1008.5h0M1125.5 1009.5h0M1126.5 1008.5h0M1126.5 1009.5h0M1126.5 1006.5h0M1127.5 1008.5h0M1127.5 1007.5h0M1128.5 1009.5h0M1128.5 1007.5h0M1128.5 1008.5h0M1129.5 1008.5h0M1129.5 1007.5h0M1129.5 1009.5h0M1130.5 1007.5h0M1130.5 1009.5h0M1130.5 1008.5h0M1131.5 1008.5h0M1131.5 1009.5h0M1132.5 1009.5h0M1132.5 1008.5h0M1133.5 1007.5h0M1133.5 1008.5h0M1134.5 1008.5h0M1134.5 1007.5h0M1134.5 1009.5h0M1135.5 1009.5h0M1135.5 1008.5h0M1135.5 1007.5h0M1136.5 1007.5h0M1136.5 1008.5h0M1137.5 1007.5h0M1137.5 1009.5h0M1137.5 1008.5h0M1138.5 1007.5h0M1138.5 1008.5h0M1139.5 1008.5h0M1139.5 1007.5h0M1139.5 1009.5h0M1140.5 1007.5h0M1140.5 1006.5h0M1140.5 1009.5h0M1140.5 1008.5h0M1141.5 1008.5h0M1141.5 1009.5h0M1141.5 1007.5h0M1142.5 1008.5h0M1142.5 1007.5h0M1143.5 1007.5h0M1143.5 1008.5h0M1144.5 1008.5h0M1144.5 1007.5h0M1145.5 1008.5h0M1145.5 1007.5h0M1145.5 1009.5h0M1146.5 1008.5h0M1147.5 1007.5h0M1147.5 1008.5h0M1147.5 1009.5h0M1148.5 1007.5h0M1148.5 1008.5h0M1149.5 1008.5h0M1149.5 1009.5h0M1149.5 1007.5h0M1150.5 1007.5h0M1150.5 1008.5h0M1151.5 1009.5h0M1151.5 1008.5h0M1151.5 1007.5h0M1152.5 1008.5h0M1152.5 1007.5h0M1152.5 1009.5h0M1153.5 1008.5h0M1153.5 1009.5h0M1153.5 1007.5h0M1154.5 1009.5h0M1154.5 1008.5h0M1154.5 1007.5h0M1154.5 1006.5h0M1155.5 1008.5h0M1155.5 1007.5h0M1156.5 1008.5h0M1156.5 1009.5h0M1156.5 1007.5h0M1157.5 1008.5h0M1157.5 1009.5h0M1158.5 1007.5h0M1158.5 1008.5h0M1158.5 1009.5h0M1159.5 1007.5h0M1159.5 1009.5h0M1159.5 1008.5h0M1160.5 1007.5h0M1160.5 1008.5h0M1161.5 1007.5h0M1161.5 1009.5h0M1161.5 1008.5h0M1162.5 1007.5h0M1162.5 1008.5h0M1162.5 1009.5h0M1163.5 1008.5h0M1163.5 1007.5h0M1163.5 1009.5h0M1164.5 1009.5h0M1164.5 1008.5h0M1164.5 1007.5h0M1165.5 1008.5h0M1165.5 1009.5h0M1166.5 1008.5h0M1166.5 1007.5h0M1167.5 1008.5h0M1167.5 1009.5h0M1168.5 1008.5h0M1168.5 1007.5h0M1168.5 1009.5h0M1169.5 1008.5h0M1169.5 1009.5h0M1170.5 1008.5h0M1170.5 1009.5h0M1171.5 1008.5h0M1171.5 1007.5h0M1171.5 1009.5h0M1172.5 1007.5h0M1172.5 1008.5h0M1172.5 1009.5h0M1173.5 1008.5h0M1173.5 1009.5h0M1174.5 1007.5h0M1174.5 1008.5h0M1174.5 1009.5h0M1175.5 1008.5h0M1175.5 1007.5h0M1175.5 1009.5h0M1176.5 1008.5h0M1176.5 1006.5h0M1176.5 1007.5h0M1177.5 1008.5h0M1177.5 1007.5h0M1177.5 1009.5h0M1178.5 1008.5h0M1178.5 1007.5h0M1179.5 1008.5h0M1179.5 1009.5h0M1179.5 1007.5h0M1180.5 1008.5h0M1180.5 1007.5h0M1181.5 1008.5h0M1181.5 1006.5h0M1181.5 1009.5h0M1182.5 1008.5h0M1182.5 1007.5h0M1182.5 1009.5h0M1183.5 1008.5h0M1183.5 1007.5h0M1183.5 1006.5h0M1184.5 1008.5h0M1184.5 1007.5h0M1185.5 1008.5h0M1185.5 1009.5h0M1186.5 1008.5h0M1186.5 1007.5h0M1187.5 1007.5h0M1187.5 1009.5h0M1187.5 1008.5h0M1188.5 1008.5h0M1188.5 1007.5h0M1189.5 1008.5h0M1189.5 1009.5h0M1189.5 1007.5h0M1190.5 1007.5h0M1190.5 1008.5h0M1190.5 1009.5h0M1191.5 1008.5h0M1191.5 1007.5h0M1191.5 1009.5h0M1192.5 1008.5h0M1192.5 1007.5h0M1193.5 1008.5h0M1193.5 1009.5h0M1193.5 1007.5h0M1194.5 1008.5h0M1195.5 1008.5h0M1195.5 1007.5h0M1196.5 1008.5h0M1196.5 1009.5h0M1196.5 1007.5h0M1197.5 1008.5h0M1197.5 1007.5h0M1197.5 1009.5h0M1198.5 1007.5h0M1198.5 1008.5h0M1199.5 1008.5h0M1200.5 1008.5h0M1200.5 1009.5h0M1201.5 1008.5h0M1201.5 1007.5h0M1201.5 1009.5h0M1202.5 1008.5h0M1202.5 1009.5h0M1203.5 1008.5h0M1203.5 1007.5h0M1204.5 1008.5h0M1204.5 1007.5h0M1205.5 1008.5h0M1205.5 1009.5h0M1205.5 1007.5h0M1206.5 1009.5h0M1206.5 1008.5h0M1207.5 1008.5h0M1207.5 1007.5h0M1208.5 1007.5h0M1208.5 1006.5h0M1208.5 1008.5h0M1209.5 1008.5h0M1209.5 1007.5h0M1210.5 1007.5h0M1210.5 1008.5h0M1210.5 1006.5h0M1211.5 1007.5h0M1211.5 1008.5h0M1212.5 1007.5h0M1212.5 1006.5h0M1212.5 1008.5h0M1213.5 1007.5h0M1213.5 1005.5h0M1213.5 1006.5h0M1214.5 1006.5h0M1214.5 1005.5h0M1214.5 1004.5h0M1215.5 1004.5h0M1215.5 1006.5h0M1215.5 1005.5h0M1216.5 1004.5h0M1216.5 1005.5h0M1216.5 1006.5h0M1217.5 1006.5h0M1217.5 1005.5h0M1217.5 1007.5h0M1218.5 1007.5h0M1218.5 1006.5h0M1218.5 1008.5h0M1219.5 1007.5h0M1219.5 1008.5h0M1220.5 1008.5h0M1220.5 1007.5h0M1220.5 1006.5h0M1221.5 1008.5h0M1221.5 1006.5h0M1221.5 1009.5h0M1222.5 1008.5h0M1222.5 1007.5h0M1222.5 1006.5h0M1223.5 1008.5h0M1223.5 1007.5h0M1223.5 1006.5h0M1224.5 1008.5h0M1224.5 1007.5h0M1224.5 1006.5h0M1225.5 1007.5h0M1225.5 1008.5h0M1225.5 1006.5h0M1226.5 1006.5h0M1226.5 1007.5h0M1227.5 1005.5h0M1227.5 1007.5h0M1227.5 1006.5h0M1227.5 1008.5h0M1228.5 1008.5h0M1228.5 1006.5h0M1228.5 1007.5h0M1229.5 1008.5h0M1229.5 1007.5h0M1230.5 1007.5h0M1230.5 1006.5h0M1230.5 1008.5h0M1230.5 1009.5h0M1231.5 1008.5h0M1231.5 1007.5h0M1232.5 1006.5h0M1232.5 1007.5h0M1232.5 1008.5h0M1233.5 1006.5h0M1233.5 1007.5h0M1233.5 1008.5h0M1234.5 1007.5h0M1234.5 1006.5h0M1235.5 1007.5h0M1235.5 1006.5h0M1235.5 1008.5h0M1235.5 1005.5h0M1236.5 1006.5h0M1236.5 1008.5h0M1236.5 1007.5h0M1237.5 1006.5h0M1237.5 1007.5h0M1237.5 1008.5h0M1238.5 1008.5h0M1238.5 1007.5h0M1238.5 1009.5h0M1239.5 1008.5h0M1239.5 1007.5h0M1240.5 1008.5h0M1240.5 1006.5h0M1240.5 1007.5h0M1241.5 1006.5h0M1241.5 1008.5h0M1241.5 1007.5h0M1242.5 1007.5h0M1242.5 1006.5h0M1243.5 1007.5h0M1243.5 1006.5h0M1243.5 1005.5h0M1243.5 1008.5h0M1244.5 1007.5h0M1244.5 1008.5h0M1245.5 1008.5h0M1245.5 1009.5h0M1245.5 1007.5h0M1245.5 1006.5h0M1246.5 1007.5h0M1246.5 1009.5h0M1246.5 1008.5h0M1247.5 1007.5h0M1247.5 1008.5h0M1248.5 1007.5h0M1248.5 1006.5h0M1249.5 1006.5h0M1249.5 1007.5h0M1250.5 1007.5h0M1250.5 1006.5h0M1250.5 1005.5h0M1251.5 1007.5h0M1251.5 1006.5h0M1252.5 1007.5h0M1252.5 1005.5h0M1252.5 1008.5h0M1253.5 1007.5h0M1253.5 1008.5h0M1253.5 1006.5h0M1253.5 1005.5h0M1254.5 1005.5h0M1254.5 1007.5h0M1254.5 1006.5h0M1255.5 1005.5h0M1255.5 1006.5h0M1255.5 1007.5h0M1256.5 1005.5h0M1256.5 1007.5h0M1256.5 1006.5h0M1257.5 1008.5h0M1257.5 1005.5h0M1257.5 1007.5h0M1258.5 1007.5h0M1258.5 1008.5h0M1259.5 1008.5h0M1259.5 1007.5h0M1259.5 1006.5h0M1260.5 1007.5h0M1260.5 1008.5h0M1260.5 1006.5h0M1261.5 1008.5h0M1261.5 1007.5h0M1262.5 1008.5h0M1262.5 1007.5h0M1263.5 1008.5h0M1263.5 1007.5h0M1264.5 1006.5h0M1264.5 1008.5h0M1264.5 1007.5h0M1265.5 1008.5h0M1265.5 1007.5h0M1265.5 1006.5h0M1266.5 1008.5h0M1266.5 1007.5h0M1267.5 1007.5h0M1267.5 1008.5h0M1268.5 1007.5h0M1268.5 1008.5h0M1269.5 1008.5h0M1269.5 1006.5h0M1269.5 1007.5h0M1270.5 1008.5h0M1270.5 1007.5h0M1270.5 1006.5h0M1271.5 1008.5h0M1271.5 1007.5h0M1272.5 1008.5h0M1272.5 1007.5h0M1272.5 1006.5h0M1273.5 1007.5h0M1274.5 1008.5h0M1274.5 1007.5h0M1274.5 1006.5h0M1275.5 1008.5h0M1275.5 1007.5h0M1275.5 1006.5h0M1276.5 1007.5h0M1276.5 1008.5h0M1277.5 1008.5h0M1277.5 1007.5h0M1277.5 1009.5h0M1278.5 1008.5h0M1278.5 1007.5h0M1278.5 1006.5h0M1279.5 1007.5h0M1279.5 1006.5h0M1279.5 1008.5h0M1280.5 1008.5h0M1280.5 1005.5h0M1280.5 1007.5h0M1280.5 1006.5h0M1281.5 1007.5h0M1281.5 1008.5h0M1282.5 1007.5h0M1282.5 1008.5h0M1283.5 1008.5h0M1283.5 1007.5h0M1283.5 1009.5h0M1284.5 1008.5h0M1284.5 1007.5h0M1284.5 1006.5h0M1285.5 1008.5h0M1285.5 1007.5h0M1285.5 1006.5h0M1286.5 1008.5h0M1286.5 1009.5h0M1286.5 1007.5h0M1287.5 1008.5h0M1287.5 1007.5h0M1287.5 1006.5h0M1288.5 1007.5h0M1288.5 1008.5h0M1288.5 1009.5h0M1289.5 1007.5h0M1289.5 1006.5h0M1289.5 1008.5h0M1290.5 1007.5h0M1290.5 1008.5h0M1290.5 1006.5h0M1291.5 1007.5h0M1291.5 1008.5h0M1292.5 1008.5h0M1292.5 1006.5h0M1292.5 1007.5h0M1292.5 1009.5h0M1293.5 1006.5h0M1293.5 1008.5h0M1293.5 1007.5h0M1294.5 1007.5h0M1294.5 1008.5h0M1295.5 1007.5h0M1295.5 1008.5h0M1295.5 1009.5h0M1296.5 1008.5h0M1296.5 1007.5h0M1296.5 1006.5h0M1297.5 1008.5h0M1297.5 1007.5h0M1297.5 1006.5h0M1298.5 1008.5h0M1298.5 1007.5h0M1299.5 1007.5h0M1299.5 1008.5h0M1299.5 1006.5h0M1300.5 1008.5h0M1300.5 1007.5h0M1300.5 1006.5h0M1301.5 1008.5h0M1301.5 1007.5h0M1302.5 1007.5h0M1302.5 1008.5h0" stroke="#000" stroke-width="2.5" stroke-linecap="round" fill="none"/><path d="M584.5 1003.5h0" stroke="#000" stroke-width="2.6" stroke-linecap="round"/><path d="M1134.5 980.5h0" stroke="#f00" stroke-width="2.6" stroke-linecap="round"/><path d="M508 955.2l2.2 3.8h-4.4zM584.4 955.2l2.2 3.8h-4.4zM1134.5 955.2l2.2 3.8h-4.4zM1284.5 955.2l2.2 3.8h-4.4zM1285.5 955.2l2.2 3.8h-4.4zM1286.5 955.2l2.2 3.8h-4.4zM1287.5 955.2l2.2 3.8h-4.4zM1288.5 955.2l2.2 3.8h-4.4zM1289.5 955.2l2.2 3.8h-4.4zM1290.5 955.2l2.2 3.8h-4.4z" fill="#f00"/><path d="M162.3 1010.6V954.5" stroke="#800080" stroke-width="2.08" stroke-dasharray="2.083 3.438" fill="none"/><path d="M892.93 1010.6V954.5" stroke="#800080" stroke-width="2.08" stroke-dasharray="2.083 3.438" fill="none"/><path d="M1207.05 1010.6V954.5" stroke="#800080" stroke-width="2.08" stroke-dasharray="2.083 3.438" fill="none"/><path d="M1302.93 1010.6V954.5" stroke="#800080" stroke-width="2.08" stroke-dasharray="2.083 3.438" fill="none"/>
</g>
<rect x="105.5" y="35.5" width="1380.0" height="286.0" fill="none" stroke="#000" stroke-width="1.11"/>
<rect x="105.5" y="380.5" width="1380.0" height="286.0" fill="none" stroke="#000" stroke-width="1.11"/>
<rect x="105.5" y="725.5" width="1380.0" height="229.0" fill="none" stroke="#000" stroke-width="1.11"/>
<rect x="105.5" y="954.5" width="1380.0" height="57.0" fill="none" stroke="#000" stroke-width="1.11"/>
<path d="M162.5 321.5v4.86M406.5 321.5v4.86M649.5 321.5v4.86M893.5 321.5v4.86M1137.5 321.5v4.86M1381.5 321.5v4.86" stroke="#000" stroke-width="1.11" fill="none"/>
<text x="162.3" y="341.9" font-size="13.89" text-anchor="middle" textLength="8.84" lengthAdjust="spacingAndGlyphs">0</text>
<text x="406.13" y="341.9" font-size="13.89" text-anchor="middle" textLength="35.35" lengthAdjust="spacingAndGlyphs">2000</text>
<text x="649.96" y="341.9" font-size="13.89" text-anchor="middle" textLength="35.35" lengthAdjust="spacingAndGlyphs">4000</text>
<text x="893.78" y="341.9" font-size="13.89" text-anchor="middle" textLength="35.35" lengthAdjust="spacingAndGlyphs">6000</text>
<text x="1137.61" y="341.9" font-size="13.89" text-anchor="middle" textLength="35.35" lengthAdjust="spacingAndGlyphs">8000</text>
<text x="1381.44" y="341.9" font-size="13.89" text-anchor="middle" textLength="44.19" lengthAdjust="spacingAndGlyphs">10000</text>
<path d="M162.5 666.5v4.86M406.5 666.5v4.86M649.5 666.5v4.86M893.5 666.5v4.86M1137.5 666.5v4.86M1381.5 666.5v4.86" stroke="#000" stroke-width="1.11" fill="none"/>
<text x="162.3" y="686.9" font-size="13.89" text-anchor="middle" textLength="8.84" lengthAdjust="spacingAndGlyphs">0</text>
<text x="406.13" y="686.9" font-size="13.89" text-anchor="middle" textLength="35.35" lengthAdjust="spacingAndGlyphs">2000</text>
<text x="649.96" y="686.9" font-size="13.89" text-anchor="middle" textLength="35.35" lengthAdjust="spacingAndGlyphs">4000</text>
<text x="893.78" y="686.9" font-size="13.89" text-anchor="middle" textLength="35.35" lengthAdjust="spacingAndGlyphs">6000</text>
<text x="1137.61" y="686.9" font-size="13.89" text-anchor="middle" textLength="35.35" lengthAdjust="spacingAndGlyphs">8000</text>
<text x="1381.44" y="686.9" font-size="13.89" text-anchor="middle" textLength="44.19" lengthAdjust="spacingAndGlyphs">10000</text>
<path d="M162.5 1011.5v4.86M406.5 1011.5v4.86M649.5 1011.5v4.86M893.5 1011.5v4.86M1137.5 1011.5v4.86M1381.5 1011.5v4.86" stroke="#000" stroke-width="1.11" fill="none"/>
<text x="162.3" y="1031.9" font-size="13.89" text-anchor="middle" textLength="8.84" lengthAdjust="spacingAndGlyphs">0</text>
<text x="406.13" y="1031.9" font-size="13.89" text-anchor="middle" textLength="35.35" lengthAdjust="spacingAndGlyphs">2000</text>
<text x="649.96" y="1031.9" font-size="13.89" text-anchor="middle" textLength="35.35" lengthAdjust="spacingAndGlyphs">4000</text>
<text x="893.78" y="1031.9" font-size="13.89" text-anchor="middle" textLength="35.35" lengthAdjust="spacingAndGlyphs">6000</text>
<text x="1137.61" y="1031.9" font-size="13.89" text-anchor="middle" textLength="35.35" lengthAdjust="spacingAndGlyphs">8000</text>
<text x="1381.44" y="1031.9" font-size="13.89" text-anchor="middle" textLength="44.19" lengthAdjust="spacingAndGlyphs">10000</text>
<path d="M105.5 46.5h-4.86M105.5 81.5h-4.86M105.5 116.5h-4.86M105.5 151.5h-4.86M105.5 186.5h-4.86M105.5 221.5h-4.86M105.5 256.5h-4.86M105.5 291.5h-4.86" stroke="#000" stroke-width="1.11" fill="none"/>
<text x="95.6" y="51.55" font-size="13.89" text-anchor="end" textLength="39.76" lengthAdjust="spacingAndGlyphs">7.650</text>
<text x="95.6" y="86.5" font-size="13.89" text-anchor="end" textLength="39.76" lengthAdjust="spacingAndGlyphs">7.625</text>
<text x="95.6" y="121.45" font-size="13.89" text-anchor="end" textLength="39.76" lengthAdjust="spacingAndGlyphs">7.600</text>
<text x="95.6" y="156.4" font-size="13.89" text-anchor="end" textLength="39.76" lengthAdjust="spacingAndGlyphs">7.575</text>
<text x="95.6" y="191.35" font-size="13.89" text-anchor="end" textLength="39.76" lengthAdjust="spacingAndGlyphs">7.550</text>
<text x="95.6" y="226.3" font-size="13.89" text-anchor="end" textLength="39.76" lengthAdjust="spacingAndGlyphs">7.525</text>
<text x="95.6" y="261.25" font-size="13.89" text-anchor="end" textLength="39.76" lengthAdjust="spacingAndGlyphs">7.500</text>
<text x="95.6" y="296.2" font-size="13.89" text-anchor="end" textLength="39.76" lengthAdjust="spacingAndGlyphs">7.475</text>
<path d="M105.5 411.5h-4.86M105.5 455.5h-4.86M105.5 498.5h-4.86M105.5 542.5h-4.86M105.5 585.5h-4.86M105.5 628.5h-4.86" stroke="#000" stroke-width="1.11" fill="none"/>
<text x="95.6" y="416.95" font-size="13.89" text-anchor="end" textLength="30.93" lengthAdjust="spacingAndGlyphs">7.63</text>
<text x="95.6" y="460.35" font-size="13.89" text-anchor="end" textLength="30.93" lengthAdjust="spacingAndGlyphs">7.62</text>
<text x="95.6" y="503.75" font-size="13.89" text-anchor="end" textLength="30.93" lengthAdjust="spacingAndGlyphs">7.61</text>
<text x="95.6" y="547.15" font-size="13.89" text-anchor="end" textLength="30.93" lengthAdjust="spacingAndGlyphs">7.60</text>
<text x="95.6" y="590.55" font-size="13.89" text-anchor="end" textLength="30.93" lengthAdjust="spacingAndGlyphs">7.59</text>
<text x="95.6" y="633.95" font-size="13.89" text-anchor="end" textLength="30.93" lengthAdjust="spacingAndGlyphs">7.58</text>
<path d="M105.5 758.5h-4.86M105.5 791.5h-4.86M105.5 823.5h-4.86M105.5 856.5h-4.86M105.5 889.5h-4.86M105.5 921.5h-4.86" stroke="#000" stroke-width="1.11" fill="none"/>
<text x="95.6" y="763.55" font-size="13.89" text-anchor="end" textLength="79.24" lengthAdjust="spacingAndGlyphs">not Kalman</text>
<text x="95.6" y="796.55" font-size="13.89" text-anchor="end" textLength="62.51" lengthAdjust="spacingAndGlyphs">not track</text>
<text x="95.6" y="828.55" font-size="13.89" text-anchor="end" textLength="68.89" lengthAdjust="spacingAndGlyphs">Sat. pixel.</text>
<text x="95.6" y="861.55" font-size="13.89" text-anchor="end" textLength="57.68" lengthAdjust="spacingAndGlyphs">Ion. rad.</text>
<text x="95.6" y="894.55" font-size="13.89" text-anchor="end" textLength="43.83" lengthAdjust="spacingAndGlyphs">dr &gt; 5</text>
<text x="95.6" y="926.55" font-size="13.89" text-anchor="end" textLength="80.65" lengthAdjust="spacingAndGlyphs">OBS not OK</text>
<path d="M105.5 1009.5h-4.86M105.5 983.5h-4.86M105.5 957.5h-4.86M105.5 996.5h-2.78M105.5 970.5h-2.78" stroke="#000" stroke-width="1.11" fill="none"/>
<text x="95.6" y="1014.45" font-size="13.89" text-anchor="end" textLength="8.84" lengthAdjust="spacingAndGlyphs">0</text>
<text x="95.6" y="988.45" font-size="13.89" text-anchor="end" textLength="8.84" lengthAdjust="spacingAndGlyphs">5</text>
<text x="95.6" y="962.45" font-size="13.89" text-anchor="end" textLength="17.67" lengthAdjust="spacingAndGlyphs">10</text>
<text x="0" y="0" font-size="13.89" text-anchor="middle" textLength="14.53" lengthAdjust="spacingAndGlyphs" transform="translate(68.7 983.5) rotate(-90)">dr</text>
<rect x="1361.4" y="42.4" width="117" height="26.6" rx="2.8" ry="2.8" fill="rgba(255,255,255,0.8)" stroke="#d6d6d6" stroke-width="1.1"/><path d="M1367 53.9H1395" stroke="#008000" stroke-width="2.08" stroke-linecap="square"/><text x="1406.7" y="58.8" font-size="13.89" textLength="30.86" lengthAdjust="spacingAndGlyphs">mag</text><text x="1437.4" y="60.8" font-size="9.72" font-style="italic" textLength="33.79" lengthAdjust="spacingAndGlyphs">AGASC</text><rect x="1348.5" y="247.5" width="129.9" height="67" rx="2.8" ry="2.8" fill="rgba(255,255,255,0.8)" stroke="#d6d6d6" stroke-width="1.1"/><path d="M1367.5 260.5h0" stroke="#f00" stroke-width="4" stroke-linecap="round"/><path d="M1367.5 281.5h0" stroke="#ffa500" stroke-width="4" stroke-linecap="round"/><path d="M1367.5 302.5h0" stroke="#000" stroke-width="4" stroke-linecap="round"/><text x="1393.2" y="263.8" font-size="13.89" textLength="47.20" lengthAdjust="spacingAndGlyphs">not OK</text><text x="1393.2" y="284.7" font-size="13.89" textLength="80.07" lengthAdjust="spacingAndGlyphs">Highlighted</text><text x="1393.2" y="305.7" font-size="13.89" textLength="20.04" lengthAdjust="spacingAndGlyphs">OK</text><rect x="1365.5" y="387.4" width="112.9" height="47.9" rx="2.8" ry="2.8" fill="rgba(255,255,255,0.8)" stroke="#d6d6d6" stroke-width="1.1"/><path d="M1370.5 399.4H1398.5" stroke="#ffa500" stroke-width="2.78" stroke-linecap="square"/><path d="M1370.5 421.9H1398.5" stroke="#f00" stroke-width="2.08" stroke-linecap="square"/><text x="1409.7" y="403.7" font-size="13.89" textLength="30.86" lengthAdjust="spacingAndGlyphs">mag</text><text x="1440.5" y="405.7" font-size="9.72" font-style="italic" textLength="30.84" lengthAdjust="spacingAndGlyphs">OBSID</text><text x="1408.7" y="426.6" font-size="13.89" textLength="30.86" lengthAdjust="spacingAndGlyphs">mag</text><rect x="1348.5" y="613.5" width="129.9" height="46" rx="2.8" ry="2.8" fill="rgba(255,255,255,0.8)" stroke="#d6d6d6" stroke-width="1.1"/><path d="M1367.5 626.5h0" stroke="#ffa500" stroke-width="4" stroke-linecap="round"/><path d="M1367.5 647.5h0" stroke="#000" stroke-width="4" stroke-linecap="round"/><text x="1393.2" y="629.9" font-size="13.89" textLength="80.07" lengthAdjust="spacingAndGlyphs">Highlighted</text><text x="1393.2" y="650.8" font-size="13.89" textLength="20.04" lengthAdjust="spacingAndGlyphs">OK</text>
</svg></body></html>
